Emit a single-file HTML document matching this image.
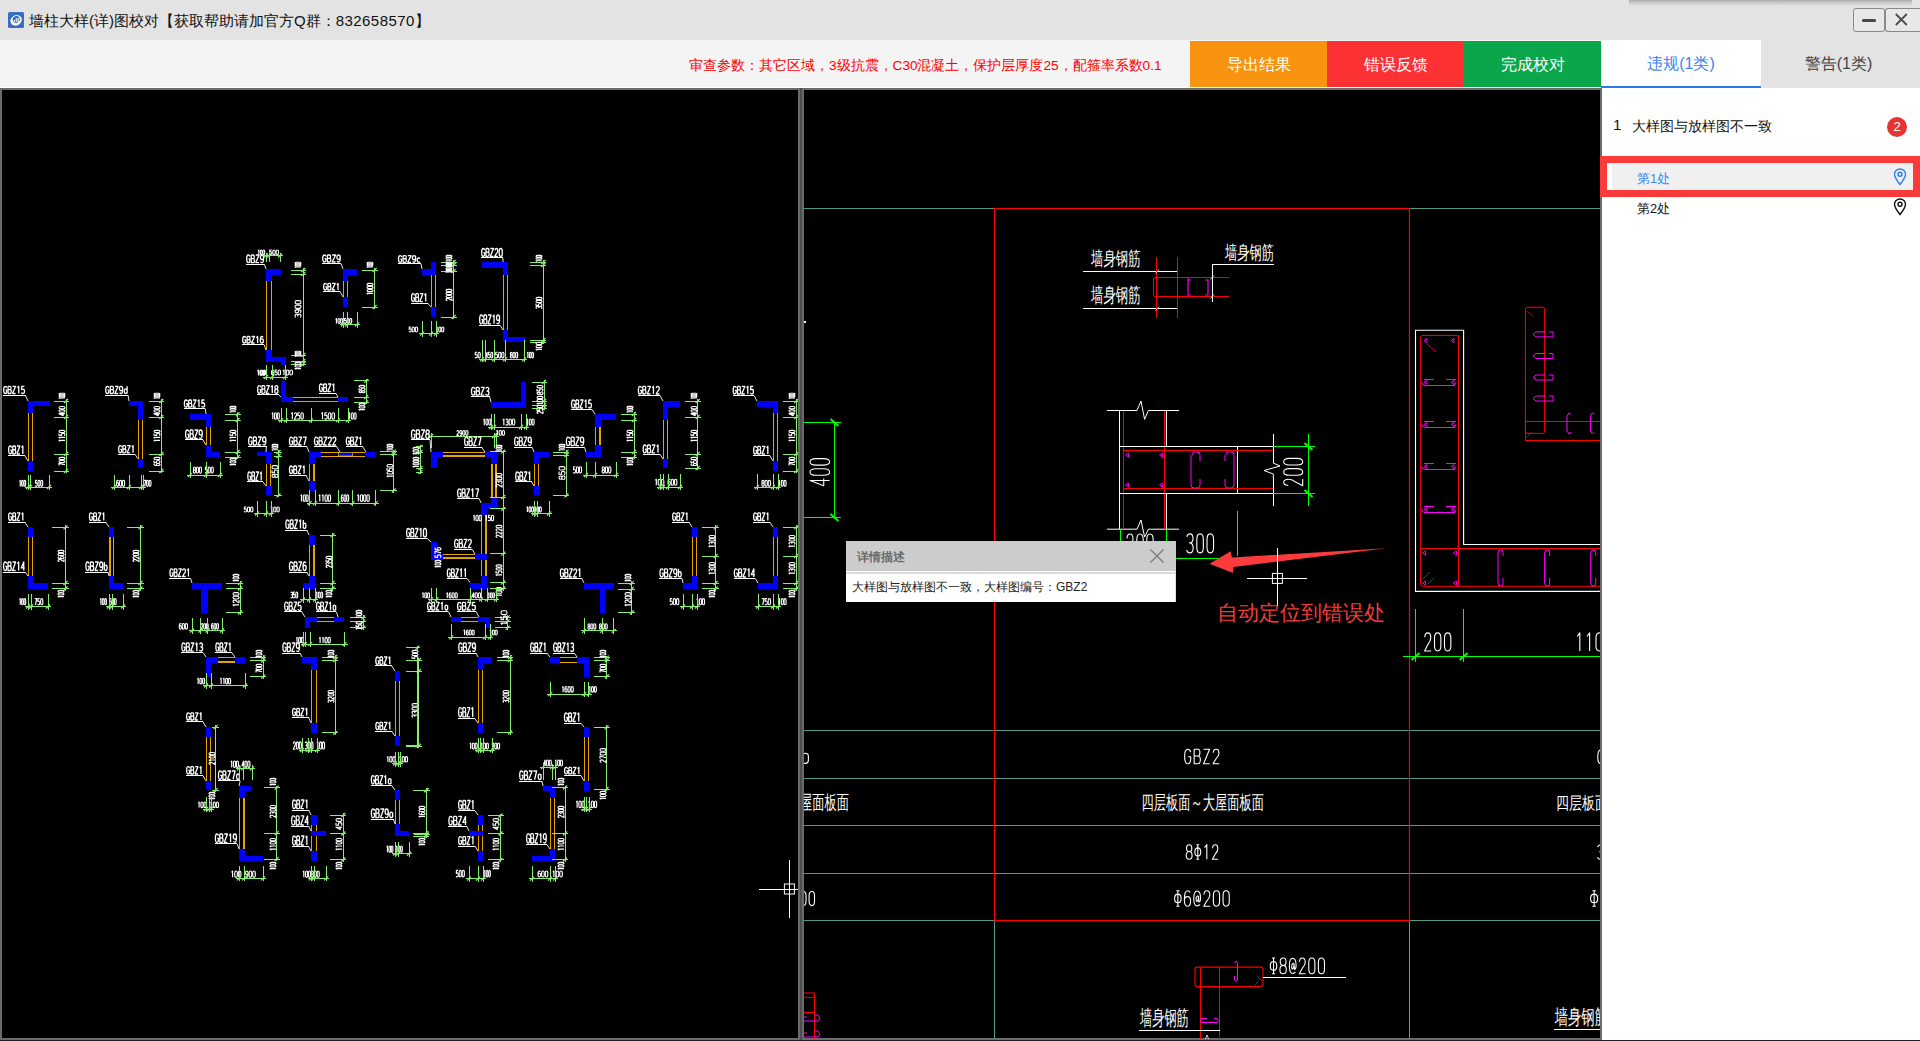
<!DOCTYPE html>
<html><head><meta charset="utf-8">
<style>
*{margin:0;padding:0;box-sizing:border-box}
html,body{width:1920px;height:1041px;overflow:hidden;background:#f4f4f4;font-family:"Liberation Sans",sans-serif}
.abs{position:absolute}
#title{left:0;top:0;width:1920px;height:40px;background:#e3e3e3}
#icon{left:8px;top:12px;width:16px;height:16px;background:#3f6fc0;border-radius:2px}
#icon:before{content:"";position:absolute;left:2px;top:2.5px;width:12px;height:11px;border-radius:50%;background:#fff;transform:rotate(-15deg)}
#icon:after{content:"";position:absolute;left:5px;top:5px;width:6px;height:6px;border-radius:50%;background:#3f6fc0}
#ttext{left:29px;top:11px;font-size:15px;line-height:20px;color:#111;white-space:nowrap}
#shadow{left:1629px;top:0;width:283px;height:6px;background:linear-gradient(#adadad,#c4c4c4 35%,#e3e3e3);filter:blur(0.6px)}
.wbtn{top:8px;height:24px;border:1px solid #8a8a8a;border-radius:3px;background:#e8e8e8}
#bmin{left:1853px;width:32px}
#bmin:after{content:"";position:absolute;left:8px;top:10px;width:14px;height:2.5px;background:#4a4a4a;border-radius:1.2px}
#bclose{left:1885px;width:35px;border-right:none;border-radius:3px 0 0 3px}
#toolbar{left:0;top:40px;width:1920px;height:48px;background:#f4f4f4}
#param{left:689px;top:57px;font-size:13.6px;line-height:18px;color:#f00;white-space:nowrap}
.btn{top:41px;height:46px;color:#fff;font-size:16px;line-height:48px;text-align:center}
#b1{left:1190px;width:137px;background:#f7930f}
#b2{left:1327px;width:137px;background:#fc3133}
#b3{left:1464px;width:137px;background:#0aa64a}
#tab1{left:1601px;top:40px;width:160px;height:48px;background:#fff;color:#3b86ee;font-size:16px;line-height:48px;text-align:center}
#tab1:after{content:"";position:absolute;left:0;top:46px;width:160px;height:2px;background:#2b7ce8}
#tab2{left:1761px;top:40px;width:159px;height:48px;background:#e3e3e3;color:#444;font-size:16px;line-height:48px;text-align:center;text-indent:-4px}
#sep{left:0;top:87px;width:1601px;height:1px;background:#fff}
#lp{left:0;top:88px;width:800px;height:952px;background:#000;border:2px solid #6b6b6b}
#mid{left:800px;top:88px;width:2px;height:952px;background:#4e4e4e}
#rp{left:802px;top:88px;width:800px;height:952px;background:#000;border:2px solid #6b6b6b}
#side{left:1602px;top:88px;width:318px;height:952px;background:#fff}
#taskbar{left:0;top:1040px;width:1920px;height:1px;background:#13202b}
#cad{left:0;top:0;width:1920px;height:1041px}
#popup{left:846px;top:541px;width:330px;height:61px;background:#fff;border-right:1px solid #ddd}
#phead{left:0;top:0;width:330px;height:30px;background:#cccccc}
#phead span{position:absolute;left:11px;top:8px;font-size:12px;line-height:16px;color:#6a6a6a;font-weight:bold}
#pline{left:0;top:31px;width:330px;height:2px;background:#dcdcdc}
#pbody{left:6px;top:38px;font-size:12px;line-height:17px;color:#222;white-space:nowrap}
#arrowtxt{left:1217px;top:599px;font-size:20.7px;line-height:28px;color:#f23c3c;white-space:nowrap}
#redbox{left:1600px;top:156px;width:320px;height:41px;border:7px solid #fc3a3a;border-right-width:7px}
#row1{left:1612px;top:163px;width:301px;height:27px;background:#f0f0f0}
.item{font-size:13.4px;line-height:18px;white-space:nowrap}
#badge{left:1887px;top:117px;width:20px;height:20px;border-radius:50%;background:#e53434;color:#fff;font-size:13px;line-height:20px;text-align:center}
</style></head><body>
<div id="title" class="abs"></div>
<svg class="abs" style="left:8px;top:12px" width="16" height="16"><rect x="0" y="0" width="16" height="16" rx="1.5" fill="#3a6cc0"/><ellipse cx="7.9" cy="8.3" rx="5.9" ry="5" transform="rotate(-30 8 8)" fill="#fff"/><ellipse cx="8.5" cy="7.6" rx="3.6" ry="3.4" transform="rotate(-30 8 8)" fill="#3a6cc0"/><rect x="5.8" y="8" width="1.1" height="1.8" fill="#fff"/><rect x="7.7" y="6.2" width="1.1" height="3.6" fill="#fff"/><rect x="9.6" y="5.8" width="1.1" height="4" fill="#fff"/></svg>
<div id="ttext" class="abs">墙柱大样(详)图校对【获取帮助请加官方Q群：<span style="letter-spacing:0.45px">832658570</span>】</div>
<div id="shadow" class="abs"></div>
<div id="bmin" class="abs wbtn"></div>
<div id="bclose" class="abs wbtn"><svg width="35" height="24" style="position:absolute;left:0;top:-1px"><path d="M9.8 6 L20.8 17 M20.8 6 L9.8 17" stroke="#4a4a4a" stroke-width="1.8"/></svg></div>
<div id="toolbar" class="abs"></div>
<div id="param" class="abs">审查参数：其它区域，3级抗震，C30混凝土，保护层厚度25，配箍率系数0.1</div>
<div id="b1" class="abs btn">导出结果</div>
<div id="b2" class="abs btn">错误反馈</div>
<div id="b3" class="abs btn">完成校对</div>
<div id="tab1" class="abs">违规(1类)</div>
<div id="tab2" class="abs">警告(1类)</div>
<div id="sep" class="abs"></div>
<div id="lp" class="abs"></div>
<div id="mid" class="abs"></div>
<div id="rp" class="abs"></div>
<div id="side" class="abs"></div>
<div id="taskbar" class="abs"></div>
<svg id="cad" class="abs" width="1920" height="1041" viewBox="0 0 1920 1041" text-rendering="geometricPrecision">
<defs><clipPath id="clipL"><rect x="2" y="90" width="796" height="949"/></clipPath><clipPath id="clipR"><rect x="804" y="90" width="796" height="949"/></clipPath></defs>
<g clip-path="url(#clipL)">
<rect x="266" y="269" width="15" height="6" fill="#0000ff" shape-rendering="crispEdges"/>
<rect x="266" y="269" width="6" height="12" fill="#0000ff" shape-rendering="crispEdges"/>
<line x1="266.5" y1="281" x2="266.5" y2="350" stroke="#e8a200" stroke-width="1.1" shape-rendering="crispEdges"/>
<line x1="271.5" y1="281" x2="271.5" y2="350" stroke="#e8a200" stroke-width="1.1" shape-rendering="crispEdges"/>
<rect x="266" y="350" width="6" height="11.5" fill="#0000ff" shape-rendering="crispEdges"/>
<rect x="266" y="356.5" width="20" height="5" fill="#0000ff" shape-rendering="crispEdges"/>
<rect x="281" y="356.5" width="5" height="8.5" fill="#0000ff" shape-rendering="crispEdges"/>
<line x1="303.3" y1="268" x2="303.3" y2="366" stroke="#86f06e" stroke-width="1" shape-rendering="crispEdges"/>
<line x1="291" y1="270" x2="306.3" y2="270" stroke="#86f06e" stroke-width="1" shape-rendering="crispEdges"/>
<line x1="301.3" y1="272" x2="305.3" y2="268" stroke="#86f06e" stroke-width="1.2"/>
<line x1="291" y1="274" x2="306.3" y2="274" stroke="#86f06e" stroke-width="1" shape-rendering="crispEdges"/>
<line x1="301.3" y1="276" x2="305.3" y2="272" stroke="#86f06e" stroke-width="1.2"/>
<line x1="291" y1="355" x2="306.3" y2="355" stroke="#86f06e" stroke-width="1" shape-rendering="crispEdges"/>
<line x1="301.3" y1="357" x2="305.3" y2="353" stroke="#86f06e" stroke-width="1.2"/>
<line x1="291" y1="361" x2="306.3" y2="361" stroke="#86f06e" stroke-width="1" shape-rendering="crispEdges"/>
<line x1="301.3" y1="363" x2="305.3" y2="359" stroke="#86f06e" stroke-width="1.2"/>
<line x1="291" y1="364" x2="306.3" y2="364" stroke="#86f06e" stroke-width="1" shape-rendering="crispEdges"/>
<line x1="301.3" y1="366" x2="305.3" y2="362" stroke="#86f06e" stroke-width="1.2"/>
<g fill="none" stroke="#ffffff" stroke-width="1.3" stroke-linejoin="round"><path transform="translate(246.3,255) scale(4.026,7.600)" d="M0.9 0.2 Q0.8 0 0.5 0 Q0.1 0 0.1 0.5 Q0.1 1 0.5 1 Q0.9 1 0.9 0.62 L0.9 0.52 L0.55 0.52" vector-effect="non-scaling-stroke"/><path transform="translate(250.8,255) scale(4.026,7.600)" d="M0.1 0 L0.1 1 L0.6 1 Q0.92 1 0.92 0.73 Q0.92 0.47 0.6 0.47 L0.1 0.47 M0.6 0.47 Q0.86 0.47 0.86 0.23 Q0.86 0 0.6 0 L0.1 0" vector-effect="non-scaling-stroke"/><path transform="translate(255.4,255) scale(4.026,7.600)" d="M0.1 0 L0.9 0 L0.1 1 L0.9 1" vector-effect="non-scaling-stroke"/><path transform="translate(260,255) scale(4.026,7.600)" d="M0.9 0.35 Q0.9 0.62 0.5 0.62 Q0.1 0.62 0.1 0.31 Q0.1 0 0.5 0 Q0.9 0 0.9 0.4 Q0.9 1 0.5 1 Q0.25 1 0.15 0.88" vector-effect="non-scaling-stroke"/></g>
<line x1="246" y1="264.1" x2="264.3" y2="264.1" stroke="#ffffff" stroke-width="1" shape-rendering="crispEdges"/>
<line x1="264.3" y1="264.1" x2="266" y2="269" stroke="#ffffff" stroke-width="0.9"/>
<g fill="none" stroke="#ffffff" stroke-width="1.3" stroke-linejoin="round"><path transform="translate(242.3,336.5) scale(3.872,6.500)" d="M0.9 0.2 Q0.8 0 0.5 0 Q0.1 0 0.1 0.5 Q0.1 1 0.5 1 Q0.9 1 0.9 0.62 L0.9 0.52 L0.55 0.52" vector-effect="non-scaling-stroke"/><path transform="translate(246.7,336.5) scale(3.872,6.500)" d="M0.1 0 L0.1 1 L0.6 1 Q0.92 1 0.92 0.73 Q0.92 0.47 0.6 0.47 L0.1 0.47 M0.6 0.47 Q0.86 0.47 0.86 0.23 Q0.86 0 0.6 0 L0.1 0" vector-effect="non-scaling-stroke"/><path transform="translate(251.1,336.5) scale(3.872,6.500)" d="M0.1 0 L0.9 0 L0.1 1 L0.9 1" vector-effect="non-scaling-stroke"/><path transform="translate(255.5,336.5) scale(3.872,6.500)" d="M0.22 0.2 L0.55 0 L0.55 1" vector-effect="non-scaling-stroke"/><path transform="translate(259.9,336.5) scale(3.872,6.500)" d="M0.85 0.12 Q0.7 0 0.5 0 Q0.1 0 0.1 0.6 Q0.1 1 0.5 1 Q0.9 1 0.9 0.68 Q0.9 0.38 0.5 0.38 Q0.1 0.38 0.1 0.65" vector-effect="non-scaling-stroke"/></g>
<line x1="242" y1="344.5" x2="264" y2="344.5" stroke="#ffffff" stroke-width="1" shape-rendering="crispEdges"/>
<line x1="264" y1="344.5" x2="266" y2="350" stroke="#ffffff" stroke-width="0.9"/>
<g fill="none" stroke="#ffffff" stroke-width="1.15" stroke-linejoin="round"><path transform="translate(257.6,250) scale(2.250,4.500)" d="M0.22 0.2 L0.55 0 L0.55 1" vector-effect="non-scaling-stroke"/><path transform="translate(260.1,250) scale(2.250,4.500)" d="M0.5 0 Q0.1 0 0.1 0.3 L0.1 0.7 Q0.1 1 0.5 1 Q0.9 1 0.9 0.7 L0.9 0.3 Q0.9 0 0.5 0 Z" vector-effect="non-scaling-stroke"/><path transform="translate(262.6,250) scale(2.250,4.500)" d="M0.5 0 Q0.1 0 0.1 0.3 L0.1 0.7 Q0.1 1 0.5 1 Q0.9 1 0.9 0.7 L0.9 0.3 Q0.9 0 0.5 0 Z" vector-effect="non-scaling-stroke"/></g>
<g fill="none" stroke="#ffffff" stroke-width="1.15" stroke-linejoin="round"><path transform="translate(269.2,250) scale(3.000,4.500)" d="M0.85 0 L0.2 0 L0.15 0.45 Q0.3 0.38 0.5 0.38 Q0.9 0.38 0.9 0.7 Q0.9 1 0.5 1 Q0.2 1 0.1 0.85" vector-effect="non-scaling-stroke"/><path transform="translate(272.5,250) scale(3.000,4.500)" d="M0.5 0 Q0.1 0 0.1 0.3 L0.1 0.7 Q0.1 1 0.5 1 Q0.9 1 0.9 0.7 L0.9 0.3 Q0.9 0 0.5 0 Z" vector-effect="non-scaling-stroke"/><path transform="translate(275.8,250) scale(3.000,4.500)" d="M0.5 0 Q0.1 0 0.1 0.3 L0.1 0.7 Q0.1 1 0.5 1 Q0.9 1 0.9 0.7 L0.9 0.3 Q0.9 0 0.5 0 Z" vector-effect="non-scaling-stroke"/></g>
<line x1="263" y1="255.5" x2="283" y2="255.5" stroke="#86f06e" stroke-width="1" shape-rendering="crispEdges"/>
<line x1="266" y1="262" x2="266" y2="252.5" stroke="#86f06e" stroke-width="1" shape-rendering="crispEdges"/>
<line x1="264" y1="257.5" x2="268" y2="253.5" stroke="#86f06e" stroke-width="1.2"/>
<line x1="269" y1="262" x2="269" y2="252.5" stroke="#86f06e" stroke-width="1" shape-rendering="crispEdges"/>
<line x1="267" y1="257.5" x2="271" y2="253.5" stroke="#86f06e" stroke-width="1.2"/>
<line x1="280" y1="262" x2="280" y2="252.5" stroke="#86f06e" stroke-width="1" shape-rendering="crispEdges"/>
<line x1="278" y1="257.5" x2="282" y2="253.5" stroke="#86f06e" stroke-width="1.2"/>
<g fill="none" stroke="#ffffff" stroke-width="1.15" stroke-linejoin="round" transform="translate(295,268) rotate(-90)"><path transform="translate(0.1,0) scale(1.800,6.000)" d="M0.22 0.2 L0.55 0 L0.55 1" vector-effect="non-scaling-stroke"/><path transform="translate(2.1,0) scale(1.800,6.000)" d="M0.5 0 Q0.1 0 0.1 0.3 L0.1 0.7 Q0.1 1 0.5 1 Q0.9 1 0.9 0.7 L0.9 0.3 Q0.9 0 0.5 0 Z" vector-effect="non-scaling-stroke"/><path transform="translate(4.1,0) scale(1.800,6.000)" d="M0.5 0 Q0.1 0 0.1 0.3 L0.1 0.7 Q0.1 1 0.5 1 Q0.9 1 0.9 0.7 L0.9 0.3 Q0.9 0 0.5 0 Z" vector-effect="non-scaling-stroke"/></g>
<g fill="none" stroke="#ffffff" stroke-width="1.15" stroke-linejoin="round" transform="translate(295,318) rotate(-90)"><path transform="translate(0.2,0) scale(4.050,6.000)" d="M0.12 0.15 Q0.25 0 0.5 0 Q0.88 0 0.88 0.25 Q0.88 0.47 0.45 0.47 Q0.9 0.47 0.9 0.74 Q0.9 1 0.5 1 Q0.2 1 0.1 0.85" vector-effect="non-scaling-stroke"/><path transform="translate(4.7,0) scale(4.050,6.000)" d="M0.9 0.35 Q0.9 0.62 0.5 0.62 Q0.1 0.62 0.1 0.31 Q0.1 0 0.5 0 Q0.9 0 0.9 0.4 Q0.9 1 0.5 1 Q0.25 1 0.15 0.88" vector-effect="non-scaling-stroke"/><path transform="translate(9.2,0) scale(4.050,6.000)" d="M0.5 0 Q0.1 0 0.1 0.3 L0.1 0.7 Q0.1 1 0.5 1 Q0.9 1 0.9 0.7 L0.9 0.3 Q0.9 0 0.5 0 Z" vector-effect="non-scaling-stroke"/><path transform="translate(13.7,0) scale(4.050,6.000)" d="M0.5 0 Q0.1 0 0.1 0.3 L0.1 0.7 Q0.1 1 0.5 1 Q0.9 1 0.9 0.7 L0.9 0.3 Q0.9 0 0.5 0 Z" vector-effect="non-scaling-stroke"/></g>
<g fill="none" stroke="#ffffff" stroke-width="1.15" stroke-linejoin="round" transform="translate(295,357) rotate(-90)"><path transform="translate(0.1,0) scale(1.800,6.000)" d="M0.22 0.2 L0.55 0 L0.55 1" vector-effect="non-scaling-stroke"/><path transform="translate(2.1,0) scale(1.800,6.000)" d="M0.5 0 Q0.1 0 0.1 0.3 L0.1 0.7 Q0.1 1 0.5 1 Q0.9 1 0.9 0.7 L0.9 0.3 Q0.9 0 0.5 0 Z" vector-effect="non-scaling-stroke"/><path transform="translate(4.1,0) scale(1.800,6.000)" d="M0.5 0 Q0.1 0 0.1 0.3 L0.1 0.7 Q0.1 1 0.5 1 Q0.9 1 0.9 0.7 L0.9 0.3 Q0.9 0 0.5 0 Z" vector-effect="non-scaling-stroke"/></g>
<g fill="none" stroke="#ffffff" stroke-width="1.15" stroke-linejoin="round" transform="translate(295,370) rotate(-90)"><path transform="translate(0.1,0) scale(2.400,6.000)" d="M0.22 0.2 L0.55 0 L0.55 1" vector-effect="non-scaling-stroke"/><path transform="translate(2.8,0) scale(2.400,6.000)" d="M0.5 0 Q0.1 0 0.1 0.3 L0.1 0.7 Q0.1 1 0.5 1 Q0.9 1 0.9 0.7 L0.9 0.3 Q0.9 0 0.5 0 Z" vector-effect="non-scaling-stroke"/><path transform="translate(5.5,0) scale(2.400,6.000)" d="M0.5 0 Q0.1 0 0.1 0.3 L0.1 0.7 Q0.1 1 0.5 1 Q0.9 1 0.9 0.7 L0.9 0.3 Q0.9 0 0.5 0 Z" vector-effect="non-scaling-stroke"/></g>
<g fill="none" stroke="#ffffff" stroke-width="1.15" stroke-linejoin="round"><path transform="translate(257.1,370) scale(2.700,5.000)" d="M0.22 0.2 L0.55 0 L0.55 1" vector-effect="non-scaling-stroke"/><path transform="translate(260.1,370) scale(2.700,5.000)" d="M0.5 0 Q0.1 0 0.1 0.3 L0.1 0.7 Q0.1 1 0.5 1 Q0.9 1 0.9 0.7 L0.9 0.3 Q0.9 0 0.5 0 Z" vector-effect="non-scaling-stroke"/><path transform="translate(263.1,370) scale(2.700,5.000)" d="M0.5 0 Q0.1 0 0.1 0.3 L0.1 0.7 Q0.1 1 0.5 1 Q0.9 1 0.9 0.7 L0.9 0.3 Q0.9 0 0.5 0 Z" vector-effect="non-scaling-stroke"/></g>
<g fill="none" stroke="#ffffff" stroke-width="1.15" stroke-linejoin="round"><path transform="translate(271.2,370) scale(3.000,5.000)" d="M0.85 0.12 Q0.7 0 0.5 0 Q0.1 0 0.1 0.6 Q0.1 1 0.5 1 Q0.9 1 0.9 0.68 Q0.9 0.38 0.5 0.38 Q0.1 0.38 0.1 0.65" vector-effect="non-scaling-stroke"/><path transform="translate(274.5,370) scale(3.000,5.000)" d="M0.85 0 L0.2 0 L0.15 0.45 Q0.3 0.38 0.5 0.38 Q0.9 0.38 0.9 0.7 Q0.9 1 0.5 1 Q0.2 1 0.1 0.85" vector-effect="non-scaling-stroke"/><path transform="translate(277.8,370) scale(3.000,5.000)" d="M0.5 0 Q0.1 0 0.1 0.3 L0.1 0.7 Q0.1 1 0.5 1 Q0.9 1 0.9 0.7 L0.9 0.3 Q0.9 0 0.5 0 Z" vector-effect="non-scaling-stroke"/></g>
<g fill="none" stroke="#ffffff" stroke-width="1.15" stroke-linejoin="round"><path transform="translate(282.2,370) scale(3.300,5.000)" d="M0.22 0.2 L0.55 0 L0.55 1" vector-effect="non-scaling-stroke"/><path transform="translate(285.9,370) scale(3.300,5.000)" d="M0.5 0 Q0.1 0 0.1 0.3 L0.1 0.7 Q0.1 1 0.5 1 Q0.9 1 0.9 0.7 L0.9 0.3 Q0.9 0 0.5 0 Z" vector-effect="non-scaling-stroke"/><path transform="translate(289.5,370) scale(3.300,5.000)" d="M0.5 0 Q0.1 0 0.1 0.3 L0.1 0.7 Q0.1 1 0.5 1 Q0.9 1 0.9 0.7 L0.9 0.3 Q0.9 0 0.5 0 Z" vector-effect="non-scaling-stroke"/></g>
<line x1="263" y1="377" x2="288" y2="377" stroke="#86f06e" stroke-width="1" shape-rendering="crispEdges"/>
<line x1="266" y1="365" x2="266" y2="380" stroke="#86f06e" stroke-width="1" shape-rendering="crispEdges"/>
<line x1="264" y1="379" x2="268" y2="375" stroke="#86f06e" stroke-width="1.2"/>
<line x1="272" y1="365" x2="272" y2="380" stroke="#86f06e" stroke-width="1" shape-rendering="crispEdges"/>
<line x1="270" y1="379" x2="274" y2="375" stroke="#86f06e" stroke-width="1.2"/>
<line x1="285" y1="365" x2="285" y2="380" stroke="#86f06e" stroke-width="1" shape-rendering="crispEdges"/>
<line x1="283" y1="379" x2="287" y2="375" stroke="#86f06e" stroke-width="1.2"/>
<rect x="343" y="269" width="14" height="6" fill="#0000ff" shape-rendering="crispEdges"/>
<rect x="343" y="269" width="5" height="12" fill="#0000ff" shape-rendering="crispEdges"/>
<line x1="343.5" y1="281" x2="343.5" y2="297" stroke="#e8a200" stroke-width="1.1" shape-rendering="crispEdges"/>
<line x1="347.5" y1="281" x2="347.5" y2="297" stroke="#e8a200" stroke-width="1.1" shape-rendering="crispEdges"/>
<rect x="343" y="297" width="5" height="10" fill="#0000ff" shape-rendering="crispEdges"/>
<line x1="374.6" y1="268" x2="374.6" y2="309" stroke="#86f06e" stroke-width="1" shape-rendering="crispEdges"/>
<line x1="362" y1="270" x2="377.6" y2="270" stroke="#86f06e" stroke-width="1" shape-rendering="crispEdges"/>
<line x1="372.6" y1="272" x2="376.6" y2="268" stroke="#86f06e" stroke-width="1.2"/>
<line x1="362" y1="307" x2="377.6" y2="307" stroke="#86f06e" stroke-width="1" shape-rendering="crispEdges"/>
<line x1="372.6" y1="309" x2="376.6" y2="305" stroke="#86f06e" stroke-width="1.2"/>
<g fill="none" stroke="#ffffff" stroke-width="1.3" stroke-linejoin="round"><path transform="translate(322.3,255) scale(4.180,7.000)" d="M0.9 0.2 Q0.8 0 0.5 0 Q0.1 0 0.1 0.5 Q0.1 1 0.5 1 Q0.9 1 0.9 0.62 L0.9 0.52 L0.55 0.52" vector-effect="non-scaling-stroke"/><path transform="translate(327,255) scale(4.180,7.000)" d="M0.1 0 L0.1 1 L0.6 1 Q0.92 1 0.92 0.73 Q0.92 0.47 0.6 0.47 L0.1 0.47 M0.6 0.47 Q0.86 0.47 0.86 0.23 Q0.86 0 0.6 0 L0.1 0" vector-effect="non-scaling-stroke"/><path transform="translate(331.8,255) scale(4.180,7.000)" d="M0.1 0 L0.9 0 L0.1 1 L0.9 1" vector-effect="non-scaling-stroke"/><path transform="translate(336.5,255) scale(4.180,7.000)" d="M0.9 0.35 Q0.9 0.62 0.5 0.62 Q0.1 0.62 0.1 0.31 Q0.1 0 0.5 0 Q0.9 0 0.9 0.4 Q0.9 1 0.5 1 Q0.25 1 0.15 0.88" vector-effect="non-scaling-stroke"/></g>
<line x1="322" y1="263.5" x2="341" y2="263.5" stroke="#ffffff" stroke-width="1" shape-rendering="crispEdges"/>
<line x1="341" y1="263.5" x2="343" y2="269" stroke="#ffffff" stroke-width="0.9"/>
<g fill="none" stroke="#ffffff" stroke-width="1.3" stroke-linejoin="round"><path transform="translate(323.3,283.4) scale(3.740,6.600)" d="M0.9 0.2 Q0.8 0 0.5 0 Q0.1 0 0.1 0.5 Q0.1 1 0.5 1 Q0.9 1 0.9 0.62 L0.9 0.52 L0.55 0.52" vector-effect="non-scaling-stroke"/><path transform="translate(327.5,283.4) scale(3.740,6.600)" d="M0.1 0 L0.1 1 L0.6 1 Q0.92 1 0.92 0.73 Q0.92 0.47 0.6 0.47 L0.1 0.47 M0.6 0.47 Q0.86 0.47 0.86 0.23 Q0.86 0 0.6 0 L0.1 0" vector-effect="non-scaling-stroke"/><path transform="translate(331.8,283.4) scale(3.740,6.600)" d="M0.1 0 L0.9 0 L0.1 1 L0.9 1" vector-effect="non-scaling-stroke"/><path transform="translate(336,283.4) scale(3.740,6.600)" d="M0.22 0.2 L0.55 0 L0.55 1" vector-effect="non-scaling-stroke"/></g>
<line x1="323" y1="291.5" x2="340" y2="291.5" stroke="#ffffff" stroke-width="1" shape-rendering="crispEdges"/>
<line x1="340" y1="291.5" x2="343" y2="297" stroke="#ffffff" stroke-width="0.9"/>
<g fill="none" stroke="#ffffff" stroke-width="1.15" stroke-linejoin="round" transform="translate(367,268) rotate(-90)"><path transform="translate(0.1,0) scale(1.800,6.000)" d="M0.22 0.2 L0.55 0 L0.55 1" vector-effect="non-scaling-stroke"/><path transform="translate(2.1,0) scale(1.800,6.000)" d="M0.5 0 Q0.1 0 0.1 0.3 L0.1 0.7 Q0.1 1 0.5 1 Q0.9 1 0.9 0.7 L0.9 0.3 Q0.9 0 0.5 0 Z" vector-effect="non-scaling-stroke"/><path transform="translate(4.1,0) scale(1.800,6.000)" d="M0.5 0 Q0.1 0 0.1 0.3 L0.1 0.7 Q0.1 1 0.5 1 Q0.9 1 0.9 0.7 L0.9 0.3 Q0.9 0 0.5 0 Z" vector-effect="non-scaling-stroke"/></g>
<g fill="none" stroke="#ffffff" stroke-width="1.15" stroke-linejoin="round" transform="translate(367,295) rotate(-90)"><path transform="translate(0.2,0) scale(2.700,6.000)" d="M0.22 0.2 L0.55 0 L0.55 1" vector-effect="non-scaling-stroke"/><path transform="translate(3.1,0) scale(2.700,6.000)" d="M0.5 0 Q0.1 0 0.1 0.3 L0.1 0.7 Q0.1 1 0.5 1 Q0.9 1 0.9 0.7 L0.9 0.3 Q0.9 0 0.5 0 Z" vector-effect="non-scaling-stroke"/><path transform="translate(6.2,0) scale(2.700,6.000)" d="M0.5 0 Q0.1 0 0.1 0.3 L0.1 0.7 Q0.1 1 0.5 1 Q0.9 1 0.9 0.7 L0.9 0.3 Q0.9 0 0.5 0 Z" vector-effect="non-scaling-stroke"/><path transform="translate(9.2,0) scale(2.700,6.000)" d="M0.5 0 Q0.1 0 0.1 0.3 L0.1 0.7 Q0.1 1 0.5 1 Q0.9 1 0.9 0.7 L0.9 0.3 Q0.9 0 0.5 0 Z" vector-effect="non-scaling-stroke"/></g>
<g fill="none" stroke="#ffffff" stroke-width="1.15" stroke-linejoin="round"><path transform="translate(335.1,318.5) scale(2.400,5.000)" d="M0.22 0.2 L0.55 0 L0.55 1" vector-effect="non-scaling-stroke"/><path transform="translate(337.8,318.5) scale(2.400,5.000)" d="M0.5 0 Q0.1 0 0.1 0.3 L0.1 0.7 Q0.1 1 0.5 1 Q0.9 1 0.9 0.7 L0.9 0.3 Q0.9 0 0.5 0 Z" vector-effect="non-scaling-stroke"/><path transform="translate(340.5,318.5) scale(2.400,5.000)" d="M0.5 0 Q0.1 0 0.1 0.3 L0.1 0.7 Q0.1 1 0.5 1 Q0.9 1 0.9 0.7 L0.9 0.3 Q0.9 0 0.5 0 Z" vector-effect="non-scaling-stroke"/></g>
<g fill="none" stroke="#ffffff" stroke-width="1.15" stroke-linejoin="round"><path transform="translate(344.1,318.5) scale(2.400,5.000)" d="M0.85 0 L0.2 0 L0.15 0.45 Q0.3 0.38 0.5 0.38 Q0.9 0.38 0.9 0.7 Q0.9 1 0.5 1 Q0.2 1 0.1 0.85" vector-effect="non-scaling-stroke"/><path transform="translate(346.8,318.5) scale(2.400,5.000)" d="M0.5 0 Q0.1 0 0.1 0.3 L0.1 0.7 Q0.1 1 0.5 1 Q0.9 1 0.9 0.7 L0.9 0.3 Q0.9 0 0.5 0 Z" vector-effect="non-scaling-stroke"/><path transform="translate(349.5,318.5) scale(2.400,5.000)" d="M0.5 0 Q0.1 0 0.1 0.3 L0.1 0.7 Q0.1 1 0.5 1 Q0.9 1 0.9 0.7 L0.9 0.3 Q0.9 0 0.5 0 Z" vector-effect="non-scaling-stroke"/></g>
<line x1="340" y1="324.5" x2="360" y2="324.5" stroke="#86f06e" stroke-width="1" shape-rendering="crispEdges"/>
<line x1="343" y1="312" x2="343" y2="327.5" stroke="#86f06e" stroke-width="1" shape-rendering="crispEdges"/>
<line x1="341" y1="326.5" x2="345" y2="322.5" stroke="#86f06e" stroke-width="1.2"/>
<line x1="347" y1="312" x2="347" y2="327.5" stroke="#86f06e" stroke-width="1" shape-rendering="crispEdges"/>
<line x1="345" y1="326.5" x2="349" y2="322.5" stroke="#86f06e" stroke-width="1.2"/>
<line x1="357" y1="312" x2="357" y2="327.5" stroke="#86f06e" stroke-width="1" shape-rendering="crispEdges"/>
<line x1="355" y1="326.5" x2="359" y2="322.5" stroke="#86f06e" stroke-width="1.2"/>
<rect x="431" y="262" width="5" height="13" fill="#0000ff" shape-rendering="crispEdges"/>
<rect x="422" y="269" width="14" height="6" fill="#0000ff" shape-rendering="crispEdges"/>
<line x1="431.5" y1="275" x2="431.5" y2="307" stroke="#e8a200" stroke-width="1.1" shape-rendering="crispEdges"/>
<line x1="435.5" y1="275" x2="435.5" y2="307" stroke="#e8a200" stroke-width="1.1" shape-rendering="crispEdges"/>
<rect x="431" y="307" width="5" height="10" fill="#0000ff" shape-rendering="crispEdges"/>
<line x1="453.7" y1="260" x2="453.7" y2="319" stroke="#86f06e" stroke-width="1" shape-rendering="crispEdges"/>
<line x1="441" y1="262" x2="456.7" y2="262" stroke="#86f06e" stroke-width="1" shape-rendering="crispEdges"/>
<line x1="451.7" y1="264" x2="455.7" y2="260" stroke="#86f06e" stroke-width="1.2"/>
<line x1="441" y1="265" x2="456.7" y2="265" stroke="#86f06e" stroke-width="1" shape-rendering="crispEdges"/>
<line x1="451.7" y1="267" x2="455.7" y2="263" stroke="#86f06e" stroke-width="1.2"/>
<line x1="441" y1="271" x2="456.7" y2="271" stroke="#86f06e" stroke-width="1" shape-rendering="crispEdges"/>
<line x1="451.7" y1="273" x2="455.7" y2="269" stroke="#86f06e" stroke-width="1.2"/>
<line x1="441" y1="317" x2="456.7" y2="317" stroke="#86f06e" stroke-width="1" shape-rendering="crispEdges"/>
<line x1="451.7" y1="319" x2="455.7" y2="315" stroke="#86f06e" stroke-width="1.2"/>
<g fill="none" stroke="#ffffff" stroke-width="1.3" stroke-linejoin="round"><path transform="translate(398.1,255.6) scale(4.083,6.700)" d="M0.9 0.2 Q0.8 0 0.5 0 Q0.1 0 0.1 0.5 Q0.1 1 0.5 1 Q0.9 1 0.9 0.62 L0.9 0.52 L0.55 0.52" vector-effect="non-scaling-stroke"/><path transform="translate(402.7,255.6) scale(4.083,6.700)" d="M0.1 0 L0.1 1 L0.6 1 Q0.92 1 0.92 0.73 Q0.92 0.47 0.6 0.47 L0.1 0.47 M0.6 0.47 Q0.86 0.47 0.86 0.23 Q0.86 0 0.6 0 L0.1 0" vector-effect="non-scaling-stroke"/><path transform="translate(407.4,255.6) scale(4.083,6.700)" d="M0.1 0 L0.9 0 L0.1 1 L0.9 1" vector-effect="non-scaling-stroke"/><path transform="translate(412,255.6) scale(4.083,6.700)" d="M0.9 0.35 Q0.9 0.62 0.5 0.62 Q0.1 0.62 0.1 0.31 Q0.1 0 0.5 0 Q0.9 0 0.9 0.4 Q0.9 1 0.5 1 Q0.25 1 0.15 0.88" vector-effect="non-scaling-stroke"/><path transform="translate(416.6,255.6) scale(4.083,6.700)" d="M0.85 0.45 Q0.7 0.36 0.5 0.36 Q0.15 0.36 0.15 0.68 Q0.15 1 0.5 1 Q0.7 1 0.85 0.9" vector-effect="non-scaling-stroke"/></g>
<line x1="397.8" y1="263.8" x2="421" y2="263.8" stroke="#ffffff" stroke-width="1" shape-rendering="crispEdges"/>
<line x1="421" y1="263.8" x2="422" y2="269" stroke="#ffffff" stroke-width="0.9"/>
<g fill="none" stroke="#ffffff" stroke-width="1.3" stroke-linejoin="round"><path transform="translate(411.2,293.7) scale(3.652,7.900)" d="M0.9 0.2 Q0.8 0 0.5 0 Q0.1 0 0.1 0.5 Q0.1 1 0.5 1 Q0.9 1 0.9 0.62 L0.9 0.52 L0.55 0.52" vector-effect="non-scaling-stroke"/><path transform="translate(415.4,293.7) scale(3.652,7.900)" d="M0.1 0 L0.1 1 L0.6 1 Q0.92 1 0.92 0.73 Q0.92 0.47 0.6 0.47 L0.1 0.47 M0.6 0.47 Q0.86 0.47 0.86 0.23 Q0.86 0 0.6 0 L0.1 0" vector-effect="non-scaling-stroke"/><path transform="translate(419.5,293.7) scale(3.652,7.900)" d="M0.1 0 L0.9 0 L0.1 1 L0.9 1" vector-effect="non-scaling-stroke"/><path transform="translate(423.7,293.7) scale(3.652,7.900)" d="M0.22 0.2 L0.55 0 L0.55 1" vector-effect="non-scaling-stroke"/></g>
<line x1="411" y1="303.1" x2="427.6" y2="303.1" stroke="#ffffff" stroke-width="1" shape-rendering="crispEdges"/>
<line x1="427.6" y1="303.1" x2="431" y2="307" stroke="#ffffff" stroke-width="0.9"/>
<g fill="none" stroke="#ffffff" stroke-width="1.15" stroke-linejoin="round" transform="translate(446,262) rotate(-90)"><path transform="translate(0.1,0) scale(2.100,6.000)" d="M0.22 0.2 L0.55 0 L0.55 1" vector-effect="non-scaling-stroke"/><path transform="translate(2.5,0) scale(2.100,6.000)" d="M0.5 0 Q0.1 0 0.1 0.3 L0.1 0.7 Q0.1 1 0.5 1 Q0.9 1 0.9 0.7 L0.9 0.3 Q0.9 0 0.5 0 Z" vector-effect="non-scaling-stroke"/><path transform="translate(4.8,0) scale(2.100,6.000)" d="M0.5 0 Q0.1 0 0.1 0.3 L0.1 0.7 Q0.1 1 0.5 1 Q0.9 1 0.9 0.7 L0.9 0.3 Q0.9 0 0.5 0 Z" vector-effect="non-scaling-stroke"/></g>
<g fill="none" stroke="#ffffff" stroke-width="1.15" stroke-linejoin="round" transform="translate(446,273) rotate(-90)"><path transform="translate(0.1,0) scale(1.650,6.000)" d="M0.22 0.2 L0.55 0 L0.55 1" vector-effect="non-scaling-stroke"/><path transform="translate(1.9,0) scale(1.650,6.000)" d="M0.5 0 Q0.1 0 0.1 0.3 L0.1 0.7 Q0.1 1 0.5 1 Q0.9 1 0.9 0.7 L0.9 0.3 Q0.9 0 0.5 0 Z" vector-effect="non-scaling-stroke"/><path transform="translate(3.8,0) scale(1.650,6.000)" d="M0.5 0 Q0.1 0 0.1 0.3 L0.1 0.7 Q0.1 1 0.5 1 Q0.9 1 0.9 0.7 L0.9 0.3 Q0.9 0 0.5 0 Z" vector-effect="non-scaling-stroke"/><path transform="translate(5.6,0) scale(1.650,6.000)" d="M0.22 0.2 L0.55 0 L0.55 1" vector-effect="non-scaling-stroke"/><path transform="translate(7.4,0) scale(1.650,6.000)" d="M0.5 0 Q0.1 0 0.1 0.3 L0.1 0.7 Q0.1 1 0.5 1 Q0.9 1 0.9 0.7 L0.9 0.3 Q0.9 0 0.5 0 Z" vector-effect="non-scaling-stroke"/><path transform="translate(9.3,0) scale(1.650,6.000)" d="M0.5 0 Q0.1 0 0.1 0.3 L0.1 0.7 Q0.1 1 0.5 1 Q0.9 1 0.9 0.7 L0.9 0.3 Q0.9 0 0.5 0 Z" vector-effect="non-scaling-stroke"/></g>
<g fill="none" stroke="#ffffff" stroke-width="1.15" stroke-linejoin="round" transform="translate(446,301) rotate(-90)"><path transform="translate(0.2,0) scale(2.700,6.000)" d="M0.12 0.24 Q0.15 0 0.5 0 Q0.88 0 0.88 0.27 Q0.88 0.45 0.5 0.65 L0.1 1 L0.92 1" vector-effect="non-scaling-stroke"/><path transform="translate(3.1,0) scale(2.700,6.000)" d="M0.5 0 Q0.1 0 0.1 0.3 L0.1 0.7 Q0.1 1 0.5 1 Q0.9 1 0.9 0.7 L0.9 0.3 Q0.9 0 0.5 0 Z" vector-effect="non-scaling-stroke"/><path transform="translate(6.2,0) scale(2.700,6.000)" d="M0.5 0 Q0.1 0 0.1 0.3 L0.1 0.7 Q0.1 1 0.5 1 Q0.9 1 0.9 0.7 L0.9 0.3 Q0.9 0 0.5 0 Z" vector-effect="non-scaling-stroke"/><path transform="translate(9.2,0) scale(2.700,6.000)" d="M0.5 0 Q0.1 0 0.1 0.3 L0.1 0.7 Q0.1 1 0.5 1 Q0.9 1 0.9 0.7 L0.9 0.3 Q0.9 0 0.5 0 Z" vector-effect="non-scaling-stroke"/></g>
<g fill="none" stroke="#ffffff" stroke-width="1.15" stroke-linejoin="round"><path transform="translate(408.7,327) scale(2.850,5.000)" d="M0.85 0 L0.2 0 L0.15 0.45 Q0.3 0.38 0.5 0.38 Q0.9 0.38 0.9 0.7 Q0.9 1 0.5 1 Q0.2 1 0.1 0.85" vector-effect="non-scaling-stroke"/><path transform="translate(411.8,327) scale(2.850,5.000)" d="M0.5 0 Q0.1 0 0.1 0.3 L0.1 0.7 Q0.1 1 0.5 1 Q0.9 1 0.9 0.7 L0.9 0.3 Q0.9 0 0.5 0 Z" vector-effect="non-scaling-stroke"/><path transform="translate(415,327) scale(2.850,5.000)" d="M0.5 0 Q0.1 0 0.1 0.3 L0.1 0.7 Q0.1 1 0.5 1 Q0.9 1 0.9 0.7 L0.9 0.3 Q0.9 0 0.5 0 Z" vector-effect="non-scaling-stroke"/></g>
<g fill="none" stroke="#ffffff" stroke-width="1.15" stroke-linejoin="round"><path transform="translate(435.6,327) scale(2.610,5.000)" d="M0.22 0.2 L0.55 0 L0.55 1" vector-effect="non-scaling-stroke"/><path transform="translate(438.5,327) scale(2.610,5.000)" d="M0.5 0 Q0.1 0 0.1 0.3 L0.1 0.7 Q0.1 1 0.5 1 Q0.9 1 0.9 0.7 L0.9 0.3 Q0.9 0 0.5 0 Z" vector-effect="non-scaling-stroke"/><path transform="translate(441.4,327) scale(2.610,5.000)" d="M0.5 0 Q0.1 0 0.1 0.3 L0.1 0.7 Q0.1 1 0.5 1 Q0.9 1 0.9 0.7 L0.9 0.3 Q0.9 0 0.5 0 Z" vector-effect="non-scaling-stroke"/></g>
<line x1="419" y1="333.6" x2="439" y2="333.6" stroke="#86f06e" stroke-width="1" shape-rendering="crispEdges"/>
<line x1="422" y1="321" x2="422" y2="336.6" stroke="#86f06e" stroke-width="1" shape-rendering="crispEdges"/>
<line x1="420" y1="335.6" x2="424" y2="331.6" stroke="#86f06e" stroke-width="1.2"/>
<line x1="431" y1="321" x2="431" y2="336.6" stroke="#86f06e" stroke-width="1" shape-rendering="crispEdges"/>
<line x1="429" y1="335.6" x2="433" y2="331.6" stroke="#86f06e" stroke-width="1.2"/>
<line x1="436" y1="321" x2="436" y2="336.6" stroke="#86f06e" stroke-width="1" shape-rendering="crispEdges"/>
<line x1="434" y1="335.6" x2="438" y2="331.6" stroke="#86f06e" stroke-width="1.2"/>
<rect x="482" y="262" width="26" height="6" fill="#0000ff" shape-rendering="crispEdges"/>
<rect x="503" y="262" width="5" height="13" fill="#0000ff" shape-rendering="crispEdges"/>
<line x1="503.3" y1="275" x2="503.3" y2="330" stroke="#e8a200" stroke-width="1.1" shape-rendering="crispEdges"/>
<line x1="507.6" y1="275" x2="507.6" y2="330" stroke="#e8a200" stroke-width="1.1" shape-rendering="crispEdges"/>
<rect x="503" y="330" width="5" height="12" fill="#0000ff" shape-rendering="crispEdges"/>
<rect x="503" y="337.3" width="22.8" height="4.7" fill="#0000ff" shape-rendering="crispEdges"/>
<line x1="543.3" y1="260" x2="543.3" y2="344" stroke="#86f06e" stroke-width="1" shape-rendering="crispEdges"/>
<line x1="530" y1="262" x2="546.3" y2="262" stroke="#86f06e" stroke-width="1" shape-rendering="crispEdges"/>
<line x1="541.3" y1="264" x2="545.3" y2="260" stroke="#86f06e" stroke-width="1.2"/>
<line x1="530" y1="265" x2="546.3" y2="265" stroke="#86f06e" stroke-width="1" shape-rendering="crispEdges"/>
<line x1="541.3" y1="267" x2="545.3" y2="263" stroke="#86f06e" stroke-width="1.2"/>
<line x1="530" y1="340" x2="546.3" y2="340" stroke="#86f06e" stroke-width="1" shape-rendering="crispEdges"/>
<line x1="541.3" y1="342" x2="545.3" y2="338" stroke="#86f06e" stroke-width="1.2"/>
<line x1="530" y1="342" x2="546.3" y2="342" stroke="#86f06e" stroke-width="1" shape-rendering="crispEdges"/>
<line x1="541.3" y1="344" x2="545.3" y2="340" stroke="#86f06e" stroke-width="1.2"/>
<g fill="none" stroke="#ffffff" stroke-width="1.3" stroke-linejoin="round"><path transform="translate(481.3,248.5) scale(3.854,7.900)" d="M0.9 0.2 Q0.8 0 0.5 0 Q0.1 0 0.1 0.5 Q0.1 1 0.5 1 Q0.9 1 0.9 0.62 L0.9 0.52 L0.55 0.52" vector-effect="non-scaling-stroke"/><path transform="translate(485.6,248.5) scale(3.854,7.900)" d="M0.1 0 L0.1 1 L0.6 1 Q0.92 1 0.92 0.73 Q0.92 0.47 0.6 0.47 L0.1 0.47 M0.6 0.47 Q0.86 0.47 0.86 0.23 Q0.86 0 0.6 0 L0.1 0" vector-effect="non-scaling-stroke"/><path transform="translate(490,248.5) scale(3.854,7.900)" d="M0.1 0 L0.9 0 L0.1 1 L0.9 1" vector-effect="non-scaling-stroke"/><path transform="translate(494.4,248.5) scale(3.854,7.900)" d="M0.12 0.24 Q0.15 0 0.5 0 Q0.88 0 0.88 0.27 Q0.88 0.45 0.5 0.65 L0.1 1 L0.92 1" vector-effect="non-scaling-stroke"/><path transform="translate(498.8,248.5) scale(3.854,7.900)" d="M0.5 0 Q0.1 0 0.1 0.3 L0.1 0.7 Q0.1 1 0.5 1 Q0.9 1 0.9 0.7 L0.9 0.3 Q0.9 0 0.5 0 Z" vector-effect="non-scaling-stroke"/></g>
<line x1="481" y1="257.9" x2="502.9" y2="257.9" stroke="#ffffff" stroke-width="1" shape-rendering="crispEdges"/>
<line x1="502.9" y1="257.9" x2="503" y2="262" stroke="#ffffff" stroke-width="0.9"/>
<g fill="none" stroke="#ffffff" stroke-width="1.3" stroke-linejoin="round"><path transform="translate(479.3,315) scale(3.731,8.800)" d="M0.9 0.2 Q0.8 0 0.5 0 Q0.1 0 0.1 0.5 Q0.1 1 0.5 1 Q0.9 1 0.9 0.62 L0.9 0.52 L0.55 0.52" vector-effect="non-scaling-stroke"/><path transform="translate(483.5,315) scale(3.731,8.800)" d="M0.1 0 L0.1 1 L0.6 1 Q0.92 1 0.92 0.73 Q0.92 0.47 0.6 0.47 L0.1 0.47 M0.6 0.47 Q0.86 0.47 0.86 0.23 Q0.86 0 0.6 0 L0.1 0" vector-effect="non-scaling-stroke"/><path transform="translate(487.7,315) scale(3.731,8.800)" d="M0.1 0 L0.9 0 L0.1 1 L0.9 1" vector-effect="non-scaling-stroke"/><path transform="translate(492,315) scale(3.731,8.800)" d="M0.22 0.2 L0.55 0 L0.55 1" vector-effect="non-scaling-stroke"/><path transform="translate(496.2,315) scale(3.731,8.800)" d="M0.9 0.35 Q0.9 0.62 0.5 0.62 Q0.1 0.62 0.1 0.31 Q0.1 0 0.5 0 Q0.9 0 0.9 0.4 Q0.9 1 0.5 1 Q0.25 1 0.15 0.88" vector-effect="non-scaling-stroke"/></g>
<line x1="479" y1="325.3" x2="500.2" y2="325.3" stroke="#ffffff" stroke-width="1" shape-rendering="crispEdges"/>
<line x1="500.2" y1="325.3" x2="503" y2="330" stroke="#ffffff" stroke-width="0.9"/>
<g fill="none" stroke="#ffffff" stroke-width="1.15" stroke-linejoin="round" transform="translate(536,262) rotate(-90)"><path transform="translate(0.1,0) scale(2.100,6.000)" d="M0.22 0.2 L0.55 0 L0.55 1" vector-effect="non-scaling-stroke"/><path transform="translate(2.5,0) scale(2.100,6.000)" d="M0.5 0 Q0.1 0 0.1 0.3 L0.1 0.7 Q0.1 1 0.5 1 Q0.9 1 0.9 0.7 L0.9 0.3 Q0.9 0 0.5 0 Z" vector-effect="non-scaling-stroke"/><path transform="translate(4.8,0) scale(2.100,6.000)" d="M0.5 0 Q0.1 0 0.1 0.3 L0.1 0.7 Q0.1 1 0.5 1 Q0.9 1 0.9 0.7 L0.9 0.3 Q0.9 0 0.5 0 Z" vector-effect="non-scaling-stroke"/></g>
<g fill="none" stroke="#ffffff" stroke-width="1.15" stroke-linejoin="round" transform="translate(536,309) rotate(-90)"><path transform="translate(0.2,0) scale(2.700,6.000)" d="M0.12 0.15 Q0.25 0 0.5 0 Q0.88 0 0.88 0.25 Q0.88 0.47 0.45 0.47 Q0.9 0.47 0.9 0.74 Q0.9 1 0.5 1 Q0.2 1 0.1 0.85" vector-effect="non-scaling-stroke"/><path transform="translate(3.1,0) scale(2.700,6.000)" d="M0.85 0 L0.2 0 L0.15 0.45 Q0.3 0.38 0.5 0.38 Q0.9 0.38 0.9 0.7 Q0.9 1 0.5 1 Q0.2 1 0.1 0.85" vector-effect="non-scaling-stroke"/><path transform="translate(6.2,0) scale(2.700,6.000)" d="M0.5 0 Q0.1 0 0.1 0.3 L0.1 0.7 Q0.1 1 0.5 1 Q0.9 1 0.9 0.7 L0.9 0.3 Q0.9 0 0.5 0 Z" vector-effect="non-scaling-stroke"/><path transform="translate(9.2,0) scale(2.700,6.000)" d="M0.5 0 Q0.1 0 0.1 0.3 L0.1 0.7 Q0.1 1 0.5 1 Q0.9 1 0.9 0.7 L0.9 0.3 Q0.9 0 0.5 0 Z" vector-effect="non-scaling-stroke"/></g>
<g fill="none" stroke="#ffffff" stroke-width="1.15" stroke-linejoin="round" transform="translate(536,351) rotate(-90)"><path transform="translate(0.2,0) scale(2.700,6.000)" d="M0.22 0.2 L0.55 0 L0.55 1" vector-effect="non-scaling-stroke"/><path transform="translate(3.1,0) scale(2.700,6.000)" d="M0.5 0 Q0.1 0 0.1 0.3 L0.1 0.7 Q0.1 1 0.5 1 Q0.9 1 0.9 0.7 L0.9 0.3 Q0.9 0 0.5 0 Z" vector-effect="non-scaling-stroke"/><path transform="translate(6.2,0) scale(2.700,6.000)" d="M0.5 0 Q0.1 0 0.1 0.3 L0.1 0.7 Q0.1 1 0.5 1 Q0.9 1 0.9 0.7 L0.9 0.3 Q0.9 0 0.5 0 Z" vector-effect="non-scaling-stroke"/></g>
<g fill="none" stroke="#ffffff" stroke-width="1.15" stroke-linejoin="round"><path transform="translate(474.8,352.3) scale(2.700,5.700)" d="M0.85 0 L0.2 0 L0.15 0.45 Q0.3 0.38 0.5 0.38 Q0.9 0.38 0.9 0.7 Q0.9 1 0.5 1 Q0.2 1 0.1 0.85" vector-effect="non-scaling-stroke"/><path transform="translate(477.8,352.3) scale(2.700,5.700)" d="M0.5 0 Q0.1 0 0.1 0.3 L0.1 0.7 Q0.1 1 0.5 1 Q0.9 1 0.9 0.7 L0.9 0.3 Q0.9 0 0.5 0 Z" vector-effect="non-scaling-stroke"/></g>
<g fill="none" stroke="#ffffff" stroke-width="1.15" stroke-linejoin="round"><path transform="translate(485.5,352.3) scale(2.280,5.700)" d="M0.7 1 L0.7 0 L0.06 0.7 L0.95 0.7" vector-effect="non-scaling-stroke"/><path transform="translate(488.1,352.3) scale(2.280,5.700)" d="M0.85 0 L0.2 0 L0.15 0.45 Q0.3 0.38 0.5 0.38 Q0.9 0.38 0.9 0.7 Q0.9 1 0.5 1 Q0.2 1 0.1 0.85" vector-effect="non-scaling-stroke"/><path transform="translate(490.6,352.3) scale(2.280,5.700)" d="M0.5 0 Q0.1 0 0.1 0.3 L0.1 0.7 Q0.1 1 0.5 1 Q0.9 1 0.9 0.7 L0.9 0.3 Q0.9 0 0.5 0 Z" vector-effect="non-scaling-stroke"/></g>
<g fill="none" stroke="#ffffff" stroke-width="1.15" stroke-linejoin="round"><path transform="translate(495.2,352.3) scale(2.820,5.700)" d="M0.85 0 L0.2 0 L0.15 0.45 Q0.3 0.38 0.5 0.38 Q0.9 0.38 0.9 0.7 Q0.9 1 0.5 1 Q0.2 1 0.1 0.85" vector-effect="non-scaling-stroke"/><path transform="translate(498.3,352.3) scale(2.820,5.700)" d="M0.5 0 Q0.1 0 0.1 0.3 L0.1 0.7 Q0.1 1 0.5 1 Q0.9 1 0.9 0.7 L0.9 0.3 Q0.9 0 0.5 0 Z" vector-effect="non-scaling-stroke"/><path transform="translate(501.4,352.3) scale(2.820,5.700)" d="M0.5 0 Q0.1 0 0.1 0.3 L0.1 0.7 Q0.1 1 0.5 1 Q0.9 1 0.9 0.7 L0.9 0.3 Q0.9 0 0.5 0 Z" vector-effect="non-scaling-stroke"/></g>
<g fill="none" stroke="#ffffff" stroke-width="1.15" stroke-linejoin="round"><path transform="translate(510.1,352.3) scale(2.400,5.700)" d="M0.5 0.47 Q0.12 0.47 0.12 0.24 Q0.12 0 0.5 0 Q0.88 0 0.88 0.24 Q0.88 0.47 0.5 0.47 Q0.08 0.47 0.08 0.74 Q0.08 1 0.5 1 Q0.92 1 0.92 0.74 Q0.92 0.47 0.5 0.47" vector-effect="non-scaling-stroke"/><path transform="translate(512.8,352.3) scale(2.400,5.700)" d="M0.5 0 Q0.1 0 0.1 0.3 L0.1 0.7 Q0.1 1 0.5 1 Q0.9 1 0.9 0.7 L0.9 0.3 Q0.9 0 0.5 0 Z" vector-effect="non-scaling-stroke"/><path transform="translate(515.5,352.3) scale(2.400,5.700)" d="M0.5 0 Q0.1 0 0.1 0.3 L0.1 0.7 Q0.1 1 0.5 1 Q0.9 1 0.9 0.7 L0.9 0.3 Q0.9 0 0.5 0 Z" vector-effect="non-scaling-stroke"/></g>
<g fill="none" stroke="#ffffff" stroke-width="1.15" stroke-linejoin="round"><path transform="translate(526.7,352.3) scale(2.160,5.700)" d="M0.22 0.2 L0.55 0 L0.55 1" vector-effect="non-scaling-stroke"/><path transform="translate(529.1,352.3) scale(2.160,5.700)" d="M0.5 0 Q0.1 0 0.1 0.3 L0.1 0.7 Q0.1 1 0.5 1 Q0.9 1 0.9 0.7 L0.9 0.3 Q0.9 0 0.5 0 Z" vector-effect="non-scaling-stroke"/><path transform="translate(531.5,352.3) scale(2.160,5.700)" d="M0.5 0 Q0.1 0 0.1 0.3 L0.1 0.7 Q0.1 1 0.5 1 Q0.9 1 0.9 0.7 L0.9 0.3 Q0.9 0 0.5 0 Z" vector-effect="non-scaling-stroke"/></g>
<line x1="479" y1="359.4" x2="527" y2="359.4" stroke="#86f06e" stroke-width="1" shape-rendering="crispEdges"/>
<line x1="482" y1="340" x2="482" y2="362.4" stroke="#86f06e" stroke-width="1" shape-rendering="crispEdges"/>
<line x1="480" y1="361.4" x2="484" y2="357.4" stroke="#86f06e" stroke-width="1.2"/>
<line x1="485" y1="340" x2="485" y2="362.4" stroke="#86f06e" stroke-width="1" shape-rendering="crispEdges"/>
<line x1="483" y1="361.4" x2="487" y2="357.4" stroke="#86f06e" stroke-width="1.2"/>
<line x1="494" y1="340" x2="494" y2="362.4" stroke="#86f06e" stroke-width="1" shape-rendering="crispEdges"/>
<line x1="492" y1="361.4" x2="496" y2="357.4" stroke="#86f06e" stroke-width="1.2"/>
<line x1="505" y1="340" x2="505" y2="362.4" stroke="#86f06e" stroke-width="1" shape-rendering="crispEdges"/>
<line x1="503" y1="361.4" x2="507" y2="357.4" stroke="#86f06e" stroke-width="1.2"/>
<line x1="524" y1="340" x2="524" y2="362.4" stroke="#86f06e" stroke-width="1" shape-rendering="crispEdges"/>
<line x1="522" y1="361.4" x2="526" y2="357.4" stroke="#86f06e" stroke-width="1.2"/>
<rect x="28" y="401" width="21" height="5" fill="#0000ff" shape-rendering="crispEdges"/>
<rect x="28" y="401" width="5" height="11.7" fill="#0000ff" shape-rendering="crispEdges"/>
<line x1="28.8" y1="412.7" x2="28.8" y2="461.2" stroke="#e8a200" stroke-width="1.1" shape-rendering="crispEdges"/>
<line x1="32.2" y1="412.7" x2="32.2" y2="461.2" stroke="#e8a200" stroke-width="1.1" shape-rendering="crispEdges"/>
<rect x="28" y="461.2" width="5" height="9.6" fill="#0000ff" shape-rendering="crispEdges"/>
<line x1="66" y1="399" x2="66" y2="473" stroke="#86f06e" stroke-width="1" shape-rendering="crispEdges"/>
<line x1="54" y1="401" x2="69" y2="401" stroke="#86f06e" stroke-width="1" shape-rendering="crispEdges"/>
<line x1="64" y1="403" x2="68" y2="399" stroke="#86f06e" stroke-width="1.2"/>
<line x1="54" y1="417" x2="69" y2="417" stroke="#86f06e" stroke-width="1" shape-rendering="crispEdges"/>
<line x1="64" y1="419" x2="68" y2="415" stroke="#86f06e" stroke-width="1.2"/>
<line x1="54" y1="454" x2="69" y2="454" stroke="#86f06e" stroke-width="1" shape-rendering="crispEdges"/>
<line x1="64" y1="456" x2="68" y2="452" stroke="#86f06e" stroke-width="1.2"/>
<line x1="54" y1="471" x2="69" y2="471" stroke="#86f06e" stroke-width="1" shape-rendering="crispEdges"/>
<line x1="64" y1="473" x2="68" y2="469" stroke="#86f06e" stroke-width="1.2"/>
<g fill="none" stroke="#ffffff" stroke-width="1.3" stroke-linejoin="round"><path transform="translate(3.3,386.3) scale(3.907,7.200)" d="M0.9 0.2 Q0.8 0 0.5 0 Q0.1 0 0.1 0.5 Q0.1 1 0.5 1 Q0.9 1 0.9 0.62 L0.9 0.52 L0.55 0.52" vector-effect="non-scaling-stroke"/><path transform="translate(7.7,386.3) scale(3.907,7.200)" d="M0.1 0 L0.1 1 L0.6 1 Q0.92 1 0.92 0.73 Q0.92 0.47 0.6 0.47 L0.1 0.47 M0.6 0.47 Q0.86 0.47 0.86 0.23 Q0.86 0 0.6 0 L0.1 0" vector-effect="non-scaling-stroke"/><path transform="translate(12.1,386.3) scale(3.907,7.200)" d="M0.1 0 L0.9 0 L0.1 1 L0.9 1" vector-effect="non-scaling-stroke"/><path transform="translate(16.6,386.3) scale(3.907,7.200)" d="M0.22 0.2 L0.55 0 L0.55 1" vector-effect="non-scaling-stroke"/><path transform="translate(21,386.3) scale(3.907,7.200)" d="M0.85 0 L0.2 0 L0.15 0.45 Q0.3 0.38 0.5 0.38 Q0.9 0.38 0.9 0.7 Q0.9 1 0.5 1 Q0.2 1 0.1 0.85" vector-effect="non-scaling-stroke"/></g>
<line x1="3" y1="395" x2="25.2" y2="395" stroke="#ffffff" stroke-width="1" shape-rendering="crispEdges"/>
<line x1="25.2" y1="395" x2="28" y2="401" stroke="#ffffff" stroke-width="0.9"/>
<g fill="none" stroke="#ffffff" stroke-width="1.3" stroke-linejoin="round"><path transform="translate(8.3,446) scale(3.674,8.000)" d="M0.9 0.2 Q0.8 0 0.5 0 Q0.1 0 0.1 0.5 Q0.1 1 0.5 1 Q0.9 1 0.9 0.62 L0.9 0.52 L0.55 0.52" vector-effect="non-scaling-stroke"/><path transform="translate(12.4,446) scale(3.674,8.000)" d="M0.1 0 L0.1 1 L0.6 1 Q0.92 1 0.92 0.73 Q0.92 0.47 0.6 0.47 L0.1 0.47 M0.6 0.47 Q0.86 0.47 0.86 0.23 Q0.86 0 0.6 0 L0.1 0" vector-effect="non-scaling-stroke"/><path transform="translate(16.6,446) scale(3.674,8.000)" d="M0.1 0 L0.9 0 L0.1 1 L0.9 1" vector-effect="non-scaling-stroke"/><path transform="translate(20.8,446) scale(3.674,8.000)" d="M0.22 0.2 L0.55 0 L0.55 1" vector-effect="non-scaling-stroke"/></g>
<line x1="8" y1="455.5" x2="24.7" y2="455.5" stroke="#ffffff" stroke-width="1" shape-rendering="crispEdges"/>
<line x1="24.7" y1="455.5" x2="28" y2="461" stroke="#ffffff" stroke-width="0.9"/>
<g fill="none" stroke="#ffffff" stroke-width="1.15" stroke-linejoin="round" transform="translate(59,399) rotate(-90)"><path transform="translate(0.1,0) scale(1.800,6.000)" d="M0.22 0.2 L0.55 0 L0.55 1" vector-effect="non-scaling-stroke"/><path transform="translate(2.1,0) scale(1.800,6.000)" d="M0.5 0 Q0.1 0 0.1 0.3 L0.1 0.7 Q0.1 1 0.5 1 Q0.9 1 0.9 0.7 L0.9 0.3 Q0.9 0 0.5 0 Z" vector-effect="non-scaling-stroke"/><path transform="translate(4.1,0) scale(1.800,6.000)" d="M0.5 0 Q0.1 0 0.1 0.3 L0.1 0.7 Q0.1 1 0.5 1 Q0.9 1 0.9 0.7 L0.9 0.3 Q0.9 0 0.5 0 Z" vector-effect="non-scaling-stroke"/></g>
<g fill="none" stroke="#ffffff" stroke-width="1.15" stroke-linejoin="round" transform="translate(59,416) rotate(-90)"><path transform="translate(0.2,0) scale(3.000,6.000)" d="M0.7 1 L0.7 0 L0.06 0.7 L0.95 0.7" vector-effect="non-scaling-stroke"/><path transform="translate(3.5,0) scale(3.000,6.000)" d="M0.5 0 Q0.1 0 0.1 0.3 L0.1 0.7 Q0.1 1 0.5 1 Q0.9 1 0.9 0.7 L0.9 0.3 Q0.9 0 0.5 0 Z" vector-effect="non-scaling-stroke"/><path transform="translate(6.8,0) scale(3.000,6.000)" d="M0.5 0 Q0.1 0 0.1 0.3 L0.1 0.7 Q0.1 1 0.5 1 Q0.9 1 0.9 0.7 L0.9 0.3 Q0.9 0 0.5 0 Z" vector-effect="non-scaling-stroke"/></g>
<g fill="none" stroke="#ffffff" stroke-width="1.15" stroke-linejoin="round" transform="translate(59,442) rotate(-90)"><path transform="translate(0.2,0) scale(2.700,6.000)" d="M0.22 0.2 L0.55 0 L0.55 1" vector-effect="non-scaling-stroke"/><path transform="translate(3.1,0) scale(2.700,6.000)" d="M0.22 0.2 L0.55 0 L0.55 1" vector-effect="non-scaling-stroke"/><path transform="translate(6.2,0) scale(2.700,6.000)" d="M0.85 0 L0.2 0 L0.15 0.45 Q0.3 0.38 0.5 0.38 Q0.9 0.38 0.9 0.7 Q0.9 1 0.5 1 Q0.2 1 0.1 0.85" vector-effect="non-scaling-stroke"/><path transform="translate(9.2,0) scale(2.700,6.000)" d="M0.5 0 Q0.1 0 0.1 0.3 L0.1 0.7 Q0.1 1 0.5 1 Q0.9 1 0.9 0.7 L0.9 0.3 Q0.9 0 0.5 0 Z" vector-effect="non-scaling-stroke"/></g>
<g fill="none" stroke="#ffffff" stroke-width="1.15" stroke-linejoin="round" transform="translate(59,466) rotate(-90)"><path transform="translate(0.2,0) scale(2.700,6.000)" d="M0.1 0 L0.9 0 L0.4 1" vector-effect="non-scaling-stroke"/><path transform="translate(3.1,0) scale(2.700,6.000)" d="M0.5 0 Q0.1 0 0.1 0.3 L0.1 0.7 Q0.1 1 0.5 1 Q0.9 1 0.9 0.7 L0.9 0.3 Q0.9 0 0.5 0 Z" vector-effect="non-scaling-stroke"/><path transform="translate(6.2,0) scale(2.700,6.000)" d="M0.5 0 Q0.1 0 0.1 0.3 L0.1 0.7 Q0.1 1 0.5 1 Q0.9 1 0.9 0.7 L0.9 0.3 Q0.9 0 0.5 0 Z" vector-effect="non-scaling-stroke"/></g>
<g fill="none" stroke="#ffffff" stroke-width="1.15" stroke-linejoin="round"><path transform="translate(19.1,480.4) scale(2.100,6.000)" d="M0.22 0.2 L0.55 0 L0.55 1" vector-effect="non-scaling-stroke"/><path transform="translate(21.4,480.4) scale(2.100,6.000)" d="M0.5 0 Q0.1 0 0.1 0.3 L0.1 0.7 Q0.1 1 0.5 1 Q0.9 1 0.9 0.7 L0.9 0.3 Q0.9 0 0.5 0 Z" vector-effect="non-scaling-stroke"/><path transform="translate(23.8,480.4) scale(2.100,6.000)" d="M0.5 0 Q0.1 0 0.1 0.3 L0.1 0.7 Q0.1 1 0.5 1 Q0.9 1 0.9 0.7 L0.9 0.3 Q0.9 0 0.5 0 Z" vector-effect="non-scaling-stroke"/></g>
<g fill="none" stroke="#ffffff" stroke-width="1.15" stroke-linejoin="round"><path transform="translate(35.1,480.4) scale(2.400,6.000)" d="M0.85 0 L0.2 0 L0.15 0.45 Q0.3 0.38 0.5 0.38 Q0.9 0.38 0.9 0.7 Q0.9 1 0.5 1 Q0.2 1 0.1 0.85" vector-effect="non-scaling-stroke"/><path transform="translate(37.8,480.4) scale(2.400,6.000)" d="M0.5 0 Q0.1 0 0.1 0.3 L0.1 0.7 Q0.1 1 0.5 1 Q0.9 1 0.9 0.7 L0.9 0.3 Q0.9 0 0.5 0 Z" vector-effect="non-scaling-stroke"/><path transform="translate(40.5,480.4) scale(2.400,6.000)" d="M0.5 0 Q0.1 0 0.1 0.3 L0.1 0.7 Q0.1 1 0.5 1 Q0.9 1 0.9 0.7 L0.9 0.3 Q0.9 0 0.5 0 Z" vector-effect="non-scaling-stroke"/></g>
<line x1="25" y1="487" x2="52" y2="487" stroke="#86f06e" stroke-width="1" shape-rendering="crispEdges"/>
<line x1="28" y1="475" x2="28" y2="490" stroke="#86f06e" stroke-width="1" shape-rendering="crispEdges"/>
<line x1="26" y1="489" x2="30" y2="485" stroke="#86f06e" stroke-width="1.2"/>
<line x1="30" y1="475" x2="30" y2="490" stroke="#86f06e" stroke-width="1" shape-rendering="crispEdges"/>
<line x1="28" y1="489" x2="32" y2="485" stroke="#86f06e" stroke-width="1.2"/>
<line x1="49" y1="475" x2="49" y2="490" stroke="#86f06e" stroke-width="1" shape-rendering="crispEdges"/>
<line x1="47" y1="489" x2="51" y2="485" stroke="#86f06e" stroke-width="1.2"/>
<rect x="129" y="401" width="14.3" height="5" fill="#0000ff" shape-rendering="crispEdges"/>
<rect x="138" y="401" width="5.3" height="19" fill="#0000ff" shape-rendering="crispEdges"/>
<line x1="138.8" y1="420" x2="138.8" y2="458.8" stroke="#e8a200" stroke-width="1.1" shape-rendering="crispEdges"/>
<line x1="142.4" y1="420" x2="142.4" y2="458.8" stroke="#e8a200" stroke-width="1.1" shape-rendering="crispEdges"/>
<rect x="138" y="458.8" width="5.3" height="9.6" fill="#0000ff" shape-rendering="crispEdges"/>
<line x1="161.3" y1="399" x2="161.3" y2="473" stroke="#86f06e" stroke-width="1" shape-rendering="crispEdges"/>
<line x1="149" y1="401" x2="164.3" y2="401" stroke="#86f06e" stroke-width="1" shape-rendering="crispEdges"/>
<line x1="159.3" y1="403" x2="163.3" y2="399" stroke="#86f06e" stroke-width="1.2"/>
<line x1="149" y1="417" x2="164.3" y2="417" stroke="#86f06e" stroke-width="1" shape-rendering="crispEdges"/>
<line x1="159.3" y1="419" x2="163.3" y2="415" stroke="#86f06e" stroke-width="1.2"/>
<line x1="149" y1="454" x2="164.3" y2="454" stroke="#86f06e" stroke-width="1" shape-rendering="crispEdges"/>
<line x1="159.3" y1="456" x2="163.3" y2="452" stroke="#86f06e" stroke-width="1.2"/>
<line x1="149" y1="471" x2="164.3" y2="471" stroke="#86f06e" stroke-width="1" shape-rendering="crispEdges"/>
<line x1="159.3" y1="473" x2="163.3" y2="469" stroke="#86f06e" stroke-width="1.2"/>
<g fill="none" stroke="#ffffff" stroke-width="1.3" stroke-linejoin="round"><path transform="translate(105.3,386.3) scale(4.048,7.200)" d="M0.9 0.2 Q0.8 0 0.5 0 Q0.1 0 0.1 0.5 Q0.1 1 0.5 1 Q0.9 1 0.9 0.62 L0.9 0.52 L0.55 0.52" vector-effect="non-scaling-stroke"/><path transform="translate(109.9,386.3) scale(4.048,7.200)" d="M0.1 0 L0.1 1 L0.6 1 Q0.92 1 0.92 0.73 Q0.92 0.47 0.6 0.47 L0.1 0.47 M0.6 0.47 Q0.86 0.47 0.86 0.23 Q0.86 0 0.6 0 L0.1 0" vector-effect="non-scaling-stroke"/><path transform="translate(114.5,386.3) scale(4.048,7.200)" d="M0.1 0 L0.9 0 L0.1 1 L0.9 1" vector-effect="non-scaling-stroke"/><path transform="translate(119.1,386.3) scale(4.048,7.200)" d="M0.9 0.35 Q0.9 0.62 0.5 0.62 Q0.1 0.62 0.1 0.31 Q0.1 0 0.5 0 Q0.9 0 0.9 0.4 Q0.9 1 0.5 1 Q0.25 1 0.15 0.88" vector-effect="non-scaling-stroke"/><path transform="translate(123.7,386.3) scale(4.048,7.200)" d="M0.85 0 L0.85 1 M0.85 0.55 Q0.7 0.36 0.5 0.36 Q0.15 0.36 0.15 0.68 Q0.15 1 0.5 1 Q0.7 1 0.85 0.85" vector-effect="non-scaling-stroke"/></g>
<line x1="105" y1="395" x2="128" y2="395" stroke="#ffffff" stroke-width="1" shape-rendering="crispEdges"/>
<line x1="128" y1="395" x2="129" y2="401" stroke="#ffffff" stroke-width="0.9"/>
<g fill="none" stroke="#ffffff" stroke-width="1.3" stroke-linejoin="round"><path transform="translate(118.3,445.6) scale(3.740,7.200)" d="M0.9 0.2 Q0.8 0 0.5 0 Q0.1 0 0.1 0.5 Q0.1 1 0.5 1 Q0.9 1 0.9 0.62 L0.9 0.52 L0.55 0.52" vector-effect="non-scaling-stroke"/><path transform="translate(122.5,445.6) scale(3.740,7.200)" d="M0.1 0 L0.1 1 L0.6 1 Q0.92 1 0.92 0.73 Q0.92 0.47 0.6 0.47 L0.1 0.47 M0.6 0.47 Q0.86 0.47 0.86 0.23 Q0.86 0 0.6 0 L0.1 0" vector-effect="non-scaling-stroke"/><path transform="translate(126.8,445.6) scale(3.740,7.200)" d="M0.1 0 L0.9 0 L0.1 1 L0.9 1" vector-effect="non-scaling-stroke"/><path transform="translate(131,445.6) scale(3.740,7.200)" d="M0.22 0.2 L0.55 0 L0.55 1" vector-effect="non-scaling-stroke"/></g>
<line x1="118" y1="454.3" x2="135" y2="454.3" stroke="#ffffff" stroke-width="1" shape-rendering="crispEdges"/>
<line x1="135" y1="454.3" x2="138" y2="458.8" stroke="#ffffff" stroke-width="0.9"/>
<g fill="none" stroke="#ffffff" stroke-width="1.15" stroke-linejoin="round" transform="translate(154,399) rotate(-90)"><path transform="translate(0.1,0) scale(1.800,6.000)" d="M0.22 0.2 L0.55 0 L0.55 1" vector-effect="non-scaling-stroke"/><path transform="translate(2.1,0) scale(1.800,6.000)" d="M0.5 0 Q0.1 0 0.1 0.3 L0.1 0.7 Q0.1 1 0.5 1 Q0.9 1 0.9 0.7 L0.9 0.3 Q0.9 0 0.5 0 Z" vector-effect="non-scaling-stroke"/><path transform="translate(4.1,0) scale(1.800,6.000)" d="M0.5 0 Q0.1 0 0.1 0.3 L0.1 0.7 Q0.1 1 0.5 1 Q0.9 1 0.9 0.7 L0.9 0.3 Q0.9 0 0.5 0 Z" vector-effect="non-scaling-stroke"/></g>
<g fill="none" stroke="#ffffff" stroke-width="1.15" stroke-linejoin="round" transform="translate(154,416) rotate(-90)"><path transform="translate(0.2,0) scale(3.000,6.000)" d="M0.7 1 L0.7 0 L0.06 0.7 L0.95 0.7" vector-effect="non-scaling-stroke"/><path transform="translate(3.5,0) scale(3.000,6.000)" d="M0.5 0 Q0.1 0 0.1 0.3 L0.1 0.7 Q0.1 1 0.5 1 Q0.9 1 0.9 0.7 L0.9 0.3 Q0.9 0 0.5 0 Z" vector-effect="non-scaling-stroke"/><path transform="translate(6.8,0) scale(3.000,6.000)" d="M0.5 0 Q0.1 0 0.1 0.3 L0.1 0.7 Q0.1 1 0.5 1 Q0.9 1 0.9 0.7 L0.9 0.3 Q0.9 0 0.5 0 Z" vector-effect="non-scaling-stroke"/></g>
<g fill="none" stroke="#ffffff" stroke-width="1.15" stroke-linejoin="round" transform="translate(154,442) rotate(-90)"><path transform="translate(0.2,0) scale(2.700,6.000)" d="M0.22 0.2 L0.55 0 L0.55 1" vector-effect="non-scaling-stroke"/><path transform="translate(3.1,0) scale(2.700,6.000)" d="M0.22 0.2 L0.55 0 L0.55 1" vector-effect="non-scaling-stroke"/><path transform="translate(6.2,0) scale(2.700,6.000)" d="M0.85 0 L0.2 0 L0.15 0.45 Q0.3 0.38 0.5 0.38 Q0.9 0.38 0.9 0.7 Q0.9 1 0.5 1 Q0.2 1 0.1 0.85" vector-effect="non-scaling-stroke"/><path transform="translate(9.2,0) scale(2.700,6.000)" d="M0.5 0 Q0.1 0 0.1 0.3 L0.1 0.7 Q0.1 1 0.5 1 Q0.9 1 0.9 0.7 L0.9 0.3 Q0.9 0 0.5 0 Z" vector-effect="non-scaling-stroke"/></g>
<g fill="none" stroke="#ffffff" stroke-width="1.15" stroke-linejoin="round" transform="translate(154,466) rotate(-90)"><path transform="translate(0.2,0) scale(2.700,6.000)" d="M0.85 0.12 Q0.7 0 0.5 0 Q0.1 0 0.1 0.6 Q0.1 1 0.5 1 Q0.9 1 0.9 0.68 Q0.9 0.38 0.5 0.38 Q0.1 0.38 0.1 0.65" vector-effect="non-scaling-stroke"/><path transform="translate(3.1,0) scale(2.700,6.000)" d="M0.85 0 L0.2 0 L0.15 0.45 Q0.3 0.38 0.5 0.38 Q0.9 0.38 0.9 0.7 Q0.9 1 0.5 1 Q0.2 1 0.1 0.85" vector-effect="non-scaling-stroke"/><path transform="translate(6.2,0) scale(2.700,6.000)" d="M0.5 0 Q0.1 0 0.1 0.3 L0.1 0.7 Q0.1 1 0.5 1 Q0.9 1 0.9 0.7 L0.9 0.3 Q0.9 0 0.5 0 Z" vector-effect="non-scaling-stroke"/></g>
<g fill="none" stroke="#ffffff" stroke-width="1.15" stroke-linejoin="round"><path transform="translate(116.2,480.4) scale(2.700,6.000)" d="M0.85 0.12 Q0.7 0 0.5 0 Q0.1 0 0.1 0.6 Q0.1 1 0.5 1 Q0.9 1 0.9 0.68 Q0.9 0.38 0.5 0.38 Q0.1 0.38 0.1 0.65" vector-effect="non-scaling-stroke"/><path transform="translate(119.2,480.4) scale(2.700,6.000)" d="M0.5 0 Q0.1 0 0.1 0.3 L0.1 0.7 Q0.1 1 0.5 1 Q0.9 1 0.9 0.7 L0.9 0.3 Q0.9 0 0.5 0 Z" vector-effect="non-scaling-stroke"/><path transform="translate(122.2,480.4) scale(2.700,6.000)" d="M0.5 0 Q0.1 0 0.1 0.3 L0.1 0.7 Q0.1 1 0.5 1 Q0.9 1 0.9 0.7 L0.9 0.3 Q0.9 0 0.5 0 Z" vector-effect="non-scaling-stroke"/></g>
<g fill="none" stroke="#ffffff" stroke-width="1.15" stroke-linejoin="round"><path transform="translate(143.7,480.4) scale(2.310,6.000)" d="M0.1 0 L0.9 0 L0.4 1" vector-effect="non-scaling-stroke"/><path transform="translate(146.3,480.4) scale(2.310,6.000)" d="M0.5 0 Q0.1 0 0.1 0.3 L0.1 0.7 Q0.1 1 0.5 1 Q0.9 1 0.9 0.7 L0.9 0.3 Q0.9 0 0.5 0 Z" vector-effect="non-scaling-stroke"/><path transform="translate(148.9,480.4) scale(2.310,6.000)" d="M0.5 0 Q0.1 0 0.1 0.3 L0.1 0.7 Q0.1 1 0.5 1 Q0.9 1 0.9 0.7 L0.9 0.3 Q0.9 0 0.5 0 Z" vector-effect="non-scaling-stroke"/></g>
<line x1="111" y1="487" x2="146" y2="487" stroke="#86f06e" stroke-width="1" shape-rendering="crispEdges"/>
<line x1="114" y1="475" x2="114" y2="490" stroke="#86f06e" stroke-width="1" shape-rendering="crispEdges"/>
<line x1="112" y1="489" x2="116" y2="485" stroke="#86f06e" stroke-width="1.2"/>
<line x1="129" y1="475" x2="129" y2="490" stroke="#86f06e" stroke-width="1" shape-rendering="crispEdges"/>
<line x1="127" y1="489" x2="131" y2="485" stroke="#86f06e" stroke-width="1.2"/>
<line x1="141" y1="475" x2="141" y2="490" stroke="#86f06e" stroke-width="1" shape-rendering="crispEdges"/>
<line x1="139" y1="489" x2="143" y2="485" stroke="#86f06e" stroke-width="1.2"/>
<line x1="143" y1="475" x2="143" y2="490" stroke="#86f06e" stroke-width="1" shape-rendering="crispEdges"/>
<line x1="141" y1="489" x2="145" y2="485" stroke="#86f06e" stroke-width="1.2"/>
<rect x="189.7" y="414.4" width="21.6" height="5.6" fill="#0000ff" shape-rendering="crispEdges"/>
<rect x="206" y="414.4" width="5.3" height="12.7" fill="#0000ff" shape-rendering="crispEdges"/>
<line x1="206.7" y1="427.1" x2="206.7" y2="444.9" stroke="#e8a200" stroke-width="1.1" shape-rendering="crispEdges"/>
<line x1="210.3" y1="427.1" x2="210.3" y2="444.9" stroke="#e8a200" stroke-width="1.1" shape-rendering="crispEdges"/>
<rect x="206" y="444.9" width="5.3" height="12" fill="#0000ff" shape-rendering="crispEdges"/>
<rect x="206" y="452" width="13.7" height="4.9" fill="#0000ff" shape-rendering="crispEdges"/>
<line x1="237.7" y1="412.4" x2="237.7" y2="459" stroke="#86f06e" stroke-width="1" shape-rendering="crispEdges"/>
<line x1="225" y1="414.4" x2="240.7" y2="414.4" stroke="#86f06e" stroke-width="1" shape-rendering="crispEdges"/>
<line x1="235.7" y1="416.4" x2="239.7" y2="412.4" stroke="#86f06e" stroke-width="1.2"/>
<line x1="225" y1="420" x2="240.7" y2="420" stroke="#86f06e" stroke-width="1" shape-rendering="crispEdges"/>
<line x1="235.7" y1="422" x2="239.7" y2="418" stroke="#86f06e" stroke-width="1.2"/>
<line x1="225" y1="452" x2="240.7" y2="452" stroke="#86f06e" stroke-width="1" shape-rendering="crispEdges"/>
<line x1="235.7" y1="454" x2="239.7" y2="450" stroke="#86f06e" stroke-width="1.2"/>
<line x1="225" y1="457" x2="240.7" y2="457" stroke="#86f06e" stroke-width="1" shape-rendering="crispEdges"/>
<line x1="235.7" y1="459" x2="239.7" y2="455" stroke="#86f06e" stroke-width="1.2"/>
<g fill="none" stroke="#ffffff" stroke-width="1.3" stroke-linejoin="round"><path transform="translate(184,400) scale(3.802,7.200)" d="M0.9 0.2 Q0.8 0 0.5 0 Q0.1 0 0.1 0.5 Q0.1 1 0.5 1 Q0.9 1 0.9 0.62 L0.9 0.52 L0.55 0.52" vector-effect="non-scaling-stroke"/><path transform="translate(188.3,400) scale(3.802,7.200)" d="M0.1 0 L0.1 1 L0.6 1 Q0.92 1 0.92 0.73 Q0.92 0.47 0.6 0.47 L0.1 0.47 M0.6 0.47 Q0.86 0.47 0.86 0.23 Q0.86 0 0.6 0 L0.1 0" vector-effect="non-scaling-stroke"/><path transform="translate(192.6,400) scale(3.802,7.200)" d="M0.1 0 L0.9 0 L0.1 1 L0.9 1" vector-effect="non-scaling-stroke"/><path transform="translate(196.9,400) scale(3.802,7.200)" d="M0.22 0.2 L0.55 0 L0.55 1" vector-effect="non-scaling-stroke"/><path transform="translate(201.2,400) scale(3.802,7.200)" d="M0.85 0 L0.2 0 L0.15 0.45 Q0.3 0.38 0.5 0.38 Q0.9 0.38 0.9 0.7 Q0.9 1 0.5 1 Q0.2 1 0.1 0.85" vector-effect="non-scaling-stroke"/></g>
<line x1="183.7" y1="408.7" x2="205.3" y2="408.7" stroke="#ffffff" stroke-width="1" shape-rendering="crispEdges"/>
<line x1="205.3" y1="408.7" x2="206" y2="414" stroke="#ffffff" stroke-width="0.9"/>
<g fill="none" stroke="#ffffff" stroke-width="1.3" stroke-linejoin="round"><path transform="translate(185.2,430) scale(3.960,8.400)" d="M0.9 0.2 Q0.8 0 0.5 0 Q0.1 0 0.1 0.5 Q0.1 1 0.5 1 Q0.9 1 0.9 0.62 L0.9 0.52 L0.55 0.52" vector-effect="non-scaling-stroke"/><path transform="translate(189.7,430) scale(3.960,8.400)" d="M0.1 0 L0.1 1 L0.6 1 Q0.92 1 0.92 0.73 Q0.92 0.47 0.6 0.47 L0.1 0.47 M0.6 0.47 Q0.86 0.47 0.86 0.23 Q0.86 0 0.6 0 L0.1 0" vector-effect="non-scaling-stroke"/><path transform="translate(194.2,430) scale(3.960,8.400)" d="M0.1 0 L0.9 0 L0.1 1 L0.9 1" vector-effect="non-scaling-stroke"/><path transform="translate(198.7,430) scale(3.960,8.400)" d="M0.9 0.35 Q0.9 0.62 0.5 0.62 Q0.1 0.62 0.1 0.31 Q0.1 0 0.5 0 Q0.9 0 0.9 0.4 Q0.9 1 0.5 1 Q0.25 1 0.15 0.88" vector-effect="non-scaling-stroke"/></g>
<line x1="184.9" y1="439.9" x2="202.9" y2="439.9" stroke="#ffffff" stroke-width="1" shape-rendering="crispEdges"/>
<line x1="202.9" y1="439.9" x2="206" y2="445" stroke="#ffffff" stroke-width="0.9"/>
<g fill="none" stroke="#ffffff" stroke-width="1.15" stroke-linejoin="round" transform="translate(230,413) rotate(-90)"><path transform="translate(0.1,0) scale(2.100,6.000)" d="M0.22 0.2 L0.55 0 L0.55 1" vector-effect="non-scaling-stroke"/><path transform="translate(2.5,0) scale(2.100,6.000)" d="M0.5 0 Q0.1 0 0.1 0.3 L0.1 0.7 Q0.1 1 0.5 1 Q0.9 1 0.9 0.7 L0.9 0.3 Q0.9 0 0.5 0 Z" vector-effect="non-scaling-stroke"/><path transform="translate(4.8,0) scale(2.100,6.000)" d="M0.5 0 Q0.1 0 0.1 0.3 L0.1 0.7 Q0.1 1 0.5 1 Q0.9 1 0.9 0.7 L0.9 0.3 Q0.9 0 0.5 0 Z" vector-effect="non-scaling-stroke"/></g>
<g fill="none" stroke="#ffffff" stroke-width="1.15" stroke-linejoin="round" transform="translate(230,442) rotate(-90)"><path transform="translate(0.2,0) scale(2.700,6.000)" d="M0.22 0.2 L0.55 0 L0.55 1" vector-effect="non-scaling-stroke"/><path transform="translate(3.1,0) scale(2.700,6.000)" d="M0.22 0.2 L0.55 0 L0.55 1" vector-effect="non-scaling-stroke"/><path transform="translate(6.2,0) scale(2.700,6.000)" d="M0.85 0 L0.2 0 L0.15 0.45 Q0.3 0.38 0.5 0.38 Q0.9 0.38 0.9 0.7 Q0.9 1 0.5 1 Q0.2 1 0.1 0.85" vector-effect="non-scaling-stroke"/><path transform="translate(9.2,0) scale(2.700,6.000)" d="M0.5 0 Q0.1 0 0.1 0.3 L0.1 0.7 Q0.1 1 0.5 1 Q0.9 1 0.9 0.7 L0.9 0.3 Q0.9 0 0.5 0 Z" vector-effect="non-scaling-stroke"/></g>
<g fill="none" stroke="#ffffff" stroke-width="1.15" stroke-linejoin="round" transform="translate(230,466) rotate(-90)"><path transform="translate(0.1,0) scale(2.400,6.000)" d="M0.22 0.2 L0.55 0 L0.55 1" vector-effect="non-scaling-stroke"/><path transform="translate(2.8,0) scale(2.400,6.000)" d="M0.5 0 Q0.1 0 0.1 0.3 L0.1 0.7 Q0.1 1 0.5 1 Q0.9 1 0.9 0.7 L0.9 0.3 Q0.9 0 0.5 0 Z" vector-effect="non-scaling-stroke"/><path transform="translate(5.5,0) scale(2.400,6.000)" d="M0.5 0 Q0.1 0 0.1 0.3 L0.1 0.7 Q0.1 1 0.5 1 Q0.9 1 0.9 0.7 L0.9 0.3 Q0.9 0 0.5 0 Z" vector-effect="non-scaling-stroke"/></g>
<g fill="none" stroke="#ffffff" stroke-width="1.15" stroke-linejoin="round"><path transform="translate(193.1,467) scale(2.661,6.200)" d="M0.5 0.47 Q0.12 0.47 0.12 0.24 Q0.12 0 0.5 0 Q0.88 0 0.88 0.24 Q0.88 0.47 0.5 0.47 Q0.08 0.47 0.08 0.74 Q0.08 1 0.5 1 Q0.92 1 0.92 0.74 Q0.92 0.47 0.5 0.47" vector-effect="non-scaling-stroke"/><path transform="translate(196.1,467) scale(2.661,6.200)" d="M0.5 0 Q0.1 0 0.1 0.3 L0.1 0.7 Q0.1 1 0.5 1 Q0.9 1 0.9 0.7 L0.9 0.3 Q0.9 0 0.5 0 Z" vector-effect="non-scaling-stroke"/><path transform="translate(199.1,467) scale(2.661,6.200)" d="M0.5 0 Q0.1 0 0.1 0.3 L0.1 0.7 Q0.1 1 0.5 1 Q0.9 1 0.9 0.7 L0.9 0.3 Q0.9 0 0.5 0 Z" vector-effect="non-scaling-stroke"/><path transform="translate(205,467) scale(2.661,6.200)" d="M0.85 0 L0.2 0 L0.15 0.45 Q0.3 0.38 0.5 0.38 Q0.9 0.38 0.9 0.7 Q0.9 1 0.5 1 Q0.2 1 0.1 0.85" vector-effect="non-scaling-stroke"/><path transform="translate(207.9,467) scale(2.661,6.200)" d="M0.5 0 Q0.1 0 0.1 0.3 L0.1 0.7 Q0.1 1 0.5 1 Q0.9 1 0.9 0.7 L0.9 0.3 Q0.9 0 0.5 0 Z" vector-effect="non-scaling-stroke"/><path transform="translate(210.9,467) scale(2.661,6.200)" d="M0.5 0 Q0.1 0 0.1 0.3 L0.1 0.7 Q0.1 1 0.5 1 Q0.9 1 0.9 0.7 L0.9 0.3 Q0.9 0 0.5 0 Z" vector-effect="non-scaling-stroke"/></g>
<line x1="187" y1="475" x2="223" y2="475" stroke="#86f06e" stroke-width="1" shape-rendering="crispEdges"/>
<line x1="190" y1="462" x2="190" y2="478" stroke="#86f06e" stroke-width="1" shape-rendering="crispEdges"/>
<line x1="188" y1="477" x2="192" y2="473" stroke="#86f06e" stroke-width="1.2"/>
<line x1="206" y1="462" x2="206" y2="478" stroke="#86f06e" stroke-width="1" shape-rendering="crispEdges"/>
<line x1="204" y1="477" x2="208" y2="473" stroke="#86f06e" stroke-width="1.2"/>
<line x1="220" y1="462" x2="220" y2="478" stroke="#86f06e" stroke-width="1" shape-rendering="crispEdges"/>
<line x1="218" y1="477" x2="222" y2="473" stroke="#86f06e" stroke-width="1.2"/>
<rect x="281" y="380.8" width="5.2" height="21.6" fill="#0000ff" shape-rendering="crispEdges"/>
<rect x="281" y="397" width="12" height="5.4" fill="#0000ff" shape-rendering="crispEdges"/>
<line x1="293" y1="397.6" x2="338" y2="397.6" stroke="#e8a200" stroke-width="1.1" shape-rendering="crispEdges"/>
<line x1="293" y1="401.7" x2="338" y2="401.7" stroke="#e8a200" stroke-width="1.1" shape-rendering="crispEdges"/>
<rect x="338" y="397" width="10.1" height="5.4" fill="#0000ff" shape-rendering="crispEdges"/>
<line x1="366.1" y1="378.8" x2="366.1" y2="404.4" stroke="#86f06e" stroke-width="1" shape-rendering="crispEdges"/>
<line x1="354" y1="380.8" x2="369.1" y2="380.8" stroke="#86f06e" stroke-width="1" shape-rendering="crispEdges"/>
<line x1="364.1" y1="382.8" x2="368.1" y2="378.8" stroke="#86f06e" stroke-width="1.2"/>
<line x1="354" y1="397" x2="369.1" y2="397" stroke="#86f06e" stroke-width="1" shape-rendering="crispEdges"/>
<line x1="364.1" y1="399" x2="368.1" y2="395" stroke="#86f06e" stroke-width="1.2"/>
<line x1="354" y1="402.4" x2="369.1" y2="402.4" stroke="#86f06e" stroke-width="1" shape-rendering="crispEdges"/>
<line x1="364.1" y1="404.4" x2="368.1" y2="400.4" stroke="#86f06e" stroke-width="1.2"/>
<g fill="none" stroke="#ffffff" stroke-width="1.3" stroke-linejoin="round"><path transform="translate(257.3,385.6) scale(3.784,7.700)" d="M0.9 0.2 Q0.8 0 0.5 0 Q0.1 0 0.1 0.5 Q0.1 1 0.5 1 Q0.9 1 0.9 0.62 L0.9 0.52 L0.55 0.52" vector-effect="non-scaling-stroke"/><path transform="translate(261.6,385.6) scale(3.784,7.700)" d="M0.1 0 L0.1 1 L0.6 1 Q0.92 1 0.92 0.73 Q0.92 0.47 0.6 0.47 L0.1 0.47 M0.6 0.47 Q0.86 0.47 0.86 0.23 Q0.86 0 0.6 0 L0.1 0" vector-effect="non-scaling-stroke"/><path transform="translate(265.9,385.6) scale(3.784,7.700)" d="M0.1 0 L0.9 0 L0.1 1 L0.9 1" vector-effect="non-scaling-stroke"/><path transform="translate(270.2,385.6) scale(3.784,7.700)" d="M0.22 0.2 L0.55 0 L0.55 1" vector-effect="non-scaling-stroke"/><path transform="translate(274.5,385.6) scale(3.784,7.700)" d="M0.5 0.47 Q0.12 0.47 0.12 0.24 Q0.12 0 0.5 0 Q0.88 0 0.88 0.24 Q0.88 0.47 0.5 0.47 Q0.08 0.47 0.08 0.74 Q0.08 1 0.5 1 Q0.92 1 0.92 0.74 Q0.92 0.47 0.5 0.47" vector-effect="non-scaling-stroke"/></g>
<line x1="257" y1="394.8" x2="278.5" y2="394.8" stroke="#ffffff" stroke-width="1" shape-rendering="crispEdges"/>
<line x1="278.5" y1="394.8" x2="281" y2="397" stroke="#ffffff" stroke-width="0.9"/>
<g fill="none" stroke="#ffffff" stroke-width="1.3" stroke-linejoin="round"><path transform="translate(319.1,384) scale(3.718,7.600)" d="M0.9 0.2 Q0.8 0 0.5 0 Q0.1 0 0.1 0.5 Q0.1 1 0.5 1 Q0.9 1 0.9 0.62 L0.9 0.52 L0.55 0.52" vector-effect="non-scaling-stroke"/><path transform="translate(323.3,384) scale(3.718,7.600)" d="M0.1 0 L0.1 1 L0.6 1 Q0.92 1 0.92 0.73 Q0.92 0.47 0.6 0.47 L0.1 0.47 M0.6 0.47 Q0.86 0.47 0.86 0.23 Q0.86 0 0.6 0 L0.1 0" vector-effect="non-scaling-stroke"/><path transform="translate(327.5,384) scale(3.718,7.600)" d="M0.1 0 L0.9 0 L0.1 1 L0.9 1" vector-effect="non-scaling-stroke"/><path transform="translate(331.7,384) scale(3.718,7.600)" d="M0.22 0.2 L0.55 0 L0.55 1" vector-effect="non-scaling-stroke"/></g>
<line x1="318.8" y1="393.1" x2="335.7" y2="393.1" stroke="#ffffff" stroke-width="1" shape-rendering="crispEdges"/>
<line x1="335.7" y1="393.1" x2="338" y2="397" stroke="#ffffff" stroke-width="0.9"/>
<g fill="none" stroke="#ffffff" stroke-width="1.15" stroke-linejoin="round" transform="translate(359,393) rotate(-90)"><path transform="translate(0.1,0) scale(2.400,6.000)" d="M0.5 0.47 Q0.12 0.47 0.12 0.24 Q0.12 0 0.5 0 Q0.88 0 0.88 0.24 Q0.88 0.47 0.5 0.47 Q0.08 0.47 0.08 0.74 Q0.08 1 0.5 1 Q0.92 1 0.92 0.74 Q0.92 0.47 0.5 0.47" vector-effect="non-scaling-stroke"/><path transform="translate(2.8,0) scale(2.400,6.000)" d="M0.85 0 L0.2 0 L0.15 0.45 Q0.3 0.38 0.5 0.38 Q0.9 0.38 0.9 0.7 Q0.9 1 0.5 1 Q0.2 1 0.1 0.85" vector-effect="non-scaling-stroke"/><path transform="translate(5.5,0) scale(2.400,6.000)" d="M0.5 0 Q0.1 0 0.1 0.3 L0.1 0.7 Q0.1 1 0.5 1 Q0.9 1 0.9 0.7 L0.9 0.3 Q0.9 0 0.5 0 Z" vector-effect="non-scaling-stroke"/></g>
<g fill="none" stroke="#ffffff" stroke-width="1.15" stroke-linejoin="round" transform="translate(359,411) rotate(-90)"><path transform="translate(0.1,0) scale(2.400,6.000)" d="M0.22 0.2 L0.55 0 L0.55 1" vector-effect="non-scaling-stroke"/><path transform="translate(2.8,0) scale(2.400,6.000)" d="M0.5 0 Q0.1 0 0.1 0.3 L0.1 0.7 Q0.1 1 0.5 1 Q0.9 1 0.9 0.7 L0.9 0.3 Q0.9 0 0.5 0 Z" vector-effect="non-scaling-stroke"/><path transform="translate(5.5,0) scale(2.400,6.000)" d="M0.5 0 Q0.1 0 0.1 0.3 L0.1 0.7 Q0.1 1 0.5 1 Q0.9 1 0.9 0.7 L0.9 0.3 Q0.9 0 0.5 0 Z" vector-effect="non-scaling-stroke"/></g>
<g fill="none" stroke="#ffffff" stroke-width="1.15" stroke-linejoin="round"><path transform="translate(271.4,412.7) scale(2.520,6.500)" d="M0.22 0.2 L0.55 0 L0.55 1" vector-effect="non-scaling-stroke"/><path transform="translate(274.2,412.7) scale(2.520,6.500)" d="M0.5 0 Q0.1 0 0.1 0.3 L0.1 0.7 Q0.1 1 0.5 1 Q0.9 1 0.9 0.7 L0.9 0.3 Q0.9 0 0.5 0 Z" vector-effect="non-scaling-stroke"/><path transform="translate(277,412.7) scale(2.520,6.500)" d="M0.5 0 Q0.1 0 0.1 0.3 L0.1 0.7 Q0.1 1 0.5 1 Q0.9 1 0.9 0.7 L0.9 0.3 Q0.9 0 0.5 0 Z" vector-effect="non-scaling-stroke"/></g>
<g fill="none" stroke="#ffffff" stroke-width="1.15" stroke-linejoin="round"><path transform="translate(290.7,412.7) scale(2.970,6.500)" d="M0.22 0.2 L0.55 0 L0.55 1" vector-effect="non-scaling-stroke"/><path transform="translate(294,412.7) scale(2.970,6.500)" d="M0.12 0.24 Q0.15 0 0.5 0 Q0.88 0 0.88 0.27 Q0.88 0.45 0.5 0.65 L0.1 1 L0.92 1" vector-effect="non-scaling-stroke"/><path transform="translate(297.3,412.7) scale(2.970,6.500)" d="M0.85 0 L0.2 0 L0.15 0.45 Q0.3 0.38 0.5 0.38 Q0.9 0.38 0.9 0.7 Q0.9 1 0.5 1 Q0.2 1 0.1 0.85" vector-effect="non-scaling-stroke"/><path transform="translate(300.6,412.7) scale(2.970,6.500)" d="M0.5 0 Q0.1 0 0.1 0.3 L0.1 0.7 Q0.1 1 0.5 1 Q0.9 1 0.9 0.7 L0.9 0.3 Q0.9 0 0.5 0 Z" vector-effect="non-scaling-stroke"/></g>
<g fill="none" stroke="#ffffff" stroke-width="1.15" stroke-linejoin="round"><path transform="translate(320.7,412.7) scale(3.263,6.500)" d="M0.22 0.2 L0.55 0 L0.55 1" vector-effect="non-scaling-stroke"/><path transform="translate(324.3,412.7) scale(3.263,6.500)" d="M0.85 0 L0.2 0 L0.15 0.45 Q0.3 0.38 0.5 0.38 Q0.9 0.38 0.9 0.7 Q0.9 1 0.5 1 Q0.2 1 0.1 0.85" vector-effect="non-scaling-stroke"/><path transform="translate(327.9,412.7) scale(3.263,6.500)" d="M0.5 0 Q0.1 0 0.1 0.3 L0.1 0.7 Q0.1 1 0.5 1 Q0.9 1 0.9 0.7 L0.9 0.3 Q0.9 0 0.5 0 Z" vector-effect="non-scaling-stroke"/><path transform="translate(331.6,412.7) scale(3.263,6.500)" d="M0.5 0 Q0.1 0 0.1 0.3 L0.1 0.7 Q0.1 1 0.5 1 Q0.9 1 0.9 0.7 L0.9 0.3 Q0.9 0 0.5 0 Z" vector-effect="non-scaling-stroke"/></g>
<g fill="none" stroke="#ffffff" stroke-width="1.15" stroke-linejoin="round"><path transform="translate(348.1,412.7) scale(2.550,6.500)" d="M0.22 0.2 L0.55 0 L0.55 1" vector-effect="non-scaling-stroke"/><path transform="translate(351,412.7) scale(2.550,6.500)" d="M0.5 0 Q0.1 0 0.1 0.3 L0.1 0.7 Q0.1 1 0.5 1 Q0.9 1 0.9 0.7 L0.9 0.3 Q0.9 0 0.5 0 Z" vector-effect="non-scaling-stroke"/><path transform="translate(353.8,412.7) scale(2.550,6.500)" d="M0.5 0 Q0.1 0 0.1 0.3 L0.1 0.7 Q0.1 1 0.5 1 Q0.9 1 0.9 0.7 L0.9 0.3 Q0.9 0 0.5 0 Z" vector-effect="non-scaling-stroke"/></g>
<line x1="278" y1="420.4" x2="351" y2="420.4" stroke="#86f06e" stroke-width="1" shape-rendering="crispEdges"/>
<line x1="281" y1="408" x2="281" y2="423.4" stroke="#86f06e" stroke-width="1" shape-rendering="crispEdges"/>
<line x1="279" y1="422.4" x2="283" y2="418.4" stroke="#86f06e" stroke-width="1.2"/>
<line x1="286" y1="408" x2="286" y2="423.4" stroke="#86f06e" stroke-width="1" shape-rendering="crispEdges"/>
<line x1="284" y1="422.4" x2="288" y2="418.4" stroke="#86f06e" stroke-width="1.2"/>
<line x1="311" y1="408" x2="311" y2="423.4" stroke="#86f06e" stroke-width="1" shape-rendering="crispEdges"/>
<line x1="309" y1="422.4" x2="313" y2="418.4" stroke="#86f06e" stroke-width="1.2"/>
<line x1="338" y1="408" x2="338" y2="423.4" stroke="#86f06e" stroke-width="1" shape-rendering="crispEdges"/>
<line x1="336" y1="422.4" x2="340" y2="418.4" stroke="#86f06e" stroke-width="1.2"/>
<line x1="348" y1="408" x2="348" y2="423.4" stroke="#86f06e" stroke-width="1" shape-rendering="crispEdges"/>
<line x1="346" y1="422.4" x2="350" y2="418.4" stroke="#86f06e" stroke-width="1.2"/>
<g fill="none" stroke="#ffffff" stroke-width="1.15" stroke-linejoin="round"><path transform="translate(257.1,370.5) scale(2.400,5.000)" d="M0.22 0.2 L0.55 0 L0.55 1" vector-effect="non-scaling-stroke"/><path transform="translate(259.8,370.5) scale(2.400,5.000)" d="M0.5 0 Q0.1 0 0.1 0.3 L0.1 0.7 Q0.1 1 0.5 1 Q0.9 1 0.9 0.7 L0.9 0.3 Q0.9 0 0.5 0 Z" vector-effect="non-scaling-stroke"/><path transform="translate(262.5,370.5) scale(2.400,5.000)" d="M0.5 0 Q0.1 0 0.1 0.3 L0.1 0.7 Q0.1 1 0.5 1 Q0.9 1 0.9 0.7 L0.9 0.3 Q0.9 0 0.5 0 Z" vector-effect="non-scaling-stroke"/></g>
<rect x="521.2" y="382" width="4.8" height="25.2" fill="#0000ff" shape-rendering="crispEdges"/>
<rect x="491.2" y="402.4" width="34.8" height="6" fill="#0000ff" shape-rendering="crispEdges"/>
<line x1="544" y1="380" x2="544" y2="410.4" stroke="#86f06e" stroke-width="1" shape-rendering="crispEdges"/>
<line x1="532" y1="382" x2="547" y2="382" stroke="#86f06e" stroke-width="1" shape-rendering="crispEdges"/>
<line x1="542" y1="384" x2="546" y2="380" stroke="#86f06e" stroke-width="1.2"/>
<line x1="532" y1="401" x2="547" y2="401" stroke="#86f06e" stroke-width="1" shape-rendering="crispEdges"/>
<line x1="542" y1="403" x2="546" y2="399" stroke="#86f06e" stroke-width="1.2"/>
<line x1="532" y1="405" x2="547" y2="405" stroke="#86f06e" stroke-width="1" shape-rendering="crispEdges"/>
<line x1="542" y1="407" x2="546" y2="403" stroke="#86f06e" stroke-width="1.2"/>
<line x1="532" y1="408.4" x2="547" y2="408.4" stroke="#86f06e" stroke-width="1" shape-rendering="crispEdges"/>
<line x1="542" y1="410.4" x2="546" y2="406.4" stroke="#86f06e" stroke-width="1.2"/>
<g fill="none" stroke="#ffffff" stroke-width="1.3" stroke-linejoin="round"><path transform="translate(471.1,387.3) scale(4.136,7.900)" d="M0.9 0.2 Q0.8 0 0.5 0 Q0.1 0 0.1 0.5 Q0.1 1 0.5 1 Q0.9 1 0.9 0.62 L0.9 0.52 L0.55 0.52" vector-effect="non-scaling-stroke"/><path transform="translate(475.8,387.3) scale(4.136,7.900)" d="M0.1 0 L0.1 1 L0.6 1 Q0.92 1 0.92 0.73 Q0.92 0.47 0.6 0.47 L0.1 0.47 M0.6 0.47 Q0.86 0.47 0.86 0.23 Q0.86 0 0.6 0 L0.1 0" vector-effect="non-scaling-stroke"/><path transform="translate(480.5,387.3) scale(4.136,7.900)" d="M0.1 0 L0.9 0 L0.1 1 L0.9 1" vector-effect="non-scaling-stroke"/><path transform="translate(485.2,387.3) scale(4.136,7.900)" d="M0.12 0.15 Q0.25 0 0.5 0 Q0.88 0 0.88 0.25 Q0.88 0.47 0.45 0.47 Q0.9 0.47 0.9 0.74 Q0.9 1 0.5 1 Q0.2 1 0.1 0.85" vector-effect="non-scaling-stroke"/></g>
<line x1="470.8" y1="396.7" x2="489.6" y2="396.7" stroke="#ffffff" stroke-width="1" shape-rendering="crispEdges"/>
<line x1="489.6" y1="396.7" x2="491" y2="402" stroke="#ffffff" stroke-width="0.9"/>
<g fill="none" stroke="#ffffff" stroke-width="1.15" stroke-linejoin="round" transform="translate(537,395) rotate(-90)"><path transform="translate(0.2,0) scale(3.000,6.000)" d="M0.5 0.47 Q0.12 0.47 0.12 0.24 Q0.12 0 0.5 0 Q0.88 0 0.88 0.24 Q0.88 0.47 0.5 0.47 Q0.08 0.47 0.08 0.74 Q0.08 1 0.5 1 Q0.92 1 0.92 0.74 Q0.92 0.47 0.5 0.47" vector-effect="non-scaling-stroke"/><path transform="translate(3.5,0) scale(3.000,6.000)" d="M0.85 0 L0.2 0 L0.15 0.45 Q0.3 0.38 0.5 0.38 Q0.9 0.38 0.9 0.7 Q0.9 1 0.5 1 Q0.2 1 0.1 0.85" vector-effect="non-scaling-stroke"/><path transform="translate(6.8,0) scale(3.000,6.000)" d="M0.5 0 Q0.1 0 0.1 0.3 L0.1 0.7 Q0.1 1 0.5 1 Q0.9 1 0.9 0.7 L0.9 0.3 Q0.9 0 0.5 0 Z" vector-effect="non-scaling-stroke"/></g>
<g fill="none" stroke="#ffffff" stroke-width="1.15" stroke-linejoin="round" transform="translate(537,414) rotate(-90)"><path transform="translate(0.2,0) scale(2.700,6.000)" d="M0.12 0.24 Q0.15 0 0.5 0 Q0.88 0 0.88 0.27 Q0.88 0.45 0.5 0.65 L0.1 1 L0.92 1" vector-effect="non-scaling-stroke"/><path transform="translate(3.1,0) scale(2.700,6.000)" d="M0.85 0 L0.2 0 L0.15 0.45 Q0.3 0.38 0.5 0.38 Q0.9 0.38 0.9 0.7 Q0.9 1 0.5 1 Q0.2 1 0.1 0.85" vector-effect="non-scaling-stroke"/><path transform="translate(6.2,0) scale(2.700,6.000)" d="M0.5 0 Q0.1 0 0.1 0.3 L0.1 0.7 Q0.1 1 0.5 1 Q0.9 1 0.9 0.7 L0.9 0.3 Q0.9 0 0.5 0 Z" vector-effect="non-scaling-stroke"/><path transform="translate(9.2,0) scale(2.700,6.000)" d="M0.22 0.2 L0.55 0 L0.55 1" vector-effect="non-scaling-stroke"/><path transform="translate(12.2,0) scale(2.700,6.000)" d="M0.5 0 Q0.1 0 0.1 0.3 L0.1 0.7 Q0.1 1 0.5 1 Q0.9 1 0.9 0.7 L0.9 0.3 Q0.9 0 0.5 0 Z" vector-effect="non-scaling-stroke"/><path transform="translate(15.2,0) scale(2.700,6.000)" d="M0.5 0 Q0.1 0 0.1 0.3 L0.1 0.7 Q0.1 1 0.5 1 Q0.9 1 0.9 0.7 L0.9 0.3 Q0.9 0 0.5 0 Z" vector-effect="non-scaling-stroke"/></g>
<g fill="none" stroke="#ffffff" stroke-width="1.15" stroke-linejoin="round"><path transform="translate(482.9,419) scale(2.520,6.200)" d="M0.22 0.2 L0.55 0 L0.55 1" vector-effect="non-scaling-stroke"/><path transform="translate(485.7,419) scale(2.520,6.200)" d="M0.5 0 Q0.1 0 0.1 0.3 L0.1 0.7 Q0.1 1 0.5 1 Q0.9 1 0.9 0.7 L0.9 0.3 Q0.9 0 0.5 0 Z" vector-effect="non-scaling-stroke"/><path transform="translate(488.5,419) scale(2.520,6.200)" d="M0.5 0 Q0.1 0 0.1 0.3 L0.1 0.7 Q0.1 1 0.5 1 Q0.9 1 0.9 0.7 L0.9 0.3 Q0.9 0 0.5 0 Z" vector-effect="non-scaling-stroke"/></g>
<g fill="none" stroke="#ffffff" stroke-width="1.15" stroke-linejoin="round"><path transform="translate(502.2,419) scale(2.970,6.200)" d="M0.22 0.2 L0.55 0 L0.55 1" vector-effect="non-scaling-stroke"/><path transform="translate(505.5,419) scale(2.970,6.200)" d="M0.12 0.15 Q0.25 0 0.5 0 Q0.88 0 0.88 0.25 Q0.88 0.47 0.45 0.47 Q0.9 0.47 0.9 0.74 Q0.9 1 0.5 1 Q0.2 1 0.1 0.85" vector-effect="non-scaling-stroke"/><path transform="translate(508.8,419) scale(2.970,6.200)" d="M0.5 0 Q0.1 0 0.1 0.3 L0.1 0.7 Q0.1 1 0.5 1 Q0.9 1 0.9 0.7 L0.9 0.3 Q0.9 0 0.5 0 Z" vector-effect="non-scaling-stroke"/><path transform="translate(512.1,419) scale(2.970,6.200)" d="M0.5 0 Q0.1 0 0.1 0.3 L0.1 0.7 Q0.1 1 0.5 1 Q0.9 1 0.9 0.7 L0.9 0.3 Q0.9 0 0.5 0 Z" vector-effect="non-scaling-stroke"/></g>
<g fill="none" stroke="#ffffff" stroke-width="1.15" stroke-linejoin="round"><path transform="translate(526.1,419) scale(2.550,6.200)" d="M0.22 0.2 L0.55 0 L0.55 1" vector-effect="non-scaling-stroke"/><path transform="translate(529,419) scale(2.550,6.200)" d="M0.5 0 Q0.1 0 0.1 0.3 L0.1 0.7 Q0.1 1 0.5 1 Q0.9 1 0.9 0.7 L0.9 0.3 Q0.9 0 0.5 0 Z" vector-effect="non-scaling-stroke"/><path transform="translate(531.8,419) scale(2.550,6.200)" d="M0.5 0 Q0.1 0 0.1 0.3 L0.1 0.7 Q0.1 1 0.5 1 Q0.9 1 0.9 0.7 L0.9 0.3 Q0.9 0 0.5 0 Z" vector-effect="non-scaling-stroke"/></g>
<line x1="488" y1="427" x2="529" y2="427" stroke="#86f06e" stroke-width="1" shape-rendering="crispEdges"/>
<line x1="491" y1="414" x2="491" y2="430" stroke="#86f06e" stroke-width="1" shape-rendering="crispEdges"/>
<line x1="489" y1="429" x2="493" y2="425" stroke="#86f06e" stroke-width="1.2"/>
<line x1="494" y1="414" x2="494" y2="430" stroke="#86f06e" stroke-width="1" shape-rendering="crispEdges"/>
<line x1="492" y1="429" x2="496" y2="425" stroke="#86f06e" stroke-width="1.2"/>
<line x1="521" y1="414" x2="521" y2="430" stroke="#86f06e" stroke-width="1" shape-rendering="crispEdges"/>
<line x1="519" y1="429" x2="523" y2="425" stroke="#86f06e" stroke-width="1.2"/>
<line x1="526" y1="414" x2="526" y2="430" stroke="#86f06e" stroke-width="1" shape-rendering="crispEdges"/>
<line x1="524" y1="429" x2="528" y2="425" stroke="#86f06e" stroke-width="1.2"/>
<rect x="595" y="414" width="21" height="6" fill="#0000ff" shape-rendering="crispEdges"/>
<rect x="595" y="414" width="6.2" height="13" fill="#0000ff" shape-rendering="crispEdges"/>
<line x1="595.7" y1="427" x2="595.7" y2="445" stroke="#e8a200" stroke-width="1.1" shape-rendering="crispEdges"/>
<line x1="600" y1="427" x2="600" y2="445" stroke="#e8a200" stroke-width="1.1" shape-rendering="crispEdges"/>
<rect x="595" y="445" width="6.2" height="12" fill="#0000ff" shape-rendering="crispEdges"/>
<rect x="586" y="451.6" width="15.2" height="5.4" fill="#0000ff" shape-rendering="crispEdges"/>
<line x1="634" y1="412" x2="634" y2="459" stroke="#86f06e" stroke-width="1" shape-rendering="crispEdges"/>
<line x1="621" y1="414" x2="637" y2="414" stroke="#86f06e" stroke-width="1" shape-rendering="crispEdges"/>
<line x1="632" y1="416" x2="636" y2="412" stroke="#86f06e" stroke-width="1.2"/>
<line x1="621" y1="420" x2="637" y2="420" stroke="#86f06e" stroke-width="1" shape-rendering="crispEdges"/>
<line x1="632" y1="422" x2="636" y2="418" stroke="#86f06e" stroke-width="1.2"/>
<line x1="621" y1="452" x2="637" y2="452" stroke="#86f06e" stroke-width="1" shape-rendering="crispEdges"/>
<line x1="632" y1="454" x2="636" y2="450" stroke="#86f06e" stroke-width="1.2"/>
<line x1="621" y1="457" x2="637" y2="457" stroke="#86f06e" stroke-width="1" shape-rendering="crispEdges"/>
<line x1="632" y1="459" x2="636" y2="455" stroke="#86f06e" stroke-width="1.2"/>
<g fill="none" stroke="#ffffff" stroke-width="1.3" stroke-linejoin="round"><path transform="translate(571.3,400) scale(3.696,8.000)" d="M0.9 0.2 Q0.8 0 0.5 0 Q0.1 0 0.1 0.5 Q0.1 1 0.5 1 Q0.9 1 0.9 0.62 L0.9 0.52 L0.55 0.52" vector-effect="non-scaling-stroke"/><path transform="translate(575.5,400) scale(3.696,8.000)" d="M0.1 0 L0.1 1 L0.6 1 Q0.92 1 0.92 0.73 Q0.92 0.47 0.6 0.47 L0.1 0.47 M0.6 0.47 Q0.86 0.47 0.86 0.23 Q0.86 0 0.6 0 L0.1 0" vector-effect="non-scaling-stroke"/><path transform="translate(579.7,400) scale(3.696,8.000)" d="M0.1 0 L0.9 0 L0.1 1 L0.9 1" vector-effect="non-scaling-stroke"/><path transform="translate(583.9,400) scale(3.696,8.000)" d="M0.22 0.2 L0.55 0 L0.55 1" vector-effect="non-scaling-stroke"/><path transform="translate(588.1,400) scale(3.696,8.000)" d="M0.85 0 L0.2 0 L0.15 0.45 Q0.3 0.38 0.5 0.38 Q0.9 0.38 0.9 0.7 Q0.9 1 0.5 1 Q0.2 1 0.1 0.85" vector-effect="non-scaling-stroke"/></g>
<line x1="571" y1="409.5" x2="592" y2="409.5" stroke="#ffffff" stroke-width="1" shape-rendering="crispEdges"/>
<line x1="592" y1="409.5" x2="595" y2="414" stroke="#ffffff" stroke-width="0.9"/>
<g fill="none" stroke="#ffffff" stroke-width="1.3" stroke-linejoin="round"><path transform="translate(566,437.2) scale(4.114,8.400)" d="M0.9 0.2 Q0.8 0 0.5 0 Q0.1 0 0.1 0.5 Q0.1 1 0.5 1 Q0.9 1 0.9 0.62 L0.9 0.52 L0.55 0.52" vector-effect="non-scaling-stroke"/><path transform="translate(570.7,437.2) scale(4.114,8.400)" d="M0.1 0 L0.1 1 L0.6 1 Q0.92 1 0.92 0.73 Q0.92 0.47 0.6 0.47 L0.1 0.47 M0.6 0.47 Q0.86 0.47 0.86 0.23 Q0.86 0 0.6 0 L0.1 0" vector-effect="non-scaling-stroke"/><path transform="translate(575.3,437.2) scale(4.114,8.400)" d="M0.1 0 L0.9 0 L0.1 1 L0.9 1" vector-effect="non-scaling-stroke"/><path transform="translate(580,437.2) scale(4.114,8.400)" d="M0.9 0.35 Q0.9 0.62 0.5 0.62 Q0.1 0.62 0.1 0.31 Q0.1 0 0.5 0 Q0.9 0 0.9 0.4 Q0.9 1 0.5 1 Q0.25 1 0.15 0.88" vector-effect="non-scaling-stroke"/></g>
<line x1="565.7" y1="447.1" x2="584.4" y2="447.1" stroke="#ffffff" stroke-width="1" shape-rendering="crispEdges"/>
<line x1="584.4" y1="447.1" x2="586" y2="452" stroke="#ffffff" stroke-width="0.9"/>
<g fill="none" stroke="#ffffff" stroke-width="1.15" stroke-linejoin="round" transform="translate(627,413) rotate(-90)"><path transform="translate(0.1,0) scale(2.100,6.000)" d="M0.22 0.2 L0.55 0 L0.55 1" vector-effect="non-scaling-stroke"/><path transform="translate(2.5,0) scale(2.100,6.000)" d="M0.5 0 Q0.1 0 0.1 0.3 L0.1 0.7 Q0.1 1 0.5 1 Q0.9 1 0.9 0.7 L0.9 0.3 Q0.9 0 0.5 0 Z" vector-effect="non-scaling-stroke"/><path transform="translate(4.8,0) scale(2.100,6.000)" d="M0.5 0 Q0.1 0 0.1 0.3 L0.1 0.7 Q0.1 1 0.5 1 Q0.9 1 0.9 0.7 L0.9 0.3 Q0.9 0 0.5 0 Z" vector-effect="non-scaling-stroke"/></g>
<g fill="none" stroke="#ffffff" stroke-width="1.15" stroke-linejoin="round" transform="translate(627,442) rotate(-90)"><path transform="translate(0.2,0) scale(2.700,6.000)" d="M0.22 0.2 L0.55 0 L0.55 1" vector-effect="non-scaling-stroke"/><path transform="translate(3.1,0) scale(2.700,6.000)" d="M0.22 0.2 L0.55 0 L0.55 1" vector-effect="non-scaling-stroke"/><path transform="translate(6.2,0) scale(2.700,6.000)" d="M0.85 0 L0.2 0 L0.15 0.45 Q0.3 0.38 0.5 0.38 Q0.9 0.38 0.9 0.7 Q0.9 1 0.5 1 Q0.2 1 0.1 0.85" vector-effect="non-scaling-stroke"/><path transform="translate(9.2,0) scale(2.700,6.000)" d="M0.5 0 Q0.1 0 0.1 0.3 L0.1 0.7 Q0.1 1 0.5 1 Q0.9 1 0.9 0.7 L0.9 0.3 Q0.9 0 0.5 0 Z" vector-effect="non-scaling-stroke"/></g>
<g fill="none" stroke="#ffffff" stroke-width="1.15" stroke-linejoin="round" transform="translate(627,466) rotate(-90)"><path transform="translate(0.1,0) scale(2.400,6.000)" d="M0.22 0.2 L0.55 0 L0.55 1" vector-effect="non-scaling-stroke"/><path transform="translate(2.8,0) scale(2.400,6.000)" d="M0.5 0 Q0.1 0 0.1 0.3 L0.1 0.7 Q0.1 1 0.5 1 Q0.9 1 0.9 0.7 L0.9 0.3 Q0.9 0 0.5 0 Z" vector-effect="non-scaling-stroke"/><path transform="translate(5.5,0) scale(2.400,6.000)" d="M0.5 0 Q0.1 0 0.1 0.3 L0.1 0.7 Q0.1 1 0.5 1 Q0.9 1 0.9 0.7 L0.9 0.3 Q0.9 0 0.5 0 Z" vector-effect="non-scaling-stroke"/></g>
<g fill="none" stroke="#ffffff" stroke-width="1.15" stroke-linejoin="round"><path transform="translate(573.1,466.8) scale(2.730,6.400)" d="M0.85 0 L0.2 0 L0.15 0.45 Q0.3 0.38 0.5 0.38 Q0.9 0.38 0.9 0.7 Q0.9 1 0.5 1 Q0.2 1 0.1 0.85" vector-effect="non-scaling-stroke"/><path transform="translate(576.1,466.8) scale(2.730,6.400)" d="M0.5 0 Q0.1 0 0.1 0.3 L0.1 0.7 Q0.1 1 0.5 1 Q0.9 1 0.9 0.7 L0.9 0.3 Q0.9 0 0.5 0 Z" vector-effect="non-scaling-stroke"/><path transform="translate(579.1,466.8) scale(2.730,6.400)" d="M0.5 0 Q0.1 0 0.1 0.3 L0.1 0.7 Q0.1 1 0.5 1 Q0.9 1 0.9 0.7 L0.9 0.3 Q0.9 0 0.5 0 Z" vector-effect="non-scaling-stroke"/></g>
<g fill="none" stroke="#ffffff" stroke-width="1.15" stroke-linejoin="round"><path transform="translate(601.9,466.8) scale(2.880,6.400)" d="M0.5 0.47 Q0.12 0.47 0.12 0.24 Q0.12 0 0.5 0 Q0.88 0 0.88 0.24 Q0.88 0.47 0.5 0.47 Q0.08 0.47 0.08 0.74 Q0.08 1 0.5 1 Q0.92 1 0.92 0.74 Q0.92 0.47 0.5 0.47" vector-effect="non-scaling-stroke"/><path transform="translate(605.1,466.8) scale(2.880,6.400)" d="M0.5 0 Q0.1 0 0.1 0.3 L0.1 0.7 Q0.1 1 0.5 1 Q0.9 1 0.9 0.7 L0.9 0.3 Q0.9 0 0.5 0 Z" vector-effect="non-scaling-stroke"/><path transform="translate(608.3,466.8) scale(2.880,6.400)" d="M0.5 0 Q0.1 0 0.1 0.3 L0.1 0.7 Q0.1 1 0.5 1 Q0.9 1 0.9 0.7 L0.9 0.3 Q0.9 0 0.5 0 Z" vector-effect="non-scaling-stroke"/></g>
<line x1="583" y1="475" x2="619" y2="475" stroke="#86f06e" stroke-width="1" shape-rendering="crispEdges"/>
<line x1="586" y1="462" x2="586" y2="478" stroke="#86f06e" stroke-width="1" shape-rendering="crispEdges"/>
<line x1="584" y1="477" x2="588" y2="473" stroke="#86f06e" stroke-width="1.2"/>
<line x1="595" y1="462" x2="595" y2="478" stroke="#86f06e" stroke-width="1" shape-rendering="crispEdges"/>
<line x1="593" y1="477" x2="597" y2="473" stroke="#86f06e" stroke-width="1.2"/>
<line x1="616" y1="462" x2="616" y2="478" stroke="#86f06e" stroke-width="1" shape-rendering="crispEdges"/>
<line x1="614" y1="477" x2="618" y2="473" stroke="#86f06e" stroke-width="1.2"/>
<rect x="662.9" y="401.2" width="16.8" height="5.3" fill="#0000ff" shape-rendering="crispEdges"/>
<rect x="662.9" y="401.2" width="5.3" height="18.8" fill="#0000ff" shape-rendering="crispEdges"/>
<line x1="663.6" y1="420" x2="663.6" y2="458.8" stroke="#e8a200" stroke-width="1.1" shape-rendering="crispEdges"/>
<line x1="667.2" y1="420" x2="667.2" y2="458.8" stroke="#e8a200" stroke-width="1.1" shape-rendering="crispEdges"/>
<rect x="662.9" y="458.8" width="5.3" height="9.6" fill="#0000ff" shape-rendering="crispEdges"/>
<line x1="697.7" y1="399" x2="697.7" y2="470" stroke="#86f06e" stroke-width="1" shape-rendering="crispEdges"/>
<line x1="685" y1="401" x2="700.7" y2="401" stroke="#86f06e" stroke-width="1" shape-rendering="crispEdges"/>
<line x1="695.7" y1="403" x2="699.7" y2="399" stroke="#86f06e" stroke-width="1.2"/>
<line x1="685" y1="417" x2="700.7" y2="417" stroke="#86f06e" stroke-width="1" shape-rendering="crispEdges"/>
<line x1="695.7" y1="419" x2="699.7" y2="415" stroke="#86f06e" stroke-width="1.2"/>
<line x1="685" y1="454" x2="700.7" y2="454" stroke="#86f06e" stroke-width="1" shape-rendering="crispEdges"/>
<line x1="695.7" y1="456" x2="699.7" y2="452" stroke="#86f06e" stroke-width="1.2"/>
<line x1="685" y1="468" x2="700.7" y2="468" stroke="#86f06e" stroke-width="1" shape-rendering="crispEdges"/>
<line x1="695.7" y1="470" x2="699.7" y2="466" stroke="#86f06e" stroke-width="1.2"/>
<g fill="none" stroke="#ffffff" stroke-width="1.3" stroke-linejoin="round"><path transform="translate(638,386.3) scale(3.925,7.700)" d="M0.9 0.2 Q0.8 0 0.5 0 Q0.1 0 0.1 0.5 Q0.1 1 0.5 1 Q0.9 1 0.9 0.62 L0.9 0.52 L0.55 0.52" vector-effect="non-scaling-stroke"/><path transform="translate(642.4,386.3) scale(3.925,7.700)" d="M0.1 0 L0.1 1 L0.6 1 Q0.92 1 0.92 0.73 Q0.92 0.47 0.6 0.47 L0.1 0.47 M0.6 0.47 Q0.86 0.47 0.86 0.23 Q0.86 0 0.6 0 L0.1 0" vector-effect="non-scaling-stroke"/><path transform="translate(646.9,386.3) scale(3.925,7.700)" d="M0.1 0 L0.9 0 L0.1 1 L0.9 1" vector-effect="non-scaling-stroke"/><path transform="translate(651.3,386.3) scale(3.925,7.700)" d="M0.22 0.2 L0.55 0 L0.55 1" vector-effect="non-scaling-stroke"/><path transform="translate(655.8,386.3) scale(3.925,7.700)" d="M0.12 0.24 Q0.15 0 0.5 0 Q0.88 0 0.88 0.27 Q0.88 0.45 0.5 0.65 L0.1 1 L0.92 1" vector-effect="non-scaling-stroke"/></g>
<line x1="637.7" y1="395.5" x2="660" y2="395.5" stroke="#ffffff" stroke-width="1" shape-rendering="crispEdges"/>
<line x1="660" y1="395.5" x2="663" y2="401" stroke="#ffffff" stroke-width="0.9"/>
<g fill="none" stroke="#ffffff" stroke-width="1.3" stroke-linejoin="round"><path transform="translate(642.8,445) scale(3.850,7.800)" d="M0.9 0.2 Q0.8 0 0.5 0 Q0.1 0 0.1 0.5 Q0.1 1 0.5 1 Q0.9 1 0.9 0.62 L0.9 0.52 L0.55 0.52" vector-effect="non-scaling-stroke"/><path transform="translate(647.1,445) scale(3.850,7.800)" d="M0.1 0 L0.1 1 L0.6 1 Q0.92 1 0.92 0.73 Q0.92 0.47 0.6 0.47 L0.1 0.47 M0.6 0.47 Q0.86 0.47 0.86 0.23 Q0.86 0 0.6 0 L0.1 0" vector-effect="non-scaling-stroke"/><path transform="translate(651.5,445) scale(3.850,7.800)" d="M0.1 0 L0.9 0 L0.1 1 L0.9 1" vector-effect="non-scaling-stroke"/><path transform="translate(655.9,445) scale(3.850,7.800)" d="M0.22 0.2 L0.55 0 L0.55 1" vector-effect="non-scaling-stroke"/></g>
<line x1="642.5" y1="454.3" x2="660" y2="454.3" stroke="#ffffff" stroke-width="1" shape-rendering="crispEdges"/>
<line x1="660" y1="454.3" x2="663" y2="459" stroke="#ffffff" stroke-width="0.9"/>
<g fill="none" stroke="#ffffff" stroke-width="1.15" stroke-linejoin="round" transform="translate(691,399) rotate(-90)"><path transform="translate(0.1,0) scale(1.800,6.000)" d="M0.22 0.2 L0.55 0 L0.55 1" vector-effect="non-scaling-stroke"/><path transform="translate(2.1,0) scale(1.800,6.000)" d="M0.5 0 Q0.1 0 0.1 0.3 L0.1 0.7 Q0.1 1 0.5 1 Q0.9 1 0.9 0.7 L0.9 0.3 Q0.9 0 0.5 0 Z" vector-effect="non-scaling-stroke"/><path transform="translate(4.1,0) scale(1.800,6.000)" d="M0.5 0 Q0.1 0 0.1 0.3 L0.1 0.7 Q0.1 1 0.5 1 Q0.9 1 0.9 0.7 L0.9 0.3 Q0.9 0 0.5 0 Z" vector-effect="non-scaling-stroke"/></g>
<g fill="none" stroke="#ffffff" stroke-width="1.15" stroke-linejoin="round" transform="translate(691,416) rotate(-90)"><path transform="translate(0.2,0) scale(3.000,6.000)" d="M0.7 1 L0.7 0 L0.06 0.7 L0.95 0.7" vector-effect="non-scaling-stroke"/><path transform="translate(3.5,0) scale(3.000,6.000)" d="M0.5 0 Q0.1 0 0.1 0.3 L0.1 0.7 Q0.1 1 0.5 1 Q0.9 1 0.9 0.7 L0.9 0.3 Q0.9 0 0.5 0 Z" vector-effect="non-scaling-stroke"/><path transform="translate(6.8,0) scale(3.000,6.000)" d="M0.5 0 Q0.1 0 0.1 0.3 L0.1 0.7 Q0.1 1 0.5 1 Q0.9 1 0.9 0.7 L0.9 0.3 Q0.9 0 0.5 0 Z" vector-effect="non-scaling-stroke"/></g>
<g fill="none" stroke="#ffffff" stroke-width="1.15" stroke-linejoin="round" transform="translate(691,442) rotate(-90)"><path transform="translate(0.2,0) scale(2.700,6.000)" d="M0.22 0.2 L0.55 0 L0.55 1" vector-effect="non-scaling-stroke"/><path transform="translate(3.1,0) scale(2.700,6.000)" d="M0.22 0.2 L0.55 0 L0.55 1" vector-effect="non-scaling-stroke"/><path transform="translate(6.2,0) scale(2.700,6.000)" d="M0.85 0 L0.2 0 L0.15 0.45 Q0.3 0.38 0.5 0.38 Q0.9 0.38 0.9 0.7 Q0.9 1 0.5 1 Q0.2 1 0.1 0.85" vector-effect="non-scaling-stroke"/><path transform="translate(9.2,0) scale(2.700,6.000)" d="M0.5 0 Q0.1 0 0.1 0.3 L0.1 0.7 Q0.1 1 0.5 1 Q0.9 1 0.9 0.7 L0.9 0.3 Q0.9 0 0.5 0 Z" vector-effect="non-scaling-stroke"/></g>
<g fill="none" stroke="#ffffff" stroke-width="1.15" stroke-linejoin="round" transform="translate(691,466) rotate(-90)"><path transform="translate(0.2,0) scale(2.700,6.000)" d="M0.85 0.12 Q0.7 0 0.5 0 Q0.1 0 0.1 0.6 Q0.1 1 0.5 1 Q0.9 1 0.9 0.68 Q0.9 0.38 0.5 0.38 Q0.1 0.38 0.1 0.65" vector-effect="non-scaling-stroke"/><path transform="translate(3.1,0) scale(2.700,6.000)" d="M0.85 0 L0.2 0 L0.15 0.45 Q0.3 0.38 0.5 0.38 Q0.9 0.38 0.9 0.7 Q0.9 1 0.5 1 Q0.2 1 0.1 0.85" vector-effect="non-scaling-stroke"/><path transform="translate(6.2,0) scale(2.700,6.000)" d="M0.5 0 Q0.1 0 0.1 0.3 L0.1 0.7 Q0.1 1 0.5 1 Q0.9 1 0.9 0.7 L0.9 0.3 Q0.9 0 0.5 0 Z" vector-effect="non-scaling-stroke"/></g>
<g fill="none" stroke="#ffffff" stroke-width="1.15" stroke-linejoin="round"><path transform="translate(654.7,479.2) scale(2.931,6.000)" d="M0.22 0.2 L0.55 0 L0.55 1" vector-effect="non-scaling-stroke"/><path transform="translate(657.9,479.2) scale(2.931,6.000)" d="M0.5 0 Q0.1 0 0.1 0.3 L0.1 0.7 Q0.1 1 0.5 1 Q0.9 1 0.9 0.7 L0.9 0.3 Q0.9 0 0.5 0 Z" vector-effect="non-scaling-stroke"/><path transform="translate(661.2,479.2) scale(2.931,6.000)" d="M0.5 0 Q0.1 0 0.1 0.3 L0.1 0.7 Q0.1 1 0.5 1 Q0.9 1 0.9 0.7 L0.9 0.3 Q0.9 0 0.5 0 Z" vector-effect="non-scaling-stroke"/><path transform="translate(667.7,479.2) scale(2.931,6.000)" d="M0.85 0.12 Q0.7 0 0.5 0 Q0.1 0 0.1 0.6 Q0.1 1 0.5 1 Q0.9 1 0.9 0.68 Q0.9 0.38 0.5 0.38 Q0.1 0.38 0.1 0.65" vector-effect="non-scaling-stroke"/><path transform="translate(670.9,479.2) scale(2.931,6.000)" d="M0.5 0 Q0.1 0 0.1 0.3 L0.1 0.7 Q0.1 1 0.5 1 Q0.9 1 0.9 0.7 L0.9 0.3 Q0.9 0 0.5 0 Z" vector-effect="non-scaling-stroke"/><path transform="translate(674.2,479.2) scale(2.931,6.000)" d="M0.5 0 Q0.1 0 0.1 0.3 L0.1 0.7 Q0.1 1 0.5 1 Q0.9 1 0.9 0.7 L0.9 0.3 Q0.9 0 0.5 0 Z" vector-effect="non-scaling-stroke"/></g>
<line x1="657" y1="487" x2="683" y2="487" stroke="#86f06e" stroke-width="1" shape-rendering="crispEdges"/>
<line x1="660" y1="474" x2="660" y2="490" stroke="#86f06e" stroke-width="1" shape-rendering="crispEdges"/>
<line x1="658" y1="489" x2="662" y2="485" stroke="#86f06e" stroke-width="1.2"/>
<line x1="663" y1="474" x2="663" y2="490" stroke="#86f06e" stroke-width="1" shape-rendering="crispEdges"/>
<line x1="661" y1="489" x2="665" y2="485" stroke="#86f06e" stroke-width="1.2"/>
<line x1="668" y1="474" x2="668" y2="490" stroke="#86f06e" stroke-width="1" shape-rendering="crispEdges"/>
<line x1="666" y1="489" x2="670" y2="485" stroke="#86f06e" stroke-width="1.2"/>
<line x1="680" y1="474" x2="680" y2="490" stroke="#86f06e" stroke-width="1" shape-rendering="crispEdges"/>
<line x1="678" y1="489" x2="682" y2="485" stroke="#86f06e" stroke-width="1.2"/>
<rect x="757.3" y="401" width="20.9" height="5.5" fill="#0000ff" shape-rendering="crispEdges"/>
<rect x="772.9" y="401" width="5.3" height="11.7" fill="#0000ff" shape-rendering="crispEdges"/>
<line x1="773.6" y1="412.7" x2="773.6" y2="461.2" stroke="#e8a200" stroke-width="1.1" shape-rendering="crispEdges"/>
<line x1="777.4" y1="412.7" x2="777.4" y2="461.2" stroke="#e8a200" stroke-width="1.1" shape-rendering="crispEdges"/>
<rect x="772.9" y="461.2" width="5.3" height="9.6" fill="#0000ff" shape-rendering="crispEdges"/>
<line x1="796.2" y1="399" x2="796.2" y2="473" stroke="#86f06e" stroke-width="1" shape-rendering="crispEdges"/>
<line x1="783" y1="401" x2="799.2" y2="401" stroke="#86f06e" stroke-width="1" shape-rendering="crispEdges"/>
<line x1="794.2" y1="403" x2="798.2" y2="399" stroke="#86f06e" stroke-width="1.2"/>
<line x1="783" y1="417" x2="799.2" y2="417" stroke="#86f06e" stroke-width="1" shape-rendering="crispEdges"/>
<line x1="794.2" y1="419" x2="798.2" y2="415" stroke="#86f06e" stroke-width="1.2"/>
<line x1="783" y1="454" x2="799.2" y2="454" stroke="#86f06e" stroke-width="1" shape-rendering="crispEdges"/>
<line x1="794.2" y1="456" x2="798.2" y2="452" stroke="#86f06e" stroke-width="1.2"/>
<line x1="783" y1="471" x2="799.2" y2="471" stroke="#86f06e" stroke-width="1" shape-rendering="crispEdges"/>
<line x1="794.2" y1="473" x2="798.2" y2="469" stroke="#86f06e" stroke-width="1.2"/>
<g fill="none" stroke="#ffffff" stroke-width="1.3" stroke-linejoin="round"><path transform="translate(732.8,386.3) scale(3.802,7.700)" d="M0.9 0.2 Q0.8 0 0.5 0 Q0.1 0 0.1 0.5 Q0.1 1 0.5 1 Q0.9 1 0.9 0.62 L0.9 0.52 L0.55 0.52" vector-effect="non-scaling-stroke"/><path transform="translate(737.1,386.3) scale(3.802,7.700)" d="M0.1 0 L0.1 1 L0.6 1 Q0.92 1 0.92 0.73 Q0.92 0.47 0.6 0.47 L0.1 0.47 M0.6 0.47 Q0.86 0.47 0.86 0.23 Q0.86 0 0.6 0 L0.1 0" vector-effect="non-scaling-stroke"/><path transform="translate(741.4,386.3) scale(3.802,7.700)" d="M0.1 0 L0.9 0 L0.1 1 L0.9 1" vector-effect="non-scaling-stroke"/><path transform="translate(745.7,386.3) scale(3.802,7.700)" d="M0.22 0.2 L0.55 0 L0.55 1" vector-effect="non-scaling-stroke"/><path transform="translate(750,386.3) scale(3.802,7.700)" d="M0.85 0 L0.2 0 L0.15 0.45 Q0.3 0.38 0.5 0.38 Q0.9 0.38 0.9 0.7 Q0.9 1 0.5 1 Q0.2 1 0.1 0.85" vector-effect="non-scaling-stroke"/></g>
<line x1="732.5" y1="395.5" x2="754.1" y2="395.5" stroke="#ffffff" stroke-width="1" shape-rendering="crispEdges"/>
<line x1="754.1" y1="395.5" x2="757" y2="401" stroke="#ffffff" stroke-width="0.9"/>
<g fill="none" stroke="#ffffff" stroke-width="1.3" stroke-linejoin="round"><path transform="translate(753.3,446.3) scale(3.674,7.700)" d="M0.9 0.2 Q0.8 0 0.5 0 Q0.1 0 0.1 0.5 Q0.1 1 0.5 1 Q0.9 1 0.9 0.62 L0.9 0.52 L0.55 0.52" vector-effect="non-scaling-stroke"/><path transform="translate(757.4,446.3) scale(3.674,7.700)" d="M0.1 0 L0.1 1 L0.6 1 Q0.92 1 0.92 0.73 Q0.92 0.47 0.6 0.47 L0.1 0.47 M0.6 0.47 Q0.86 0.47 0.86 0.23 Q0.86 0 0.6 0 L0.1 0" vector-effect="non-scaling-stroke"/><path transform="translate(761.6,446.3) scale(3.674,7.700)" d="M0.1 0 L0.9 0 L0.1 1 L0.9 1" vector-effect="non-scaling-stroke"/><path transform="translate(765.8,446.3) scale(3.674,7.700)" d="M0.22 0.2 L0.55 0 L0.55 1" vector-effect="non-scaling-stroke"/></g>
<line x1="753" y1="455.5" x2="769.7" y2="455.5" stroke="#ffffff" stroke-width="1" shape-rendering="crispEdges"/>
<line x1="769.7" y1="455.5" x2="773" y2="461" stroke="#ffffff" stroke-width="0.9"/>
<g fill="none" stroke="#ffffff" stroke-width="1.15" stroke-linejoin="round" transform="translate(789,399) rotate(-90)"><path transform="translate(0.1,0) scale(1.800,6.000)" d="M0.22 0.2 L0.55 0 L0.55 1" vector-effect="non-scaling-stroke"/><path transform="translate(2.1,0) scale(1.800,6.000)" d="M0.5 0 Q0.1 0 0.1 0.3 L0.1 0.7 Q0.1 1 0.5 1 Q0.9 1 0.9 0.7 L0.9 0.3 Q0.9 0 0.5 0 Z" vector-effect="non-scaling-stroke"/><path transform="translate(4.1,0) scale(1.800,6.000)" d="M0.5 0 Q0.1 0 0.1 0.3 L0.1 0.7 Q0.1 1 0.5 1 Q0.9 1 0.9 0.7 L0.9 0.3 Q0.9 0 0.5 0 Z" vector-effect="non-scaling-stroke"/></g>
<g fill="none" stroke="#ffffff" stroke-width="1.15" stroke-linejoin="round" transform="translate(789,416) rotate(-90)"><path transform="translate(0.2,0) scale(3.000,6.000)" d="M0.7 1 L0.7 0 L0.06 0.7 L0.95 0.7" vector-effect="non-scaling-stroke"/><path transform="translate(3.5,0) scale(3.000,6.000)" d="M0.5 0 Q0.1 0 0.1 0.3 L0.1 0.7 Q0.1 1 0.5 1 Q0.9 1 0.9 0.7 L0.9 0.3 Q0.9 0 0.5 0 Z" vector-effect="non-scaling-stroke"/><path transform="translate(6.8,0) scale(3.000,6.000)" d="M0.5 0 Q0.1 0 0.1 0.3 L0.1 0.7 Q0.1 1 0.5 1 Q0.9 1 0.9 0.7 L0.9 0.3 Q0.9 0 0.5 0 Z" vector-effect="non-scaling-stroke"/></g>
<g fill="none" stroke="#ffffff" stroke-width="1.15" stroke-linejoin="round" transform="translate(789,442) rotate(-90)"><path transform="translate(0.2,0) scale(2.700,6.000)" d="M0.22 0.2 L0.55 0 L0.55 1" vector-effect="non-scaling-stroke"/><path transform="translate(3.1,0) scale(2.700,6.000)" d="M0.22 0.2 L0.55 0 L0.55 1" vector-effect="non-scaling-stroke"/><path transform="translate(6.2,0) scale(2.700,6.000)" d="M0.85 0 L0.2 0 L0.15 0.45 Q0.3 0.38 0.5 0.38 Q0.9 0.38 0.9 0.7 Q0.9 1 0.5 1 Q0.2 1 0.1 0.85" vector-effect="non-scaling-stroke"/><path transform="translate(9.2,0) scale(2.700,6.000)" d="M0.5 0 Q0.1 0 0.1 0.3 L0.1 0.7 Q0.1 1 0.5 1 Q0.9 1 0.9 0.7 L0.9 0.3 Q0.9 0 0.5 0 Z" vector-effect="non-scaling-stroke"/></g>
<g fill="none" stroke="#ffffff" stroke-width="1.15" stroke-linejoin="round" transform="translate(789,466) rotate(-90)"><path transform="translate(0.2,0) scale(2.700,6.000)" d="M0.1 0 L0.9 0 L0.4 1" vector-effect="non-scaling-stroke"/><path transform="translate(3.1,0) scale(2.700,6.000)" d="M0.5 0 Q0.1 0 0.1 0.3 L0.1 0.7 Q0.1 1 0.5 1 Q0.9 1 0.9 0.7 L0.9 0.3 Q0.9 0 0.5 0 Z" vector-effect="non-scaling-stroke"/><path transform="translate(6.2,0) scale(2.700,6.000)" d="M0.5 0 Q0.1 0 0.1 0.3 L0.1 0.7 Q0.1 1 0.5 1 Q0.9 1 0.9 0.7 L0.9 0.3 Q0.9 0 0.5 0 Z" vector-effect="non-scaling-stroke"/></g>
<g fill="none" stroke="#ffffff" stroke-width="1.15" stroke-linejoin="round"><path transform="translate(761.5,480.4) scale(2.910,6.000)" d="M0.5 0.47 Q0.12 0.47 0.12 0.24 Q0.12 0 0.5 0 Q0.88 0 0.88 0.24 Q0.88 0.47 0.5 0.47 Q0.08 0.47 0.08 0.74 Q0.08 1 0.5 1 Q0.92 1 0.92 0.74 Q0.92 0.47 0.5 0.47" vector-effect="non-scaling-stroke"/><path transform="translate(764.7,480.4) scale(2.910,6.000)" d="M0.5 0 Q0.1 0 0.1 0.3 L0.1 0.7 Q0.1 1 0.5 1 Q0.9 1 0.9 0.7 L0.9 0.3 Q0.9 0 0.5 0 Z" vector-effect="non-scaling-stroke"/><path transform="translate(767.9,480.4) scale(2.910,6.000)" d="M0.5 0 Q0.1 0 0.1 0.3 L0.1 0.7 Q0.1 1 0.5 1 Q0.9 1 0.9 0.7 L0.9 0.3 Q0.9 0 0.5 0 Z" vector-effect="non-scaling-stroke"/></g>
<g fill="none" stroke="#ffffff" stroke-width="1.15" stroke-linejoin="round"><path transform="translate(778.1,480.4) scale(2.550,6.000)" d="M0.22 0.2 L0.55 0 L0.55 1" vector-effect="non-scaling-stroke"/><path transform="translate(781,480.4) scale(2.550,6.000)" d="M0.5 0 Q0.1 0 0.1 0.3 L0.1 0.7 Q0.1 1 0.5 1 Q0.9 1 0.9 0.7 L0.9 0.3 Q0.9 0 0.5 0 Z" vector-effect="non-scaling-stroke"/><path transform="translate(783.8,480.4) scale(2.550,6.000)" d="M0.5 0 Q0.1 0 0.1 0.3 L0.1 0.7 Q0.1 1 0.5 1 Q0.9 1 0.9 0.7 L0.9 0.3 Q0.9 0 0.5 0 Z" vector-effect="non-scaling-stroke"/></g>
<line x1="754" y1="487" x2="781" y2="487" stroke="#86f06e" stroke-width="1" shape-rendering="crispEdges"/>
<line x1="757" y1="474" x2="757" y2="490" stroke="#86f06e" stroke-width="1" shape-rendering="crispEdges"/>
<line x1="755" y1="489" x2="759" y2="485" stroke="#86f06e" stroke-width="1.2"/>
<line x1="773" y1="474" x2="773" y2="490" stroke="#86f06e" stroke-width="1" shape-rendering="crispEdges"/>
<line x1="771" y1="489" x2="775" y2="485" stroke="#86f06e" stroke-width="1.2"/>
<line x1="778" y1="474" x2="778" y2="490" stroke="#86f06e" stroke-width="1" shape-rendering="crispEdges"/>
<line x1="776" y1="489" x2="780" y2="485" stroke="#86f06e" stroke-width="1.2"/>
<rect x="257" y="452" width="14.3" height="4.4" fill="#0000ff" shape-rendering="crispEdges"/>
<rect x="265.8" y="452" width="6" height="11.6" fill="#0000ff" shape-rendering="crispEdges"/>
<line x1="266.5" y1="463.6" x2="266.5" y2="486.4" stroke="#e8a200" stroke-width="1.1" shape-rendering="crispEdges"/>
<line x1="270.8" y1="463.6" x2="270.8" y2="486.4" stroke="#e8a200" stroke-width="1.1" shape-rendering="crispEdges"/>
<rect x="265.8" y="486.4" width="6" height="8.9" fill="#0000ff" shape-rendering="crispEdges"/>
<line x1="278.5" y1="450" x2="278.5" y2="497.3" stroke="#86f06e" stroke-width="1" shape-rendering="crispEdges"/>
<line x1="274" y1="452" x2="281.5" y2="452" stroke="#86f06e" stroke-width="1" shape-rendering="crispEdges"/>
<line x1="276.5" y1="454" x2="280.5" y2="450" stroke="#86f06e" stroke-width="1.2"/>
<line x1="274" y1="456" x2="281.5" y2="456" stroke="#86f06e" stroke-width="1" shape-rendering="crispEdges"/>
<line x1="276.5" y1="458" x2="280.5" y2="454" stroke="#86f06e" stroke-width="1.2"/>
<line x1="274" y1="495.3" x2="281.5" y2="495.3" stroke="#86f06e" stroke-width="1" shape-rendering="crispEdges"/>
<line x1="276.5" y1="497.3" x2="280.5" y2="493.3" stroke="#86f06e" stroke-width="1.2"/>
<g fill="none" stroke="#ffffff" stroke-width="1.3" stroke-linejoin="round"><path transform="translate(248.3,437) scale(4.070,8.000)" d="M0.9 0.2 Q0.8 0 0.5 0 Q0.1 0 0.1 0.5 Q0.1 1 0.5 1 Q0.9 1 0.9 0.62 L0.9 0.52 L0.55 0.52" vector-effect="non-scaling-stroke"/><path transform="translate(252.9,437) scale(4.070,8.000)" d="M0.1 0 L0.1 1 L0.6 1 Q0.92 1 0.92 0.73 Q0.92 0.47 0.6 0.47 L0.1 0.47 M0.6 0.47 Q0.86 0.47 0.86 0.23 Q0.86 0 0.6 0 L0.1 0" vector-effect="non-scaling-stroke"/><path transform="translate(257.5,437) scale(4.070,8.000)" d="M0.1 0 L0.9 0 L0.1 1 L0.9 1" vector-effect="non-scaling-stroke"/><path transform="translate(262.2,437) scale(4.070,8.000)" d="M0.9 0.35 Q0.9 0.62 0.5 0.62 Q0.1 0.62 0.1 0.31 Q0.1 0 0.5 0 Q0.9 0 0.9 0.4 Q0.9 1 0.5 1 Q0.25 1 0.15 0.88" vector-effect="non-scaling-stroke"/></g>
<line x1="248" y1="446.5" x2="266.5" y2="446.5" stroke="#ffffff" stroke-width="1" shape-rendering="crispEdges"/>
<line x1="266.5" y1="446.5" x2="266" y2="452" stroke="#ffffff" stroke-width="0.9"/>
<g fill="none" stroke="#ffffff" stroke-width="1.3" stroke-linejoin="round"><path transform="translate(247.5,472) scale(3.454,8.400)" d="M0.9 0.2 Q0.8 0 0.5 0 Q0.1 0 0.1 0.5 Q0.1 1 0.5 1 Q0.9 1 0.9 0.62 L0.9 0.52 L0.55 0.52" vector-effect="non-scaling-stroke"/><path transform="translate(251.5,472) scale(3.454,8.400)" d="M0.1 0 L0.1 1 L0.6 1 Q0.92 1 0.92 0.73 Q0.92 0.47 0.6 0.47 L0.1 0.47 M0.6 0.47 Q0.86 0.47 0.86 0.23 Q0.86 0 0.6 0 L0.1 0" vector-effect="non-scaling-stroke"/><path transform="translate(255.4,472) scale(3.454,8.400)" d="M0.1 0 L0.9 0 L0.1 1 L0.9 1" vector-effect="non-scaling-stroke"/><path transform="translate(259.3,472) scale(3.454,8.400)" d="M0.22 0.2 L0.55 0 L0.55 1" vector-effect="non-scaling-stroke"/></g>
<line x1="247.3" y1="481.9" x2="263" y2="481.9" stroke="#ffffff" stroke-width="1" shape-rendering="crispEdges"/>
<line x1="263" y1="481.9" x2="266" y2="486" stroke="#ffffff" stroke-width="0.9"/>
<g fill="none" stroke="#ffffff" stroke-width="1.15" stroke-linejoin="round" transform="translate(272,451) rotate(-90)"><path transform="translate(0.1,0) scale(2.100,6.000)" d="M0.22 0.2 L0.55 0 L0.55 1" vector-effect="non-scaling-stroke"/><path transform="translate(2.5,0) scale(2.100,6.000)" d="M0.5 0 Q0.1 0 0.1 0.3 L0.1 0.7 Q0.1 1 0.5 1 Q0.9 1 0.9 0.7 L0.9 0.3 Q0.9 0 0.5 0 Z" vector-effect="non-scaling-stroke"/><path transform="translate(4.8,0) scale(2.100,6.000)" d="M0.5 0 Q0.1 0 0.1 0.3 L0.1 0.7 Q0.1 1 0.5 1 Q0.9 1 0.9 0.7 L0.9 0.3 Q0.9 0 0.5 0 Z" vector-effect="non-scaling-stroke"/></g>
<g fill="none" stroke="#ffffff" stroke-width="1.15" stroke-linejoin="round" transform="translate(272,478) rotate(-90)"><path transform="translate(0.2,0) scale(3.900,6.000)" d="M0.5 0.47 Q0.12 0.47 0.12 0.24 Q0.12 0 0.5 0 Q0.88 0 0.88 0.24 Q0.88 0.47 0.5 0.47 Q0.08 0.47 0.08 0.74 Q0.08 1 0.5 1 Q0.92 1 0.92 0.74 Q0.92 0.47 0.5 0.47" vector-effect="non-scaling-stroke"/><path transform="translate(4.5,0) scale(3.900,6.000)" d="M0.85 0 L0.2 0 L0.15 0.45 Q0.3 0.38 0.5 0.38 Q0.9 0.38 0.9 0.7 Q0.9 1 0.5 1 Q0.2 1 0.1 0.85" vector-effect="non-scaling-stroke"/><path transform="translate(8.9,0) scale(3.900,6.000)" d="M0.5 0 Q0.1 0 0.1 0.3 L0.1 0.7 Q0.1 1 0.5 1 Q0.9 1 0.9 0.7 L0.9 0.3 Q0.9 0 0.5 0 Z" vector-effect="non-scaling-stroke"/></g>
<g fill="none" stroke="#ffffff" stroke-width="1.15" stroke-linejoin="round"><path transform="translate(243.9,507) scale(2.880,5.000)" d="M0.85 0 L0.2 0 L0.15 0.45 Q0.3 0.38 0.5 0.38 Q0.9 0.38 0.9 0.7 Q0.9 1 0.5 1 Q0.2 1 0.1 0.85" vector-effect="non-scaling-stroke"/><path transform="translate(247.1,507) scale(2.880,5.000)" d="M0.5 0 Q0.1 0 0.1 0.3 L0.1 0.7 Q0.1 1 0.5 1 Q0.9 1 0.9 0.7 L0.9 0.3 Q0.9 0 0.5 0 Z" vector-effect="non-scaling-stroke"/><path transform="translate(250.3,507) scale(2.880,5.000)" d="M0.5 0 Q0.1 0 0.1 0.3 L0.1 0.7 Q0.1 1 0.5 1 Q0.9 1 0.9 0.7 L0.9 0.3 Q0.9 0 0.5 0 Z" vector-effect="non-scaling-stroke"/></g>
<g fill="none" stroke="#ffffff" stroke-width="1.15" stroke-linejoin="round"><path transform="translate(270.2,507) scale(2.910,5.000)" d="M0.22 0.2 L0.55 0 L0.55 1" vector-effect="non-scaling-stroke"/><path transform="translate(273.4,507) scale(2.910,5.000)" d="M0.5 0 Q0.1 0 0.1 0.3 L0.1 0.7 Q0.1 1 0.5 1 Q0.9 1 0.9 0.7 L0.9 0.3 Q0.9 0 0.5 0 Z" vector-effect="non-scaling-stroke"/><path transform="translate(276.6,507) scale(2.910,5.000)" d="M0.5 0 Q0.1 0 0.1 0.3 L0.1 0.7 Q0.1 1 0.5 1 Q0.9 1 0.9 0.7 L0.9 0.3 Q0.9 0 0.5 0 Z" vector-effect="non-scaling-stroke"/></g>
<line x1="254" y1="513.5" x2="274" y2="513.5" stroke="#86f06e" stroke-width="1" shape-rendering="crispEdges"/>
<line x1="257" y1="501" x2="257" y2="516.5" stroke="#86f06e" stroke-width="1" shape-rendering="crispEdges"/>
<line x1="255" y1="515.5" x2="259" y2="511.5" stroke="#86f06e" stroke-width="1.2"/>
<line x1="266" y1="501" x2="266" y2="516.5" stroke="#86f06e" stroke-width="1" shape-rendering="crispEdges"/>
<line x1="264" y1="515.5" x2="268" y2="511.5" stroke="#86f06e" stroke-width="1.2"/>
<line x1="271" y1="501" x2="271" y2="516.5" stroke="#86f06e" stroke-width="1" shape-rendering="crispEdges"/>
<line x1="269" y1="515.5" x2="273" y2="511.5" stroke="#86f06e" stroke-width="1.2"/>
<rect x="309" y="451.6" width="12" height="5.3" fill="#0000ff" shape-rendering="crispEdges"/>
<rect x="309" y="451.6" width="6" height="12" fill="#0000ff" shape-rendering="crispEdges"/>
<line x1="321" y1="452.3" x2="365" y2="452.3" stroke="#e8a200" stroke-width="1.1" shape-rendering="crispEdges"/>
<line x1="321" y1="456.2" x2="365" y2="456.2" stroke="#e8a200" stroke-width="1.1" shape-rendering="crispEdges"/>
<rect x="338.5" y="452.4" width="14" height="3.6" fill="#0000ff" shape-rendering="crispEdges"/>
<rect x="338.5" y="452.4" width="14" height="3.6" fill="none" stroke="#ffe000" stroke-width="0.6" rx="0"/>
<rect x="365" y="451.6" width="10" height="5.3" fill="#0000ff" shape-rendering="crispEdges"/>
<line x1="309.7" y1="463.6" x2="309.7" y2="481" stroke="#e8a200" stroke-width="1.1" shape-rendering="crispEdges"/>
<line x1="314" y1="463.6" x2="314" y2="481" stroke="#e8a200" stroke-width="1.1" shape-rendering="crispEdges"/>
<rect x="309" y="481" width="6" height="9.5" fill="#0000ff" shape-rendering="crispEdges"/>
<line x1="393.8" y1="449.6" x2="393.8" y2="492.5" stroke="#86f06e" stroke-width="1" shape-rendering="crispEdges"/>
<line x1="380" y1="451.6" x2="396.8" y2="451.6" stroke="#86f06e" stroke-width="1" shape-rendering="crispEdges"/>
<line x1="391.8" y1="453.6" x2="395.8" y2="449.6" stroke="#86f06e" stroke-width="1.2"/>
<line x1="380" y1="454" x2="396.8" y2="454" stroke="#86f06e" stroke-width="1" shape-rendering="crispEdges"/>
<line x1="391.8" y1="456" x2="395.8" y2="452" stroke="#86f06e" stroke-width="1.2"/>
<line x1="380" y1="490.5" x2="396.8" y2="490.5" stroke="#86f06e" stroke-width="1" shape-rendering="crispEdges"/>
<line x1="391.8" y1="492.5" x2="395.8" y2="488.5" stroke="#86f06e" stroke-width="1.2"/>
<g fill="none" stroke="#ffffff" stroke-width="1.3" stroke-linejoin="round"><path transform="translate(289.1,437.2) scale(3.960,7.800)" d="M0.9 0.2 Q0.8 0 0.5 0 Q0.1 0 0.1 0.5 Q0.1 1 0.5 1 Q0.9 1 0.9 0.62 L0.9 0.52 L0.55 0.52" vector-effect="non-scaling-stroke"/><path transform="translate(293.6,437.2) scale(3.960,7.800)" d="M0.1 0 L0.1 1 L0.6 1 Q0.92 1 0.92 0.73 Q0.92 0.47 0.6 0.47 L0.1 0.47 M0.6 0.47 Q0.86 0.47 0.86 0.23 Q0.86 0 0.6 0 L0.1 0" vector-effect="non-scaling-stroke"/><path transform="translate(298.1,437.2) scale(3.960,7.800)" d="M0.1 0 L0.9 0 L0.1 1 L0.9 1" vector-effect="non-scaling-stroke"/><path transform="translate(302.6,437.2) scale(3.960,7.800)" d="M0.1 0 L0.9 0 L0.4 1" vector-effect="non-scaling-stroke"/></g>
<line x1="288.8" y1="446.5" x2="306.8" y2="446.5" stroke="#ffffff" stroke-width="1" shape-rendering="crispEdges"/>
<line x1="306.8" y1="446.5" x2="309" y2="452" stroke="#ffffff" stroke-width="0.9"/>
<g fill="none" stroke="#ffffff" stroke-width="1.3" stroke-linejoin="round"><path transform="translate(314.1,437.2) scale(4.013,7.800)" d="M0.9 0.2 Q0.8 0 0.5 0 Q0.1 0 0.1 0.5 Q0.1 1 0.5 1 Q0.9 1 0.9 0.62 L0.9 0.52 L0.55 0.52" vector-effect="non-scaling-stroke"/><path transform="translate(318.6,437.2) scale(4.013,7.800)" d="M0.1 0 L0.1 1 L0.6 1 Q0.92 1 0.92 0.73 Q0.92 0.47 0.6 0.47 L0.1 0.47 M0.6 0.47 Q0.86 0.47 0.86 0.23 Q0.86 0 0.6 0 L0.1 0" vector-effect="non-scaling-stroke"/><path transform="translate(323.2,437.2) scale(4.013,7.800)" d="M0.1 0 L0.9 0 L0.1 1 L0.9 1" vector-effect="non-scaling-stroke"/><path transform="translate(327.8,437.2) scale(4.013,7.800)" d="M0.12 0.24 Q0.15 0 0.5 0 Q0.88 0 0.88 0.27 Q0.88 0.45 0.5 0.65 L0.1 1 L0.92 1" vector-effect="non-scaling-stroke"/><path transform="translate(332.3,437.2) scale(4.013,7.800)" d="M0.12 0.24 Q0.15 0 0.5 0 Q0.88 0 0.88 0.27 Q0.88 0.45 0.5 0.65 L0.1 1 L0.92 1" vector-effect="non-scaling-stroke"/></g>
<line x1="313.8" y1="446.5" x2="336.6" y2="446.5" stroke="#ffffff" stroke-width="1" shape-rendering="crispEdges"/>
<line x1="336.6" y1="446.5" x2="340" y2="452" stroke="#ffffff" stroke-width="0.9"/>
<g fill="none" stroke="#ffffff" stroke-width="1.3" stroke-linejoin="round"><path transform="translate(346,437.2) scale(3.718,7.800)" d="M0.9 0.2 Q0.8 0 0.5 0 Q0.1 0 0.1 0.5 Q0.1 1 0.5 1 Q0.9 1 0.9 0.62 L0.9 0.52 L0.55 0.52" vector-effect="non-scaling-stroke"/><path transform="translate(350.2,437.2) scale(3.718,7.800)" d="M0.1 0 L0.1 1 L0.6 1 Q0.92 1 0.92 0.73 Q0.92 0.47 0.6 0.47 L0.1 0.47 M0.6 0.47 Q0.86 0.47 0.86 0.23 Q0.86 0 0.6 0 L0.1 0" vector-effect="non-scaling-stroke"/><path transform="translate(354.4,437.2) scale(3.718,7.800)" d="M0.1 0 L0.9 0 L0.1 1 L0.9 1" vector-effect="non-scaling-stroke"/><path transform="translate(358.6,437.2) scale(3.718,7.800)" d="M0.22 0.2 L0.55 0 L0.55 1" vector-effect="non-scaling-stroke"/></g>
<line x1="345.7" y1="446.5" x2="362.6" y2="446.5" stroke="#ffffff" stroke-width="1" shape-rendering="crispEdges"/>
<line x1="362.6" y1="446.5" x2="366" y2="452" stroke="#ffffff" stroke-width="0.9"/>
<g fill="none" stroke="#ffffff" stroke-width="1.3" stroke-linejoin="round"><path transform="translate(289.1,466) scale(3.784,7.700)" d="M0.9 0.2 Q0.8 0 0.5 0 Q0.1 0 0.1 0.5 Q0.1 1 0.5 1 Q0.9 1 0.9 0.62 L0.9 0.52 L0.55 0.52" vector-effect="non-scaling-stroke"/><path transform="translate(293.4,466) scale(3.784,7.700)" d="M0.1 0 L0.1 1 L0.6 1 Q0.92 1 0.92 0.73 Q0.92 0.47 0.6 0.47 L0.1 0.47 M0.6 0.47 Q0.86 0.47 0.86 0.23 Q0.86 0 0.6 0 L0.1 0" vector-effect="non-scaling-stroke"/><path transform="translate(297.7,466) scale(3.784,7.700)" d="M0.1 0 L0.9 0 L0.1 1 L0.9 1" vector-effect="non-scaling-stroke"/><path transform="translate(302,466) scale(3.784,7.700)" d="M0.22 0.2 L0.55 0 L0.55 1" vector-effect="non-scaling-stroke"/></g>
<line x1="288.8" y1="475.2" x2="306" y2="475.2" stroke="#ffffff" stroke-width="1" shape-rendering="crispEdges"/>
<line x1="306" y1="475.2" x2="309" y2="481" stroke="#ffffff" stroke-width="0.9"/>
<g fill="none" stroke="#ffffff" stroke-width="1.15" stroke-linejoin="round" transform="translate(387,451) rotate(-90)"><path transform="translate(0.1,0) scale(2.100,6.000)" d="M0.22 0.2 L0.55 0 L0.55 1" vector-effect="non-scaling-stroke"/><path transform="translate(2.5,0) scale(2.100,6.000)" d="M0.5 0 Q0.1 0 0.1 0.3 L0.1 0.7 Q0.1 1 0.5 1 Q0.9 1 0.9 0.7 L0.9 0.3 Q0.9 0 0.5 0 Z" vector-effect="non-scaling-stroke"/><path transform="translate(4.8,0) scale(2.100,6.000)" d="M0.5 0 Q0.1 0 0.1 0.3 L0.1 0.7 Q0.1 1 0.5 1 Q0.9 1 0.9 0.7 L0.9 0.3 Q0.9 0 0.5 0 Z" vector-effect="non-scaling-stroke"/></g>
<g fill="none" stroke="#ffffff" stroke-width="1.15" stroke-linejoin="round" transform="translate(387,478) rotate(-90)"><path transform="translate(0.2,0) scale(3.150,6.000)" d="M0.22 0.2 L0.55 0 L0.55 1" vector-effect="non-scaling-stroke"/><path transform="translate(3.7,0) scale(3.150,6.000)" d="M0.5 0 Q0.1 0 0.1 0.3 L0.1 0.7 Q0.1 1 0.5 1 Q0.9 1 0.9 0.7 L0.9 0.3 Q0.9 0 0.5 0 Z" vector-effect="non-scaling-stroke"/><path transform="translate(7.2,0) scale(3.150,6.000)" d="M0.85 0 L0.2 0 L0.15 0.45 Q0.3 0.38 0.5 0.38 Q0.9 0.38 0.9 0.7 Q0.9 1 0.5 1 Q0.2 1 0.1 0.85" vector-effect="non-scaling-stroke"/><path transform="translate(10.7,0) scale(3.150,6.000)" d="M0.5 0 Q0.1 0 0.1 0.3 L0.1 0.7 Q0.1 1 0.5 1 Q0.9 1 0.9 0.7 L0.9 0.3 Q0.9 0 0.5 0 Z" vector-effect="non-scaling-stroke"/></g>
<g fill="none" stroke="#ffffff" stroke-width="1.15" stroke-linejoin="round"><path transform="translate(300.1,494.8) scale(2.550,6.700)" d="M0.22 0.2 L0.55 0 L0.55 1" vector-effect="non-scaling-stroke"/><path transform="translate(303,494.8) scale(2.550,6.700)" d="M0.5 0 Q0.1 0 0.1 0.3 L0.1 0.7 Q0.1 1 0.5 1 Q0.9 1 0.9 0.7 L0.9 0.3 Q0.9 0 0.5 0 Z" vector-effect="non-scaling-stroke"/><path transform="translate(305.8,494.8) scale(2.550,6.700)" d="M0.5 0 Q0.1 0 0.1 0.3 L0.1 0.7 Q0.1 1 0.5 1 Q0.9 1 0.9 0.7 L0.9 0.3 Q0.9 0 0.5 0 Z" vector-effect="non-scaling-stroke"/></g>
<g fill="none" stroke="#ffffff" stroke-width="1.15" stroke-linejoin="round"><path transform="translate(318.2,494.8) scale(2.925,6.700)" d="M0.22 0.2 L0.55 0 L0.55 1" vector-effect="non-scaling-stroke"/><path transform="translate(321.4,494.8) scale(2.925,6.700)" d="M0.22 0.2 L0.55 0 L0.55 1" vector-effect="non-scaling-stroke"/><path transform="translate(324.7,494.8) scale(2.925,6.700)" d="M0.5 0 Q0.1 0 0.1 0.3 L0.1 0.7 Q0.1 1 0.5 1 Q0.9 1 0.9 0.7 L0.9 0.3 Q0.9 0 0.5 0 Z" vector-effect="non-scaling-stroke"/><path transform="translate(327.9,494.8) scale(2.925,6.700)" d="M0.5 0 Q0.1 0 0.1 0.3 L0.1 0.7 Q0.1 1 0.5 1 Q0.9 1 0.9 0.7 L0.9 0.3 Q0.9 0 0.5 0 Z" vector-effect="non-scaling-stroke"/></g>
<g fill="none" stroke="#ffffff" stroke-width="1.15" stroke-linejoin="round"><path transform="translate(341.1,494.8) scale(2.400,6.700)" d="M0.85 0.12 Q0.7 0 0.5 0 Q0.1 0 0.1 0.6 Q0.1 1 0.5 1 Q0.9 1 0.9 0.68 Q0.9 0.38 0.5 0.38 Q0.1 0.38 0.1 0.65" vector-effect="non-scaling-stroke"/><path transform="translate(343.8,494.8) scale(2.400,6.700)" d="M0.5 0 Q0.1 0 0.1 0.3 L0.1 0.7 Q0.1 1 0.5 1 Q0.9 1 0.9 0.7 L0.9 0.3 Q0.9 0 0.5 0 Z" vector-effect="non-scaling-stroke"/><path transform="translate(346.5,494.8) scale(2.400,6.700)" d="M0.5 0 Q0.1 0 0.1 0.3 L0.1 0.7 Q0.1 1 0.5 1 Q0.9 1 0.9 0.7 L0.9 0.3 Q0.9 0 0.5 0 Z" vector-effect="non-scaling-stroke"/></g>
<g fill="none" stroke="#ffffff" stroke-width="1.15" stroke-linejoin="round"><path transform="translate(356.7,494.8) scale(2.970,6.700)" d="M0.22 0.2 L0.55 0 L0.55 1" vector-effect="non-scaling-stroke"/><path transform="translate(360,494.8) scale(2.970,6.700)" d="M0.5 0 Q0.1 0 0.1 0.3 L0.1 0.7 Q0.1 1 0.5 1 Q0.9 1 0.9 0.7 L0.9 0.3 Q0.9 0 0.5 0 Z" vector-effect="non-scaling-stroke"/><path transform="translate(363.3,494.8) scale(2.970,6.700)" d="M0.5 0 Q0.1 0 0.1 0.3 L0.1 0.7 Q0.1 1 0.5 1 Q0.9 1 0.9 0.7 L0.9 0.3 Q0.9 0 0.5 0 Z" vector-effect="non-scaling-stroke"/><path transform="translate(366.6,494.8) scale(2.970,6.700)" d="M0.5 0 Q0.1 0 0.1 0.3 L0.1 0.7 Q0.1 1 0.5 1 Q0.9 1 0.9 0.7 L0.9 0.3 Q0.9 0 0.5 0 Z" vector-effect="non-scaling-stroke"/></g>
<line x1="306.7" y1="503.2" x2="378.7" y2="503.2" stroke="#86f06e" stroke-width="1" shape-rendering="crispEdges"/>
<line x1="309.7" y1="490" x2="309.7" y2="506.2" stroke="#86f06e" stroke-width="1" shape-rendering="crispEdges"/>
<line x1="307.7" y1="505.2" x2="311.7" y2="501.2" stroke="#86f06e" stroke-width="1.2"/>
<line x1="315" y1="490" x2="315" y2="506.2" stroke="#86f06e" stroke-width="1" shape-rendering="crispEdges"/>
<line x1="313" y1="505.2" x2="317" y2="501.2" stroke="#86f06e" stroke-width="1.2"/>
<line x1="338.5" y1="490" x2="338.5" y2="506.2" stroke="#86f06e" stroke-width="1" shape-rendering="crispEdges"/>
<line x1="336.5" y1="505.2" x2="340.5" y2="501.2" stroke="#86f06e" stroke-width="1.2"/>
<line x1="352.5" y1="490" x2="352.5" y2="506.2" stroke="#86f06e" stroke-width="1" shape-rendering="crispEdges"/>
<line x1="350.5" y1="505.2" x2="354.5" y2="501.2" stroke="#86f06e" stroke-width="1.2"/>
<line x1="375.7" y1="490" x2="375.7" y2="506.2" stroke="#86f06e" stroke-width="1" shape-rendering="crispEdges"/>
<line x1="373.7" y1="505.2" x2="377.7" y2="501.2" stroke="#86f06e" stroke-width="1.2"/>
<rect x="431.2" y="451.6" width="12" height="5.4" fill="#0000ff" shape-rendering="crispEdges"/>
<rect x="431.2" y="451.6" width="5.3" height="16.4" fill="#0000ff" shape-rendering="crispEdges"/>
<line x1="443.2" y1="452.8" x2="485.2" y2="452.8" stroke="#e8a200" stroke-width="1.1" shape-rendering="crispEdges"/>
<line x1="443.2" y1="456" x2="485.2" y2="456" stroke="#e8a200" stroke-width="1.1" shape-rendering="crispEdges"/>
<rect x="485.2" y="451.6" width="12" height="5.4" fill="#0000ff" shape-rendering="crispEdges"/>
<rect x="491.2" y="451.6" width="6" height="12" fill="#0000ff" shape-rendering="crispEdges"/>
<line x1="492" y1="463.6" x2="492" y2="497.2" stroke="#e8a200" stroke-width="1.1" shape-rendering="crispEdges"/>
<line x1="496" y1="463.6" x2="496" y2="497.2" stroke="#e8a200" stroke-width="1.1" shape-rendering="crispEdges"/>
<rect x="491.2" y="497.2" width="6" height="11.6" fill="#0000ff" shape-rendering="crispEdges"/>
<rect x="481.2" y="503.3" width="16" height="5.5" fill="#0000ff" shape-rendering="crispEdges"/>
<rect x="481.2" y="503.3" width="5.8" height="12" fill="#0000ff" shape-rendering="crispEdges"/>
<line x1="481.9" y1="515.3" x2="481.9" y2="553.7" stroke="#e8a200" stroke-width="1.1" shape-rendering="crispEdges"/>
<line x1="486" y1="515.3" x2="486" y2="553.7" stroke="#e8a200" stroke-width="1.1" shape-rendering="crispEdges"/>
<rect x="475.1" y="553.7" width="11.9" height="6" fill="#0000ff" shape-rendering="crispEdges"/>
<line x1="436.5" y1="554.4" x2="475.1" y2="554.4" stroke="#e8a200" stroke-width="1.1" shape-rendering="crispEdges"/>
<line x1="436.5" y1="558" x2="475.1" y2="558" stroke="#e8a200" stroke-width="1.1" shape-rendering="crispEdges"/>
<rect x="431.2" y="542.4" width="5.3" height="17.3" fill="#0000ff" shape-rendering="crispEdges"/>
<rect x="431.2" y="553.7" width="11.8" height="6" fill="#0000ff" shape-rendering="crispEdges"/>
<line x1="481.9" y1="559.7" x2="481.9" y2="576" stroke="#e8a200" stroke-width="1.1" shape-rendering="crispEdges"/>
<line x1="486" y1="559.7" x2="486" y2="576" stroke="#e8a200" stroke-width="1.1" shape-rendering="crispEdges"/>
<rect x="481" y="576" width="6" height="12.5" fill="#0000ff" shape-rendering="crispEdges"/>
<rect x="470" y="582.5" width="17" height="6" fill="#0000ff" shape-rendering="crispEdges"/>
<line x1="503.2" y1="449.6" x2="503.2" y2="590.5" stroke="#86f06e" stroke-width="1" shape-rendering="crispEdges"/>
<line x1="490" y1="451.6" x2="506.2" y2="451.6" stroke="#86f06e" stroke-width="1" shape-rendering="crispEdges"/>
<line x1="501.2" y1="453.6" x2="505.2" y2="449.6" stroke="#86f06e" stroke-width="1.2"/>
<line x1="490" y1="497" x2="506.2" y2="497" stroke="#86f06e" stroke-width="1" shape-rendering="crispEdges"/>
<line x1="501.2" y1="499" x2="505.2" y2="495" stroke="#86f06e" stroke-width="1.2"/>
<line x1="490" y1="508.8" x2="506.2" y2="508.8" stroke="#86f06e" stroke-width="1" shape-rendering="crispEdges"/>
<line x1="501.2" y1="510.8" x2="505.2" y2="506.8" stroke="#86f06e" stroke-width="1.2"/>
<line x1="490" y1="553.7" x2="506.2" y2="553.7" stroke="#86f06e" stroke-width="1" shape-rendering="crispEdges"/>
<line x1="501.2" y1="555.7" x2="505.2" y2="551.7" stroke="#86f06e" stroke-width="1.2"/>
<line x1="490" y1="582.5" x2="506.2" y2="582.5" stroke="#86f06e" stroke-width="1" shape-rendering="crispEdges"/>
<line x1="501.2" y1="584.5" x2="505.2" y2="580.5" stroke="#86f06e" stroke-width="1.2"/>
<line x1="490" y1="588.5" x2="506.2" y2="588.5" stroke="#86f06e" stroke-width="1" shape-rendering="crispEdges"/>
<line x1="501.2" y1="590.5" x2="505.2" y2="586.5" stroke="#86f06e" stroke-width="1.2"/>
<line x1="428.2" y1="436" x2="499" y2="436" stroke="#86f06e" stroke-width="1" shape-rendering="crispEdges"/>
<line x1="431.2" y1="448" x2="431.2" y2="433" stroke="#86f06e" stroke-width="1" shape-rendering="crispEdges"/>
<line x1="429.2" y1="438" x2="433.2" y2="434" stroke="#86f06e" stroke-width="1.2"/>
<line x1="494" y1="448" x2="494" y2="433" stroke="#86f06e" stroke-width="1" shape-rendering="crispEdges"/>
<line x1="492" y1="438" x2="496" y2="434" stroke="#86f06e" stroke-width="1.2"/>
<line x1="496" y1="448" x2="496" y2="433" stroke="#86f06e" stroke-width="1" shape-rendering="crispEdges"/>
<line x1="494" y1="438" x2="498" y2="434" stroke="#86f06e" stroke-width="1.2"/>
<line x1="420.4" y1="444.8" x2="420.4" y2="474" stroke="#86f06e" stroke-width="1" shape-rendering="crispEdges"/>
<line x1="416" y1="446.8" x2="423.4" y2="446.8" stroke="#86f06e" stroke-width="1" shape-rendering="crispEdges"/>
<line x1="418.4" y1="448.8" x2="422.4" y2="444.8" stroke="#86f06e" stroke-width="1.2"/>
<line x1="416" y1="452" x2="423.4" y2="452" stroke="#86f06e" stroke-width="1" shape-rendering="crispEdges"/>
<line x1="418.4" y1="454" x2="422.4" y2="450" stroke="#86f06e" stroke-width="1.2"/>
<line x1="416" y1="468" x2="423.4" y2="468" stroke="#86f06e" stroke-width="1" shape-rendering="crispEdges"/>
<line x1="418.4" y1="470" x2="422.4" y2="466" stroke="#86f06e" stroke-width="1.2"/>
<line x1="416" y1="472" x2="423.4" y2="472" stroke="#86f06e" stroke-width="1" shape-rendering="crispEdges"/>
<line x1="418.4" y1="474" x2="422.4" y2="470" stroke="#86f06e" stroke-width="1.2"/>
<g fill="none" stroke="#ffffff" stroke-width="1.3" stroke-linejoin="round"><path transform="translate(411.1,430) scale(4.224,8.400)" d="M0.9 0.2 Q0.8 0 0.5 0 Q0.1 0 0.1 0.5 Q0.1 1 0.5 1 Q0.9 1 0.9 0.62 L0.9 0.52 L0.55 0.52" vector-effect="non-scaling-stroke"/><path transform="translate(415.9,430) scale(4.224,8.400)" d="M0.1 0 L0.1 1 L0.6 1 Q0.92 1 0.92 0.73 Q0.92 0.47 0.6 0.47 L0.1 0.47 M0.6 0.47 Q0.86 0.47 0.86 0.23 Q0.86 0 0.6 0 L0.1 0" vector-effect="non-scaling-stroke"/><path transform="translate(420.7,430) scale(4.224,8.400)" d="M0.1 0 L0.9 0 L0.1 1 L0.9 1" vector-effect="non-scaling-stroke"/><path transform="translate(425.5,430) scale(4.224,8.400)" d="M0.5 0.47 Q0.12 0.47 0.12 0.24 Q0.12 0 0.5 0 Q0.88 0 0.88 0.24 Q0.88 0.47 0.5 0.47 Q0.08 0.47 0.08 0.74 Q0.08 1 0.5 1 Q0.92 1 0.92 0.74 Q0.92 0.47 0.5 0.47" vector-effect="non-scaling-stroke"/></g>
<line x1="410.8" y1="439.9" x2="430" y2="439.9" stroke="#ffffff" stroke-width="1" shape-rendering="crispEdges"/>
<line x1="430" y1="439.9" x2="431" y2="452" stroke="#ffffff" stroke-width="0.9"/>
<g fill="none" stroke="#ffffff" stroke-width="1.3" stroke-linejoin="round"><path transform="translate(464.3,437.2) scale(3.872,8.400)" d="M0.9 0.2 Q0.8 0 0.5 0 Q0.1 0 0.1 0.5 Q0.1 1 0.5 1 Q0.9 1 0.9 0.62 L0.9 0.52 L0.55 0.52" vector-effect="non-scaling-stroke"/><path transform="translate(468.7,437.2) scale(3.872,8.400)" d="M0.1 0 L0.1 1 L0.6 1 Q0.92 1 0.92 0.73 Q0.92 0.47 0.6 0.47 L0.1 0.47 M0.6 0.47 Q0.86 0.47 0.86 0.23 Q0.86 0 0.6 0 L0.1 0" vector-effect="non-scaling-stroke"/><path transform="translate(473.1,437.2) scale(3.872,8.400)" d="M0.1 0 L0.9 0 L0.1 1 L0.9 1" vector-effect="non-scaling-stroke"/><path transform="translate(477.5,437.2) scale(3.872,8.400)" d="M0.1 0 L0.9 0 L0.4 1" vector-effect="non-scaling-stroke"/></g>
<line x1="464" y1="447.1" x2="481.6" y2="447.1" stroke="#ffffff" stroke-width="1" shape-rendering="crispEdges"/>
<line x1="481.6" y1="447.1" x2="485" y2="452" stroke="#ffffff" stroke-width="0.9"/>
<g fill="none" stroke="#ffffff" stroke-width="1.3" stroke-linejoin="round"><path transform="translate(457.3,488.8) scale(3.907,8.400)" d="M0.9 0.2 Q0.8 0 0.5 0 Q0.1 0 0.1 0.5 Q0.1 1 0.5 1 Q0.9 1 0.9 0.62 L0.9 0.52 L0.55 0.52" vector-effect="non-scaling-stroke"/><path transform="translate(461.7,488.8) scale(3.907,8.400)" d="M0.1 0 L0.1 1 L0.6 1 Q0.92 1 0.92 0.73 Q0.92 0.47 0.6 0.47 L0.1 0.47 M0.6 0.47 Q0.86 0.47 0.86 0.23 Q0.86 0 0.6 0 L0.1 0" vector-effect="non-scaling-stroke"/><path transform="translate(466.1,488.8) scale(3.907,8.400)" d="M0.1 0 L0.9 0 L0.1 1 L0.9 1" vector-effect="non-scaling-stroke"/><path transform="translate(470.6,488.8) scale(3.907,8.400)" d="M0.22 0.2 L0.55 0 L0.55 1" vector-effect="non-scaling-stroke"/><path transform="translate(475,488.8) scale(3.907,8.400)" d="M0.1 0 L0.9 0 L0.4 1" vector-effect="non-scaling-stroke"/></g>
<line x1="457" y1="498.7" x2="479.2" y2="498.7" stroke="#ffffff" stroke-width="1" shape-rendering="crispEdges"/>
<line x1="479.2" y1="498.7" x2="481" y2="503" stroke="#ffffff" stroke-width="0.9"/>
<g fill="none" stroke="#ffffff" stroke-width="1.3" stroke-linejoin="round"><path transform="translate(406.3,528.5) scale(3.714,8.400)" d="M0.9 0.2 Q0.8 0 0.5 0 Q0.1 0 0.1 0.5 Q0.1 1 0.5 1 Q0.9 1 0.9 0.62 L0.9 0.52 L0.55 0.52" vector-effect="non-scaling-stroke"/><path transform="translate(410.5,528.5) scale(3.714,8.400)" d="M0.1 0 L0.1 1 L0.6 1 Q0.92 1 0.92 0.73 Q0.92 0.47 0.6 0.47 L0.1 0.47 M0.6 0.47 Q0.86 0.47 0.86 0.23 Q0.86 0 0.6 0 L0.1 0" vector-effect="non-scaling-stroke"/><path transform="translate(414.7,528.5) scale(3.714,8.400)" d="M0.1 0 L0.9 0 L0.1 1 L0.9 1" vector-effect="non-scaling-stroke"/><path transform="translate(418.9,528.5) scale(3.714,8.400)" d="M0.22 0.2 L0.55 0 L0.55 1" vector-effect="non-scaling-stroke"/><path transform="translate(423.1,528.5) scale(3.714,8.400)" d="M0.5 0 Q0.1 0 0.1 0.3 L0.1 0.7 Q0.1 1 0.5 1 Q0.9 1 0.9 0.7 L0.9 0.3 Q0.9 0 0.5 0 Z" vector-effect="non-scaling-stroke"/></g>
<line x1="406" y1="538.4" x2="427.1" y2="538.4" stroke="#ffffff" stroke-width="1" shape-rendering="crispEdges"/>
<line x1="427.1" y1="538.4" x2="431" y2="542" stroke="#ffffff" stroke-width="0.9"/>
<g fill="none" stroke="#ffffff" stroke-width="1.3" stroke-linejoin="round"><path transform="translate(454.3,539.3) scale(3.960,8.400)" d="M0.9 0.2 Q0.8 0 0.5 0 Q0.1 0 0.1 0.5 Q0.1 1 0.5 1 Q0.9 1 0.9 0.62 L0.9 0.52 L0.55 0.52" vector-effect="non-scaling-stroke"/><path transform="translate(458.8,539.3) scale(3.960,8.400)" d="M0.1 0 L0.1 1 L0.6 1 Q0.92 1 0.92 0.73 Q0.92 0.47 0.6 0.47 L0.1 0.47 M0.6 0.47 Q0.86 0.47 0.86 0.23 Q0.86 0 0.6 0 L0.1 0" vector-effect="non-scaling-stroke"/><path transform="translate(463.3,539.3) scale(3.960,8.400)" d="M0.1 0 L0.9 0 L0.1 1 L0.9 1" vector-effect="non-scaling-stroke"/><path transform="translate(467.8,539.3) scale(3.960,8.400)" d="M0.12 0.24 Q0.15 0 0.5 0 Q0.88 0 0.88 0.27 Q0.88 0.45 0.5 0.65 L0.1 1 L0.92 1" vector-effect="non-scaling-stroke"/></g>
<line x1="454" y1="549.2" x2="472" y2="549.2" stroke="#ffffff" stroke-width="1" shape-rendering="crispEdges"/>
<line x1="472" y1="549.2" x2="475" y2="554" stroke="#ffffff" stroke-width="0.9"/>
<g fill="none" stroke="#ffffff" stroke-width="1.3" stroke-linejoin="round"><path transform="translate(447,568.8) scale(3.590,8.200)" d="M0.9 0.2 Q0.8 0 0.5 0 Q0.1 0 0.1 0.5 Q0.1 1 0.5 1 Q0.9 1 0.9 0.62 L0.9 0.52 L0.55 0.52" vector-effect="non-scaling-stroke"/><path transform="translate(451.1,568.8) scale(3.590,8.200)" d="M0.1 0 L0.1 1 L0.6 1 Q0.92 1 0.92 0.73 Q0.92 0.47 0.6 0.47 L0.1 0.47 M0.6 0.47 Q0.86 0.47 0.86 0.23 Q0.86 0 0.6 0 L0.1 0" vector-effect="non-scaling-stroke"/><path transform="translate(455.2,568.8) scale(3.590,8.200)" d="M0.1 0 L0.9 0 L0.1 1 L0.9 1" vector-effect="non-scaling-stroke"/><path transform="translate(459.3,568.8) scale(3.590,8.200)" d="M0.22 0.2 L0.55 0 L0.55 1" vector-effect="non-scaling-stroke"/><path transform="translate(463.4,568.8) scale(3.590,8.200)" d="M0.22 0.2 L0.55 0 L0.55 1" vector-effect="non-scaling-stroke"/></g>
<line x1="446.8" y1="578.5" x2="467.2" y2="578.5" stroke="#ffffff" stroke-width="1" shape-rendering="crispEdges"/>
<line x1="467.2" y1="578.5" x2="470" y2="582.5" stroke="#ffffff" stroke-width="0.9"/>
<g fill="none" stroke="#ffffff" stroke-width="1.15" stroke-linejoin="round"><path transform="translate(456.5,430.5) scale(2.700,4.800)" d="M0.12 0.24 Q0.15 0 0.5 0 Q0.88 0 0.88 0.27 Q0.88 0.45 0.5 0.65 L0.1 1 L0.92 1" vector-effect="non-scaling-stroke"/><path transform="translate(459.5,430.5) scale(2.700,4.800)" d="M0.9 0.35 Q0.9 0.62 0.5 0.62 Q0.1 0.62 0.1 0.31 Q0.1 0 0.5 0 Q0.9 0 0.9 0.4 Q0.9 1 0.5 1 Q0.25 1 0.15 0.88" vector-effect="non-scaling-stroke"/><path transform="translate(462.5,430.5) scale(2.700,4.800)" d="M0.5 0 Q0.1 0 0.1 0.3 L0.1 0.7 Q0.1 1 0.5 1 Q0.9 1 0.9 0.7 L0.9 0.3 Q0.9 0 0.5 0 Z" vector-effect="non-scaling-stroke"/><path transform="translate(465.5,430.5) scale(2.700,4.800)" d="M0.5 0 Q0.1 0 0.1 0.3 L0.1 0.7 Q0.1 1 0.5 1 Q0.9 1 0.9 0.7 L0.9 0.3 Q0.9 0 0.5 0 Z" vector-effect="non-scaling-stroke"/></g>
<g fill="none" stroke="#ffffff" stroke-width="1.15" stroke-linejoin="round"><path transform="translate(495.8,430.5) scale(2.820,4.800)" d="M0.22 0.2 L0.55 0 L0.55 1" vector-effect="non-scaling-stroke"/><path transform="translate(498.9,430.5) scale(2.820,4.800)" d="M0.5 0 Q0.1 0 0.1 0.3 L0.1 0.7 Q0.1 1 0.5 1 Q0.9 1 0.9 0.7 L0.9 0.3 Q0.9 0 0.5 0 Z" vector-effect="non-scaling-stroke"/><path transform="translate(502,430.5) scale(2.820,4.800)" d="M0.5 0 Q0.1 0 0.1 0.3 L0.1 0.7 Q0.1 1 0.5 1 Q0.9 1 0.9 0.7 L0.9 0.3 Q0.9 0 0.5 0 Z" vector-effect="non-scaling-stroke"/></g>
<g fill="none" stroke="#ffffff" stroke-width="1.15" stroke-linejoin="round"><path transform="translate(472.7,515.3) scale(2.764,5.500)" d="M0.22 0.2 L0.55 0 L0.55 1" vector-effect="non-scaling-stroke"/><path transform="translate(475.7,515.3) scale(2.764,5.500)" d="M0.5 0 Q0.1 0 0.1 0.3 L0.1 0.7 Q0.1 1 0.5 1 Q0.9 1 0.9 0.7 L0.9 0.3 Q0.9 0 0.5 0 Z" vector-effect="non-scaling-stroke"/><path transform="translate(478.8,515.3) scale(2.764,5.500)" d="M0.5 0 Q0.1 0 0.1 0.3 L0.1 0.7 Q0.1 1 0.5 1 Q0.9 1 0.9 0.7 L0.9 0.3 Q0.9 0 0.5 0 Z" vector-effect="non-scaling-stroke"/><path transform="translate(484.9,515.3) scale(2.764,5.500)" d="M0.22 0.2 L0.55 0 L0.55 1" vector-effect="non-scaling-stroke"/><path transform="translate(488,515.3) scale(2.764,5.500)" d="M0.85 0 L0.2 0 L0.15 0.45 Q0.3 0.38 0.5 0.38 Q0.9 0.38 0.9 0.7 Q0.9 1 0.5 1 Q0.2 1 0.1 0.85" vector-effect="non-scaling-stroke"/><path transform="translate(491.1,515.3) scale(2.764,5.500)" d="M0.5 0 Q0.1 0 0.1 0.3 L0.1 0.7 Q0.1 1 0.5 1 Q0.9 1 0.9 0.7 L0.9 0.3 Q0.9 0 0.5 0 Z" vector-effect="non-scaling-stroke"/></g>
<g fill="none" stroke="#ffffff" stroke-width="1.15" stroke-linejoin="round" transform="translate(413,455) rotate(-90)"><path transform="translate(0.1,0) scale(2.400,6.000)" d="M0.22 0.2 L0.55 0 L0.55 1" vector-effect="non-scaling-stroke"/><path transform="translate(2.8,0) scale(2.400,6.000)" d="M0.5 0 Q0.1 0 0.1 0.3 L0.1 0.7 Q0.1 1 0.5 1 Q0.9 1 0.9 0.7 L0.9 0.3 Q0.9 0 0.5 0 Z" vector-effect="non-scaling-stroke"/><path transform="translate(5.5,0) scale(2.400,6.000)" d="M0.5 0 Q0.1 0 0.1 0.3 L0.1 0.7 Q0.1 1 0.5 1 Q0.9 1 0.9 0.7 L0.9 0.3 Q0.9 0 0.5 0 Z" vector-effect="non-scaling-stroke"/></g>
<g fill="none" stroke="#ffffff" stroke-width="1.15" stroke-linejoin="round" transform="translate(413,468) rotate(-90)"><path transform="translate(0.1,0) scale(2.475,6.000)" d="M0.22 0.2 L0.55 0 L0.55 1" vector-effect="non-scaling-stroke"/><path transform="translate(2.9,0) scale(2.475,6.000)" d="M0.5 0 Q0.1 0 0.1 0.3 L0.1 0.7 Q0.1 1 0.5 1 Q0.9 1 0.9 0.7 L0.9 0.3 Q0.9 0 0.5 0 Z" vector-effect="non-scaling-stroke"/><path transform="translate(5.6,0) scale(2.475,6.000)" d="M0.5 0 Q0.1 0 0.1 0.3 L0.1 0.7 Q0.1 1 0.5 1 Q0.9 1 0.9 0.7 L0.9 0.3 Q0.9 0 0.5 0 Z" vector-effect="non-scaling-stroke"/><path transform="translate(8.4,0) scale(2.475,6.000)" d="M0.5 0 Q0.1 0 0.1 0.3 L0.1 0.7 Q0.1 1 0.5 1 Q0.9 1 0.9 0.7 L0.9 0.3 Q0.9 0 0.5 0 Z" vector-effect="non-scaling-stroke"/></g>
<g fill="none" stroke="#ffffff" stroke-width="1.15" stroke-linejoin="round" transform="translate(496,452) rotate(-90)"><path transform="translate(0.1,0) scale(2.100,6.000)" d="M0.22 0.2 L0.55 0 L0.55 1" vector-effect="non-scaling-stroke"/><path transform="translate(2.5,0) scale(2.100,6.000)" d="M0.5 0 Q0.1 0 0.1 0.3 L0.1 0.7 Q0.1 1 0.5 1 Q0.9 1 0.9 0.7 L0.9 0.3 Q0.9 0 0.5 0 Z" vector-effect="non-scaling-stroke"/><path transform="translate(4.8,0) scale(2.100,6.000)" d="M0.5 0 Q0.1 0 0.1 0.3 L0.1 0.7 Q0.1 1 0.5 1 Q0.9 1 0.9 0.7 L0.9 0.3 Q0.9 0 0.5 0 Z" vector-effect="non-scaling-stroke"/></g>
<g fill="none" stroke="#ffffff" stroke-width="1.15" stroke-linejoin="round" transform="translate(496,487.6) rotate(-90)"><path transform="translate(0.2,0) scale(3.285,6.000)" d="M0.12 0.24 Q0.15 0 0.5 0 Q0.88 0 0.88 0.27 Q0.88 0.45 0.5 0.65 L0.1 1 L0.92 1" vector-effect="non-scaling-stroke"/><path transform="translate(3.8,0) scale(3.285,6.000)" d="M0.12 0.15 Q0.25 0 0.5 0 Q0.88 0 0.88 0.25 Q0.88 0.47 0.45 0.47 Q0.9 0.47 0.9 0.74 Q0.9 1 0.5 1 Q0.2 1 0.1 0.85" vector-effect="non-scaling-stroke"/><path transform="translate(7.5,0) scale(3.285,6.000)" d="M0.5 0 Q0.1 0 0.1 0.3 L0.1 0.7 Q0.1 1 0.5 1 Q0.9 1 0.9 0.7 L0.9 0.3 Q0.9 0 0.5 0 Z" vector-effect="non-scaling-stroke"/><path transform="translate(11.1,0) scale(3.285,6.000)" d="M0.5 0 Q0.1 0 0.1 0.3 L0.1 0.7 Q0.1 1 0.5 1 Q0.9 1 0.9 0.7 L0.9 0.3 Q0.9 0 0.5 0 Z" vector-effect="non-scaling-stroke"/></g>
<g fill="none" stroke="#ffffff" stroke-width="1.15" stroke-linejoin="round" transform="translate(496,538) rotate(-90)"><path transform="translate(0.2,0) scale(2.948,6.000)" d="M0.12 0.24 Q0.15 0 0.5 0 Q0.88 0 0.88 0.27 Q0.88 0.45 0.5 0.65 L0.1 1 L0.92 1" vector-effect="non-scaling-stroke"/><path transform="translate(3.4,0) scale(2.948,6.000)" d="M0.12 0.24 Q0.15 0 0.5 0 Q0.88 0 0.88 0.27 Q0.88 0.45 0.5 0.65 L0.1 1 L0.92 1" vector-effect="non-scaling-stroke"/><path transform="translate(6.7,0) scale(2.948,6.000)" d="M0.12 0.24 Q0.15 0 0.5 0 Q0.88 0 0.88 0.27 Q0.88 0.45 0.5 0.65 L0.1 1 L0.92 1" vector-effect="non-scaling-stroke"/><path transform="translate(10,0) scale(2.948,6.000)" d="M0.5 0 Q0.1 0 0.1 0.3 L0.1 0.7 Q0.1 1 0.5 1 Q0.9 1 0.9 0.7 L0.9 0.3 Q0.9 0 0.5 0 Z" vector-effect="non-scaling-stroke"/></g>
<g fill="none" stroke="#ffffff" stroke-width="1.15" stroke-linejoin="round" transform="translate(496,576.5) rotate(-90)"><path transform="translate(0.2,0) scale(2.700,6.000)" d="M0.22 0.2 L0.55 0 L0.55 1" vector-effect="non-scaling-stroke"/><path transform="translate(3.1,0) scale(2.700,6.000)" d="M0.85 0 L0.2 0 L0.15 0.45 Q0.3 0.38 0.5 0.38 Q0.9 0.38 0.9 0.7 Q0.9 1 0.5 1 Q0.2 1 0.1 0.85" vector-effect="non-scaling-stroke"/><path transform="translate(6.2,0) scale(2.700,6.000)" d="M0.5 0 Q0.1 0 0.1 0.3 L0.1 0.7 Q0.1 1 0.5 1 Q0.9 1 0.9 0.7 L0.9 0.3 Q0.9 0 0.5 0 Z" vector-effect="non-scaling-stroke"/><path transform="translate(9.2,0) scale(2.700,6.000)" d="M0.5 0 Q0.1 0 0.1 0.3 L0.1 0.7 Q0.1 1 0.5 1 Q0.9 1 0.9 0.7 L0.9 0.3 Q0.9 0 0.5 0 Z" vector-effect="non-scaling-stroke"/></g>
<g fill="none" stroke="#ffffff" stroke-width="1.15" stroke-linejoin="round" transform="translate(496,597) rotate(-90)"><path transform="translate(0.2,0) scale(3.000,6.000)" d="M0.22 0.2 L0.55 0 L0.55 1" vector-effect="non-scaling-stroke"/><path transform="translate(3.5,0) scale(3.000,6.000)" d="M0.5 0 Q0.1 0 0.1 0.3 L0.1 0.7 Q0.1 1 0.5 1 Q0.9 1 0.9 0.7 L0.9 0.3 Q0.9 0 0.5 0 Z" vector-effect="non-scaling-stroke"/><path transform="translate(6.8,0) scale(3.000,6.000)" d="M0.5 0 Q0.1 0 0.1 0.3 L0.1 0.7 Q0.1 1 0.5 1 Q0.9 1 0.9 0.7 L0.9 0.3 Q0.9 0 0.5 0 Z" vector-effect="non-scaling-stroke"/></g>
<g fill="none" stroke="#ffffff" stroke-width="1.15" stroke-linejoin="round" transform="translate(435,558) rotate(-90)"><path transform="translate(0.2,0) scale(3.300,6.000)" d="M0.85 0 L0.2 0 L0.15 0.45 Q0.3 0.38 0.5 0.38 Q0.9 0.38 0.9 0.7 Q0.9 1 0.5 1 Q0.2 1 0.1 0.85" vector-effect="non-scaling-stroke"/><path transform="translate(3.8,0) scale(3.300,6.000)" d="M0.1 0 L0.9 0 L0.4 1" vector-effect="non-scaling-stroke"/><path transform="translate(7.5,0) scale(3.300,6.000)" d="M0.85 0.12 Q0.7 0 0.5 0 Q0.1 0 0.1 0.6 Q0.1 1 0.5 1 Q0.9 1 0.9 0.68 Q0.9 0.38 0.5 0.38 Q0.1 0.38 0.1 0.65" vector-effect="non-scaling-stroke"/></g>
<g fill="none" stroke="#ffffff" stroke-width="1.15" stroke-linejoin="round" transform="translate(435,568) rotate(-90)"><path transform="translate(0.1,0) scale(2.400,6.000)" d="M0.22 0.2 L0.55 0 L0.55 1" vector-effect="non-scaling-stroke"/><path transform="translate(2.8,0) scale(2.400,6.000)" d="M0.5 0 Q0.1 0 0.1 0.3 L0.1 0.7 Q0.1 1 0.5 1 Q0.9 1 0.9 0.7 L0.9 0.3 Q0.9 0 0.5 0 Z" vector-effect="non-scaling-stroke"/><path transform="translate(5.5,0) scale(2.400,6.000)" d="M0.5 0 Q0.1 0 0.1 0.3 L0.1 0.7 Q0.1 1 0.5 1 Q0.9 1 0.9 0.7 L0.9 0.3 Q0.9 0 0.5 0 Z" vector-effect="non-scaling-stroke"/></g>
<g fill="none" stroke="#ffffff" stroke-width="1.15" stroke-linejoin="round"><path transform="translate(421.7,592.8) scale(2.520,5.200)" d="M0.22 0.2 L0.55 0 L0.55 1" vector-effect="non-scaling-stroke"/><path transform="translate(424.5,592.8) scale(2.520,5.200)" d="M0.5 0 Q0.1 0 0.1 0.3 L0.1 0.7 Q0.1 1 0.5 1 Q0.9 1 0.9 0.7 L0.9 0.3 Q0.9 0 0.5 0 Z" vector-effect="non-scaling-stroke"/><path transform="translate(427.3,592.8) scale(2.520,5.200)" d="M0.5 0 Q0.1 0 0.1 0.3 L0.1 0.7 Q0.1 1 0.5 1 Q0.9 1 0.9 0.7 L0.9 0.3 Q0.9 0 0.5 0 Z" vector-effect="non-scaling-stroke"/></g>
<g fill="none" stroke="#ffffff" stroke-width="1.15" stroke-linejoin="round"><path transform="translate(445.8,592.8) scale(2.700,5.200)" d="M0.22 0.2 L0.55 0 L0.55 1" vector-effect="non-scaling-stroke"/><path transform="translate(448.8,592.8) scale(2.700,5.200)" d="M0.85 0.12 Q0.7 0 0.5 0 Q0.1 0 0.1 0.6 Q0.1 1 0.5 1 Q0.9 1 0.9 0.68 Q0.9 0.38 0.5 0.38 Q0.1 0.38 0.1 0.65" vector-effect="non-scaling-stroke"/><path transform="translate(451.8,592.8) scale(2.700,5.200)" d="M0.5 0 Q0.1 0 0.1 0.3 L0.1 0.7 Q0.1 1 0.5 1 Q0.9 1 0.9 0.7 L0.9 0.3 Q0.9 0 0.5 0 Z" vector-effect="non-scaling-stroke"/><path transform="translate(454.8,592.8) scale(2.700,5.200)" d="M0.5 0 Q0.1 0 0.1 0.3 L0.1 0.7 Q0.1 1 0.5 1 Q0.9 1 0.9 0.7 L0.9 0.3 Q0.9 0 0.5 0 Z" vector-effect="non-scaling-stroke"/></g>
<g fill="none" stroke="#ffffff" stroke-width="1.15" stroke-linejoin="round"><path transform="translate(471.7,592.8) scale(2.850,5.200)" d="M0.7 1 L0.7 0 L0.06 0.7 L0.95 0.7" vector-effect="non-scaling-stroke"/><path transform="translate(474.8,592.8) scale(2.850,5.200)" d="M0.5 0 Q0.1 0 0.1 0.3 L0.1 0.7 Q0.1 1 0.5 1 Q0.9 1 0.9 0.7 L0.9 0.3 Q0.9 0 0.5 0 Z" vector-effect="non-scaling-stroke"/><path transform="translate(478,592.8) scale(2.850,5.200)" d="M0.5 0 Q0.1 0 0.1 0.3 L0.1 0.7 Q0.1 1 0.5 1 Q0.9 1 0.9 0.7 L0.9 0.3 Q0.9 0 0.5 0 Z" vector-effect="non-scaling-stroke"/></g>
<g fill="none" stroke="#ffffff" stroke-width="1.15" stroke-linejoin="round"><path transform="translate(487.7,592.8) scale(2.160,5.200)" d="M0.22 0.2 L0.55 0 L0.55 1" vector-effect="non-scaling-stroke"/><path transform="translate(490.1,592.8) scale(2.160,5.200)" d="M0.5 0 Q0.1 0 0.1 0.3 L0.1 0.7 Q0.1 1 0.5 1 Q0.9 1 0.9 0.7 L0.9 0.3 Q0.9 0 0.5 0 Z" vector-effect="non-scaling-stroke"/><path transform="translate(492.5,592.8) scale(2.160,5.200)" d="M0.5 0 Q0.1 0 0.1 0.3 L0.1 0.7 Q0.1 1 0.5 1 Q0.9 1 0.9 0.7 L0.9 0.3 Q0.9 0 0.5 0 Z" vector-effect="non-scaling-stroke"/></g>
<line x1="428" y1="599.3" x2="499" y2="599.3" stroke="#86f06e" stroke-width="1" shape-rendering="crispEdges"/>
<line x1="431" y1="588" x2="431" y2="602.3" stroke="#86f06e" stroke-width="1" shape-rendering="crispEdges"/>
<line x1="429" y1="601.3" x2="433" y2="597.3" stroke="#86f06e" stroke-width="1.2"/>
<line x1="436.5" y1="588" x2="436.5" y2="602.3" stroke="#86f06e" stroke-width="1" shape-rendering="crispEdges"/>
<line x1="434.5" y1="601.3" x2="438.5" y2="597.3" stroke="#86f06e" stroke-width="1.2"/>
<line x1="470" y1="588" x2="470" y2="602.3" stroke="#86f06e" stroke-width="1" shape-rendering="crispEdges"/>
<line x1="468" y1="601.3" x2="472" y2="597.3" stroke="#86f06e" stroke-width="1.2"/>
<line x1="481" y1="588" x2="481" y2="602.3" stroke="#86f06e" stroke-width="1" shape-rendering="crispEdges"/>
<line x1="479" y1="601.3" x2="483" y2="597.3" stroke="#86f06e" stroke-width="1.2"/>
<line x1="487" y1="588" x2="487" y2="602.3" stroke="#86f06e" stroke-width="1" shape-rendering="crispEdges"/>
<line x1="485" y1="601.3" x2="489" y2="597.3" stroke="#86f06e" stroke-width="1.2"/>
<line x1="496" y1="588" x2="496" y2="602.3" stroke="#86f06e" stroke-width="1" shape-rendering="crispEdges"/>
<line x1="494" y1="601.3" x2="498" y2="597.3" stroke="#86f06e" stroke-width="1.2"/>
<rect x="534" y="452" width="14.9" height="5" fill="#0000ff" shape-rendering="crispEdges"/>
<rect x="534" y="452" width="5.7" height="11.6" fill="#0000ff" shape-rendering="crispEdges"/>
<line x1="534.7" y1="463.6" x2="534.7" y2="485.7" stroke="#e8a200" stroke-width="1.1" shape-rendering="crispEdges"/>
<line x1="538.8" y1="463.6" x2="538.8" y2="485.7" stroke="#e8a200" stroke-width="1.1" shape-rendering="crispEdges"/>
<rect x="534" y="485.7" width="5.7" height="9.6" fill="#0000ff" shape-rendering="crispEdges"/>
<line x1="566.4" y1="450" x2="566.4" y2="497.3" stroke="#86f06e" stroke-width="1" shape-rendering="crispEdges"/>
<line x1="553" y1="452" x2="569.4" y2="452" stroke="#86f06e" stroke-width="1" shape-rendering="crispEdges"/>
<line x1="564.4" y1="454" x2="568.4" y2="450" stroke="#86f06e" stroke-width="1.2"/>
<line x1="553" y1="455" x2="569.4" y2="455" stroke="#86f06e" stroke-width="1" shape-rendering="crispEdges"/>
<line x1="564.4" y1="457" x2="568.4" y2="453" stroke="#86f06e" stroke-width="1.2"/>
<line x1="553" y1="495.3" x2="569.4" y2="495.3" stroke="#86f06e" stroke-width="1" shape-rendering="crispEdges"/>
<line x1="564.4" y1="497.3" x2="568.4" y2="493.3" stroke="#86f06e" stroke-width="1.2"/>
<g fill="none" stroke="#ffffff" stroke-width="1.3" stroke-linejoin="round"><path transform="translate(514.3,437.2) scale(3.960,8.400)" d="M0.9 0.2 Q0.8 0 0.5 0 Q0.1 0 0.1 0.5 Q0.1 1 0.5 1 Q0.9 1 0.9 0.62 L0.9 0.52 L0.55 0.52" vector-effect="non-scaling-stroke"/><path transform="translate(518.8,437.2) scale(3.960,8.400)" d="M0.1 0 L0.1 1 L0.6 1 Q0.92 1 0.92 0.73 Q0.92 0.47 0.6 0.47 L0.1 0.47 M0.6 0.47 Q0.86 0.47 0.86 0.23 Q0.86 0 0.6 0 L0.1 0" vector-effect="non-scaling-stroke"/><path transform="translate(523.3,437.2) scale(3.960,8.400)" d="M0.1 0 L0.9 0 L0.1 1 L0.9 1" vector-effect="non-scaling-stroke"/><path transform="translate(527.8,437.2) scale(3.960,8.400)" d="M0.9 0.35 Q0.9 0.62 0.5 0.62 Q0.1 0.62 0.1 0.31 Q0.1 0 0.5 0 Q0.9 0 0.9 0.4 Q0.9 1 0.5 1 Q0.25 1 0.15 0.88" vector-effect="non-scaling-stroke"/></g>
<line x1="514" y1="447.1" x2="532" y2="447.1" stroke="#ffffff" stroke-width="1" shape-rendering="crispEdges"/>
<line x1="532" y1="447.1" x2="534" y2="452" stroke="#ffffff" stroke-width="0.9"/>
<g fill="none" stroke="#ffffff" stroke-width="1.3" stroke-linejoin="round"><path transform="translate(515.4,472) scale(3.608,8.400)" d="M0.9 0.2 Q0.8 0 0.5 0 Q0.1 0 0.1 0.5 Q0.1 1 0.5 1 Q0.9 1 0.9 0.62 L0.9 0.52 L0.55 0.52" vector-effect="non-scaling-stroke"/><path transform="translate(519.5,472) scale(3.608,8.400)" d="M0.1 0 L0.1 1 L0.6 1 Q0.92 1 0.92 0.73 Q0.92 0.47 0.6 0.47 L0.1 0.47 M0.6 0.47 Q0.86 0.47 0.86 0.23 Q0.86 0 0.6 0 L0.1 0" vector-effect="non-scaling-stroke"/><path transform="translate(523.6,472) scale(3.608,8.400)" d="M0.1 0 L0.9 0 L0.1 1 L0.9 1" vector-effect="non-scaling-stroke"/><path transform="translate(527.7,472) scale(3.608,8.400)" d="M0.22 0.2 L0.55 0 L0.55 1" vector-effect="non-scaling-stroke"/></g>
<line x1="515.2" y1="481.9" x2="531.6" y2="481.9" stroke="#ffffff" stroke-width="1" shape-rendering="crispEdges"/>
<line x1="531.6" y1="481.9" x2="534" y2="486" stroke="#ffffff" stroke-width="0.9"/>
<g fill="none" stroke="#ffffff" stroke-width="1.15" stroke-linejoin="round" transform="translate(559,451) rotate(-90)"><path transform="translate(0.1,0) scale(2.100,6.000)" d="M0.22 0.2 L0.55 0 L0.55 1" vector-effect="non-scaling-stroke"/><path transform="translate(2.5,0) scale(2.100,6.000)" d="M0.5 0 Q0.1 0 0.1 0.3 L0.1 0.7 Q0.1 1 0.5 1 Q0.9 1 0.9 0.7 L0.9 0.3 Q0.9 0 0.5 0 Z" vector-effect="non-scaling-stroke"/><path transform="translate(4.8,0) scale(2.100,6.000)" d="M0.5 0 Q0.1 0 0.1 0.3 L0.1 0.7 Q0.1 1 0.5 1 Q0.9 1 0.9 0.7 L0.9 0.3 Q0.9 0 0.5 0 Z" vector-effect="non-scaling-stroke"/></g>
<g fill="none" stroke="#ffffff" stroke-width="1.15" stroke-linejoin="round" transform="translate(559,480) rotate(-90)"><path transform="translate(0.2,0) scale(4.200,6.000)" d="M0.5 0.47 Q0.12 0.47 0.12 0.24 Q0.12 0 0.5 0 Q0.88 0 0.88 0.24 Q0.88 0.47 0.5 0.47 Q0.08 0.47 0.08 0.74 Q0.08 1 0.5 1 Q0.92 1 0.92 0.74 Q0.92 0.47 0.5 0.47" vector-effect="non-scaling-stroke"/><path transform="translate(4.9,0) scale(4.200,6.000)" d="M0.85 0 L0.2 0 L0.15 0.45 Q0.3 0.38 0.5 0.38 Q0.9 0.38 0.9 0.7 Q0.9 1 0.5 1 Q0.2 1 0.1 0.85" vector-effect="non-scaling-stroke"/><path transform="translate(9.6,0) scale(4.200,6.000)" d="M0.5 0 Q0.1 0 0.1 0.3 L0.1 0.7 Q0.1 1 0.5 1 Q0.9 1 0.9 0.7 L0.9 0.3 Q0.9 0 0.5 0 Z" vector-effect="non-scaling-stroke"/></g>
<g fill="none" stroke="#ffffff" stroke-width="1.15" stroke-linejoin="round"><path transform="translate(526.1,506.9) scale(2.355,5.200)" d="M0.22 0.2 L0.55 0 L0.55 1" vector-effect="non-scaling-stroke"/><path transform="translate(528.7,506.9) scale(2.355,5.200)" d="M0.5 0 Q0.1 0 0.1 0.3 L0.1 0.7 Q0.1 1 0.5 1 Q0.9 1 0.9 0.7 L0.9 0.3 Q0.9 0 0.5 0 Z" vector-effect="non-scaling-stroke"/><path transform="translate(531.4,506.9) scale(2.355,5.200)" d="M0.5 0 Q0.1 0 0.1 0.3 L0.1 0.7 Q0.1 1 0.5 1 Q0.9 1 0.9 0.7 L0.9 0.3 Q0.9 0 0.5 0 Z" vector-effect="non-scaling-stroke"/><path transform="translate(534,506.9) scale(2.355,5.200)" d="M0.22 0.2 L0.55 0 L0.55 1" vector-effect="non-scaling-stroke"/><path transform="translate(536.6,506.9) scale(2.355,5.200)" d="M0.5 0 Q0.1 0 0.1 0.3 L0.1 0.7 Q0.1 1 0.5 1 Q0.9 1 0.9 0.7 L0.9 0.3 Q0.9 0 0.5 0 Z" vector-effect="non-scaling-stroke"/><path transform="translate(539.2,506.9) scale(2.355,5.200)" d="M0.5 0 Q0.1 0 0.1 0.3 L0.1 0.7 Q0.1 1 0.5 1 Q0.9 1 0.9 0.7 L0.9 0.3 Q0.9 0 0.5 0 Z" vector-effect="non-scaling-stroke"/></g>
<line x1="531" y1="513.5" x2="552" y2="513.5" stroke="#86f06e" stroke-width="1" shape-rendering="crispEdges"/>
<line x1="534" y1="501" x2="534" y2="516.5" stroke="#86f06e" stroke-width="1" shape-rendering="crispEdges"/>
<line x1="532" y1="515.5" x2="536" y2="511.5" stroke="#86f06e" stroke-width="1.2"/>
<line x1="537" y1="501" x2="537" y2="516.5" stroke="#86f06e" stroke-width="1" shape-rendering="crispEdges"/>
<line x1="535" y1="515.5" x2="539" y2="511.5" stroke="#86f06e" stroke-width="1.2"/>
<line x1="549" y1="501" x2="549" y2="516.5" stroke="#86f06e" stroke-width="1" shape-rendering="crispEdges"/>
<line x1="547" y1="515.5" x2="551" y2="511.5" stroke="#86f06e" stroke-width="1.2"/>
<rect x="28" y="527.3" width="5" height="9.6" fill="#0000ff" shape-rendering="crispEdges"/>
<line x1="28.8" y1="536.9" x2="28.8" y2="576" stroke="#e8a200" stroke-width="1.1" shape-rendering="crispEdges"/>
<line x1="32.2" y1="536.9" x2="32.2" y2="576" stroke="#e8a200" stroke-width="1.1" shape-rendering="crispEdges"/>
<rect x="28" y="576" width="5" height="12.5" fill="#0000ff" shape-rendering="crispEdges"/>
<rect x="28" y="583.2" width="20" height="5.3" fill="#0000ff" shape-rendering="crispEdges"/>
<line x1="65.5" y1="525.3" x2="65.5" y2="590.5" stroke="#86f06e" stroke-width="1" shape-rendering="crispEdges"/>
<line x1="52" y1="527.3" x2="68.5" y2="527.3" stroke="#86f06e" stroke-width="1" shape-rendering="crispEdges"/>
<line x1="63.5" y1="529.3" x2="67.5" y2="525.3" stroke="#86f06e" stroke-width="1.2"/>
<line x1="52" y1="583" x2="68.5" y2="583" stroke="#86f06e" stroke-width="1" shape-rendering="crispEdges"/>
<line x1="63.5" y1="585" x2="67.5" y2="581" stroke="#86f06e" stroke-width="1.2"/>
<line x1="52" y1="588.5" x2="68.5" y2="588.5" stroke="#86f06e" stroke-width="1" shape-rendering="crispEdges"/>
<line x1="63.5" y1="590.5" x2="67.5" y2="586.5" stroke="#86f06e" stroke-width="1.2"/>
<g fill="none" stroke="#ffffff" stroke-width="1.3" stroke-linejoin="round"><path transform="translate(8.3,512.9) scale(3.674,7.600)" d="M0.9 0.2 Q0.8 0 0.5 0 Q0.1 0 0.1 0.5 Q0.1 1 0.5 1 Q0.9 1 0.9 0.62 L0.9 0.52 L0.55 0.52" vector-effect="non-scaling-stroke"/><path transform="translate(12.4,512.9) scale(3.674,7.600)" d="M0.1 0 L0.1 1 L0.6 1 Q0.92 1 0.92 0.73 Q0.92 0.47 0.6 0.47 L0.1 0.47 M0.6 0.47 Q0.86 0.47 0.86 0.23 Q0.86 0 0.6 0 L0.1 0" vector-effect="non-scaling-stroke"/><path transform="translate(16.6,512.9) scale(3.674,7.600)" d="M0.1 0 L0.9 0 L0.1 1 L0.9 1" vector-effect="non-scaling-stroke"/><path transform="translate(20.8,512.9) scale(3.674,7.600)" d="M0.22 0.2 L0.55 0 L0.55 1" vector-effect="non-scaling-stroke"/></g>
<line x1="8" y1="522" x2="24.7" y2="522" stroke="#ffffff" stroke-width="1" shape-rendering="crispEdges"/>
<line x1="24.7" y1="522" x2="28" y2="527" stroke="#ffffff" stroke-width="0.9"/>
<g fill="none" stroke="#ffffff" stroke-width="1.3" stroke-linejoin="round"><path transform="translate(3.2,562) scale(3.925,8.500)" d="M0.9 0.2 Q0.8 0 0.5 0 Q0.1 0 0.1 0.5 Q0.1 1 0.5 1 Q0.9 1 0.9 0.62 L0.9 0.52 L0.55 0.52" vector-effect="non-scaling-stroke"/><path transform="translate(7.6,562) scale(3.925,8.500)" d="M0.1 0 L0.1 1 L0.6 1 Q0.92 1 0.92 0.73 Q0.92 0.47 0.6 0.47 L0.1 0.47 M0.6 0.47 Q0.86 0.47 0.86 0.23 Q0.86 0 0.6 0 L0.1 0" vector-effect="non-scaling-stroke"/><path transform="translate(12.1,562) scale(3.925,8.500)" d="M0.1 0 L0.9 0 L0.1 1 L0.9 1" vector-effect="non-scaling-stroke"/><path transform="translate(16.5,562) scale(3.925,8.500)" d="M0.22 0.2 L0.55 0 L0.55 1" vector-effect="non-scaling-stroke"/><path transform="translate(21,562) scale(3.925,8.500)" d="M0.7 1 L0.7 0 L0.06 0.7 L0.95 0.7" vector-effect="non-scaling-stroke"/></g>
<line x1="2.9" y1="572" x2="25.2" y2="572" stroke="#ffffff" stroke-width="1" shape-rendering="crispEdges"/>
<line x1="25.2" y1="572" x2="28" y2="576" stroke="#ffffff" stroke-width="0.9"/>
<g fill="none" stroke="#ffffff" stroke-width="1.15" stroke-linejoin="round" transform="translate(58,562) rotate(-90)"><path transform="translate(0.2,0) scale(2.700,6.000)" d="M0.12 0.24 Q0.15 0 0.5 0 Q0.88 0 0.88 0.27 Q0.88 0.45 0.5 0.65 L0.1 1 L0.92 1" vector-effect="non-scaling-stroke"/><path transform="translate(3.1,0) scale(2.700,6.000)" d="M0.85 0.12 Q0.7 0 0.5 0 Q0.1 0 0.1 0.6 Q0.1 1 0.5 1 Q0.9 1 0.9 0.68 Q0.9 0.38 0.5 0.38 Q0.1 0.38 0.1 0.65" vector-effect="non-scaling-stroke"/><path transform="translate(6.2,0) scale(2.700,6.000)" d="M0.5 0 Q0.1 0 0.1 0.3 L0.1 0.7 Q0.1 1 0.5 1 Q0.9 1 0.9 0.7 L0.9 0.3 Q0.9 0 0.5 0 Z" vector-effect="non-scaling-stroke"/><path transform="translate(9.2,0) scale(2.700,6.000)" d="M0.5 0 Q0.1 0 0.1 0.3 L0.1 0.7 Q0.1 1 0.5 1 Q0.9 1 0.9 0.7 L0.9 0.3 Q0.9 0 0.5 0 Z" vector-effect="non-scaling-stroke"/></g>
<g fill="none" stroke="#ffffff" stroke-width="1.15" stroke-linejoin="round" transform="translate(58,598) rotate(-90)"><path transform="translate(0.1,0) scale(2.400,6.000)" d="M0.22 0.2 L0.55 0 L0.55 1" vector-effect="non-scaling-stroke"/><path transform="translate(2.8,0) scale(2.400,6.000)" d="M0.5 0 Q0.1 0 0.1 0.3 L0.1 0.7 Q0.1 1 0.5 1 Q0.9 1 0.9 0.7 L0.9 0.3 Q0.9 0 0.5 0 Z" vector-effect="non-scaling-stroke"/><path transform="translate(5.5,0) scale(2.400,6.000)" d="M0.5 0 Q0.1 0 0.1 0.3 L0.1 0.7 Q0.1 1 0.5 1 Q0.9 1 0.9 0.7 L0.9 0.3 Q0.9 0 0.5 0 Z" vector-effect="non-scaling-stroke"/></g>
<g fill="none" stroke="#ffffff" stroke-width="1.15" stroke-linejoin="round"><path transform="translate(19.1,598.6) scale(2.100,6.200)" d="M0.22 0.2 L0.55 0 L0.55 1" vector-effect="non-scaling-stroke"/><path transform="translate(21.4,598.6) scale(2.100,6.200)" d="M0.5 0 Q0.1 0 0.1 0.3 L0.1 0.7 Q0.1 1 0.5 1 Q0.9 1 0.9 0.7 L0.9 0.3 Q0.9 0 0.5 0 Z" vector-effect="non-scaling-stroke"/><path transform="translate(23.8,598.6) scale(2.100,6.200)" d="M0.5 0 Q0.1 0 0.1 0.3 L0.1 0.7 Q0.1 1 0.5 1 Q0.9 1 0.9 0.7 L0.9 0.3 Q0.9 0 0.5 0 Z" vector-effect="non-scaling-stroke"/></g>
<g fill="none" stroke="#ffffff" stroke-width="1.15" stroke-linejoin="round"><path transform="translate(34.4,598.6) scale(2.670,6.200)" d="M0.1 0 L0.9 0 L0.4 1" vector-effect="non-scaling-stroke"/><path transform="translate(37.4,598.6) scale(2.670,6.200)" d="M0.85 0 L0.2 0 L0.15 0.45 Q0.3 0.38 0.5 0.38 Q0.9 0.38 0.9 0.7 Q0.9 1 0.5 1 Q0.2 1 0.1 0.85" vector-effect="non-scaling-stroke"/><path transform="translate(40.4,598.6) scale(2.670,6.200)" d="M0.5 0 Q0.1 0 0.1 0.3 L0.1 0.7 Q0.1 1 0.5 1 Q0.9 1 0.9 0.7 L0.9 0.3 Q0.9 0 0.5 0 Z" vector-effect="non-scaling-stroke"/></g>
<line x1="25" y1="606.5" x2="51" y2="606.5" stroke="#86f06e" stroke-width="1" shape-rendering="crispEdges"/>
<line x1="28" y1="594" x2="28" y2="609.5" stroke="#86f06e" stroke-width="1" shape-rendering="crispEdges"/>
<line x1="26" y1="608.5" x2="30" y2="604.5" stroke="#86f06e" stroke-width="1.2"/>
<line x1="31" y1="594" x2="31" y2="609.5" stroke="#86f06e" stroke-width="1" shape-rendering="crispEdges"/>
<line x1="29" y1="608.5" x2="33" y2="604.5" stroke="#86f06e" stroke-width="1.2"/>
<line x1="48" y1="594" x2="48" y2="609.5" stroke="#86f06e" stroke-width="1" shape-rendering="crispEdges"/>
<line x1="46" y1="608.5" x2="50" y2="604.5" stroke="#86f06e" stroke-width="1.2"/>
<rect x="109.2" y="527.3" width="4.8" height="9.6" fill="#0000ff" shape-rendering="crispEdges"/>
<line x1="110" y1="536.9" x2="110" y2="576" stroke="#e8a200" stroke-width="1.1" shape-rendering="crispEdges"/>
<line x1="113.3" y1="536.9" x2="113.3" y2="576" stroke="#e8a200" stroke-width="1.1" shape-rendering="crispEdges"/>
<rect x="109.2" y="576" width="4.8" height="12.5" fill="#0000ff" shape-rendering="crispEdges"/>
<rect x="109.2" y="583.2" width="13.8" height="5.3" fill="#0000ff" shape-rendering="crispEdges"/>
<line x1="140.5" y1="525.3" x2="140.5" y2="590.5" stroke="#86f06e" stroke-width="1" shape-rendering="crispEdges"/>
<line x1="127" y1="527.3" x2="143.5" y2="527.3" stroke="#86f06e" stroke-width="1" shape-rendering="crispEdges"/>
<line x1="138.5" y1="529.3" x2="142.5" y2="525.3" stroke="#86f06e" stroke-width="1.2"/>
<line x1="127" y1="583" x2="143.5" y2="583" stroke="#86f06e" stroke-width="1" shape-rendering="crispEdges"/>
<line x1="138.5" y1="585" x2="142.5" y2="581" stroke="#86f06e" stroke-width="1.2"/>
<line x1="127" y1="588.5" x2="143.5" y2="588.5" stroke="#86f06e" stroke-width="1" shape-rendering="crispEdges"/>
<line x1="138.5" y1="590.5" x2="142.5" y2="586.5" stroke="#86f06e" stroke-width="1.2"/>
<g fill="none" stroke="#ffffff" stroke-width="1.3" stroke-linejoin="round"><path transform="translate(89.1,512.9) scale(3.696,7.600)" d="M0.9 0.2 Q0.8 0 0.5 0 Q0.1 0 0.1 0.5 Q0.1 1 0.5 1 Q0.9 1 0.9 0.62 L0.9 0.52 L0.55 0.52" vector-effect="non-scaling-stroke"/><path transform="translate(93.3,512.9) scale(3.696,7.600)" d="M0.1 0 L0.1 1 L0.6 1 Q0.92 1 0.92 0.73 Q0.92 0.47 0.6 0.47 L0.1 0.47 M0.6 0.47 Q0.86 0.47 0.86 0.23 Q0.86 0 0.6 0 L0.1 0" vector-effect="non-scaling-stroke"/><path transform="translate(97.5,512.9) scale(3.696,7.600)" d="M0.1 0 L0.9 0 L0.1 1 L0.9 1" vector-effect="non-scaling-stroke"/><path transform="translate(101.7,512.9) scale(3.696,7.600)" d="M0.22 0.2 L0.55 0 L0.55 1" vector-effect="non-scaling-stroke"/></g>
<line x1="88.8" y1="522" x2="105.6" y2="522" stroke="#ffffff" stroke-width="1" shape-rendering="crispEdges"/>
<line x1="105.6" y1="522" x2="109" y2="527" stroke="#ffffff" stroke-width="0.9"/>
<g fill="none" stroke="#ffffff" stroke-width="1.3" stroke-linejoin="round"><path transform="translate(85.5,562) scale(4.013,8.500)" d="M0.9 0.2 Q0.8 0 0.5 0 Q0.1 0 0.1 0.5 Q0.1 1 0.5 1 Q0.9 1 0.9 0.62 L0.9 0.52 L0.55 0.52" vector-effect="non-scaling-stroke"/><path transform="translate(90,562) scale(4.013,8.500)" d="M0.1 0 L0.1 1 L0.6 1 Q0.92 1 0.92 0.73 Q0.92 0.47 0.6 0.47 L0.1 0.47 M0.6 0.47 Q0.86 0.47 0.86 0.23 Q0.86 0 0.6 0 L0.1 0" vector-effect="non-scaling-stroke"/><path transform="translate(94.6,562) scale(4.013,8.500)" d="M0.1 0 L0.9 0 L0.1 1 L0.9 1" vector-effect="non-scaling-stroke"/><path transform="translate(99.2,562) scale(4.013,8.500)" d="M0.9 0.35 Q0.9 0.62 0.5 0.62 Q0.1 0.62 0.1 0.31 Q0.1 0 0.5 0 Q0.9 0 0.9 0.4 Q0.9 1 0.5 1 Q0.25 1 0.15 0.88" vector-effect="non-scaling-stroke"/><path transform="translate(103.7,562) scale(4.013,8.500)" d="M0.15 0 L0.15 1 M0.15 0.55 Q0.3 0.36 0.5 0.36 Q0.85 0.36 0.85 0.68 Q0.85 1 0.5 1 Q0.3 1 0.15 0.85" vector-effect="non-scaling-stroke"/></g>
<line x1="85.2" y1="572" x2="108" y2="572" stroke="#ffffff" stroke-width="1" shape-rendering="crispEdges"/>
<line x1="108" y1="572" x2="109" y2="576" stroke="#ffffff" stroke-width="0.9"/>
<g fill="none" stroke="#ffffff" stroke-width="1.15" stroke-linejoin="round" transform="translate(133,562) rotate(-90)"><path transform="translate(0.2,0) scale(2.700,6.000)" d="M0.12 0.24 Q0.15 0 0.5 0 Q0.88 0 0.88 0.27 Q0.88 0.45 0.5 0.65 L0.1 1 L0.92 1" vector-effect="non-scaling-stroke"/><path transform="translate(3.1,0) scale(2.700,6.000)" d="M0.12 0.24 Q0.15 0 0.5 0 Q0.88 0 0.88 0.27 Q0.88 0.45 0.5 0.65 L0.1 1 L0.92 1" vector-effect="non-scaling-stroke"/><path transform="translate(6.2,0) scale(2.700,6.000)" d="M0.5 0 Q0.1 0 0.1 0.3 L0.1 0.7 Q0.1 1 0.5 1 Q0.9 1 0.9 0.7 L0.9 0.3 Q0.9 0 0.5 0 Z" vector-effect="non-scaling-stroke"/><path transform="translate(9.2,0) scale(2.700,6.000)" d="M0.5 0 Q0.1 0 0.1 0.3 L0.1 0.7 Q0.1 1 0.5 1 Q0.9 1 0.9 0.7 L0.9 0.3 Q0.9 0 0.5 0 Z" vector-effect="non-scaling-stroke"/></g>
<g fill="none" stroke="#ffffff" stroke-width="1.15" stroke-linejoin="round" transform="translate(133,598) rotate(-90)"><path transform="translate(0.1,0) scale(2.400,6.000)" d="M0.22 0.2 L0.55 0 L0.55 1" vector-effect="non-scaling-stroke"/><path transform="translate(2.8,0) scale(2.400,6.000)" d="M0.5 0 Q0.1 0 0.1 0.3 L0.1 0.7 Q0.1 1 0.5 1 Q0.9 1 0.9 0.7 L0.9 0.3 Q0.9 0 0.5 0 Z" vector-effect="non-scaling-stroke"/><path transform="translate(5.5,0) scale(2.400,6.000)" d="M0.5 0 Q0.1 0 0.1 0.3 L0.1 0.7 Q0.1 1 0.5 1 Q0.9 1 0.9 0.7 L0.9 0.3 Q0.9 0 0.5 0 Z" vector-effect="non-scaling-stroke"/></g>
<g fill="none" stroke="#ffffff" stroke-width="1.15" stroke-linejoin="round"><path transform="translate(99.7,598.6) scale(2.173,6.200)" d="M0.22 0.2 L0.55 0 L0.55 1" vector-effect="non-scaling-stroke"/><path transform="translate(102.1,598.6) scale(2.173,6.200)" d="M0.5 0 Q0.1 0 0.1 0.3 L0.1 0.7 Q0.1 1 0.5 1 Q0.9 1 0.9 0.7 L0.9 0.3 Q0.9 0 0.5 0 Z" vector-effect="non-scaling-stroke"/><path transform="translate(104.5,598.6) scale(2.173,6.200)" d="M0.5 0 Q0.1 0 0.1 0.3 L0.1 0.7 Q0.1 1 0.5 1 Q0.9 1 0.9 0.7 L0.9 0.3 Q0.9 0 0.5 0 Z" vector-effect="non-scaling-stroke"/><path transform="translate(109.4,598.6) scale(2.173,6.200)" d="M0.85 0 L0.2 0 L0.15 0.45 Q0.3 0.38 0.5 0.38 Q0.9 0.38 0.9 0.7 Q0.9 1 0.5 1 Q0.2 1 0.1 0.85" vector-effect="non-scaling-stroke"/><path transform="translate(111.8,598.6) scale(2.173,6.200)" d="M0.5 0 Q0.1 0 0.1 0.3 L0.1 0.7 Q0.1 1 0.5 1 Q0.9 1 0.9 0.7 L0.9 0.3 Q0.9 0 0.5 0 Z" vector-effect="non-scaling-stroke"/><path transform="translate(114.2,598.6) scale(2.173,6.200)" d="M0.5 0 Q0.1 0 0.1 0.3 L0.1 0.7 Q0.1 1 0.5 1 Q0.9 1 0.9 0.7 L0.9 0.3 Q0.9 0 0.5 0 Z" vector-effect="non-scaling-stroke"/></g>
<line x1="106" y1="606.5" x2="126" y2="606.5" stroke="#86f06e" stroke-width="1" shape-rendering="crispEdges"/>
<line x1="109" y1="594" x2="109" y2="609.5" stroke="#86f06e" stroke-width="1" shape-rendering="crispEdges"/>
<line x1="107" y1="608.5" x2="111" y2="604.5" stroke="#86f06e" stroke-width="1.2"/>
<line x1="112" y1="594" x2="112" y2="609.5" stroke="#86f06e" stroke-width="1" shape-rendering="crispEdges"/>
<line x1="110" y1="608.5" x2="114" y2="604.5" stroke="#86f06e" stroke-width="1.2"/>
<line x1="123" y1="594" x2="123" y2="609.5" stroke="#86f06e" stroke-width="1" shape-rendering="crispEdges"/>
<line x1="121" y1="608.5" x2="125" y2="604.5" stroke="#86f06e" stroke-width="1.2"/>
<rect x="192" y="583.2" width="30" height="5.3" fill="#0000ff" shape-rendering="crispEdges"/>
<rect x="200.5" y="583.2" width="7.2" height="29.3" fill="#0000ff" shape-rendering="crispEdges"/>
<line x1="240" y1="581.2" x2="240" y2="614.5" stroke="#86f06e" stroke-width="1" shape-rendering="crispEdges"/>
<line x1="226" y1="583.2" x2="243" y2="583.2" stroke="#86f06e" stroke-width="1" shape-rendering="crispEdges"/>
<line x1="238" y1="585.2" x2="242" y2="581.2" stroke="#86f06e" stroke-width="1.2"/>
<line x1="226" y1="588.5" x2="243" y2="588.5" stroke="#86f06e" stroke-width="1" shape-rendering="crispEdges"/>
<line x1="238" y1="590.5" x2="242" y2="586.5" stroke="#86f06e" stroke-width="1.2"/>
<line x1="226" y1="612.5" x2="243" y2="612.5" stroke="#86f06e" stroke-width="1" shape-rendering="crispEdges"/>
<line x1="238" y1="614.5" x2="242" y2="610.5" stroke="#86f06e" stroke-width="1.2"/>
<g fill="none" stroke="#ffffff" stroke-width="1.3" stroke-linejoin="round"><path transform="translate(169.6,568.8) scale(3.714,7.700)" d="M0.9 0.2 Q0.8 0 0.5 0 Q0.1 0 0.1 0.5 Q0.1 1 0.5 1 Q0.9 1 0.9 0.62 L0.9 0.52 L0.55 0.52" vector-effect="non-scaling-stroke"/><path transform="translate(173.8,568.8) scale(3.714,7.700)" d="M0.1 0 L0.1 1 L0.6 1 Q0.92 1 0.92 0.73 Q0.92 0.47 0.6 0.47 L0.1 0.47 M0.6 0.47 Q0.86 0.47 0.86 0.23 Q0.86 0 0.6 0 L0.1 0" vector-effect="non-scaling-stroke"/><path transform="translate(178,568.8) scale(3.714,7.700)" d="M0.1 0 L0.9 0 L0.1 1 L0.9 1" vector-effect="non-scaling-stroke"/><path transform="translate(182.2,568.8) scale(3.714,7.700)" d="M0.12 0.24 Q0.15 0 0.5 0 Q0.88 0 0.88 0.27 Q0.88 0.45 0.5 0.65 L0.1 1 L0.92 1" vector-effect="non-scaling-stroke"/><path transform="translate(186.4,568.8) scale(3.714,7.700)" d="M0.22 0.2 L0.55 0 L0.55 1" vector-effect="non-scaling-stroke"/></g>
<line x1="169.3" y1="578" x2="190.4" y2="578" stroke="#ffffff" stroke-width="1" shape-rendering="crispEdges"/>
<line x1="190.4" y1="578" x2="192" y2="583" stroke="#ffffff" stroke-width="0.9"/>
<g fill="none" stroke="#ffffff" stroke-width="1.15" stroke-linejoin="round" transform="translate(233,582) rotate(-90)"><path transform="translate(0.1,0) scale(2.400,6.000)" d="M0.22 0.2 L0.55 0 L0.55 1" vector-effect="non-scaling-stroke"/><path transform="translate(2.8,0) scale(2.400,6.000)" d="M0.5 0 Q0.1 0 0.1 0.3 L0.1 0.7 Q0.1 1 0.5 1 Q0.9 1 0.9 0.7 L0.9 0.3 Q0.9 0 0.5 0 Z" vector-effect="non-scaling-stroke"/><path transform="translate(5.5,0) scale(2.400,6.000)" d="M0.5 0 Q0.1 0 0.1 0.3 L0.1 0.7 Q0.1 1 0.5 1 Q0.9 1 0.9 0.7 L0.9 0.3 Q0.9 0 0.5 0 Z" vector-effect="non-scaling-stroke"/></g>
<g fill="none" stroke="#ffffff" stroke-width="1.15" stroke-linejoin="round" transform="translate(233,607) rotate(-90)"><path transform="translate(0.2,0) scale(3.375,6.000)" d="M0.22 0.2 L0.55 0 L0.55 1" vector-effect="non-scaling-stroke"/><path transform="translate(3.9,0) scale(3.375,6.000)" d="M0.12 0.24 Q0.15 0 0.5 0 Q0.88 0 0.88 0.27 Q0.88 0.45 0.5 0.65 L0.1 1 L0.92 1" vector-effect="non-scaling-stroke"/><path transform="translate(7.7,0) scale(3.375,6.000)" d="M0.5 0 Q0.1 0 0.1 0.3 L0.1 0.7 Q0.1 1 0.5 1 Q0.9 1 0.9 0.7 L0.9 0.3 Q0.9 0 0.5 0 Z" vector-effect="non-scaling-stroke"/><path transform="translate(11.4,0) scale(3.375,6.000)" d="M0.5 0 Q0.1 0 0.1 0.3 L0.1 0.7 Q0.1 1 0.5 1 Q0.9 1 0.9 0.7 L0.9 0.3 Q0.9 0 0.5 0 Z" vector-effect="non-scaling-stroke"/></g>
<g fill="none" stroke="#ffffff" stroke-width="1.15" stroke-linejoin="round"><path transform="translate(179,623.5) scale(2.700,5.700)" d="M0.85 0.12 Q0.7 0 0.5 0 Q0.1 0 0.1 0.6 Q0.1 1 0.5 1 Q0.9 1 0.9 0.68 Q0.9 0.38 0.5 0.38 Q0.1 0.38 0.1 0.65" vector-effect="non-scaling-stroke"/><path transform="translate(182,623.5) scale(2.700,5.700)" d="M0.5 0 Q0.1 0 0.1 0.3 L0.1 0.7 Q0.1 1 0.5 1 Q0.9 1 0.9 0.7 L0.9 0.3 Q0.9 0 0.5 0 Z" vector-effect="non-scaling-stroke"/><path transform="translate(185,623.5) scale(2.700,5.700)" d="M0.5 0 Q0.1 0 0.1 0.3 L0.1 0.7 Q0.1 1 0.5 1 Q0.9 1 0.9 0.7 L0.9 0.3 Q0.9 0 0.5 0 Z" vector-effect="non-scaling-stroke"/></g>
<g fill="none" stroke="#ffffff" stroke-width="1.15" stroke-linejoin="round"><path transform="translate(200.9,623.5) scale(2.314,5.700)" d="M0.12 0.24 Q0.15 0 0.5 0 Q0.88 0 0.88 0.27 Q0.88 0.45 0.5 0.65 L0.1 1 L0.92 1" vector-effect="non-scaling-stroke"/><path transform="translate(203.5,623.5) scale(2.314,5.700)" d="M0.5 0 Q0.1 0 0.1 0.3 L0.1 0.7 Q0.1 1 0.5 1 Q0.9 1 0.9 0.7 L0.9 0.3 Q0.9 0 0.5 0 Z" vector-effect="non-scaling-stroke"/><path transform="translate(206.1,623.5) scale(2.314,5.700)" d="M0.5 0 Q0.1 0 0.1 0.3 L0.1 0.7 Q0.1 1 0.5 1 Q0.9 1 0.9 0.7 L0.9 0.3 Q0.9 0 0.5 0 Z" vector-effect="non-scaling-stroke"/><path transform="translate(211.2,623.5) scale(2.314,5.700)" d="M0.85 0.12 Q0.7 0 0.5 0 Q0.1 0 0.1 0.6 Q0.1 1 0.5 1 Q0.9 1 0.9 0.68 Q0.9 0.38 0.5 0.38 Q0.1 0.38 0.1 0.65" vector-effect="non-scaling-stroke"/><path transform="translate(213.8,623.5) scale(2.314,5.700)" d="M0.5 0 Q0.1 0 0.1 0.3 L0.1 0.7 Q0.1 1 0.5 1 Q0.9 1 0.9 0.7 L0.9 0.3 Q0.9 0 0.5 0 Z" vector-effect="non-scaling-stroke"/><path transform="translate(216.4,623.5) scale(2.314,5.700)" d="M0.5 0 Q0.1 0 0.1 0.3 L0.1 0.7 Q0.1 1 0.5 1 Q0.9 1 0.9 0.7 L0.9 0.3 Q0.9 0 0.5 0 Z" vector-effect="non-scaling-stroke"/></g>
<line x1="189" y1="630.5" x2="225" y2="630.5" stroke="#86f06e" stroke-width="1" shape-rendering="crispEdges"/>
<line x1="192" y1="618" x2="192" y2="633.5" stroke="#86f06e" stroke-width="1" shape-rendering="crispEdges"/>
<line x1="190" y1="632.5" x2="194" y2="628.5" stroke="#86f06e" stroke-width="1.2"/>
<line x1="200.5" y1="618" x2="200.5" y2="633.5" stroke="#86f06e" stroke-width="1" shape-rendering="crispEdges"/>
<line x1="198.5" y1="632.5" x2="202.5" y2="628.5" stroke="#86f06e" stroke-width="1.2"/>
<line x1="207.7" y1="618" x2="207.7" y2="633.5" stroke="#86f06e" stroke-width="1" shape-rendering="crispEdges"/>
<line x1="205.7" y1="632.5" x2="209.7" y2="628.5" stroke="#86f06e" stroke-width="1.2"/>
<line x1="222" y1="618" x2="222" y2="633.5" stroke="#86f06e" stroke-width="1" shape-rendering="crispEdges"/>
<line x1="220" y1="632.5" x2="224" y2="628.5" stroke="#86f06e" stroke-width="1.2"/>
<rect x="309" y="535.2" width="6" height="9.6" fill="#0000ff" shape-rendering="crispEdges"/>
<line x1="309.7" y1="544.8" x2="309.7" y2="576" stroke="#e8a200" stroke-width="1.1" shape-rendering="crispEdges"/>
<line x1="314" y1="544.8" x2="314" y2="576" stroke="#e8a200" stroke-width="1.1" shape-rendering="crispEdges"/>
<rect x="309" y="576" width="6" height="12.5" fill="#0000ff" shape-rendering="crispEdges"/>
<rect x="303" y="583" width="12" height="5.5" fill="#0000ff" shape-rendering="crispEdges"/>
<line x1="332.5" y1="533.2" x2="332.5" y2="590.5" stroke="#86f06e" stroke-width="1" shape-rendering="crispEdges"/>
<line x1="320" y1="535.2" x2="335.5" y2="535.2" stroke="#86f06e" stroke-width="1" shape-rendering="crispEdges"/>
<line x1="330.5" y1="537.2" x2="334.5" y2="533.2" stroke="#86f06e" stroke-width="1.2"/>
<line x1="320" y1="583" x2="335.5" y2="583" stroke="#86f06e" stroke-width="1" shape-rendering="crispEdges"/>
<line x1="330.5" y1="585" x2="334.5" y2="581" stroke="#86f06e" stroke-width="1.2"/>
<line x1="320" y1="588.5" x2="335.5" y2="588.5" stroke="#86f06e" stroke-width="1" shape-rendering="crispEdges"/>
<line x1="330.5" y1="590.5" x2="334.5" y2="586.5" stroke="#86f06e" stroke-width="1.2"/>
<g fill="none" stroke="#ffffff" stroke-width="1.3" stroke-linejoin="round"><path transform="translate(285.5,520) scale(3.802,8.500)" d="M0.9 0.2 Q0.8 0 0.5 0 Q0.1 0 0.1 0.5 Q0.1 1 0.5 1 Q0.9 1 0.9 0.62 L0.9 0.52 L0.55 0.52" vector-effect="non-scaling-stroke"/><path transform="translate(289.8,520) scale(3.802,8.500)" d="M0.1 0 L0.1 1 L0.6 1 Q0.92 1 0.92 0.73 Q0.92 0.47 0.6 0.47 L0.1 0.47 M0.6 0.47 Q0.86 0.47 0.86 0.23 Q0.86 0 0.6 0 L0.1 0" vector-effect="non-scaling-stroke"/><path transform="translate(294.1,520) scale(3.802,8.500)" d="M0.1 0 L0.9 0 L0.1 1 L0.9 1" vector-effect="non-scaling-stroke"/><path transform="translate(298.4,520) scale(3.802,8.500)" d="M0.22 0.2 L0.55 0 L0.55 1" vector-effect="non-scaling-stroke"/><path transform="translate(302.7,520) scale(3.802,8.500)" d="M0.15 0 L0.15 1 M0.15 0.55 Q0.3 0.36 0.5 0.36 Q0.85 0.36 0.85 0.68 Q0.85 1 0.5 1 Q0.3 1 0.15 0.85" vector-effect="non-scaling-stroke"/></g>
<line x1="285.2" y1="530" x2="306.8" y2="530" stroke="#ffffff" stroke-width="1" shape-rendering="crispEdges"/>
<line x1="306.8" y1="530" x2="309" y2="535" stroke="#ffffff" stroke-width="0.9"/>
<g fill="none" stroke="#ffffff" stroke-width="1.3" stroke-linejoin="round"><path transform="translate(289.1,562) scale(3.960,8.500)" d="M0.9 0.2 Q0.8 0 0.5 0 Q0.1 0 0.1 0.5 Q0.1 1 0.5 1 Q0.9 1 0.9 0.62 L0.9 0.52 L0.55 0.52" vector-effect="non-scaling-stroke"/><path transform="translate(293.6,562) scale(3.960,8.500)" d="M0.1 0 L0.1 1 L0.6 1 Q0.92 1 0.92 0.73 Q0.92 0.47 0.6 0.47 L0.1 0.47 M0.6 0.47 Q0.86 0.47 0.86 0.23 Q0.86 0 0.6 0 L0.1 0" vector-effect="non-scaling-stroke"/><path transform="translate(298.1,562) scale(3.960,8.500)" d="M0.1 0 L0.9 0 L0.1 1 L0.9 1" vector-effect="non-scaling-stroke"/><path transform="translate(302.6,562) scale(3.960,8.500)" d="M0.85 0.12 Q0.7 0 0.5 0 Q0.1 0 0.1 0.6 Q0.1 1 0.5 1 Q0.9 1 0.9 0.68 Q0.9 0.38 0.5 0.38 Q0.1 0.38 0.1 0.65" vector-effect="non-scaling-stroke"/></g>
<line x1="288.8" y1="572" x2="306.8" y2="572" stroke="#ffffff" stroke-width="1" shape-rendering="crispEdges"/>
<line x1="306.8" y1="572" x2="309" y2="576" stroke="#ffffff" stroke-width="0.9"/>
<g fill="none" stroke="#ffffff" stroke-width="1.15" stroke-linejoin="round" transform="translate(326,568) rotate(-90)"><path transform="translate(0.2,0) scale(2.700,6.000)" d="M0.12 0.24 Q0.15 0 0.5 0 Q0.88 0 0.88 0.27 Q0.88 0.45 0.5 0.65 L0.1 1 L0.92 1" vector-effect="non-scaling-stroke"/><path transform="translate(3.1,0) scale(2.700,6.000)" d="M0.12 0.15 Q0.25 0 0.5 0 Q0.88 0 0.88 0.25 Q0.88 0.47 0.45 0.47 Q0.9 0.47 0.9 0.74 Q0.9 1 0.5 1 Q0.2 1 0.1 0.85" vector-effect="non-scaling-stroke"/><path transform="translate(6.2,0) scale(2.700,6.000)" d="M0.85 0 L0.2 0 L0.15 0.45 Q0.3 0.38 0.5 0.38 Q0.9 0.38 0.9 0.7 Q0.9 1 0.5 1 Q0.2 1 0.1 0.85" vector-effect="non-scaling-stroke"/><path transform="translate(9.2,0) scale(2.700,6.000)" d="M0.5 0 Q0.1 0 0.1 0.3 L0.1 0.7 Q0.1 1 0.5 1 Q0.9 1 0.9 0.7 L0.9 0.3 Q0.9 0 0.5 0 Z" vector-effect="non-scaling-stroke"/></g>
<g fill="none" stroke="#ffffff" stroke-width="1.15" stroke-linejoin="round" transform="translate(326,598) rotate(-90)"><path transform="translate(0.1,0) scale(2.400,6.000)" d="M0.22 0.2 L0.55 0 L0.55 1" vector-effect="non-scaling-stroke"/><path transform="translate(2.8,0) scale(2.400,6.000)" d="M0.5 0 Q0.1 0 0.1 0.3 L0.1 0.7 Q0.1 1 0.5 1 Q0.9 1 0.9 0.7 L0.9 0.3 Q0.9 0 0.5 0 Z" vector-effect="non-scaling-stroke"/><path transform="translate(5.5,0) scale(2.400,6.000)" d="M0.5 0 Q0.1 0 0.1 0.3 L0.1 0.7 Q0.1 1 0.5 1 Q0.9 1 0.9 0.7 L0.9 0.3 Q0.9 0 0.5 0 Z" vector-effect="non-scaling-stroke"/></g>
<g fill="none" stroke="#ffffff" stroke-width="1.15" stroke-linejoin="round"><path transform="translate(290.6,592) scale(2.250,6.000)" d="M0.12 0.15 Q0.25 0 0.5 0 Q0.88 0 0.88 0.25 Q0.88 0.47 0.45 0.47 Q0.9 0.47 0.9 0.74 Q0.9 1 0.5 1 Q0.2 1 0.1 0.85" vector-effect="non-scaling-stroke"/><path transform="translate(293.1,592) scale(2.250,6.000)" d="M0.85 0 L0.2 0 L0.15 0.45 Q0.3 0.38 0.5 0.38 Q0.9 0.38 0.9 0.7 Q0.9 1 0.5 1 Q0.2 1 0.1 0.85" vector-effect="non-scaling-stroke"/><path transform="translate(295.6,592) scale(2.250,6.000)" d="M0.5 0 Q0.1 0 0.1 0.3 L0.1 0.7 Q0.1 1 0.5 1 Q0.9 1 0.9 0.7 L0.9 0.3 Q0.9 0 0.5 0 Z" vector-effect="non-scaling-stroke"/></g>
<g fill="none" stroke="#ffffff" stroke-width="1.15" stroke-linejoin="round"><path transform="translate(315.6,592) scale(2.250,6.000)" d="M0.22 0.2 L0.55 0 L0.55 1" vector-effect="non-scaling-stroke"/><path transform="translate(318.1,592) scale(2.250,6.000)" d="M0.5 0 Q0.1 0 0.1 0.3 L0.1 0.7 Q0.1 1 0.5 1 Q0.9 1 0.9 0.7 L0.9 0.3 Q0.9 0 0.5 0 Z" vector-effect="non-scaling-stroke"/><path transform="translate(320.6,592) scale(2.250,6.000)" d="M0.5 0 Q0.1 0 0.1 0.3 L0.1 0.7 Q0.1 1 0.5 1 Q0.9 1 0.9 0.7 L0.9 0.3 Q0.9 0 0.5 0 Z" vector-effect="non-scaling-stroke"/></g>
<line x1="300" y1="599.5" x2="318" y2="599.5" stroke="#86f06e" stroke-width="1" shape-rendering="crispEdges"/>
<line x1="303" y1="588" x2="303" y2="602.5" stroke="#86f06e" stroke-width="1" shape-rendering="crispEdges"/>
<line x1="301" y1="601.5" x2="305" y2="597.5" stroke="#86f06e" stroke-width="1.2"/>
<line x1="309" y1="588" x2="309" y2="602.5" stroke="#86f06e" stroke-width="1" shape-rendering="crispEdges"/>
<line x1="307" y1="601.5" x2="311" y2="597.5" stroke="#86f06e" stroke-width="1.2"/>
<line x1="315" y1="588" x2="315" y2="602.5" stroke="#86f06e" stroke-width="1" shape-rendering="crispEdges"/>
<line x1="313" y1="601.5" x2="317" y2="597.5" stroke="#86f06e" stroke-width="1.2"/>
<rect x="691.7" y="527.3" width="5.3" height="9.6" fill="#0000ff" shape-rendering="crispEdges"/>
<line x1="692.4" y1="536.9" x2="692.4" y2="576" stroke="#e8a200" stroke-width="1.1" shape-rendering="crispEdges"/>
<line x1="696.3" y1="536.9" x2="696.3" y2="576" stroke="#e8a200" stroke-width="1.1" shape-rendering="crispEdges"/>
<rect x="691.7" y="576" width="5.3" height="12.5" fill="#0000ff" shape-rendering="crispEdges"/>
<rect x="682.8" y="583.2" width="14.2" height="5.3" fill="#0000ff" shape-rendering="crispEdges"/>
<line x1="715.7" y1="525.3" x2="715.7" y2="590.5" stroke="#86f06e" stroke-width="1" shape-rendering="crispEdges"/>
<line x1="702" y1="527.3" x2="718.7" y2="527.3" stroke="#86f06e" stroke-width="1" shape-rendering="crispEdges"/>
<line x1="713.7" y1="529.3" x2="717.7" y2="525.3" stroke="#86f06e" stroke-width="1.2"/>
<line x1="702" y1="556" x2="718.7" y2="556" stroke="#86f06e" stroke-width="1" shape-rendering="crispEdges"/>
<line x1="713.7" y1="558" x2="717.7" y2="554" stroke="#86f06e" stroke-width="1.2"/>
<line x1="702" y1="583" x2="718.7" y2="583" stroke="#86f06e" stroke-width="1" shape-rendering="crispEdges"/>
<line x1="713.7" y1="585" x2="717.7" y2="581" stroke="#86f06e" stroke-width="1.2"/>
<line x1="702" y1="588.5" x2="718.7" y2="588.5" stroke="#86f06e" stroke-width="1" shape-rendering="crispEdges"/>
<line x1="713.7" y1="590.5" x2="717.7" y2="586.5" stroke="#86f06e" stroke-width="1.2"/>
<g fill="none" stroke="#ffffff" stroke-width="1.3" stroke-linejoin="round"><path transform="translate(672.3,512.9) scale(3.696,7.600)" d="M0.9 0.2 Q0.8 0 0.5 0 Q0.1 0 0.1 0.5 Q0.1 1 0.5 1 Q0.9 1 0.9 0.62 L0.9 0.52 L0.55 0.52" vector-effect="non-scaling-stroke"/><path transform="translate(676.5,512.9) scale(3.696,7.600)" d="M0.1 0 L0.1 1 L0.6 1 Q0.92 1 0.92 0.73 Q0.92 0.47 0.6 0.47 L0.1 0.47 M0.6 0.47 Q0.86 0.47 0.86 0.23 Q0.86 0 0.6 0 L0.1 0" vector-effect="non-scaling-stroke"/><path transform="translate(680.7,512.9) scale(3.696,7.600)" d="M0.1 0 L0.9 0 L0.1 1 L0.9 1" vector-effect="non-scaling-stroke"/><path transform="translate(684.9,512.9) scale(3.696,7.600)" d="M0.22 0.2 L0.55 0 L0.55 1" vector-effect="non-scaling-stroke"/></g>
<line x1="672" y1="522" x2="688.8" y2="522" stroke="#ffffff" stroke-width="1" shape-rendering="crispEdges"/>
<line x1="688.8" y1="522" x2="692" y2="527" stroke="#ffffff" stroke-width="0.9"/>
<g fill="none" stroke="#ffffff" stroke-width="1.3" stroke-linejoin="round"><path transform="translate(659.6,568.8) scale(4.013,8.200)" d="M0.9 0.2 Q0.8 0 0.5 0 Q0.1 0 0.1 0.5 Q0.1 1 0.5 1 Q0.9 1 0.9 0.62 L0.9 0.52 L0.55 0.52" vector-effect="non-scaling-stroke"/><path transform="translate(664.1,568.8) scale(4.013,8.200)" d="M0.1 0 L0.1 1 L0.6 1 Q0.92 1 0.92 0.73 Q0.92 0.47 0.6 0.47 L0.1 0.47 M0.6 0.47 Q0.86 0.47 0.86 0.23 Q0.86 0 0.6 0 L0.1 0" vector-effect="non-scaling-stroke"/><path transform="translate(668.7,568.8) scale(4.013,8.200)" d="M0.1 0 L0.9 0 L0.1 1 L0.9 1" vector-effect="non-scaling-stroke"/><path transform="translate(673.3,568.8) scale(4.013,8.200)" d="M0.9 0.35 Q0.9 0.62 0.5 0.62 Q0.1 0.62 0.1 0.31 Q0.1 0 0.5 0 Q0.9 0 0.9 0.4 Q0.9 1 0.5 1 Q0.25 1 0.15 0.88" vector-effect="non-scaling-stroke"/><path transform="translate(677.8,568.8) scale(4.013,8.200)" d="M0.15 0 L0.15 1 M0.15 0.55 Q0.3 0.36 0.5 0.36 Q0.85 0.36 0.85 0.68 Q0.85 1 0.5 1 Q0.3 1 0.15 0.85" vector-effect="non-scaling-stroke"/></g>
<line x1="659.3" y1="578.5" x2="682.1" y2="578.5" stroke="#ffffff" stroke-width="1" shape-rendering="crispEdges"/>
<line x1="682.1" y1="578.5" x2="683" y2="583" stroke="#ffffff" stroke-width="0.9"/>
<g fill="none" stroke="#ffffff" stroke-width="1.15" stroke-linejoin="round" transform="translate(709,548) rotate(-90)"><path transform="translate(0.2,0) scale(2.925,6.000)" d="M0.22 0.2 L0.55 0 L0.55 1" vector-effect="non-scaling-stroke"/><path transform="translate(3.4,0) scale(2.925,6.000)" d="M0.12 0.15 Q0.25 0 0.5 0 Q0.88 0 0.88 0.25 Q0.88 0.47 0.45 0.47 Q0.9 0.47 0.9 0.74 Q0.9 1 0.5 1 Q0.2 1 0.1 0.85" vector-effect="non-scaling-stroke"/><path transform="translate(6.7,0) scale(2.925,6.000)" d="M0.5 0 Q0.1 0 0.1 0.3 L0.1 0.7 Q0.1 1 0.5 1 Q0.9 1 0.9 0.7 L0.9 0.3 Q0.9 0 0.5 0 Z" vector-effect="non-scaling-stroke"/><path transform="translate(9.9,0) scale(2.925,6.000)" d="M0.5 0 Q0.1 0 0.1 0.3 L0.1 0.7 Q0.1 1 0.5 1 Q0.9 1 0.9 0.7 L0.9 0.3 Q0.9 0 0.5 0 Z" vector-effect="non-scaling-stroke"/></g>
<g fill="none" stroke="#ffffff" stroke-width="1.15" stroke-linejoin="round" transform="translate(709,575) rotate(-90)"><path transform="translate(0.2,0) scale(2.925,6.000)" d="M0.22 0.2 L0.55 0 L0.55 1" vector-effect="non-scaling-stroke"/><path transform="translate(3.4,0) scale(2.925,6.000)" d="M0.12 0.15 Q0.25 0 0.5 0 Q0.88 0 0.88 0.25 Q0.88 0.47 0.45 0.47 Q0.9 0.47 0.9 0.74 Q0.9 1 0.5 1 Q0.2 1 0.1 0.85" vector-effect="non-scaling-stroke"/><path transform="translate(6.7,0) scale(2.925,6.000)" d="M0.5 0 Q0.1 0 0.1 0.3 L0.1 0.7 Q0.1 1 0.5 1 Q0.9 1 0.9 0.7 L0.9 0.3 Q0.9 0 0.5 0 Z" vector-effect="non-scaling-stroke"/><path transform="translate(9.9,0) scale(2.925,6.000)" d="M0.5 0 Q0.1 0 0.1 0.3 L0.1 0.7 Q0.1 1 0.5 1 Q0.9 1 0.9 0.7 L0.9 0.3 Q0.9 0 0.5 0 Z" vector-effect="non-scaling-stroke"/></g>
<g fill="none" stroke="#ffffff" stroke-width="1.15" stroke-linejoin="round" transform="translate(709,598) rotate(-90)"><path transform="translate(0.1,0) scale(2.400,6.000)" d="M0.22 0.2 L0.55 0 L0.55 1" vector-effect="non-scaling-stroke"/><path transform="translate(2.8,0) scale(2.400,6.000)" d="M0.5 0 Q0.1 0 0.1 0.3 L0.1 0.7 Q0.1 1 0.5 1 Q0.9 1 0.9 0.7 L0.9 0.3 Q0.9 0 0.5 0 Z" vector-effect="non-scaling-stroke"/><path transform="translate(5.5,0) scale(2.400,6.000)" d="M0.5 0 Q0.1 0 0.1 0.3 L0.1 0.7 Q0.1 1 0.5 1 Q0.9 1 0.9 0.7 L0.9 0.3 Q0.9 0 0.5 0 Z" vector-effect="non-scaling-stroke"/></g>
<g fill="none" stroke="#ffffff" stroke-width="1.15" stroke-linejoin="round"><path transform="translate(669.8,598.6) scale(2.880,6.200)" d="M0.85 0 L0.2 0 L0.15 0.45 Q0.3 0.38 0.5 0.38 Q0.9 0.38 0.9 0.7 Q0.9 1 0.5 1 Q0.2 1 0.1 0.85" vector-effect="non-scaling-stroke"/><path transform="translate(673,598.6) scale(2.880,6.200)" d="M0.5 0 Q0.1 0 0.1 0.3 L0.1 0.7 Q0.1 1 0.5 1 Q0.9 1 0.9 0.7 L0.9 0.3 Q0.9 0 0.5 0 Z" vector-effect="non-scaling-stroke"/><path transform="translate(676.2,598.6) scale(2.880,6.200)" d="M0.5 0 Q0.1 0 0.1 0.3 L0.1 0.7 Q0.1 1 0.5 1 Q0.9 1 0.9 0.7 L0.9 0.3 Q0.9 0 0.5 0 Z" vector-effect="non-scaling-stroke"/></g>
<g fill="none" stroke="#ffffff" stroke-width="1.15" stroke-linejoin="round"><path transform="translate(696.1,598.6) scale(2.700,6.200)" d="M0.22 0.2 L0.55 0 L0.55 1" vector-effect="non-scaling-stroke"/><path transform="translate(699.1,598.6) scale(2.700,6.200)" d="M0.5 0 Q0.1 0 0.1 0.3 L0.1 0.7 Q0.1 1 0.5 1 Q0.9 1 0.9 0.7 L0.9 0.3 Q0.9 0 0.5 0 Z" vector-effect="non-scaling-stroke"/><path transform="translate(702.1,598.6) scale(2.700,6.200)" d="M0.5 0 Q0.1 0 0.1 0.3 L0.1 0.7 Q0.1 1 0.5 1 Q0.9 1 0.9 0.7 L0.9 0.3 Q0.9 0 0.5 0 Z" vector-effect="non-scaling-stroke"/></g>
<line x1="680" y1="606.5" x2="700" y2="606.5" stroke="#86f06e" stroke-width="1" shape-rendering="crispEdges"/>
<line x1="683" y1="594" x2="683" y2="609.5" stroke="#86f06e" stroke-width="1" shape-rendering="crispEdges"/>
<line x1="681" y1="608.5" x2="685" y2="604.5" stroke="#86f06e" stroke-width="1.2"/>
<line x1="692" y1="594" x2="692" y2="609.5" stroke="#86f06e" stroke-width="1" shape-rendering="crispEdges"/>
<line x1="690" y1="608.5" x2="694" y2="604.5" stroke="#86f06e" stroke-width="1.2"/>
<line x1="697" y1="594" x2="697" y2="609.5" stroke="#86f06e" stroke-width="1" shape-rendering="crispEdges"/>
<line x1="695" y1="608.5" x2="699" y2="604.5" stroke="#86f06e" stroke-width="1.2"/>
<rect x="772.9" y="527.3" width="5.3" height="9.6" fill="#0000ff" shape-rendering="crispEdges"/>
<line x1="773.6" y1="536.9" x2="773.6" y2="576" stroke="#e8a200" stroke-width="1.1" shape-rendering="crispEdges"/>
<line x1="777.4" y1="536.9" x2="777.4" y2="576" stroke="#e8a200" stroke-width="1.1" shape-rendering="crispEdges"/>
<rect x="772.9" y="576" width="5.3" height="12.5" fill="#0000ff" shape-rendering="crispEdges"/>
<rect x="757.7" y="583.2" width="20.5" height="5.3" fill="#0000ff" shape-rendering="crispEdges"/>
<line x1="796.2" y1="525.3" x2="796.2" y2="590.5" stroke="#86f06e" stroke-width="1" shape-rendering="crispEdges"/>
<line x1="783" y1="527.3" x2="799.2" y2="527.3" stroke="#86f06e" stroke-width="1" shape-rendering="crispEdges"/>
<line x1="794.2" y1="529.3" x2="798.2" y2="525.3" stroke="#86f06e" stroke-width="1.2"/>
<line x1="783" y1="556" x2="799.2" y2="556" stroke="#86f06e" stroke-width="1" shape-rendering="crispEdges"/>
<line x1="794.2" y1="558" x2="798.2" y2="554" stroke="#86f06e" stroke-width="1.2"/>
<line x1="783" y1="583" x2="799.2" y2="583" stroke="#86f06e" stroke-width="1" shape-rendering="crispEdges"/>
<line x1="794.2" y1="585" x2="798.2" y2="581" stroke="#86f06e" stroke-width="1.2"/>
<line x1="783" y1="588.5" x2="799.2" y2="588.5" stroke="#86f06e" stroke-width="1" shape-rendering="crispEdges"/>
<line x1="794.2" y1="590.5" x2="798.2" y2="586.5" stroke="#86f06e" stroke-width="1.2"/>
<g fill="none" stroke="#ffffff" stroke-width="1.3" stroke-linejoin="round"><path transform="translate(753.3,512.9) scale(3.674,7.600)" d="M0.9 0.2 Q0.8 0 0.5 0 Q0.1 0 0.1 0.5 Q0.1 1 0.5 1 Q0.9 1 0.9 0.62 L0.9 0.52 L0.55 0.52" vector-effect="non-scaling-stroke"/><path transform="translate(757.4,512.9) scale(3.674,7.600)" d="M0.1 0 L0.1 1 L0.6 1 Q0.92 1 0.92 0.73 Q0.92 0.47 0.6 0.47 L0.1 0.47 M0.6 0.47 Q0.86 0.47 0.86 0.23 Q0.86 0 0.6 0 L0.1 0" vector-effect="non-scaling-stroke"/><path transform="translate(761.6,512.9) scale(3.674,7.600)" d="M0.1 0 L0.9 0 L0.1 1 L0.9 1" vector-effect="non-scaling-stroke"/><path transform="translate(765.8,512.9) scale(3.674,7.600)" d="M0.22 0.2 L0.55 0 L0.55 1" vector-effect="non-scaling-stroke"/></g>
<line x1="753" y1="522" x2="769.7" y2="522" stroke="#ffffff" stroke-width="1" shape-rendering="crispEdges"/>
<line x1="769.7" y1="522" x2="773" y2="527" stroke="#ffffff" stroke-width="0.9"/>
<g fill="none" stroke="#ffffff" stroke-width="1.3" stroke-linejoin="round"><path transform="translate(734,568.8) scale(3.802,8.200)" d="M0.9 0.2 Q0.8 0 0.5 0 Q0.1 0 0.1 0.5 Q0.1 1 0.5 1 Q0.9 1 0.9 0.62 L0.9 0.52 L0.55 0.52" vector-effect="non-scaling-stroke"/><path transform="translate(738.3,568.8) scale(3.802,8.200)" d="M0.1 0 L0.1 1 L0.6 1 Q0.92 1 0.92 0.73 Q0.92 0.47 0.6 0.47 L0.1 0.47 M0.6 0.47 Q0.86 0.47 0.86 0.23 Q0.86 0 0.6 0 L0.1 0" vector-effect="non-scaling-stroke"/><path transform="translate(742.6,568.8) scale(3.802,8.200)" d="M0.1 0 L0.9 0 L0.1 1 L0.9 1" vector-effect="non-scaling-stroke"/><path transform="translate(746.9,568.8) scale(3.802,8.200)" d="M0.22 0.2 L0.55 0 L0.55 1" vector-effect="non-scaling-stroke"/><path transform="translate(751.2,568.8) scale(3.802,8.200)" d="M0.7 1 L0.7 0 L0.06 0.7 L0.95 0.7" vector-effect="non-scaling-stroke"/></g>
<line x1="733.7" y1="578.5" x2="755.3" y2="578.5" stroke="#ffffff" stroke-width="1" shape-rendering="crispEdges"/>
<line x1="755.3" y1="578.5" x2="758" y2="583" stroke="#ffffff" stroke-width="0.9"/>
<g fill="none" stroke="#ffffff" stroke-width="1.15" stroke-linejoin="round" transform="translate(789,548) rotate(-90)"><path transform="translate(0.2,0) scale(2.925,6.000)" d="M0.22 0.2 L0.55 0 L0.55 1" vector-effect="non-scaling-stroke"/><path transform="translate(3.4,0) scale(2.925,6.000)" d="M0.12 0.15 Q0.25 0 0.5 0 Q0.88 0 0.88 0.25 Q0.88 0.47 0.45 0.47 Q0.9 0.47 0.9 0.74 Q0.9 1 0.5 1 Q0.2 1 0.1 0.85" vector-effect="non-scaling-stroke"/><path transform="translate(6.7,0) scale(2.925,6.000)" d="M0.5 0 Q0.1 0 0.1 0.3 L0.1 0.7 Q0.1 1 0.5 1 Q0.9 1 0.9 0.7 L0.9 0.3 Q0.9 0 0.5 0 Z" vector-effect="non-scaling-stroke"/><path transform="translate(9.9,0) scale(2.925,6.000)" d="M0.5 0 Q0.1 0 0.1 0.3 L0.1 0.7 Q0.1 1 0.5 1 Q0.9 1 0.9 0.7 L0.9 0.3 Q0.9 0 0.5 0 Z" vector-effect="non-scaling-stroke"/></g>
<g fill="none" stroke="#ffffff" stroke-width="1.15" stroke-linejoin="round" transform="translate(789,575) rotate(-90)"><path transform="translate(0.2,0) scale(2.925,6.000)" d="M0.22 0.2 L0.55 0 L0.55 1" vector-effect="non-scaling-stroke"/><path transform="translate(3.4,0) scale(2.925,6.000)" d="M0.12 0.15 Q0.25 0 0.5 0 Q0.88 0 0.88 0.25 Q0.88 0.47 0.45 0.47 Q0.9 0.47 0.9 0.74 Q0.9 1 0.5 1 Q0.2 1 0.1 0.85" vector-effect="non-scaling-stroke"/><path transform="translate(6.7,0) scale(2.925,6.000)" d="M0.5 0 Q0.1 0 0.1 0.3 L0.1 0.7 Q0.1 1 0.5 1 Q0.9 1 0.9 0.7 L0.9 0.3 Q0.9 0 0.5 0 Z" vector-effect="non-scaling-stroke"/><path transform="translate(9.9,0) scale(2.925,6.000)" d="M0.5 0 Q0.1 0 0.1 0.3 L0.1 0.7 Q0.1 1 0.5 1 Q0.9 1 0.9 0.7 L0.9 0.3 Q0.9 0 0.5 0 Z" vector-effect="non-scaling-stroke"/></g>
<g fill="none" stroke="#ffffff" stroke-width="1.15" stroke-linejoin="round" transform="translate(789,598) rotate(-90)"><path transform="translate(0.1,0) scale(2.400,6.000)" d="M0.22 0.2 L0.55 0 L0.55 1" vector-effect="non-scaling-stroke"/><path transform="translate(2.8,0) scale(2.400,6.000)" d="M0.5 0 Q0.1 0 0.1 0.3 L0.1 0.7 Q0.1 1 0.5 1 Q0.9 1 0.9 0.7 L0.9 0.3 Q0.9 0 0.5 0 Z" vector-effect="non-scaling-stroke"/><path transform="translate(5.5,0) scale(2.400,6.000)" d="M0.5 0 Q0.1 0 0.1 0.3 L0.1 0.7 Q0.1 1 0.5 1 Q0.9 1 0.9 0.7 L0.9 0.3 Q0.9 0 0.5 0 Z" vector-effect="non-scaling-stroke"/></g>
<g fill="none" stroke="#ffffff" stroke-width="1.15" stroke-linejoin="round"><path transform="translate(761.5,598.6) scale(2.910,6.200)" d="M0.1 0 L0.9 0 L0.4 1" vector-effect="non-scaling-stroke"/><path transform="translate(764.7,598.6) scale(2.910,6.200)" d="M0.85 0 L0.2 0 L0.15 0.45 Q0.3 0.38 0.5 0.38 Q0.9 0.38 0.9 0.7 Q0.9 1 0.5 1 Q0.2 1 0.1 0.85" vector-effect="non-scaling-stroke"/><path transform="translate(767.9,598.6) scale(2.910,6.200)" d="M0.5 0 Q0.1 0 0.1 0.3 L0.1 0.7 Q0.1 1 0.5 1 Q0.9 1 0.9 0.7 L0.9 0.3 Q0.9 0 0.5 0 Z" vector-effect="non-scaling-stroke"/></g>
<g fill="none" stroke="#ffffff" stroke-width="1.15" stroke-linejoin="round"><path transform="translate(778.1,598.6) scale(2.550,6.200)" d="M0.22 0.2 L0.55 0 L0.55 1" vector-effect="non-scaling-stroke"/><path transform="translate(781,598.6) scale(2.550,6.200)" d="M0.5 0 Q0.1 0 0.1 0.3 L0.1 0.7 Q0.1 1 0.5 1 Q0.9 1 0.9 0.7 L0.9 0.3 Q0.9 0 0.5 0 Z" vector-effect="non-scaling-stroke"/><path transform="translate(783.8,598.6) scale(2.550,6.200)" d="M0.5 0 Q0.1 0 0.1 0.3 L0.1 0.7 Q0.1 1 0.5 1 Q0.9 1 0.9 0.7 L0.9 0.3 Q0.9 0 0.5 0 Z" vector-effect="non-scaling-stroke"/></g>
<line x1="755" y1="606.5" x2="781" y2="606.5" stroke="#86f06e" stroke-width="1" shape-rendering="crispEdges"/>
<line x1="758" y1="594" x2="758" y2="609.5" stroke="#86f06e" stroke-width="1" shape-rendering="crispEdges"/>
<line x1="756" y1="608.5" x2="760" y2="604.5" stroke="#86f06e" stroke-width="1.2"/>
<line x1="773" y1="594" x2="773" y2="609.5" stroke="#86f06e" stroke-width="1" shape-rendering="crispEdges"/>
<line x1="771" y1="608.5" x2="775" y2="604.5" stroke="#86f06e" stroke-width="1.2"/>
<line x1="778" y1="594" x2="778" y2="609.5" stroke="#86f06e" stroke-width="1" shape-rendering="crispEdges"/>
<line x1="776" y1="608.5" x2="780" y2="604.5" stroke="#86f06e" stroke-width="1.2"/>
<rect x="584.4" y="583.2" width="29.3" height="5.8" fill="#0000ff" shape-rendering="crispEdges"/>
<rect x="600" y="583" width="4.8" height="29.5" fill="#0000ff" shape-rendering="crispEdges"/>
<line x1="631.7" y1="581.2" x2="631.7" y2="614.5" stroke="#86f06e" stroke-width="1" shape-rendering="crispEdges"/>
<line x1="618" y1="583.2" x2="634.7" y2="583.2" stroke="#86f06e" stroke-width="1" shape-rendering="crispEdges"/>
<line x1="629.7" y1="585.2" x2="633.7" y2="581.2" stroke="#86f06e" stroke-width="1.2"/>
<line x1="618" y1="589" x2="634.7" y2="589" stroke="#86f06e" stroke-width="1" shape-rendering="crispEdges"/>
<line x1="629.7" y1="591" x2="633.7" y2="587" stroke="#86f06e" stroke-width="1.2"/>
<line x1="618" y1="612.5" x2="634.7" y2="612.5" stroke="#86f06e" stroke-width="1" shape-rendering="crispEdges"/>
<line x1="629.7" y1="614.5" x2="633.7" y2="610.5" stroke="#86f06e" stroke-width="1.2"/>
<g fill="none" stroke="#ffffff" stroke-width="1.3" stroke-linejoin="round"><path transform="translate(560,568.8) scale(3.890,8.200)" d="M0.9 0.2 Q0.8 0 0.5 0 Q0.1 0 0.1 0.5 Q0.1 1 0.5 1 Q0.9 1 0.9 0.62 L0.9 0.52 L0.55 0.52" vector-effect="non-scaling-stroke"/><path transform="translate(564.4,568.8) scale(3.890,8.200)" d="M0.1 0 L0.1 1 L0.6 1 Q0.92 1 0.92 0.73 Q0.92 0.47 0.6 0.47 L0.1 0.47 M0.6 0.47 Q0.86 0.47 0.86 0.23 Q0.86 0 0.6 0 L0.1 0" vector-effect="non-scaling-stroke"/><path transform="translate(568.8,568.8) scale(3.890,8.200)" d="M0.1 0 L0.9 0 L0.1 1 L0.9 1" vector-effect="non-scaling-stroke"/><path transform="translate(573.2,568.8) scale(3.890,8.200)" d="M0.12 0.24 Q0.15 0 0.5 0 Q0.88 0 0.88 0.27 Q0.88 0.45 0.5 0.65 L0.1 1 L0.92 1" vector-effect="non-scaling-stroke"/><path transform="translate(577.6,568.8) scale(3.890,8.200)" d="M0.22 0.2 L0.55 0 L0.55 1" vector-effect="non-scaling-stroke"/></g>
<line x1="559.7" y1="578.5" x2="581.8" y2="578.5" stroke="#ffffff" stroke-width="1" shape-rendering="crispEdges"/>
<line x1="581.8" y1="578.5" x2="584" y2="583" stroke="#ffffff" stroke-width="0.9"/>
<g fill="none" stroke="#ffffff" stroke-width="1.15" stroke-linejoin="round" transform="translate(625,582) rotate(-90)"><path transform="translate(0.1,0) scale(2.400,6.000)" d="M0.22 0.2 L0.55 0 L0.55 1" vector-effect="non-scaling-stroke"/><path transform="translate(2.8,0) scale(2.400,6.000)" d="M0.5 0 Q0.1 0 0.1 0.3 L0.1 0.7 Q0.1 1 0.5 1 Q0.9 1 0.9 0.7 L0.9 0.3 Q0.9 0 0.5 0 Z" vector-effect="non-scaling-stroke"/><path transform="translate(5.5,0) scale(2.400,6.000)" d="M0.5 0 Q0.1 0 0.1 0.3 L0.1 0.7 Q0.1 1 0.5 1 Q0.9 1 0.9 0.7 L0.9 0.3 Q0.9 0 0.5 0 Z" vector-effect="non-scaling-stroke"/></g>
<g fill="none" stroke="#ffffff" stroke-width="1.15" stroke-linejoin="round" transform="translate(625,607) rotate(-90)"><path transform="translate(0.2,0) scale(3.375,6.000)" d="M0.22 0.2 L0.55 0 L0.55 1" vector-effect="non-scaling-stroke"/><path transform="translate(3.9,0) scale(3.375,6.000)" d="M0.12 0.24 Q0.15 0 0.5 0 Q0.88 0 0.88 0.27 Q0.88 0.45 0.5 0.65 L0.1 1 L0.92 1" vector-effect="non-scaling-stroke"/><path transform="translate(7.7,0) scale(3.375,6.000)" d="M0.5 0 Q0.1 0 0.1 0.3 L0.1 0.7 Q0.1 1 0.5 1 Q0.9 1 0.9 0.7 L0.9 0.3 Q0.9 0 0.5 0 Z" vector-effect="non-scaling-stroke"/><path transform="translate(11.4,0) scale(3.375,6.000)" d="M0.5 0 Q0.1 0 0.1 0.3 L0.1 0.7 Q0.1 1 0.5 1 Q0.9 1 0.9 0.7 L0.9 0.3 Q0.9 0 0.5 0 Z" vector-effect="non-scaling-stroke"/></g>
<g fill="none" stroke="#ffffff" stroke-width="1.15" stroke-linejoin="round"><path transform="translate(587.7,623.8) scale(2.571,5.400)" d="M0.5 0.47 Q0.12 0.47 0.12 0.24 Q0.12 0 0.5 0 Q0.88 0 0.88 0.24 Q0.88 0.47 0.5 0.47 Q0.08 0.47 0.08 0.74 Q0.08 1 0.5 1 Q0.92 1 0.92 0.74 Q0.92 0.47 0.5 0.47" vector-effect="non-scaling-stroke"/><path transform="translate(590.6,623.8) scale(2.571,5.400)" d="M0.5 0 Q0.1 0 0.1 0.3 L0.1 0.7 Q0.1 1 0.5 1 Q0.9 1 0.9 0.7 L0.9 0.3 Q0.9 0 0.5 0 Z" vector-effect="non-scaling-stroke"/><path transform="translate(593.5,623.8) scale(2.571,5.400)" d="M0.5 0 Q0.1 0 0.1 0.3 L0.1 0.7 Q0.1 1 0.5 1 Q0.9 1 0.9 0.7 L0.9 0.3 Q0.9 0 0.5 0 Z" vector-effect="non-scaling-stroke"/><path transform="translate(599.2,623.8) scale(2.571,5.400)" d="M0.5 0.47 Q0.12 0.47 0.12 0.24 Q0.12 0 0.5 0 Q0.88 0 0.88 0.24 Q0.88 0.47 0.5 0.47 Q0.08 0.47 0.08 0.74 Q0.08 1 0.5 1 Q0.92 1 0.92 0.74 Q0.92 0.47 0.5 0.47" vector-effect="non-scaling-stroke"/><path transform="translate(602,623.8) scale(2.571,5.400)" d="M0.5 0 Q0.1 0 0.1 0.3 L0.1 0.7 Q0.1 1 0.5 1 Q0.9 1 0.9 0.7 L0.9 0.3 Q0.9 0 0.5 0 Z" vector-effect="non-scaling-stroke"/><path transform="translate(604.9,623.8) scale(2.571,5.400)" d="M0.5 0 Q0.1 0 0.1 0.3 L0.1 0.7 Q0.1 1 0.5 1 Q0.9 1 0.9 0.7 L0.9 0.3 Q0.9 0 0.5 0 Z" vector-effect="non-scaling-stroke"/></g>
<line x1="581.2" y1="630.8" x2="616.7" y2="630.8" stroke="#86f06e" stroke-width="1" shape-rendering="crispEdges"/>
<line x1="584.2" y1="618" x2="584.2" y2="633.8" stroke="#86f06e" stroke-width="1" shape-rendering="crispEdges"/>
<line x1="582.2" y1="632.8" x2="586.2" y2="628.8" stroke="#86f06e" stroke-width="1.2"/>
<line x1="602" y1="618" x2="602" y2="633.8" stroke="#86f06e" stroke-width="1" shape-rendering="crispEdges"/>
<line x1="600" y1="632.8" x2="604" y2="628.8" stroke="#86f06e" stroke-width="1.2"/>
<line x1="613.7" y1="618" x2="613.7" y2="633.8" stroke="#86f06e" stroke-width="1" shape-rendering="crispEdges"/>
<line x1="611.7" y1="632.8" x2="615.7" y2="628.8" stroke="#86f06e" stroke-width="1.2"/>
<rect x="305" y="617" width="11.8" height="4.8" fill="#0000ff" shape-rendering="crispEdges"/>
<rect x="305" y="617" width="5" height="10.9" fill="#0000ff" shape-rendering="crispEdges"/>
<line x1="316.8" y1="617.6" x2="334.4" y2="617.6" stroke="#e8a200" stroke-width="1.1" shape-rendering="crispEdges"/>
<line x1="316.8" y1="621.2" x2="334.4" y2="621.2" stroke="#e8a200" stroke-width="1.1" shape-rendering="crispEdges"/>
<rect x="334.4" y="617" width="9.8" height="4.8" fill="#0000ff" shape-rendering="crispEdges"/>
<line x1="363.3" y1="615.4" x2="363.3" y2="629.6" stroke="#86f06e" stroke-width="1" shape-rendering="crispEdges"/>
<line x1="350" y1="617.4" x2="366.3" y2="617.4" stroke="#86f06e" stroke-width="1" shape-rendering="crispEdges"/>
<line x1="361.3" y1="619.4" x2="365.3" y2="615.4" stroke="#86f06e" stroke-width="1.2"/>
<line x1="350" y1="621.4" x2="366.3" y2="621.4" stroke="#86f06e" stroke-width="1" shape-rendering="crispEdges"/>
<line x1="361.3" y1="623.4" x2="365.3" y2="619.4" stroke="#86f06e" stroke-width="1.2"/>
<line x1="350" y1="627.6" x2="366.3" y2="627.6" stroke="#86f06e" stroke-width="1" shape-rendering="crispEdges"/>
<line x1="361.3" y1="629.6" x2="365.3" y2="625.6" stroke="#86f06e" stroke-width="1.2"/>
<g fill="none" stroke="#ffffff" stroke-width="1.3" stroke-linejoin="round"><path transform="translate(284.3,602.2) scale(3.916,8.200)" d="M0.9 0.2 Q0.8 0 0.5 0 Q0.1 0 0.1 0.5 Q0.1 1 0.5 1 Q0.9 1 0.9 0.62 L0.9 0.52 L0.55 0.52" vector-effect="non-scaling-stroke"/><path transform="translate(288.7,602.2) scale(3.916,8.200)" d="M0.1 0 L0.1 1 L0.6 1 Q0.92 1 0.92 0.73 Q0.92 0.47 0.6 0.47 L0.1 0.47 M0.6 0.47 Q0.86 0.47 0.86 0.23 Q0.86 0 0.6 0 L0.1 0" vector-effect="non-scaling-stroke"/><path transform="translate(293.2,602.2) scale(3.916,8.200)" d="M0.1 0 L0.9 0 L0.1 1 L0.9 1" vector-effect="non-scaling-stroke"/><path transform="translate(297.6,602.2) scale(3.916,8.200)" d="M0.85 0 L0.2 0 L0.15 0.45 Q0.3 0.38 0.5 0.38 Q0.9 0.38 0.9 0.7 Q0.9 1 0.5 1 Q0.2 1 0.1 0.85" vector-effect="non-scaling-stroke"/></g>
<line x1="284" y1="611.9" x2="301.8" y2="611.9" stroke="#ffffff" stroke-width="1" shape-rendering="crispEdges"/>
<line x1="301.8" y1="611.9" x2="305" y2="617" stroke="#ffffff" stroke-width="0.9"/>
<g fill="none" stroke="#ffffff" stroke-width="1.3" stroke-linejoin="round"><path transform="translate(316.2,602.2) scale(3.590,8.200)" d="M0.9 0.2 Q0.8 0 0.5 0 Q0.1 0 0.1 0.5 Q0.1 1 0.5 1 Q0.9 1 0.9 0.62 L0.9 0.52 L0.55 0.52" vector-effect="non-scaling-stroke"/><path transform="translate(320.3,602.2) scale(3.590,8.200)" d="M0.1 0 L0.1 1 L0.6 1 Q0.92 1 0.92 0.73 Q0.92 0.47 0.6 0.47 L0.1 0.47 M0.6 0.47 Q0.86 0.47 0.86 0.23 Q0.86 0 0.6 0 L0.1 0" vector-effect="non-scaling-stroke"/><path transform="translate(324.4,602.2) scale(3.590,8.200)" d="M0.1 0 L0.9 0 L0.1 1 L0.9 1" vector-effect="non-scaling-stroke"/><path transform="translate(328.5,602.2) scale(3.590,8.200)" d="M0.22 0.2 L0.55 0 L0.55 1" vector-effect="non-scaling-stroke"/><path transform="translate(332.6,602.2) scale(3.590,8.200)" d="M0.85 0.38 L0.85 1 M0.85 0.55 Q0.7 0.36 0.5 0.36 Q0.15 0.36 0.15 0.68 Q0.15 1 0.5 1 Q0.7 1 0.85 0.85" vector-effect="non-scaling-stroke"/></g>
<line x1="316" y1="611.9" x2="336.4" y2="611.9" stroke="#ffffff" stroke-width="1" shape-rendering="crispEdges"/>
<line x1="336.4" y1="611.9" x2="338" y2="617" stroke="#ffffff" stroke-width="0.9"/>
<g fill="none" stroke="#ffffff" stroke-width="1.15" stroke-linejoin="round" transform="translate(356,630) rotate(-90)"><path transform="translate(0.1,0) scale(2.571,6.000)" d="M0.22 0.2 L0.55 0 L0.55 1" vector-effect="non-scaling-stroke"/><path transform="translate(3,0) scale(2.571,6.000)" d="M0.85 0 L0.2 0 L0.15 0.45 Q0.3 0.38 0.5 0.38 Q0.9 0.38 0.9 0.7 Q0.9 1 0.5 1 Q0.2 1 0.1 0.85" vector-effect="non-scaling-stroke"/><path transform="translate(5.9,0) scale(2.571,6.000)" d="M0.5 0 Q0.1 0 0.1 0.3 L0.1 0.7 Q0.1 1 0.5 1 Q0.9 1 0.9 0.7 L0.9 0.3 Q0.9 0 0.5 0 Z" vector-effect="non-scaling-stroke"/><path transform="translate(11.6,0) scale(2.571,6.000)" d="M0.22 0.2 L0.55 0 L0.55 1" vector-effect="non-scaling-stroke"/><path transform="translate(14.4,0) scale(2.571,6.000)" d="M0.5 0 Q0.1 0 0.1 0.3 L0.1 0.7 Q0.1 1 0.5 1 Q0.9 1 0.9 0.7 L0.9 0.3 Q0.9 0 0.5 0 Z" vector-effect="non-scaling-stroke"/><path transform="translate(17.3,0) scale(2.571,6.000)" d="M0.5 0 Q0.1 0 0.1 0.3 L0.1 0.7 Q0.1 1 0.5 1 Q0.9 1 0.9 0.7 L0.9 0.3 Q0.9 0 0.5 0 Z" vector-effect="non-scaling-stroke"/></g>
<g fill="none" stroke="#ffffff" stroke-width="1.15" stroke-linejoin="round"><path transform="translate(295.7,637.4) scale(2.430,5.600)" d="M0.22 0.2 L0.55 0 L0.55 1" vector-effect="non-scaling-stroke"/><path transform="translate(298.4,637.4) scale(2.430,5.600)" d="M0.5 0 Q0.1 0 0.1 0.3 L0.1 0.7 Q0.1 1 0.5 1 Q0.9 1 0.9 0.7 L0.9 0.3 Q0.9 0 0.5 0 Z" vector-effect="non-scaling-stroke"/><path transform="translate(301.1,637.4) scale(2.430,5.600)" d="M0.5 0 Q0.1 0 0.1 0.3 L0.1 0.7 Q0.1 1 0.5 1 Q0.9 1 0.9 0.7 L0.9 0.3 Q0.9 0 0.5 0 Z" vector-effect="non-scaling-stroke"/></g>
<g fill="none" stroke="#ffffff" stroke-width="1.15" stroke-linejoin="round"><path transform="translate(318.6,637.4) scale(2.768,5.600)" d="M0.22 0.2 L0.55 0 L0.55 1" vector-effect="non-scaling-stroke"/><path transform="translate(321.6,637.4) scale(2.768,5.600)" d="M0.22 0.2 L0.55 0 L0.55 1" vector-effect="non-scaling-stroke"/><path transform="translate(324.7,637.4) scale(2.768,5.600)" d="M0.5 0 Q0.1 0 0.1 0.3 L0.1 0.7 Q0.1 1 0.5 1 Q0.9 1 0.9 0.7 L0.9 0.3 Q0.9 0 0.5 0 Z" vector-effect="non-scaling-stroke"/><path transform="translate(327.8,637.4) scale(2.768,5.600)" d="M0.5 0 Q0.1 0 0.1 0.3 L0.1 0.7 Q0.1 1 0.5 1 Q0.9 1 0.9 0.7 L0.9 0.3 Q0.9 0 0.5 0 Z" vector-effect="non-scaling-stroke"/></g>
<line x1="300.7" y1="644.2" x2="347.5" y2="644.2" stroke="#86f06e" stroke-width="1" shape-rendering="crispEdges"/>
<line x1="303.7" y1="632" x2="303.7" y2="647.2" stroke="#86f06e" stroke-width="1" shape-rendering="crispEdges"/>
<line x1="301.7" y1="646.2" x2="305.7" y2="642.2" stroke="#86f06e" stroke-width="1.2"/>
<line x1="305" y1="632" x2="305" y2="647.2" stroke="#86f06e" stroke-width="1" shape-rendering="crispEdges"/>
<line x1="303" y1="646.2" x2="307" y2="642.2" stroke="#86f06e" stroke-width="1.2"/>
<line x1="310" y1="632" x2="310" y2="647.2" stroke="#86f06e" stroke-width="1" shape-rendering="crispEdges"/>
<line x1="308" y1="646.2" x2="312" y2="642.2" stroke="#86f06e" stroke-width="1.2"/>
<line x1="344.5" y1="632" x2="344.5" y2="647.2" stroke="#86f06e" stroke-width="1" shape-rendering="crispEdges"/>
<line x1="342.5" y1="646.2" x2="346.5" y2="642.2" stroke="#86f06e" stroke-width="1.2"/>
<rect x="451.2" y="616.9" width="9.8" height="4.9" fill="#0000ff" shape-rendering="crispEdges"/>
<line x1="461" y1="617.6" x2="478" y2="617.6" stroke="#e8a200" stroke-width="1.1" shape-rendering="crispEdges"/>
<line x1="461" y1="621.2" x2="478" y2="621.2" stroke="#e8a200" stroke-width="1.1" shape-rendering="crispEdges"/>
<rect x="478" y="616.9" width="12" height="4.9" fill="#0000ff" shape-rendering="crispEdges"/>
<rect x="485.3" y="616.9" width="4.7" height="10.8" fill="#0000ff" shape-rendering="crispEdges"/>
<line x1="507.6" y1="615.4" x2="507.6" y2="629.7" stroke="#86f06e" stroke-width="1" shape-rendering="crispEdges"/>
<line x1="495" y1="617.4" x2="510.6" y2="617.4" stroke="#86f06e" stroke-width="1" shape-rendering="crispEdges"/>
<line x1="505.6" y1="619.4" x2="509.6" y2="615.4" stroke="#86f06e" stroke-width="1.2"/>
<line x1="495" y1="621.4" x2="510.6" y2="621.4" stroke="#86f06e" stroke-width="1" shape-rendering="crispEdges"/>
<line x1="505.6" y1="623.4" x2="509.6" y2="619.4" stroke="#86f06e" stroke-width="1.2"/>
<line x1="495" y1="627.7" x2="510.6" y2="627.7" stroke="#86f06e" stroke-width="1" shape-rendering="crispEdges"/>
<line x1="505.6" y1="629.7" x2="509.6" y2="625.7" stroke="#86f06e" stroke-width="1.2"/>
<g fill="none" stroke="#ffffff" stroke-width="1.3" stroke-linejoin="round"><path transform="translate(427.3,602.3) scale(3.766,7.700)" d="M0.9 0.2 Q0.8 0 0.5 0 Q0.1 0 0.1 0.5 Q0.1 1 0.5 1 Q0.9 1 0.9 0.62 L0.9 0.52 L0.55 0.52" vector-effect="non-scaling-stroke"/><path transform="translate(431.5,602.3) scale(3.766,7.700)" d="M0.1 0 L0.1 1 L0.6 1 Q0.92 1 0.92 0.73 Q0.92 0.47 0.6 0.47 L0.1 0.47 M0.6 0.47 Q0.86 0.47 0.86 0.23 Q0.86 0 0.6 0 L0.1 0" vector-effect="non-scaling-stroke"/><path transform="translate(435.8,602.3) scale(3.766,7.700)" d="M0.1 0 L0.9 0 L0.1 1 L0.9 1" vector-effect="non-scaling-stroke"/><path transform="translate(440.1,602.3) scale(3.766,7.700)" d="M0.22 0.2 L0.55 0 L0.55 1" vector-effect="non-scaling-stroke"/><path transform="translate(444.4,602.3) scale(3.766,7.700)" d="M0.85 0.38 L0.85 1 M0.85 0.55 Q0.7 0.36 0.5 0.36 Q0.15 0.36 0.15 0.68 Q0.15 1 0.5 1 Q0.7 1 0.85 0.85" vector-effect="non-scaling-stroke"/></g>
<line x1="427" y1="611.5" x2="448.4" y2="611.5" stroke="#ffffff" stroke-width="1" shape-rendering="crispEdges"/>
<line x1="448.4" y1="611.5" x2="451" y2="617" stroke="#ffffff" stroke-width="0.9"/>
<g fill="none" stroke="#ffffff" stroke-width="1.3" stroke-linejoin="round"><path transform="translate(457.2,602.3) scale(4.224,7.700)" d="M0.9 0.2 Q0.8 0 0.5 0 Q0.1 0 0.1 0.5 Q0.1 1 0.5 1 Q0.9 1 0.9 0.62 L0.9 0.52 L0.55 0.52" vector-effect="non-scaling-stroke"/><path transform="translate(462,602.3) scale(4.224,7.700)" d="M0.1 0 L0.1 1 L0.6 1 Q0.92 1 0.92 0.73 Q0.92 0.47 0.6 0.47 L0.1 0.47 M0.6 0.47 Q0.86 0.47 0.86 0.23 Q0.86 0 0.6 0 L0.1 0" vector-effect="non-scaling-stroke"/><path transform="translate(466.8,602.3) scale(4.224,7.700)" d="M0.1 0 L0.9 0 L0.1 1 L0.9 1" vector-effect="non-scaling-stroke"/><path transform="translate(471.6,602.3) scale(4.224,7.700)" d="M0.85 0 L0.2 0 L0.15 0.45 Q0.3 0.38 0.5 0.38 Q0.9 0.38 0.9 0.7 Q0.9 1 0.5 1 Q0.2 1 0.1 0.85" vector-effect="non-scaling-stroke"/></g>
<line x1="456.9" y1="611.5" x2="476.1" y2="611.5" stroke="#ffffff" stroke-width="1" shape-rendering="crispEdges"/>
<line x1="476.1" y1="611.5" x2="479" y2="617" stroke="#ffffff" stroke-width="0.9"/>
<g fill="none" stroke="#ffffff" stroke-width="1.15" stroke-linejoin="round" transform="translate(501,626) rotate(-90)"><path transform="translate(0.3,0) scale(4.800,6.000)" d="M0.22 0.2 L0.55 0 L0.55 1" vector-effect="non-scaling-stroke"/><path transform="translate(5.6,0) scale(4.800,6.000)" d="M0.85 0 L0.2 0 L0.15 0.45 Q0.3 0.38 0.5 0.38 Q0.9 0.38 0.9 0.7 Q0.9 1 0.5 1 Q0.2 1 0.1 0.85" vector-effect="non-scaling-stroke"/><path transform="translate(10.9,0) scale(4.800,6.000)" d="M0.5 0 Q0.1 0 0.1 0.3 L0.1 0.7 Q0.1 1 0.5 1 Q0.9 1 0.9 0.7 L0.9 0.3 Q0.9 0 0.5 0 Z" vector-effect="non-scaling-stroke"/></g>
<g fill="none" stroke="#ffffff" stroke-width="1.15" stroke-linejoin="round"><path transform="translate(463.1,630) scale(2.610,5.000)" d="M0.22 0.2 L0.55 0 L0.55 1" vector-effect="non-scaling-stroke"/><path transform="translate(466,630) scale(2.610,5.000)" d="M0.85 0.12 Q0.7 0 0.5 0 Q0.1 0 0.1 0.6 Q0.1 1 0.5 1 Q0.9 1 0.9 0.68 Q0.9 0.38 0.5 0.38 Q0.1 0.38 0.1 0.65" vector-effect="non-scaling-stroke"/><path transform="translate(468.9,630) scale(2.610,5.000)" d="M0.5 0 Q0.1 0 0.1 0.3 L0.1 0.7 Q0.1 1 0.5 1 Q0.9 1 0.9 0.7 L0.9 0.3 Q0.9 0 0.5 0 Z" vector-effect="non-scaling-stroke"/><path transform="translate(471.8,630) scale(2.610,5.000)" d="M0.5 0 Q0.1 0 0.1 0.3 L0.1 0.7 Q0.1 1 0.5 1 Q0.9 1 0.9 0.7 L0.9 0.3 Q0.9 0 0.5 0 Z" vector-effect="non-scaling-stroke"/></g>
<g fill="none" stroke="#ffffff" stroke-width="1.15" stroke-linejoin="round"><path transform="translate(489.3,630) scale(2.520,5.000)" d="M0.22 0.2 L0.55 0 L0.55 1" vector-effect="non-scaling-stroke"/><path transform="translate(492.1,630) scale(2.520,5.000)" d="M0.5 0 Q0.1 0 0.1 0.3 L0.1 0.7 Q0.1 1 0.5 1 Q0.9 1 0.9 0.7 L0.9 0.3 Q0.9 0 0.5 0 Z" vector-effect="non-scaling-stroke"/><path transform="translate(494.9,630) scale(2.520,5.000)" d="M0.5 0 Q0.1 0 0.1 0.3 L0.1 0.7 Q0.1 1 0.5 1 Q0.9 1 0.9 0.7 L0.9 0.3 Q0.9 0 0.5 0 Z" vector-effect="non-scaling-stroke"/></g>
<line x1="448.2" y1="637.4" x2="493" y2="637.4" stroke="#86f06e" stroke-width="1" shape-rendering="crispEdges"/>
<line x1="451.2" y1="624" x2="451.2" y2="640.4" stroke="#86f06e" stroke-width="1" shape-rendering="crispEdges"/>
<line x1="449.2" y1="639.4" x2="453.2" y2="635.4" stroke="#86f06e" stroke-width="1.2"/>
<line x1="485" y1="624" x2="485" y2="640.4" stroke="#86f06e" stroke-width="1" shape-rendering="crispEdges"/>
<line x1="483" y1="639.4" x2="487" y2="635.4" stroke="#86f06e" stroke-width="1.2"/>
<line x1="490" y1="624" x2="490" y2="640.4" stroke="#86f06e" stroke-width="1" shape-rendering="crispEdges"/>
<line x1="488" y1="639.4" x2="492" y2="635.4" stroke="#86f06e" stroke-width="1.2"/>
<rect x="206.2" y="657" width="11.8" height="5.7" fill="#0000ff" shape-rendering="crispEdges"/>
<rect x="206.2" y="657" width="4.8" height="19.6" fill="#0000ff" shape-rendering="crispEdges"/>
<line x1="218" y1="657.7" x2="235.1" y2="657.7" stroke="#e8a200" stroke-width="1.1" shape-rendering="crispEdges"/>
<line x1="218" y1="662" x2="235.1" y2="662" stroke="#e8a200" stroke-width="1.1" shape-rendering="crispEdges"/>
<rect x="235.1" y="657" width="9.9" height="5.7" fill="#0000ff" shape-rendering="crispEdges"/>
<line x1="263.2" y1="655.3" x2="263.2" y2="678.6" stroke="#86f06e" stroke-width="1" shape-rendering="crispEdges"/>
<line x1="250" y1="657.3" x2="266.2" y2="657.3" stroke="#86f06e" stroke-width="1" shape-rendering="crispEdges"/>
<line x1="261.2" y1="659.3" x2="265.2" y2="655.3" stroke="#86f06e" stroke-width="1.2"/>
<line x1="250" y1="660.5" x2="266.2" y2="660.5" stroke="#86f06e" stroke-width="1" shape-rendering="crispEdges"/>
<line x1="261.2" y1="662.5" x2="265.2" y2="658.5" stroke="#86f06e" stroke-width="1.2"/>
<line x1="250" y1="676.6" x2="266.2" y2="676.6" stroke="#86f06e" stroke-width="1" shape-rendering="crispEdges"/>
<line x1="261.2" y1="678.6" x2="265.2" y2="674.6" stroke="#86f06e" stroke-width="1.2"/>
<g fill="none" stroke="#ffffff" stroke-width="1.3" stroke-linejoin="round"><path transform="translate(181.5,643) scale(3.890,8.200)" d="M0.9 0.2 Q0.8 0 0.5 0 Q0.1 0 0.1 0.5 Q0.1 1 0.5 1 Q0.9 1 0.9 0.62 L0.9 0.52 L0.55 0.52" vector-effect="non-scaling-stroke"/><path transform="translate(185.9,643) scale(3.890,8.200)" d="M0.1 0 L0.1 1 L0.6 1 Q0.92 1 0.92 0.73 Q0.92 0.47 0.6 0.47 L0.1 0.47 M0.6 0.47 Q0.86 0.47 0.86 0.23 Q0.86 0 0.6 0 L0.1 0" vector-effect="non-scaling-stroke"/><path transform="translate(190.3,643) scale(3.890,8.200)" d="M0.1 0 L0.9 0 L0.1 1 L0.9 1" vector-effect="non-scaling-stroke"/><path transform="translate(194.7,643) scale(3.890,8.200)" d="M0.22 0.2 L0.55 0 L0.55 1" vector-effect="non-scaling-stroke"/><path transform="translate(199.1,643) scale(3.890,8.200)" d="M0.12 0.15 Q0.25 0 0.5 0 Q0.88 0 0.88 0.25 Q0.88 0.47 0.45 0.47 Q0.9 0.47 0.9 0.74 Q0.9 1 0.5 1 Q0.2 1 0.1 0.85" vector-effect="non-scaling-stroke"/></g>
<line x1="181.2" y1="652.7" x2="203.3" y2="652.7" stroke="#ffffff" stroke-width="1" shape-rendering="crispEdges"/>
<line x1="203.3" y1="652.7" x2="206" y2="657" stroke="#ffffff" stroke-width="0.9"/>
<g fill="none" stroke="#ffffff" stroke-width="1.3" stroke-linejoin="round"><path transform="translate(215.5,643) scale(3.674,8.200)" d="M0.9 0.2 Q0.8 0 0.5 0 Q0.1 0 0.1 0.5 Q0.1 1 0.5 1 Q0.9 1 0.9 0.62 L0.9 0.52 L0.55 0.52" vector-effect="non-scaling-stroke"/><path transform="translate(219.6,643) scale(3.674,8.200)" d="M0.1 0 L0.1 1 L0.6 1 Q0.92 1 0.92 0.73 Q0.92 0.47 0.6 0.47 L0.1 0.47 M0.6 0.47 Q0.86 0.47 0.86 0.23 Q0.86 0 0.6 0 L0.1 0" vector-effect="non-scaling-stroke"/><path transform="translate(223.8,643) scale(3.674,8.200)" d="M0.1 0 L0.9 0 L0.1 1 L0.9 1" vector-effect="non-scaling-stroke"/><path transform="translate(228,643) scale(3.674,8.200)" d="M0.22 0.2 L0.55 0 L0.55 1" vector-effect="non-scaling-stroke"/></g>
<line x1="215.2" y1="652.7" x2="231.9" y2="652.7" stroke="#ffffff" stroke-width="1" shape-rendering="crispEdges"/>
<line x1="231.9" y1="652.7" x2="235" y2="657" stroke="#ffffff" stroke-width="0.9"/>
<g fill="none" stroke="#ffffff" stroke-width="1.15" stroke-linejoin="round" transform="translate(256,658) rotate(-90)"><path transform="translate(0.1,0) scale(2.400,6.000)" d="M0.22 0.2 L0.55 0 L0.55 1" vector-effect="non-scaling-stroke"/><path transform="translate(2.8,0) scale(2.400,6.000)" d="M0.5 0 Q0.1 0 0.1 0.3 L0.1 0.7 Q0.1 1 0.5 1 Q0.9 1 0.9 0.7 L0.9 0.3 Q0.9 0 0.5 0 Z" vector-effect="non-scaling-stroke"/><path transform="translate(5.5,0) scale(2.400,6.000)" d="M0.5 0 Q0.1 0 0.1 0.3 L0.1 0.7 Q0.1 1 0.5 1 Q0.9 1 0.9 0.7 L0.9 0.3 Q0.9 0 0.5 0 Z" vector-effect="non-scaling-stroke"/></g>
<g fill="none" stroke="#ffffff" stroke-width="1.15" stroke-linejoin="round" transform="translate(256,673) rotate(-90)"><path transform="translate(0.2,0) scale(2.700,6.000)" d="M0.1 0 L0.9 0 L0.4 1" vector-effect="non-scaling-stroke"/><path transform="translate(3.1,0) scale(2.700,6.000)" d="M0.5 0 Q0.1 0 0.1 0.3 L0.1 0.7 Q0.1 1 0.5 1 Q0.9 1 0.9 0.7 L0.9 0.3 Q0.9 0 0.5 0 Z" vector-effect="non-scaling-stroke"/><path transform="translate(6.2,0) scale(2.700,6.000)" d="M0.5 0 Q0.1 0 0.1 0.3 L0.1 0.7 Q0.1 1 0.5 1 Q0.9 1 0.9 0.7 L0.9 0.3 Q0.9 0 0.5 0 Z" vector-effect="non-scaling-stroke"/></g>
<g fill="none" stroke="#ffffff" stroke-width="1.15" stroke-linejoin="round"><path transform="translate(196.8,678.2) scale(2.490,5.800)" d="M0.22 0.2 L0.55 0 L0.55 1" vector-effect="non-scaling-stroke"/><path transform="translate(199.6,678.2) scale(2.490,5.800)" d="M0.5 0 Q0.1 0 0.1 0.3 L0.1 0.7 Q0.1 1 0.5 1 Q0.9 1 0.9 0.7 L0.9 0.3 Q0.9 0 0.5 0 Z" vector-effect="non-scaling-stroke"/><path transform="translate(202.4,678.2) scale(2.490,5.800)" d="M0.5 0 Q0.1 0 0.1 0.3 L0.1 0.7 Q0.1 1 0.5 1 Q0.9 1 0.9 0.7 L0.9 0.3 Q0.9 0 0.5 0 Z" vector-effect="non-scaling-stroke"/></g>
<g fill="none" stroke="#ffffff" stroke-width="1.15" stroke-linejoin="round"><path transform="translate(219.7,678.2) scale(2.565,5.800)" d="M0.22 0.2 L0.55 0 L0.55 1" vector-effect="non-scaling-stroke"/><path transform="translate(222.6,678.2) scale(2.565,5.800)" d="M0.22 0.2 L0.55 0 L0.55 1" vector-effect="non-scaling-stroke"/><path transform="translate(225.4,678.2) scale(2.565,5.800)" d="M0.5 0 Q0.1 0 0.1 0.3 L0.1 0.7 Q0.1 1 0.5 1 Q0.9 1 0.9 0.7 L0.9 0.3 Q0.9 0 0.5 0 Z" vector-effect="non-scaling-stroke"/><path transform="translate(228.3,678.2) scale(2.565,5.800)" d="M0.5 0 Q0.1 0 0.1 0.3 L0.1 0.7 Q0.1 1 0.5 1 Q0.9 1 0.9 0.7 L0.9 0.3 Q0.9 0 0.5 0 Z" vector-effect="non-scaling-stroke"/></g>
<line x1="203" y1="685.5" x2="248" y2="685.5" stroke="#86f06e" stroke-width="1" shape-rendering="crispEdges"/>
<line x1="206" y1="673" x2="206" y2="688.5" stroke="#86f06e" stroke-width="1" shape-rendering="crispEdges"/>
<line x1="204" y1="687.5" x2="208" y2="683.5" stroke="#86f06e" stroke-width="1.2"/>
<line x1="211" y1="673" x2="211" y2="688.5" stroke="#86f06e" stroke-width="1" shape-rendering="crispEdges"/>
<line x1="209" y1="687.5" x2="213" y2="683.5" stroke="#86f06e" stroke-width="1.2"/>
<line x1="245" y1="673" x2="245" y2="688.5" stroke="#86f06e" stroke-width="1" shape-rendering="crispEdges"/>
<line x1="243" y1="687.5" x2="247" y2="683.5" stroke="#86f06e" stroke-width="1.2"/>
<rect x="302" y="657" width="15.1" height="5.7" fill="#0000ff" shape-rendering="crispEdges"/>
<rect x="311" y="657" width="6.1" height="13" fill="#0000ff" shape-rendering="crispEdges"/>
<line x1="311.6" y1="670" x2="311.6" y2="723.1" stroke="#e8a200" stroke-width="1.1" shape-rendering="crispEdges"/>
<line x1="316.5" y1="670" x2="316.5" y2="723.1" stroke="#e8a200" stroke-width="1.1" shape-rendering="crispEdges"/>
<rect x="311" y="723.1" width="6.1" height="9.8" fill="#0000ff" shape-rendering="crispEdges"/>
<line x1="335" y1="655" x2="335" y2="734.9" stroke="#86f06e" stroke-width="1" shape-rendering="crispEdges"/>
<line x1="322" y1="657" x2="338" y2="657" stroke="#86f06e" stroke-width="1" shape-rendering="crispEdges"/>
<line x1="333" y1="659" x2="337" y2="655" stroke="#86f06e" stroke-width="1.2"/>
<line x1="322" y1="660" x2="338" y2="660" stroke="#86f06e" stroke-width="1" shape-rendering="crispEdges"/>
<line x1="333" y1="662" x2="337" y2="658" stroke="#86f06e" stroke-width="1.2"/>
<line x1="322" y1="732.9" x2="338" y2="732.9" stroke="#86f06e" stroke-width="1" shape-rendering="crispEdges"/>
<line x1="333" y1="734.9" x2="337" y2="730.9" stroke="#86f06e" stroke-width="1.2"/>
<g fill="none" stroke="#ffffff" stroke-width="1.3" stroke-linejoin="round"><path transform="translate(282.5,643) scale(3.938,8.500)" d="M0.9 0.2 Q0.8 0 0.5 0 Q0.1 0 0.1 0.5 Q0.1 1 0.5 1 Q0.9 1 0.9 0.62 L0.9 0.52 L0.55 0.52" vector-effect="non-scaling-stroke"/><path transform="translate(286.9,643) scale(3.938,8.500)" d="M0.1 0 L0.1 1 L0.6 1 Q0.92 1 0.92 0.73 Q0.92 0.47 0.6 0.47 L0.1 0.47 M0.6 0.47 Q0.86 0.47 0.86 0.23 Q0.86 0 0.6 0 L0.1 0" vector-effect="non-scaling-stroke"/><path transform="translate(291.4,643) scale(3.938,8.500)" d="M0.1 0 L0.9 0 L0.1 1 L0.9 1" vector-effect="non-scaling-stroke"/><path transform="translate(295.9,643) scale(3.938,8.500)" d="M0.9 0.35 Q0.9 0.62 0.5 0.62 Q0.1 0.62 0.1 0.31 Q0.1 0 0.5 0 Q0.9 0 0.9 0.4 Q0.9 1 0.5 1 Q0.25 1 0.15 0.88" vector-effect="non-scaling-stroke"/></g>
<line x1="282.2" y1="653" x2="300.1" y2="653" stroke="#ffffff" stroke-width="1" shape-rendering="crispEdges"/>
<line x1="300.1" y1="653" x2="302" y2="657" stroke="#ffffff" stroke-width="0.9"/>
<g fill="none" stroke="#ffffff" stroke-width="1.3" stroke-linejoin="round"><path transform="translate(292.2,708.4) scale(3.652,7.400)" d="M0.9 0.2 Q0.8 0 0.5 0 Q0.1 0 0.1 0.5 Q0.1 1 0.5 1 Q0.9 1 0.9 0.62 L0.9 0.52 L0.55 0.52" vector-effect="non-scaling-stroke"/><path transform="translate(296.4,708.4) scale(3.652,7.400)" d="M0.1 0 L0.1 1 L0.6 1 Q0.92 1 0.92 0.73 Q0.92 0.47 0.6 0.47 L0.1 0.47 M0.6 0.47 Q0.86 0.47 0.86 0.23 Q0.86 0 0.6 0 L0.1 0" vector-effect="non-scaling-stroke"/><path transform="translate(300.5,708.4) scale(3.652,7.400)" d="M0.1 0 L0.9 0 L0.1 1 L0.9 1" vector-effect="non-scaling-stroke"/><path transform="translate(304.7,708.4) scale(3.652,7.400)" d="M0.22 0.2 L0.55 0 L0.55 1" vector-effect="non-scaling-stroke"/></g>
<line x1="292" y1="717.3" x2="308.6" y2="717.3" stroke="#ffffff" stroke-width="1" shape-rendering="crispEdges"/>
<line x1="308.6" y1="717.3" x2="311" y2="723" stroke="#ffffff" stroke-width="0.9"/>
<g fill="none" stroke="#ffffff" stroke-width="1.15" stroke-linejoin="round" transform="translate(328,658) rotate(-90)"><path transform="translate(0.1,0) scale(2.400,6.000)" d="M0.22 0.2 L0.55 0 L0.55 1" vector-effect="non-scaling-stroke"/><path transform="translate(2.8,0) scale(2.400,6.000)" d="M0.5 0 Q0.1 0 0.1 0.3 L0.1 0.7 Q0.1 1 0.5 1 Q0.9 1 0.9 0.7 L0.9 0.3 Q0.9 0 0.5 0 Z" vector-effect="non-scaling-stroke"/><path transform="translate(5.5,0) scale(2.400,6.000)" d="M0.5 0 Q0.1 0 0.1 0.3 L0.1 0.7 Q0.1 1 0.5 1 Q0.9 1 0.9 0.7 L0.9 0.3 Q0.9 0 0.5 0 Z" vector-effect="non-scaling-stroke"/></g>
<g fill="none" stroke="#ffffff" stroke-width="1.15" stroke-linejoin="round" transform="translate(328,703) rotate(-90)"><path transform="translate(0.2,0) scale(2.925,6.000)" d="M0.12 0.15 Q0.25 0 0.5 0 Q0.88 0 0.88 0.25 Q0.88 0.47 0.45 0.47 Q0.9 0.47 0.9 0.74 Q0.9 1 0.5 1 Q0.2 1 0.1 0.85" vector-effect="non-scaling-stroke"/><path transform="translate(3.4,0) scale(2.925,6.000)" d="M0.12 0.24 Q0.15 0 0.5 0 Q0.88 0 0.88 0.27 Q0.88 0.45 0.5 0.65 L0.1 1 L0.92 1" vector-effect="non-scaling-stroke"/><path transform="translate(6.7,0) scale(2.925,6.000)" d="M0.5 0 Q0.1 0 0.1 0.3 L0.1 0.7 Q0.1 1 0.5 1 Q0.9 1 0.9 0.7 L0.9 0.3 Q0.9 0 0.5 0 Z" vector-effect="non-scaling-stroke"/><path transform="translate(9.9,0) scale(2.925,6.000)" d="M0.5 0 Q0.1 0 0.1 0.3 L0.1 0.7 Q0.1 1 0.5 1 Q0.9 1 0.9 0.7 L0.9 0.3 Q0.9 0 0.5 0 Z" vector-effect="non-scaling-stroke"/></g>
<g fill="none" stroke="#ffffff" stroke-width="1.15" stroke-linejoin="round"><path transform="translate(293.1,741.9) scale(2.618,7.300)" d="M0.12 0.24 Q0.15 0 0.5 0 Q0.88 0 0.88 0.27 Q0.88 0.45 0.5 0.65 L0.1 1 L0.92 1" vector-effect="non-scaling-stroke"/><path transform="translate(296.1,741.9) scale(2.618,7.300)" d="M0.5 0 Q0.1 0 0.1 0.3 L0.1 0.7 Q0.1 1 0.5 1 Q0.9 1 0.9 0.7 L0.9 0.3 Q0.9 0 0.5 0 Z" vector-effect="non-scaling-stroke"/><path transform="translate(299,741.9) scale(2.618,7.300)" d="M0.5 0 Q0.1 0 0.1 0.3 L0.1 0.7 Q0.1 1 0.5 1 Q0.9 1 0.9 0.7 L0.9 0.3 Q0.9 0 0.5 0 Z" vector-effect="non-scaling-stroke"/><path transform="translate(304.8,741.9) scale(2.618,7.300)" d="M0.12 0.15 Q0.25 0 0.5 0 Q0.88 0 0.88 0.25 Q0.88 0.47 0.45 0.47 Q0.9 0.47 0.9 0.74 Q0.9 1 0.5 1 Q0.2 1 0.1 0.85" vector-effect="non-scaling-stroke"/><path transform="translate(307.7,741.9) scale(2.618,7.300)" d="M0.5 0 Q0.1 0 0.1 0.3 L0.1 0.7 Q0.1 1 0.5 1 Q0.9 1 0.9 0.7 L0.9 0.3 Q0.9 0 0.5 0 Z" vector-effect="non-scaling-stroke"/><path transform="translate(310.6,741.9) scale(2.618,7.300)" d="M0.5 0 Q0.1 0 0.1 0.3 L0.1 0.7 Q0.1 1 0.5 1 Q0.9 1 0.9 0.7 L0.9 0.3 Q0.9 0 0.5 0 Z" vector-effect="non-scaling-stroke"/><path transform="translate(316.4,741.9) scale(2.618,7.300)" d="M0.22 0.2 L0.55 0 L0.55 1" vector-effect="non-scaling-stroke"/><path transform="translate(319.3,741.9) scale(2.618,7.300)" d="M0.5 0 Q0.1 0 0.1 0.3 L0.1 0.7 Q0.1 1 0.5 1 Q0.9 1 0.9 0.7 L0.9 0.3 Q0.9 0 0.5 0 Z" vector-effect="non-scaling-stroke"/><path transform="translate(322.2,741.9) scale(2.618,7.300)" d="M0.5 0 Q0.1 0 0.1 0.3 L0.1 0.7 Q0.1 1 0.5 1 Q0.9 1 0.9 0.7 L0.9 0.3 Q0.9 0 0.5 0 Z" vector-effect="non-scaling-stroke"/></g>
<line x1="299" y1="750" x2="320" y2="750" stroke="#86f06e" stroke-width="1" shape-rendering="crispEdges"/>
<line x1="302" y1="738" x2="302" y2="753" stroke="#86f06e" stroke-width="1" shape-rendering="crispEdges"/>
<line x1="300" y1="752" x2="304" y2="748" stroke="#86f06e" stroke-width="1.2"/>
<line x1="308" y1="738" x2="308" y2="753" stroke="#86f06e" stroke-width="1" shape-rendering="crispEdges"/>
<line x1="306" y1="752" x2="310" y2="748" stroke="#86f06e" stroke-width="1.2"/>
<line x1="311" y1="738" x2="311" y2="753" stroke="#86f06e" stroke-width="1" shape-rendering="crispEdges"/>
<line x1="309" y1="752" x2="313" y2="748" stroke="#86f06e" stroke-width="1.2"/>
<line x1="317" y1="738" x2="317" y2="753" stroke="#86f06e" stroke-width="1" shape-rendering="crispEdges"/>
<line x1="315" y1="752" x2="319" y2="748" stroke="#86f06e" stroke-width="1.2"/>
<rect x="395.2" y="671.2" width="4.8" height="9.4" fill="#0000ff" shape-rendering="crispEdges"/>
<line x1="395.7" y1="680.6" x2="395.7" y2="736.2" stroke="#e8a200" stroke-width="1.1" shape-rendering="crispEdges"/>
<line x1="399.4" y1="680.6" x2="399.4" y2="736.2" stroke="#e8a200" stroke-width="1.1" shape-rendering="crispEdges"/>
<rect x="395.2" y="736.2" width="4.8" height="9.8" fill="#0000ff" shape-rendering="crispEdges"/>
<line x1="418.9" y1="658" x2="418.9" y2="748" stroke="#86f06e" stroke-width="1" shape-rendering="crispEdges"/>
<line x1="406" y1="660" x2="421.9" y2="660" stroke="#86f06e" stroke-width="1" shape-rendering="crispEdges"/>
<line x1="416.9" y1="662" x2="420.9" y2="658" stroke="#86f06e" stroke-width="1.2"/>
<line x1="406" y1="671" x2="421.9" y2="671" stroke="#86f06e" stroke-width="1" shape-rendering="crispEdges"/>
<line x1="416.9" y1="673" x2="420.9" y2="669" stroke="#86f06e" stroke-width="1.2"/>
<line x1="406" y1="746" x2="421.9" y2="746" stroke="#86f06e" stroke-width="1" shape-rendering="crispEdges"/>
<line x1="416.9" y1="748" x2="420.9" y2="744" stroke="#86f06e" stroke-width="1.2"/>
<g fill="none" stroke="#ffffff" stroke-width="1.3" stroke-linejoin="round"><path transform="translate(375.5,657) scale(3.586,7.300)" d="M0.9 0.2 Q0.8 0 0.5 0 Q0.1 0 0.1 0.5 Q0.1 1 0.5 1 Q0.9 1 0.9 0.62 L0.9 0.52 L0.55 0.52" vector-effect="non-scaling-stroke"/><path transform="translate(379.6,657) scale(3.586,7.300)" d="M0.1 0 L0.1 1 L0.6 1 Q0.92 1 0.92 0.73 Q0.92 0.47 0.6 0.47 L0.1 0.47 M0.6 0.47 Q0.86 0.47 0.86 0.23 Q0.86 0 0.6 0 L0.1 0" vector-effect="non-scaling-stroke"/><path transform="translate(383.7,657) scale(3.586,7.300)" d="M0.1 0 L0.9 0 L0.1 1 L0.9 1" vector-effect="non-scaling-stroke"/><path transform="translate(387.8,657) scale(3.586,7.300)" d="M0.22 0.2 L0.55 0 L0.55 1" vector-effect="non-scaling-stroke"/></g>
<line x1="375.3" y1="665.8" x2="391.6" y2="665.8" stroke="#ffffff" stroke-width="1" shape-rendering="crispEdges"/>
<line x1="391.6" y1="665.8" x2="395" y2="671" stroke="#ffffff" stroke-width="0.9"/>
<g fill="none" stroke="#ffffff" stroke-width="1.3" stroke-linejoin="round"><path transform="translate(375.5,722.3) scale(3.586,7.300)" d="M0.9 0.2 Q0.8 0 0.5 0 Q0.1 0 0.1 0.5 Q0.1 1 0.5 1 Q0.9 1 0.9 0.62 L0.9 0.52 L0.55 0.52" vector-effect="non-scaling-stroke"/><path transform="translate(379.6,722.3) scale(3.586,7.300)" d="M0.1 0 L0.1 1 L0.6 1 Q0.92 1 0.92 0.73 Q0.92 0.47 0.6 0.47 L0.1 0.47 M0.6 0.47 Q0.86 0.47 0.86 0.23 Q0.86 0 0.6 0 L0.1 0" vector-effect="non-scaling-stroke"/><path transform="translate(383.7,722.3) scale(3.586,7.300)" d="M0.1 0 L0.9 0 L0.1 1 L0.9 1" vector-effect="non-scaling-stroke"/><path transform="translate(387.8,722.3) scale(3.586,7.300)" d="M0.22 0.2 L0.55 0 L0.55 1" vector-effect="non-scaling-stroke"/></g>
<line x1="375.3" y1="731.1" x2="391.6" y2="731.1" stroke="#ffffff" stroke-width="1" shape-rendering="crispEdges"/>
<line x1="391.6" y1="731.1" x2="395" y2="736" stroke="#ffffff" stroke-width="0.9"/>
<g fill="none" stroke="#ffffff" stroke-width="1.15" stroke-linejoin="round" transform="translate(412,659) rotate(-90)"><path transform="translate(0.2,0) scale(2.700,6.000)" d="M0.85 0 L0.2 0 L0.15 0.45 Q0.3 0.38 0.5 0.38 Q0.9 0.38 0.9 0.7 Q0.9 1 0.5 1 Q0.2 1 0.1 0.85" vector-effect="non-scaling-stroke"/><path transform="translate(3.1,0) scale(2.700,6.000)" d="M0.5 0 Q0.1 0 0.1 0.3 L0.1 0.7 Q0.1 1 0.5 1 Q0.9 1 0.9 0.7 L0.9 0.3 Q0.9 0 0.5 0 Z" vector-effect="non-scaling-stroke"/><path transform="translate(6.2,0) scale(2.700,6.000)" d="M0.5 0 Q0.1 0 0.1 0.3 L0.1 0.7 Q0.1 1 0.5 1 Q0.9 1 0.9 0.7 L0.9 0.3 Q0.9 0 0.5 0 Z" vector-effect="non-scaling-stroke"/></g>
<g fill="none" stroke="#ffffff" stroke-width="1.15" stroke-linejoin="round" transform="translate(412,718) rotate(-90)"><path transform="translate(0.2,0) scale(3.375,6.000)" d="M0.12 0.15 Q0.25 0 0.5 0 Q0.88 0 0.88 0.25 Q0.88 0.47 0.45 0.47 Q0.9 0.47 0.9 0.74 Q0.9 1 0.5 1 Q0.2 1 0.1 0.85" vector-effect="non-scaling-stroke"/><path transform="translate(3.9,0) scale(3.375,6.000)" d="M0.12 0.15 Q0.25 0 0.5 0 Q0.88 0 0.88 0.25 Q0.88 0.47 0.45 0.47 Q0.9 0.47 0.9 0.74 Q0.9 1 0.5 1 Q0.2 1 0.1 0.85" vector-effect="non-scaling-stroke"/><path transform="translate(7.7,0) scale(3.375,6.000)" d="M0.5 0 Q0.1 0 0.1 0.3 L0.1 0.7 Q0.1 1 0.5 1 Q0.9 1 0.9 0.7 L0.9 0.3 Q0.9 0 0.5 0 Z" vector-effect="non-scaling-stroke"/><path transform="translate(11.4,0) scale(3.375,6.000)" d="M0.5 0 Q0.1 0 0.1 0.3 L0.1 0.7 Q0.1 1 0.5 1 Q0.9 1 0.9 0.7 L0.9 0.3 Q0.9 0 0.5 0 Z" vector-effect="non-scaling-stroke"/></g>
<g fill="none" stroke="#ffffff" stroke-width="1.15" stroke-linejoin="round"><path transform="translate(386.4,756.6) scale(2.803,5.400)" d="M0.22 0.2 L0.55 0 L0.55 1" vector-effect="non-scaling-stroke"/><path transform="translate(389.5,756.6) scale(2.803,5.400)" d="M0.5 0 Q0.1 0 0.1 0.3 L0.1 0.7 Q0.1 1 0.5 1 Q0.9 1 0.9 0.7 L0.9 0.3 Q0.9 0 0.5 0 Z" vector-effect="non-scaling-stroke"/><path transform="translate(392.6,756.6) scale(2.803,5.400)" d="M0.5 0 Q0.1 0 0.1 0.3 L0.1 0.7 Q0.1 1 0.5 1 Q0.9 1 0.9 0.7 L0.9 0.3 Q0.9 0 0.5 0 Z" vector-effect="non-scaling-stroke"/><path transform="translate(398.8,756.6) scale(2.803,5.400)" d="M0.22 0.2 L0.55 0 L0.55 1" vector-effect="non-scaling-stroke"/><path transform="translate(401.9,756.6) scale(2.803,5.400)" d="M0.5 0 Q0.1 0 0.1 0.3 L0.1 0.7 Q0.1 1 0.5 1 Q0.9 1 0.9 0.7 L0.9 0.3 Q0.9 0 0.5 0 Z" vector-effect="non-scaling-stroke"/><path transform="translate(405,756.6) scale(2.803,5.400)" d="M0.5 0 Q0.1 0 0.1 0.3 L0.1 0.7 Q0.1 1 0.5 1 Q0.9 1 0.9 0.7 L0.9 0.3 Q0.9 0 0.5 0 Z" vector-effect="non-scaling-stroke"/></g>
<line x1="392" y1="763.5" x2="403" y2="763.5" stroke="#86f06e" stroke-width="1" shape-rendering="crispEdges"/>
<line x1="395" y1="752" x2="395" y2="766.5" stroke="#86f06e" stroke-width="1" shape-rendering="crispEdges"/>
<line x1="393" y1="765.5" x2="397" y2="761.5" stroke="#86f06e" stroke-width="1.2"/>
<line x1="398" y1="752" x2="398" y2="766.5" stroke="#86f06e" stroke-width="1" shape-rendering="crispEdges"/>
<line x1="396" y1="765.5" x2="400" y2="761.5" stroke="#86f06e" stroke-width="1.2"/>
<line x1="400" y1="752" x2="400" y2="766.5" stroke="#86f06e" stroke-width="1" shape-rendering="crispEdges"/>
<line x1="398" y1="765.5" x2="402" y2="761.5" stroke="#86f06e" stroke-width="1.2"/>
<line x1="417.4" y1="645.7" x2="417.4" y2="747.3" stroke="#86f06e" stroke-width="1" shape-rendering="crispEdges"/>
<line x1="406" y1="647.7" x2="420.4" y2="647.7" stroke="#86f06e" stroke-width="1" shape-rendering="crispEdges"/>
<line x1="415.4" y1="649.7" x2="419.4" y2="645.7" stroke="#86f06e" stroke-width="1.2"/>
<line x1="406" y1="745.3" x2="420.4" y2="745.3" stroke="#86f06e" stroke-width="1" shape-rendering="crispEdges"/>
<line x1="415.4" y1="747.3" x2="419.4" y2="743.3" stroke="#86f06e" stroke-width="1.2"/>
<rect x="478" y="657.2" width="14" height="5.5" fill="#0000ff" shape-rendering="crispEdges"/>
<rect x="478" y="657" width="5" height="13" fill="#0000ff" shape-rendering="crispEdges"/>
<line x1="478.4" y1="670" x2="478.4" y2="723" stroke="#e8a200" stroke-width="1.1" shape-rendering="crispEdges"/>
<line x1="482.6" y1="670" x2="482.6" y2="723" stroke="#e8a200" stroke-width="1.1" shape-rendering="crispEdges"/>
<rect x="478" y="723" width="5" height="9.5" fill="#0000ff" shape-rendering="crispEdges"/>
<line x1="510" y1="655.2" x2="510" y2="734.5" stroke="#86f06e" stroke-width="1" shape-rendering="crispEdges"/>
<line x1="497" y1="657.2" x2="513" y2="657.2" stroke="#86f06e" stroke-width="1" shape-rendering="crispEdges"/>
<line x1="508" y1="659.2" x2="512" y2="655.2" stroke="#86f06e" stroke-width="1.2"/>
<line x1="497" y1="660" x2="513" y2="660" stroke="#86f06e" stroke-width="1" shape-rendering="crispEdges"/>
<line x1="508" y1="662" x2="512" y2="658" stroke="#86f06e" stroke-width="1.2"/>
<line x1="497" y1="732.5" x2="513" y2="732.5" stroke="#86f06e" stroke-width="1" shape-rendering="crispEdges"/>
<line x1="508" y1="734.5" x2="512" y2="730.5" stroke="#86f06e" stroke-width="1.2"/>
<g fill="none" stroke="#ffffff" stroke-width="1.3" stroke-linejoin="round"><path transform="translate(458.4,643) scale(3.960,8.500)" d="M0.9 0.2 Q0.8 0 0.5 0 Q0.1 0 0.1 0.5 Q0.1 1 0.5 1 Q0.9 1 0.9 0.62 L0.9 0.52 L0.55 0.52" vector-effect="non-scaling-stroke"/><path transform="translate(462.9,643) scale(3.960,8.500)" d="M0.1 0 L0.1 1 L0.6 1 Q0.92 1 0.92 0.73 Q0.92 0.47 0.6 0.47 L0.1 0.47 M0.6 0.47 Q0.86 0.47 0.86 0.23 Q0.86 0 0.6 0 L0.1 0" vector-effect="non-scaling-stroke"/><path transform="translate(467.4,643) scale(3.960,8.500)" d="M0.1 0 L0.9 0 L0.1 1 L0.9 1" vector-effect="non-scaling-stroke"/><path transform="translate(471.9,643) scale(3.960,8.500)" d="M0.9 0.35 Q0.9 0.62 0.5 0.62 Q0.1 0.62 0.1 0.31 Q0.1 0 0.5 0 Q0.9 0 0.9 0.4 Q0.9 1 0.5 1 Q0.25 1 0.15 0.88" vector-effect="non-scaling-stroke"/></g>
<line x1="458.1" y1="653" x2="476.1" y2="653" stroke="#ffffff" stroke-width="1" shape-rendering="crispEdges"/>
<line x1="476.1" y1="653" x2="478" y2="657" stroke="#ffffff" stroke-width="0.9"/>
<g fill="none" stroke="#ffffff" stroke-width="1.3" stroke-linejoin="round"><path transform="translate(458.3,707.6) scale(3.630,9.300)" d="M0.9 0.2 Q0.8 0 0.5 0 Q0.1 0 0.1 0.5 Q0.1 1 0.5 1 Q0.9 1 0.9 0.62 L0.9 0.52 L0.55 0.52" vector-effect="non-scaling-stroke"/><path transform="translate(462.5,707.6) scale(3.630,9.300)" d="M0.1 0 L0.1 1 L0.6 1 Q0.92 1 0.92 0.73 Q0.92 0.47 0.6 0.47 L0.1 0.47 M0.6 0.47 Q0.86 0.47 0.86 0.23 Q0.86 0 0.6 0 L0.1 0" vector-effect="non-scaling-stroke"/><path transform="translate(466.6,707.6) scale(3.630,9.300)" d="M0.1 0 L0.9 0 L0.1 1 L0.9 1" vector-effect="non-scaling-stroke"/><path transform="translate(470.7,707.6) scale(3.630,9.300)" d="M0.22 0.2 L0.55 0 L0.55 1" vector-effect="non-scaling-stroke"/></g>
<line x1="458.1" y1="718.4" x2="474.6" y2="718.4" stroke="#ffffff" stroke-width="1" shape-rendering="crispEdges"/>
<line x1="474.6" y1="718.4" x2="478" y2="723" stroke="#ffffff" stroke-width="0.9"/>
<g fill="none" stroke="#ffffff" stroke-width="1.15" stroke-linejoin="round" transform="translate(503,658) rotate(-90)"><path transform="translate(0.1,0) scale(2.400,6.000)" d="M0.22 0.2 L0.55 0 L0.55 1" vector-effect="non-scaling-stroke"/><path transform="translate(2.8,0) scale(2.400,6.000)" d="M0.5 0 Q0.1 0 0.1 0.3 L0.1 0.7 Q0.1 1 0.5 1 Q0.9 1 0.9 0.7 L0.9 0.3 Q0.9 0 0.5 0 Z" vector-effect="non-scaling-stroke"/><path transform="translate(5.5,0) scale(2.400,6.000)" d="M0.5 0 Q0.1 0 0.1 0.3 L0.1 0.7 Q0.1 1 0.5 1 Q0.9 1 0.9 0.7 L0.9 0.3 Q0.9 0 0.5 0 Z" vector-effect="non-scaling-stroke"/></g>
<g fill="none" stroke="#ffffff" stroke-width="1.15" stroke-linejoin="round" transform="translate(503,703) rotate(-90)"><path transform="translate(0.2,0) scale(2.925,6.000)" d="M0.12 0.15 Q0.25 0 0.5 0 Q0.88 0 0.88 0.25 Q0.88 0.47 0.45 0.47 Q0.9 0.47 0.9 0.74 Q0.9 1 0.5 1 Q0.2 1 0.1 0.85" vector-effect="non-scaling-stroke"/><path transform="translate(3.4,0) scale(2.925,6.000)" d="M0.12 0.24 Q0.15 0 0.5 0 Q0.88 0 0.88 0.27 Q0.88 0.45 0.5 0.65 L0.1 1 L0.92 1" vector-effect="non-scaling-stroke"/><path transform="translate(6.7,0) scale(2.925,6.000)" d="M0.5 0 Q0.1 0 0.1 0.3 L0.1 0.7 Q0.1 1 0.5 1 Q0.9 1 0.9 0.7 L0.9 0.3 Q0.9 0 0.5 0 Z" vector-effect="non-scaling-stroke"/><path transform="translate(9.9,0) scale(2.925,6.000)" d="M0.5 0 Q0.1 0 0.1 0.3 L0.1 0.7 Q0.1 1 0.5 1 Q0.9 1 0.9 0.7 L0.9 0.3 Q0.9 0 0.5 0 Z" vector-effect="non-scaling-stroke"/></g>
<g fill="none" stroke="#ffffff" stroke-width="1.15" stroke-linejoin="round"><path transform="translate(469.3,743) scale(2.520,6.100)" d="M0.22 0.2 L0.55 0 L0.55 1" vector-effect="non-scaling-stroke"/><path transform="translate(472.1,743) scale(2.520,6.100)" d="M0.5 0 Q0.1 0 0.1 0.3 L0.1 0.7 Q0.1 1 0.5 1 Q0.9 1 0.9 0.7 L0.9 0.3 Q0.9 0 0.5 0 Z" vector-effect="non-scaling-stroke"/><path transform="translate(474.9,743) scale(2.520,6.100)" d="M0.5 0 Q0.1 0 0.1 0.3 L0.1 0.7 Q0.1 1 0.5 1 Q0.9 1 0.9 0.7 L0.9 0.3 Q0.9 0 0.5 0 Z" vector-effect="non-scaling-stroke"/><path transform="translate(480.5,743) scale(2.520,6.100)" d="M0.22 0.2 L0.55 0 L0.55 1" vector-effect="non-scaling-stroke"/><path transform="translate(483.3,743) scale(2.520,6.100)" d="M0.5 0 Q0.1 0 0.1 0.3 L0.1 0.7 Q0.1 1 0.5 1 Q0.9 1 0.9 0.7 L0.9 0.3 Q0.9 0 0.5 0 Z" vector-effect="non-scaling-stroke"/><path transform="translate(486.1,743) scale(2.520,6.100)" d="M0.5 0 Q0.1 0 0.1 0.3 L0.1 0.7 Q0.1 1 0.5 1 Q0.9 1 0.9 0.7 L0.9 0.3 Q0.9 0 0.5 0 Z" vector-effect="non-scaling-stroke"/><path transform="translate(491.7,743) scale(2.520,6.100)" d="M0.12 0.24 Q0.15 0 0.5 0 Q0.88 0 0.88 0.27 Q0.88 0.45 0.5 0.65 L0.1 1 L0.92 1" vector-effect="non-scaling-stroke"/><path transform="translate(494.5,743) scale(2.520,6.100)" d="M0.5 0 Q0.1 0 0.1 0.3 L0.1 0.7 Q0.1 1 0.5 1 Q0.9 1 0.9 0.7 L0.9 0.3 Q0.9 0 0.5 0 Z" vector-effect="non-scaling-stroke"/><path transform="translate(497.3,743) scale(2.520,6.100)" d="M0.5 0 Q0.1 0 0.1 0.3 L0.1 0.7 Q0.1 1 0.5 1 Q0.9 1 0.9 0.7 L0.9 0.3 Q0.9 0 0.5 0 Z" vector-effect="non-scaling-stroke"/></g>
<line x1="475" y1="750" x2="495" y2="750" stroke="#86f06e" stroke-width="1" shape-rendering="crispEdges"/>
<line x1="478" y1="738" x2="478" y2="753" stroke="#86f06e" stroke-width="1" shape-rendering="crispEdges"/>
<line x1="476" y1="752" x2="480" y2="748" stroke="#86f06e" stroke-width="1.2"/>
<line x1="480" y1="738" x2="480" y2="753" stroke="#86f06e" stroke-width="1" shape-rendering="crispEdges"/>
<line x1="478" y1="752" x2="482" y2="748" stroke="#86f06e" stroke-width="1.2"/>
<line x1="483" y1="738" x2="483" y2="753" stroke="#86f06e" stroke-width="1" shape-rendering="crispEdges"/>
<line x1="481" y1="752" x2="485" y2="748" stroke="#86f06e" stroke-width="1.2"/>
<line x1="492" y1="738" x2="492" y2="753" stroke="#86f06e" stroke-width="1" shape-rendering="crispEdges"/>
<line x1="490" y1="752" x2="494" y2="748" stroke="#86f06e" stroke-width="1.2"/>
<rect x="550" y="657.2" width="10" height="5.5" fill="#0000ff" shape-rendering="crispEdges"/>
<line x1="560" y1="657.7" x2="577.1" y2="657.7" stroke="#e8a200" stroke-width="1.1" shape-rendering="crispEdges"/>
<line x1="560" y1="662.3" x2="577.1" y2="662.3" stroke="#e8a200" stroke-width="1.1" shape-rendering="crispEdges"/>
<rect x="577.1" y="657.2" width="11.7" height="5.5" fill="#0000ff" shape-rendering="crispEdges"/>
<rect x="584.2" y="657.2" width="4.6" height="19.7" fill="#0000ff" shape-rendering="crispEdges"/>
<line x1="606.8" y1="655.7" x2="606.8" y2="678.5" stroke="#86f06e" stroke-width="1" shape-rendering="crispEdges"/>
<line x1="594" y1="657.7" x2="609.8" y2="657.7" stroke="#86f06e" stroke-width="1" shape-rendering="crispEdges"/>
<line x1="604.8" y1="659.7" x2="608.8" y2="655.7" stroke="#86f06e" stroke-width="1.2"/>
<line x1="594" y1="660.4" x2="609.8" y2="660.4" stroke="#86f06e" stroke-width="1" shape-rendering="crispEdges"/>
<line x1="604.8" y1="662.4" x2="608.8" y2="658.4" stroke="#86f06e" stroke-width="1.2"/>
<line x1="594" y1="676.5" x2="609.8" y2="676.5" stroke="#86f06e" stroke-width="1" shape-rendering="crispEdges"/>
<line x1="604.8" y1="678.5" x2="608.8" y2="674.5" stroke="#86f06e" stroke-width="1.2"/>
<g fill="none" stroke="#ffffff" stroke-width="1.3" stroke-linejoin="round"><path transform="translate(530.3,643) scale(3.696,8.500)" d="M0.9 0.2 Q0.8 0 0.5 0 Q0.1 0 0.1 0.5 Q0.1 1 0.5 1 Q0.9 1 0.9 0.62 L0.9 0.52 L0.55 0.52" vector-effect="non-scaling-stroke"/><path transform="translate(534.5,643) scale(3.696,8.500)" d="M0.1 0 L0.1 1 L0.6 1 Q0.92 1 0.92 0.73 Q0.92 0.47 0.6 0.47 L0.1 0.47 M0.6 0.47 Q0.86 0.47 0.86 0.23 Q0.86 0 0.6 0 L0.1 0" vector-effect="non-scaling-stroke"/><path transform="translate(538.7,643) scale(3.696,8.500)" d="M0.1 0 L0.9 0 L0.1 1 L0.9 1" vector-effect="non-scaling-stroke"/><path transform="translate(542.9,643) scale(3.696,8.500)" d="M0.22 0.2 L0.55 0 L0.55 1" vector-effect="non-scaling-stroke"/></g>
<line x1="530" y1="653" x2="546.8" y2="653" stroke="#ffffff" stroke-width="1" shape-rendering="crispEdges"/>
<line x1="546.8" y1="653" x2="550" y2="657" stroke="#ffffff" stroke-width="0.9"/>
<g fill="none" stroke="#ffffff" stroke-width="1.3" stroke-linejoin="round"><path transform="translate(553.3,643) scale(3.731,8.500)" d="M0.9 0.2 Q0.8 0 0.5 0 Q0.1 0 0.1 0.5 Q0.1 1 0.5 1 Q0.9 1 0.9 0.62 L0.9 0.52 L0.55 0.52" vector-effect="non-scaling-stroke"/><path transform="translate(557.5,643) scale(3.731,8.500)" d="M0.1 0 L0.1 1 L0.6 1 Q0.92 1 0.92 0.73 Q0.92 0.47 0.6 0.47 L0.1 0.47 M0.6 0.47 Q0.86 0.47 0.86 0.23 Q0.86 0 0.6 0 L0.1 0" vector-effect="non-scaling-stroke"/><path transform="translate(561.7,643) scale(3.731,8.500)" d="M0.1 0 L0.9 0 L0.1 1 L0.9 1" vector-effect="non-scaling-stroke"/><path transform="translate(566,643) scale(3.731,8.500)" d="M0.22 0.2 L0.55 0 L0.55 1" vector-effect="non-scaling-stroke"/><path transform="translate(570.2,643) scale(3.731,8.500)" d="M0.12 0.15 Q0.25 0 0.5 0 Q0.88 0 0.88 0.25 Q0.88 0.47 0.45 0.47 Q0.9 0.47 0.9 0.74 Q0.9 1 0.5 1 Q0.2 1 0.1 0.85" vector-effect="non-scaling-stroke"/></g>
<line x1="553" y1="653" x2="574.2" y2="653" stroke="#ffffff" stroke-width="1" shape-rendering="crispEdges"/>
<line x1="574.2" y1="653" x2="577" y2="657" stroke="#ffffff" stroke-width="0.9"/>
<g fill="none" stroke="#ffffff" stroke-width="1.15" stroke-linejoin="round" transform="translate(600,658) rotate(-90)"><path transform="translate(0.1,0) scale(2.400,6.000)" d="M0.22 0.2 L0.55 0 L0.55 1" vector-effect="non-scaling-stroke"/><path transform="translate(2.8,0) scale(2.400,6.000)" d="M0.5 0 Q0.1 0 0.1 0.3 L0.1 0.7 Q0.1 1 0.5 1 Q0.9 1 0.9 0.7 L0.9 0.3 Q0.9 0 0.5 0 Z" vector-effect="non-scaling-stroke"/><path transform="translate(5.5,0) scale(2.400,6.000)" d="M0.5 0 Q0.1 0 0.1 0.3 L0.1 0.7 Q0.1 1 0.5 1 Q0.9 1 0.9 0.7 L0.9 0.3 Q0.9 0 0.5 0 Z" vector-effect="non-scaling-stroke"/></g>
<g fill="none" stroke="#ffffff" stroke-width="1.15" stroke-linejoin="round" transform="translate(600,673) rotate(-90)"><path transform="translate(0.2,0) scale(2.700,6.000)" d="M0.1 0 L0.9 0 L0.4 1" vector-effect="non-scaling-stroke"/><path transform="translate(3.1,0) scale(2.700,6.000)" d="M0.5 0 Q0.1 0 0.1 0.3 L0.1 0.7 Q0.1 1 0.5 1 Q0.9 1 0.9 0.7 L0.9 0.3 Q0.9 0 0.5 0 Z" vector-effect="non-scaling-stroke"/><path transform="translate(6.2,0) scale(2.700,6.000)" d="M0.5 0 Q0.1 0 0.1 0.3 L0.1 0.7 Q0.1 1 0.5 1 Q0.9 1 0.9 0.7 L0.9 0.3 Q0.9 0 0.5 0 Z" vector-effect="non-scaling-stroke"/></g>
<g fill="none" stroke="#ffffff" stroke-width="1.15" stroke-linejoin="round"><path transform="translate(561.6,686.6) scale(2.768,5.600)" d="M0.22 0.2 L0.55 0 L0.55 1" vector-effect="non-scaling-stroke"/><path transform="translate(564.6,686.6) scale(2.768,5.600)" d="M0.85 0.12 Q0.7 0 0.5 0 Q0.1 0 0.1 0.6 Q0.1 1 0.5 1 Q0.9 1 0.9 0.68 Q0.9 0.38 0.5 0.38 Q0.1 0.38 0.1 0.65" vector-effect="non-scaling-stroke"/><path transform="translate(567.7,686.6) scale(2.768,5.600)" d="M0.5 0 Q0.1 0 0.1 0.3 L0.1 0.7 Q0.1 1 0.5 1 Q0.9 1 0.9 0.7 L0.9 0.3 Q0.9 0 0.5 0 Z" vector-effect="non-scaling-stroke"/><path transform="translate(570.8,686.6) scale(2.768,5.600)" d="M0.5 0 Q0.1 0 0.1 0.3 L0.1 0.7 Q0.1 1 0.5 1 Q0.9 1 0.9 0.7 L0.9 0.3 Q0.9 0 0.5 0 Z" vector-effect="non-scaling-stroke"/></g>
<g fill="none" stroke="#ffffff" stroke-width="1.15" stroke-linejoin="round"><path transform="translate(588.5,686.6) scale(2.520,5.600)" d="M0.22 0.2 L0.55 0 L0.55 1" vector-effect="non-scaling-stroke"/><path transform="translate(591.3,686.6) scale(2.520,5.600)" d="M0.5 0 Q0.1 0 0.1 0.3 L0.1 0.7 Q0.1 1 0.5 1 Q0.9 1 0.9 0.7 L0.9 0.3 Q0.9 0 0.5 0 Z" vector-effect="non-scaling-stroke"/><path transform="translate(594.1,686.6) scale(2.520,5.600)" d="M0.5 0 Q0.1 0 0.1 0.3 L0.1 0.7 Q0.1 1 0.5 1 Q0.9 1 0.9 0.7 L0.9 0.3 Q0.9 0 0.5 0 Z" vector-effect="non-scaling-stroke"/></g>
<line x1="547.2" y1="694.1" x2="591.8" y2="694.1" stroke="#86f06e" stroke-width="1" shape-rendering="crispEdges"/>
<line x1="550.2" y1="682" x2="550.2" y2="697.1" stroke="#86f06e" stroke-width="1" shape-rendering="crispEdges"/>
<line x1="548.2" y1="696.1" x2="552.2" y2="692.1" stroke="#86f06e" stroke-width="1.2"/>
<line x1="584.2" y1="682" x2="584.2" y2="697.1" stroke="#86f06e" stroke-width="1" shape-rendering="crispEdges"/>
<line x1="582.2" y1="696.1" x2="586.2" y2="692.1" stroke="#86f06e" stroke-width="1.2"/>
<line x1="588.8" y1="682" x2="588.8" y2="697.1" stroke="#86f06e" stroke-width="1" shape-rendering="crispEdges"/>
<line x1="586.8" y1="696.1" x2="590.8" y2="692.1" stroke="#86f06e" stroke-width="1.2"/>
<rect x="206" y="727" width="5" height="9.5" fill="#0000ff" shape-rendering="crispEdges"/>
<line x1="206.5" y1="736.5" x2="206.5" y2="781.2" stroke="#e8a200" stroke-width="1.1" shape-rendering="crispEdges"/>
<line x1="210.5" y1="736.5" x2="210.5" y2="781.2" stroke="#e8a200" stroke-width="1.1" shape-rendering="crispEdges"/>
<rect x="206" y="781.2" width="5" height="9.1" fill="#0000ff" shape-rendering="crispEdges"/>
<line x1="215.6" y1="725" x2="215.6" y2="792" stroke="#86f06e" stroke-width="1" shape-rendering="crispEdges"/>
<line x1="212" y1="727" x2="218.6" y2="727" stroke="#86f06e" stroke-width="1" shape-rendering="crispEdges"/>
<line x1="213.6" y1="729" x2="217.6" y2="725" stroke="#86f06e" stroke-width="1.2"/>
<line x1="212" y1="790" x2="218.6" y2="790" stroke="#86f06e" stroke-width="1" shape-rendering="crispEdges"/>
<line x1="213.6" y1="792" x2="217.6" y2="788" stroke="#86f06e" stroke-width="1.2"/>
<g fill="none" stroke="#ffffff" stroke-width="1.3" stroke-linejoin="round"><path transform="translate(186.3,712.8) scale(3.696,7.200)" d="M0.9 0.2 Q0.8 0 0.5 0 Q0.1 0 0.1 0.5 Q0.1 1 0.5 1 Q0.9 1 0.9 0.62 L0.9 0.52 L0.55 0.52" vector-effect="non-scaling-stroke"/><path transform="translate(190.5,712.8) scale(3.696,7.200)" d="M0.1 0 L0.1 1 L0.6 1 Q0.92 1 0.92 0.73 Q0.92 0.47 0.6 0.47 L0.1 0.47 M0.6 0.47 Q0.86 0.47 0.86 0.23 Q0.86 0 0.6 0 L0.1 0" vector-effect="non-scaling-stroke"/><path transform="translate(194.7,712.8) scale(3.696,7.200)" d="M0.1 0 L0.9 0 L0.1 1 L0.9 1" vector-effect="non-scaling-stroke"/><path transform="translate(198.9,712.8) scale(3.696,7.200)" d="M0.22 0.2 L0.55 0 L0.55 1" vector-effect="non-scaling-stroke"/></g>
<line x1="186" y1="721.5" x2="202.8" y2="721.5" stroke="#ffffff" stroke-width="1" shape-rendering="crispEdges"/>
<line x1="202.8" y1="721.5" x2="206" y2="727" stroke="#ffffff" stroke-width="0.9"/>
<g fill="none" stroke="#ffffff" stroke-width="1.3" stroke-linejoin="round"><path transform="translate(186.3,766.6) scale(3.696,7.400)" d="M0.9 0.2 Q0.8 0 0.5 0 Q0.1 0 0.1 0.5 Q0.1 1 0.5 1 Q0.9 1 0.9 0.62 L0.9 0.52 L0.55 0.52" vector-effect="non-scaling-stroke"/><path transform="translate(190.5,766.6) scale(3.696,7.400)" d="M0.1 0 L0.1 1 L0.6 1 Q0.92 1 0.92 0.73 Q0.92 0.47 0.6 0.47 L0.1 0.47 M0.6 0.47 Q0.86 0.47 0.86 0.23 Q0.86 0 0.6 0 L0.1 0" vector-effect="non-scaling-stroke"/><path transform="translate(194.7,766.6) scale(3.696,7.400)" d="M0.1 0 L0.9 0 L0.1 1 L0.9 1" vector-effect="non-scaling-stroke"/><path transform="translate(198.9,766.6) scale(3.696,7.400)" d="M0.22 0.2 L0.55 0 L0.55 1" vector-effect="non-scaling-stroke"/></g>
<line x1="186" y1="775.5" x2="202.8" y2="775.5" stroke="#ffffff" stroke-width="1" shape-rendering="crispEdges"/>
<line x1="202.8" y1="775.5" x2="206" y2="781" stroke="#ffffff" stroke-width="0.9"/>
<g fill="none" stroke="#ffffff" stroke-width="1.15" stroke-linejoin="round" transform="translate(209,765) rotate(-90)"><path transform="translate(0.2,0) scale(2.925,6.000)" d="M0.12 0.24 Q0.15 0 0.5 0 Q0.88 0 0.88 0.27 Q0.88 0.45 0.5 0.65 L0.1 1 L0.92 1" vector-effect="non-scaling-stroke"/><path transform="translate(3.4,0) scale(2.925,6.000)" d="M0.22 0.2 L0.55 0 L0.55 1" vector-effect="non-scaling-stroke"/><path transform="translate(6.7,0) scale(2.925,6.000)" d="M0.5 0 Q0.1 0 0.1 0.3 L0.1 0.7 Q0.1 1 0.5 1 Q0.9 1 0.9 0.7 L0.9 0.3 Q0.9 0 0.5 0 Z" vector-effect="non-scaling-stroke"/><path transform="translate(9.9,0) scale(2.925,6.000)" d="M0.5 0 Q0.1 0 0.1 0.3 L0.1 0.7 Q0.1 1 0.5 1 Q0.9 1 0.9 0.7 L0.9 0.3 Q0.9 0 0.5 0 Z" vector-effect="non-scaling-stroke"/></g>
<g fill="none" stroke="#ffffff" stroke-width="1.15" stroke-linejoin="round" transform="translate(209,800) rotate(-90)"><path transform="translate(0.1,0) scale(2.400,6.000)" d="M0.22 0.2 L0.55 0 L0.55 1" vector-effect="non-scaling-stroke"/><path transform="translate(2.8,0) scale(2.400,6.000)" d="M0.5 0 Q0.1 0 0.1 0.3 L0.1 0.7 Q0.1 1 0.5 1 Q0.9 1 0.9 0.7 L0.9 0.3 Q0.9 0 0.5 0 Z" vector-effect="non-scaling-stroke"/><path transform="translate(5.5,0) scale(2.400,6.000)" d="M0.5 0 Q0.1 0 0.1 0.3 L0.1 0.7 Q0.1 1 0.5 1 Q0.9 1 0.9 0.7 L0.9 0.3 Q0.9 0 0.5 0 Z" vector-effect="non-scaling-stroke"/></g>
<g fill="none" stroke="#ffffff" stroke-width="1.15" stroke-linejoin="round"><path transform="translate(197.6,802) scale(2.764,5.600)" d="M0.22 0.2 L0.55 0 L0.55 1" vector-effect="non-scaling-stroke"/><path transform="translate(200.6,802) scale(2.764,5.600)" d="M0.5 0 Q0.1 0 0.1 0.3 L0.1 0.7 Q0.1 1 0.5 1 Q0.9 1 0.9 0.7 L0.9 0.3 Q0.9 0 0.5 0 Z" vector-effect="non-scaling-stroke"/><path transform="translate(203.7,802) scale(2.764,5.600)" d="M0.5 0 Q0.1 0 0.1 0.3 L0.1 0.7 Q0.1 1 0.5 1 Q0.9 1 0.9 0.7 L0.9 0.3 Q0.9 0 0.5 0 Z" vector-effect="non-scaling-stroke"/><path transform="translate(209.8,802) scale(2.764,5.600)" d="M0.22 0.2 L0.55 0 L0.55 1" vector-effect="non-scaling-stroke"/><path transform="translate(212.9,802) scale(2.764,5.600)" d="M0.5 0 Q0.1 0 0.1 0.3 L0.1 0.7 Q0.1 1 0.5 1 Q0.9 1 0.9 0.7 L0.9 0.3 Q0.9 0 0.5 0 Z" vector-effect="non-scaling-stroke"/><path transform="translate(216,802) scale(2.764,5.600)" d="M0.5 0 Q0.1 0 0.1 0.3 L0.1 0.7 Q0.1 1 0.5 1 Q0.9 1 0.9 0.7 L0.9 0.3 Q0.9 0 0.5 0 Z" vector-effect="non-scaling-stroke"/></g>
<line x1="203" y1="809" x2="214" y2="809" stroke="#86f06e" stroke-width="1" shape-rendering="crispEdges"/>
<line x1="206" y1="797" x2="206" y2="812" stroke="#86f06e" stroke-width="1" shape-rendering="crispEdges"/>
<line x1="204" y1="811" x2="208" y2="807" stroke="#86f06e" stroke-width="1.2"/>
<line x1="209" y1="797" x2="209" y2="812" stroke="#86f06e" stroke-width="1" shape-rendering="crispEdges"/>
<line x1="207" y1="811" x2="211" y2="807" stroke="#86f06e" stroke-width="1.2"/>
<line x1="211" y1="797" x2="211" y2="812" stroke="#86f06e" stroke-width="1" shape-rendering="crispEdges"/>
<line x1="209" y1="811" x2="213" y2="807" stroke="#86f06e" stroke-width="1.2"/>
<rect x="239.3" y="786.1" width="12.8" height="4.8" fill="#0000ff" shape-rendering="crispEdges"/>
<rect x="239.3" y="786.1" width="5.5" height="11.5" fill="#0000ff" shape-rendering="crispEdges"/>
<line x1="239.9" y1="797.6" x2="239.9" y2="848.7" stroke="#e8a200" stroke-width="1.1" shape-rendering="crispEdges"/>
<line x1="244" y1="797.6" x2="244" y2="848.7" stroke="#e8a200" stroke-width="1.1" shape-rendering="crispEdges"/>
<rect x="239.3" y="848.7" width="5.5" height="11.9" fill="#0000ff" shape-rendering="crispEdges"/>
<rect x="239.3" y="856" width="23.4" height="4.6" fill="#0000ff" shape-rendering="crispEdges"/>
<line x1="276.7" y1="785.6" x2="276.7" y2="861.1" stroke="#86f06e" stroke-width="1" shape-rendering="crispEdges"/>
<line x1="264" y1="787.6" x2="279.7" y2="787.6" stroke="#86f06e" stroke-width="1" shape-rendering="crispEdges"/>
<line x1="274.7" y1="789.6" x2="278.7" y2="785.6" stroke="#86f06e" stroke-width="1.2"/>
<line x1="264" y1="833.2" x2="279.7" y2="833.2" stroke="#86f06e" stroke-width="1" shape-rendering="crispEdges"/>
<line x1="274.7" y1="835.2" x2="278.7" y2="831.2" stroke="#86f06e" stroke-width="1.2"/>
<line x1="264" y1="859.1" x2="279.7" y2="859.1" stroke="#86f06e" stroke-width="1" shape-rendering="crispEdges"/>
<line x1="274.7" y1="861.1" x2="278.7" y2="857.1" stroke="#86f06e" stroke-width="1.2"/>
<g fill="none" stroke="#ffffff" stroke-width="1.3" stroke-linejoin="round"><path transform="translate(218.1,771) scale(3.942,8.400)" d="M0.9 0.2 Q0.8 0 0.5 0 Q0.1 0 0.1 0.5 Q0.1 1 0.5 1 Q0.9 1 0.9 0.62 L0.9 0.52 L0.55 0.52" vector-effect="non-scaling-stroke"/><path transform="translate(222.5,771) scale(3.942,8.400)" d="M0.1 0 L0.1 1 L0.6 1 Q0.92 1 0.92 0.73 Q0.92 0.47 0.6 0.47 L0.1 0.47 M0.6 0.47 Q0.86 0.47 0.86 0.23 Q0.86 0 0.6 0 L0.1 0" vector-effect="non-scaling-stroke"/><path transform="translate(227,771) scale(3.942,8.400)" d="M0.1 0 L0.9 0 L0.1 1 L0.9 1" vector-effect="non-scaling-stroke"/><path transform="translate(231.5,771) scale(3.942,8.400)" d="M0.1 0 L0.9 0 L0.4 1" vector-effect="non-scaling-stroke"/><path transform="translate(236,771) scale(3.942,8.400)" d="M0.85 0.38 L0.85 1 M0.85 0.55 Q0.7 0.36 0.5 0.36 Q0.15 0.36 0.15 0.68 Q0.15 1 0.5 1 Q0.7 1 0.85 0.85" vector-effect="non-scaling-stroke"/></g>
<line x1="217.8" y1="780.9" x2="240.2" y2="780.9" stroke="#ffffff" stroke-width="1" shape-rendering="crispEdges"/>
<line x1="240.2" y1="780.9" x2="239" y2="786" stroke="#ffffff" stroke-width="0.9"/>
<g fill="none" stroke="#ffffff" stroke-width="1.3" stroke-linejoin="round"><path transform="translate(215,834) scale(3.942,8.300)" d="M0.9 0.2 Q0.8 0 0.5 0 Q0.1 0 0.1 0.5 Q0.1 1 0.5 1 Q0.9 1 0.9 0.62 L0.9 0.52 L0.55 0.52" vector-effect="non-scaling-stroke"/><path transform="translate(219.4,834) scale(3.942,8.300)" d="M0.1 0 L0.1 1 L0.6 1 Q0.92 1 0.92 0.73 Q0.92 0.47 0.6 0.47 L0.1 0.47 M0.6 0.47 Q0.86 0.47 0.86 0.23 Q0.86 0 0.6 0 L0.1 0" vector-effect="non-scaling-stroke"/><path transform="translate(223.9,834) scale(3.942,8.300)" d="M0.1 0 L0.9 0 L0.1 1 L0.9 1" vector-effect="non-scaling-stroke"/><path transform="translate(228.4,834) scale(3.942,8.300)" d="M0.22 0.2 L0.55 0 L0.55 1" vector-effect="non-scaling-stroke"/><path transform="translate(232.9,834) scale(3.942,8.300)" d="M0.9 0.35 Q0.9 0.62 0.5 0.62 Q0.1 0.62 0.1 0.31 Q0.1 0 0.5 0 Q0.9 0 0.9 0.4 Q0.9 1 0.5 1 Q0.25 1 0.15 0.88" vector-effect="non-scaling-stroke"/></g>
<line x1="214.7" y1="843.8" x2="237.1" y2="843.8" stroke="#ffffff" stroke-width="1" shape-rendering="crispEdges"/>
<line x1="237.1" y1="843.8" x2="239" y2="849" stroke="#ffffff" stroke-width="0.9"/>
<g fill="none" stroke="#ffffff" stroke-width="1.15" stroke-linejoin="round" transform="translate(270,786) rotate(-90)"><path transform="translate(0.1,0) scale(2.400,6.000)" d="M0.22 0.2 L0.55 0 L0.55 1" vector-effect="non-scaling-stroke"/><path transform="translate(2.8,0) scale(2.400,6.000)" d="M0.5 0 Q0.1 0 0.1 0.3 L0.1 0.7 Q0.1 1 0.5 1 Q0.9 1 0.9 0.7 L0.9 0.3 Q0.9 0 0.5 0 Z" vector-effect="non-scaling-stroke"/><path transform="translate(5.5,0) scale(2.400,6.000)" d="M0.5 0 Q0.1 0 0.1 0.3 L0.1 0.7 Q0.1 1 0.5 1 Q0.9 1 0.9 0.7 L0.9 0.3 Q0.9 0 0.5 0 Z" vector-effect="non-scaling-stroke"/></g>
<g fill="none" stroke="#ffffff" stroke-width="1.15" stroke-linejoin="round" transform="translate(270,818) rotate(-90)"><path transform="translate(0.2,0) scale(2.925,6.000)" d="M0.12 0.24 Q0.15 0 0.5 0 Q0.88 0 0.88 0.27 Q0.88 0.45 0.5 0.65 L0.1 1 L0.92 1" vector-effect="non-scaling-stroke"/><path transform="translate(3.4,0) scale(2.925,6.000)" d="M0.12 0.15 Q0.25 0 0.5 0 Q0.88 0 0.88 0.25 Q0.88 0.47 0.45 0.47 Q0.9 0.47 0.9 0.74 Q0.9 1 0.5 1 Q0.2 1 0.1 0.85" vector-effect="non-scaling-stroke"/><path transform="translate(6.7,0) scale(2.925,6.000)" d="M0.5 0 Q0.1 0 0.1 0.3 L0.1 0.7 Q0.1 1 0.5 1 Q0.9 1 0.9 0.7 L0.9 0.3 Q0.9 0 0.5 0 Z" vector-effect="non-scaling-stroke"/><path transform="translate(9.9,0) scale(2.925,6.000)" d="M0.5 0 Q0.1 0 0.1 0.3 L0.1 0.7 Q0.1 1 0.5 1 Q0.9 1 0.9 0.7 L0.9 0.3 Q0.9 0 0.5 0 Z" vector-effect="non-scaling-stroke"/></g>
<g fill="none" stroke="#ffffff" stroke-width="1.15" stroke-linejoin="round" transform="translate(270,851) rotate(-90)"><path transform="translate(0.2,0) scale(2.925,6.000)" d="M0.22 0.2 L0.55 0 L0.55 1" vector-effect="non-scaling-stroke"/><path transform="translate(3.4,0) scale(2.925,6.000)" d="M0.22 0.2 L0.55 0 L0.55 1" vector-effect="non-scaling-stroke"/><path transform="translate(6.7,0) scale(2.925,6.000)" d="M0.5 0 Q0.1 0 0.1 0.3 L0.1 0.7 Q0.1 1 0.5 1 Q0.9 1 0.9 0.7 L0.9 0.3 Q0.9 0 0.5 0 Z" vector-effect="non-scaling-stroke"/><path transform="translate(9.9,0) scale(2.925,6.000)" d="M0.5 0 Q0.1 0 0.1 0.3 L0.1 0.7 Q0.1 1 0.5 1 Q0.9 1 0.9 0.7 L0.9 0.3 Q0.9 0 0.5 0 Z" vector-effect="non-scaling-stroke"/></g>
<g fill="none" stroke="#ffffff" stroke-width="1.15" stroke-linejoin="round" transform="translate(270,870) rotate(-90)"><path transform="translate(0.1,0) scale(2.400,6.000)" d="M0.22 0.2 L0.55 0 L0.55 1" vector-effect="non-scaling-stroke"/><path transform="translate(2.8,0) scale(2.400,6.000)" d="M0.5 0 Q0.1 0 0.1 0.3 L0.1 0.7 Q0.1 1 0.5 1 Q0.9 1 0.9 0.7 L0.9 0.3 Q0.9 0 0.5 0 Z" vector-effect="non-scaling-stroke"/><path transform="translate(5.5,0) scale(2.400,6.000)" d="M0.5 0 Q0.1 0 0.1 0.3 L0.1 0.7 Q0.1 1 0.5 1 Q0.9 1 0.9 0.7 L0.9 0.3 Q0.9 0 0.5 0 Z" vector-effect="non-scaling-stroke"/></g>
<g fill="none" stroke="#ffffff" stroke-width="1.15" stroke-linejoin="round"><path transform="translate(230.3,761) scale(2.584,6.500)" d="M0.22 0.2 L0.55 0 L0.55 1" vector-effect="non-scaling-stroke"/><path transform="translate(233.2,761) scale(2.584,6.500)" d="M0.5 0 Q0.1 0 0.1 0.3 L0.1 0.7 Q0.1 1 0.5 1 Q0.9 1 0.9 0.7 L0.9 0.3 Q0.9 0 0.5 0 Z" vector-effect="non-scaling-stroke"/><path transform="translate(236.1,761) scale(2.584,6.500)" d="M0.5 0 Q0.1 0 0.1 0.3 L0.1 0.7 Q0.1 1 0.5 1 Q0.9 1 0.9 0.7 L0.9 0.3 Q0.9 0 0.5 0 Z" vector-effect="non-scaling-stroke"/><path transform="translate(241.8,761) scale(2.584,6.500)" d="M0.7 1 L0.7 0 L0.06 0.7 L0.95 0.7" vector-effect="non-scaling-stroke"/><path transform="translate(244.7,761) scale(2.584,6.500)" d="M0.5 0 Q0.1 0 0.1 0.3 L0.1 0.7 Q0.1 1 0.5 1 Q0.9 1 0.9 0.7 L0.9 0.3 Q0.9 0 0.5 0 Z" vector-effect="non-scaling-stroke"/><path transform="translate(247.6,761) scale(2.584,6.500)" d="M0.5 0 Q0.1 0 0.1 0.3 L0.1 0.7 Q0.1 1 0.5 1 Q0.9 1 0.9 0.7 L0.9 0.3 Q0.9 0 0.5 0 Z" vector-effect="non-scaling-stroke"/></g>
<line x1="236" y1="768.4" x2="255" y2="768.4" stroke="#86f06e" stroke-width="1" shape-rendering="crispEdges"/>
<line x1="239" y1="780" x2="239" y2="765.4" stroke="#86f06e" stroke-width="1" shape-rendering="crispEdges"/>
<line x1="237" y1="770.4" x2="241" y2="766.4" stroke="#86f06e" stroke-width="1.2"/>
<line x1="243" y1="780" x2="243" y2="765.4" stroke="#86f06e" stroke-width="1" shape-rendering="crispEdges"/>
<line x1="241" y1="770.4" x2="245" y2="766.4" stroke="#86f06e" stroke-width="1.2"/>
<line x1="252" y1="780" x2="252" y2="765.4" stroke="#86f06e" stroke-width="1" shape-rendering="crispEdges"/>
<line x1="250" y1="770.4" x2="254" y2="766.4" stroke="#86f06e" stroke-width="1.2"/>
<g fill="none" stroke="#ffffff" stroke-width="1.15" stroke-linejoin="round"><path transform="translate(230.8,871) scale(3.240,6.300)" d="M0.22 0.2 L0.55 0 L0.55 1" vector-effect="non-scaling-stroke"/><path transform="translate(234.4,871) scale(3.240,6.300)" d="M0.5 0 Q0.1 0 0.1 0.3 L0.1 0.7 Q0.1 1 0.5 1 Q0.9 1 0.9 0.7 L0.9 0.3 Q0.9 0 0.5 0 Z" vector-effect="non-scaling-stroke"/><path transform="translate(238,871) scale(3.240,6.300)" d="M0.5 0 Q0.1 0 0.1 0.3 L0.1 0.7 Q0.1 1 0.5 1 Q0.9 1 0.9 0.7 L0.9 0.3 Q0.9 0 0.5 0 Z" vector-effect="non-scaling-stroke"/><path transform="translate(245.2,871) scale(3.240,6.300)" d="M0.9 0.35 Q0.9 0.62 0.5 0.62 Q0.1 0.62 0.1 0.31 Q0.1 0 0.5 0 Q0.9 0 0.9 0.4 Q0.9 1 0.5 1 Q0.25 1 0.15 0.88" vector-effect="non-scaling-stroke"/><path transform="translate(248.8,871) scale(3.240,6.300)" d="M0.5 0 Q0.1 0 0.1 0.3 L0.1 0.7 Q0.1 1 0.5 1 Q0.9 1 0.9 0.7 L0.9 0.3 Q0.9 0 0.5 0 Z" vector-effect="non-scaling-stroke"/><path transform="translate(252.4,871) scale(3.240,6.300)" d="M0.5 0 Q0.1 0 0.1 0.3 L0.1 0.7 Q0.1 1 0.5 1 Q0.9 1 0.9 0.7 L0.9 0.3 Q0.9 0 0.5 0 Z" vector-effect="non-scaling-stroke"/></g>
<line x1="236" y1="878.4" x2="266" y2="878.4" stroke="#86f06e" stroke-width="1" shape-rendering="crispEdges"/>
<line x1="239" y1="866" x2="239" y2="881.4" stroke="#86f06e" stroke-width="1" shape-rendering="crispEdges"/>
<line x1="237" y1="880.4" x2="241" y2="876.4" stroke="#86f06e" stroke-width="1.2"/>
<line x1="244" y1="866" x2="244" y2="881.4" stroke="#86f06e" stroke-width="1" shape-rendering="crispEdges"/>
<line x1="242" y1="880.4" x2="246" y2="876.4" stroke="#86f06e" stroke-width="1.2"/>
<line x1="263" y1="866" x2="263" y2="881.4" stroke="#86f06e" stroke-width="1" shape-rendering="crispEdges"/>
<line x1="261" y1="880.4" x2="265" y2="876.4" stroke="#86f06e" stroke-width="1.2"/>
<rect x="311" y="815" width="5.9" height="10" fill="#0000ff" shape-rendering="crispEdges"/>
<line x1="311.6" y1="825" x2="311.6" y2="831" stroke="#e8a200" stroke-width="1.1" shape-rendering="crispEdges"/>
<line x1="316.3" y1="825" x2="316.3" y2="831" stroke="#e8a200" stroke-width="1.1" shape-rendering="crispEdges"/>
<rect x="311" y="831" width="15" height="5" fill="#0000ff" shape-rendering="crispEdges"/>
<line x1="311.6" y1="836" x2="311.6" y2="851" stroke="#e8a200" stroke-width="1.1" shape-rendering="crispEdges"/>
<line x1="316.3" y1="836" x2="316.3" y2="851" stroke="#e8a200" stroke-width="1.1" shape-rendering="crispEdges"/>
<rect x="311" y="851" width="5.9" height="9.6" fill="#0000ff" shape-rendering="crispEdges"/>
<line x1="343.3" y1="813" x2="343.3" y2="861.5" stroke="#86f06e" stroke-width="1" shape-rendering="crispEdges"/>
<line x1="330" y1="815" x2="346.3" y2="815" stroke="#86f06e" stroke-width="1" shape-rendering="crispEdges"/>
<line x1="341.3" y1="817" x2="345.3" y2="813" stroke="#86f06e" stroke-width="1.2"/>
<line x1="330" y1="833.5" x2="346.3" y2="833.5" stroke="#86f06e" stroke-width="1" shape-rendering="crispEdges"/>
<line x1="341.3" y1="835.5" x2="345.3" y2="831.5" stroke="#86f06e" stroke-width="1.2"/>
<line x1="330" y1="859.5" x2="346.3" y2="859.5" stroke="#86f06e" stroke-width="1" shape-rendering="crispEdges"/>
<line x1="341.3" y1="861.5" x2="345.3" y2="857.5" stroke="#86f06e" stroke-width="1.2"/>
<g fill="none" stroke="#ffffff" stroke-width="1.3" stroke-linejoin="round"><path transform="translate(292.2,800) scale(3.696,8.600)" d="M0.9 0.2 Q0.8 0 0.5 0 Q0.1 0 0.1 0.5 Q0.1 1 0.5 1 Q0.9 1 0.9 0.62 L0.9 0.52 L0.55 0.52" vector-effect="non-scaling-stroke"/><path transform="translate(296.4,800) scale(3.696,8.600)" d="M0.1 0 L0.1 1 L0.6 1 Q0.92 1 0.92 0.73 Q0.92 0.47 0.6 0.47 L0.1 0.47 M0.6 0.47 Q0.86 0.47 0.86 0.23 Q0.86 0 0.6 0 L0.1 0" vector-effect="non-scaling-stroke"/><path transform="translate(300.6,800) scale(3.696,8.600)" d="M0.1 0 L0.9 0 L0.1 1 L0.9 1" vector-effect="non-scaling-stroke"/><path transform="translate(304.8,800) scale(3.696,8.600)" d="M0.22 0.2 L0.55 0 L0.55 1" vector-effect="non-scaling-stroke"/></g>
<line x1="291.9" y1="810.1" x2="308.7" y2="810.1" stroke="#ffffff" stroke-width="1" shape-rendering="crispEdges"/>
<line x1="308.7" y1="810.1" x2="311" y2="815" stroke="#ffffff" stroke-width="0.9"/>
<g fill="none" stroke="#ffffff" stroke-width="1.3" stroke-linejoin="round"><path transform="translate(291.3,815.9) scale(3.960,9.100)" d="M0.9 0.2 Q0.8 0 0.5 0 Q0.1 0 0.1 0.5 Q0.1 1 0.5 1 Q0.9 1 0.9 0.62 L0.9 0.52 L0.55 0.52" vector-effect="non-scaling-stroke"/><path transform="translate(295.8,815.9) scale(3.960,9.100)" d="M0.1 0 L0.1 1 L0.6 1 Q0.92 1 0.92 0.73 Q0.92 0.47 0.6 0.47 L0.1 0.47 M0.6 0.47 Q0.86 0.47 0.86 0.23 Q0.86 0 0.6 0 L0.1 0" vector-effect="non-scaling-stroke"/><path transform="translate(300.3,815.9) scale(3.960,9.100)" d="M0.1 0 L0.9 0 L0.1 1 L0.9 1" vector-effect="non-scaling-stroke"/><path transform="translate(304.8,815.9) scale(3.960,9.100)" d="M0.7 1 L0.7 0 L0.06 0.7 L0.95 0.7" vector-effect="non-scaling-stroke"/></g>
<line x1="291" y1="826.5" x2="309" y2="826.5" stroke="#ffffff" stroke-width="1" shape-rendering="crispEdges"/>
<line x1="309" y1="826.5" x2="311" y2="831" stroke="#ffffff" stroke-width="0.9"/>
<g fill="none" stroke="#ffffff" stroke-width="1.3" stroke-linejoin="round"><path transform="translate(292.2,836) scale(3.696,9.000)" d="M0.9 0.2 Q0.8 0 0.5 0 Q0.1 0 0.1 0.5 Q0.1 1 0.5 1 Q0.9 1 0.9 0.62 L0.9 0.52 L0.55 0.52" vector-effect="non-scaling-stroke"/><path transform="translate(296.4,836) scale(3.696,9.000)" d="M0.1 0 L0.1 1 L0.6 1 Q0.92 1 0.92 0.73 Q0.92 0.47 0.6 0.47 L0.1 0.47 M0.6 0.47 Q0.86 0.47 0.86 0.23 Q0.86 0 0.6 0 L0.1 0" vector-effect="non-scaling-stroke"/><path transform="translate(300.6,836) scale(3.696,9.000)" d="M0.1 0 L0.9 0 L0.1 1 L0.9 1" vector-effect="non-scaling-stroke"/><path transform="translate(304.8,836) scale(3.696,9.000)" d="M0.22 0.2 L0.55 0 L0.55 1" vector-effect="non-scaling-stroke"/></g>
<line x1="291.9" y1="846.5" x2="308.7" y2="846.5" stroke="#ffffff" stroke-width="1" shape-rendering="crispEdges"/>
<line x1="308.7" y1="846.5" x2="311" y2="851" stroke="#ffffff" stroke-width="0.9"/>
<g fill="none" stroke="#ffffff" stroke-width="1.15" stroke-linejoin="round" transform="translate(336,830) rotate(-90)"><path transform="translate(0.2,0) scale(3.600,6.000)" d="M0.7 1 L0.7 0 L0.06 0.7 L0.95 0.7" vector-effect="non-scaling-stroke"/><path transform="translate(4.2,0) scale(3.600,6.000)" d="M0.85 0 L0.2 0 L0.15 0.45 Q0.3 0.38 0.5 0.38 Q0.9 0.38 0.9 0.7 Q0.9 1 0.5 1 Q0.2 1 0.1 0.85" vector-effect="non-scaling-stroke"/><path transform="translate(8.2,0) scale(3.600,6.000)" d="M0.5 0 Q0.1 0 0.1 0.3 L0.1 0.7 Q0.1 1 0.5 1 Q0.9 1 0.9 0.7 L0.9 0.3 Q0.9 0 0.5 0 Z" vector-effect="non-scaling-stroke"/></g>
<g fill="none" stroke="#ffffff" stroke-width="1.15" stroke-linejoin="round" transform="translate(336,851) rotate(-90)"><path transform="translate(0.2,0) scale(2.925,6.000)" d="M0.22 0.2 L0.55 0 L0.55 1" vector-effect="non-scaling-stroke"/><path transform="translate(3.4,0) scale(2.925,6.000)" d="M0.22 0.2 L0.55 0 L0.55 1" vector-effect="non-scaling-stroke"/><path transform="translate(6.7,0) scale(2.925,6.000)" d="M0.5 0 Q0.1 0 0.1 0.3 L0.1 0.7 Q0.1 1 0.5 1 Q0.9 1 0.9 0.7 L0.9 0.3 Q0.9 0 0.5 0 Z" vector-effect="non-scaling-stroke"/><path transform="translate(9.9,0) scale(2.925,6.000)" d="M0.5 0 Q0.1 0 0.1 0.3 L0.1 0.7 Q0.1 1 0.5 1 Q0.9 1 0.9 0.7 L0.9 0.3 Q0.9 0 0.5 0 Z" vector-effect="non-scaling-stroke"/></g>
<g fill="none" stroke="#ffffff" stroke-width="1.15" stroke-linejoin="round" transform="translate(336,870) rotate(-90)"><path transform="translate(0.1,0) scale(2.400,6.000)" d="M0.22 0.2 L0.55 0 L0.55 1" vector-effect="non-scaling-stroke"/><path transform="translate(2.8,0) scale(2.400,6.000)" d="M0.5 0 Q0.1 0 0.1 0.3 L0.1 0.7 Q0.1 1 0.5 1 Q0.9 1 0.9 0.7 L0.9 0.3 Q0.9 0 0.5 0 Z" vector-effect="non-scaling-stroke"/><path transform="translate(5.5,0) scale(2.400,6.000)" d="M0.5 0 Q0.1 0 0.1 0.3 L0.1 0.7 Q0.1 1 0.5 1 Q0.9 1 0.9 0.7 L0.9 0.3 Q0.9 0 0.5 0 Z" vector-effect="non-scaling-stroke"/></g>
<g fill="none" stroke="#ffffff" stroke-width="1.15" stroke-linejoin="round"><path transform="translate(302.4,871) scale(2.595,6.300)" d="M0.22 0.2 L0.55 0 L0.55 1" vector-effect="non-scaling-stroke"/><path transform="translate(305.3,871) scale(2.595,6.300)" d="M0.5 0 Q0.1 0 0.1 0.3 L0.1 0.7 Q0.1 1 0.5 1 Q0.9 1 0.9 0.7 L0.9 0.3 Q0.9 0 0.5 0 Z" vector-effect="non-scaling-stroke"/><path transform="translate(308.2,871) scale(2.595,6.300)" d="M0.5 0 Q0.1 0 0.1 0.3 L0.1 0.7 Q0.1 1 0.5 1 Q0.9 1 0.9 0.7 L0.9 0.3 Q0.9 0 0.5 0 Z" vector-effect="non-scaling-stroke"/><path transform="translate(311.1,871) scale(2.595,6.300)" d="M0.12 0.15 Q0.25 0 0.5 0 Q0.88 0 0.88 0.25 Q0.88 0.47 0.45 0.47 Q0.9 0.47 0.9 0.74 Q0.9 1 0.5 1 Q0.2 1 0.1 0.85" vector-effect="non-scaling-stroke"/><path transform="translate(314,871) scale(2.595,6.300)" d="M0.5 0 Q0.1 0 0.1 0.3 L0.1 0.7 Q0.1 1 0.5 1 Q0.9 1 0.9 0.7 L0.9 0.3 Q0.9 0 0.5 0 Z" vector-effect="non-scaling-stroke"/><path transform="translate(316.9,871) scale(2.595,6.300)" d="M0.5 0 Q0.1 0 0.1 0.3 L0.1 0.7 Q0.1 1 0.5 1 Q0.9 1 0.9 0.7 L0.9 0.3 Q0.9 0 0.5 0 Z" vector-effect="non-scaling-stroke"/></g>
<line x1="308" y1="878.4" x2="329" y2="878.4" stroke="#86f06e" stroke-width="1" shape-rendering="crispEdges"/>
<line x1="311" y1="866" x2="311" y2="881.4" stroke="#86f06e" stroke-width="1" shape-rendering="crispEdges"/>
<line x1="309" y1="880.4" x2="313" y2="876.4" stroke="#86f06e" stroke-width="1.2"/>
<line x1="314" y1="866" x2="314" y2="881.4" stroke="#86f06e" stroke-width="1" shape-rendering="crispEdges"/>
<line x1="312" y1="880.4" x2="316" y2="876.4" stroke="#86f06e" stroke-width="1.2"/>
<line x1="326" y1="866" x2="326" y2="881.4" stroke="#86f06e" stroke-width="1" shape-rendering="crispEdges"/>
<line x1="324" y1="880.4" x2="328" y2="876.4" stroke="#86f06e" stroke-width="1.2"/>
<rect x="395" y="789.8" width="5" height="10.2" fill="#0000ff" shape-rendering="crispEdges"/>
<line x1="395.6" y1="800" x2="395.6" y2="824" stroke="#e8a200" stroke-width="1.1" shape-rendering="crispEdges"/>
<line x1="399.4" y1="800" x2="399.4" y2="824" stroke="#e8a200" stroke-width="1.1" shape-rendering="crispEdges"/>
<rect x="395" y="824" width="5" height="12" fill="#0000ff" shape-rendering="crispEdges"/>
<rect x="395" y="830.8" width="14" height="5.2" fill="#0000ff" shape-rendering="crispEdges"/>
<line x1="426.3" y1="788" x2="426.3" y2="838" stroke="#86f06e" stroke-width="1" shape-rendering="crispEdges"/>
<line x1="413" y1="790" x2="429.3" y2="790" stroke="#86f06e" stroke-width="1" shape-rendering="crispEdges"/>
<line x1="424.3" y1="792" x2="428.3" y2="788" stroke="#86f06e" stroke-width="1.2"/>
<line x1="413" y1="833" x2="429.3" y2="833" stroke="#86f06e" stroke-width="1" shape-rendering="crispEdges"/>
<line x1="424.3" y1="835" x2="428.3" y2="831" stroke="#86f06e" stroke-width="1.2"/>
<line x1="413" y1="836" x2="429.3" y2="836" stroke="#86f06e" stroke-width="1" shape-rendering="crispEdges"/>
<line x1="424.3" y1="838" x2="428.3" y2="834" stroke="#86f06e" stroke-width="1.2"/>
<g fill="none" stroke="#ffffff" stroke-width="1.3" stroke-linejoin="round"><path transform="translate(371,775.7) scale(3.696,8.300)" d="M0.9 0.2 Q0.8 0 0.5 0 Q0.1 0 0.1 0.5 Q0.1 1 0.5 1 Q0.9 1 0.9 0.62 L0.9 0.52 L0.55 0.52" vector-effect="non-scaling-stroke"/><path transform="translate(375.2,775.7) scale(3.696,8.300)" d="M0.1 0 L0.1 1 L0.6 1 Q0.92 1 0.92 0.73 Q0.92 0.47 0.6 0.47 L0.1 0.47 M0.6 0.47 Q0.86 0.47 0.86 0.23 Q0.86 0 0.6 0 L0.1 0" vector-effect="non-scaling-stroke"/><path transform="translate(379.4,775.7) scale(3.696,8.300)" d="M0.1 0 L0.9 0 L0.1 1 L0.9 1" vector-effect="non-scaling-stroke"/><path transform="translate(383.6,775.7) scale(3.696,8.300)" d="M0.22 0.2 L0.55 0 L0.55 1" vector-effect="non-scaling-stroke"/><path transform="translate(387.8,775.7) scale(3.696,8.300)" d="M0.85 0.38 L0.85 1 M0.85 0.55 Q0.7 0.36 0.5 0.36 Q0.15 0.36 0.15 0.68 Q0.15 1 0.5 1 Q0.7 1 0.85 0.85" vector-effect="non-scaling-stroke"/></g>
<line x1="370.7" y1="785.5" x2="391.7" y2="785.5" stroke="#ffffff" stroke-width="1" shape-rendering="crispEdges"/>
<line x1="391.7" y1="785.5" x2="395" y2="790" stroke="#ffffff" stroke-width="0.9"/>
<g fill="none" stroke="#ffffff" stroke-width="1.3" stroke-linejoin="round"><path transform="translate(371,809) scale(4.013,8.700)" d="M0.9 0.2 Q0.8 0 0.5 0 Q0.1 0 0.1 0.5 Q0.1 1 0.5 1 Q0.9 1 0.9 0.62 L0.9 0.52 L0.55 0.52" vector-effect="non-scaling-stroke"/><path transform="translate(375.5,809) scale(4.013,8.700)" d="M0.1 0 L0.1 1 L0.6 1 Q0.92 1 0.92 0.73 Q0.92 0.47 0.6 0.47 L0.1 0.47 M0.6 0.47 Q0.86 0.47 0.86 0.23 Q0.86 0 0.6 0 L0.1 0" vector-effect="non-scaling-stroke"/><path transform="translate(380.1,809) scale(4.013,8.700)" d="M0.1 0 L0.9 0 L0.1 1 L0.9 1" vector-effect="non-scaling-stroke"/><path transform="translate(384.7,809) scale(4.013,8.700)" d="M0.9 0.35 Q0.9 0.62 0.5 0.62 Q0.1 0.62 0.1 0.31 Q0.1 0 0.5 0 Q0.9 0 0.9 0.4 Q0.9 1 0.5 1 Q0.25 1 0.15 0.88" vector-effect="non-scaling-stroke"/><path transform="translate(389.2,809) scale(4.013,8.700)" d="M0.85 0.38 L0.85 1 M0.85 0.55 Q0.7 0.36 0.5 0.36 Q0.15 0.36 0.15 0.68 Q0.15 1 0.5 1 Q0.7 1 0.85 0.85" vector-effect="non-scaling-stroke"/></g>
<line x1="370.7" y1="819.2" x2="393.5" y2="819.2" stroke="#ffffff" stroke-width="1" shape-rendering="crispEdges"/>
<line x1="393.5" y1="819.2" x2="395" y2="824" stroke="#ffffff" stroke-width="0.9"/>
<g fill="none" stroke="#ffffff" stroke-width="1.15" stroke-linejoin="round" transform="translate(419,818) rotate(-90)"><path transform="translate(0.2,0) scale(2.700,6.000)" d="M0.22 0.2 L0.55 0 L0.55 1" vector-effect="non-scaling-stroke"/><path transform="translate(3.1,0) scale(2.700,6.000)" d="M0.85 0.12 Q0.7 0 0.5 0 Q0.1 0 0.1 0.6 Q0.1 1 0.5 1 Q0.9 1 0.9 0.68 Q0.9 0.38 0.5 0.38 Q0.1 0.38 0.1 0.65" vector-effect="non-scaling-stroke"/><path transform="translate(6.2,0) scale(2.700,6.000)" d="M0.5 0 Q0.1 0 0.1 0.3 L0.1 0.7 Q0.1 1 0.5 1 Q0.9 1 0.9 0.7 L0.9 0.3 Q0.9 0 0.5 0 Z" vector-effect="non-scaling-stroke"/><path transform="translate(9.2,0) scale(2.700,6.000)" d="M0.5 0 Q0.1 0 0.1 0.3 L0.1 0.7 Q0.1 1 0.5 1 Q0.9 1 0.9 0.7 L0.9 0.3 Q0.9 0 0.5 0 Z" vector-effect="non-scaling-stroke"/></g>
<g fill="none" stroke="#ffffff" stroke-width="1.15" stroke-linejoin="round" transform="translate(419,846) rotate(-90)"><path transform="translate(0.1,0) scale(2.400,6.000)" d="M0.22 0.2 L0.55 0 L0.55 1" vector-effect="non-scaling-stroke"/><path transform="translate(2.8,0) scale(2.400,6.000)" d="M0.5 0 Q0.1 0 0.1 0.3 L0.1 0.7 Q0.1 1 0.5 1 Q0.9 1 0.9 0.7 L0.9 0.3 Q0.9 0 0.5 0 Z" vector-effect="non-scaling-stroke"/><path transform="translate(5.5,0) scale(2.400,6.000)" d="M0.5 0 Q0.1 0 0.1 0.3 L0.1 0.7 Q0.1 1 0.5 1 Q0.9 1 0.9 0.7 L0.9 0.3 Q0.9 0 0.5 0 Z" vector-effect="non-scaling-stroke"/></g>
<g fill="none" stroke="#ffffff" stroke-width="1.15" stroke-linejoin="round"><path transform="translate(386.3,846) scale(2.109,6.300)" d="M0.22 0.2 L0.55 0 L0.55 1" vector-effect="non-scaling-stroke"/><path transform="translate(388.7,846) scale(2.109,6.300)" d="M0.5 0 Q0.1 0 0.1 0.3 L0.1 0.7 Q0.1 1 0.5 1 Q0.9 1 0.9 0.7 L0.9 0.3 Q0.9 0 0.5 0 Z" vector-effect="non-scaling-stroke"/><path transform="translate(391,846) scale(2.109,6.300)" d="M0.5 0 Q0.1 0 0.1 0.3 L0.1 0.7 Q0.1 1 0.5 1 Q0.9 1 0.9 0.7 L0.9 0.3 Q0.9 0 0.5 0 Z" vector-effect="non-scaling-stroke"/><path transform="translate(395.7,846) scale(2.109,6.300)" d="M0.22 0.2 L0.55 0 L0.55 1" vector-effect="non-scaling-stroke"/><path transform="translate(398,846) scale(2.109,6.300)" d="M0.5 0 Q0.1 0 0.1 0.3 L0.1 0.7 Q0.1 1 0.5 1 Q0.9 1 0.9 0.7 L0.9 0.3 Q0.9 0 0.5 0 Z" vector-effect="non-scaling-stroke"/><path transform="translate(400.4,846) scale(2.109,6.300)" d="M0.5 0 Q0.1 0 0.1 0.3 L0.1 0.7 Q0.1 1 0.5 1 Q0.9 1 0.9 0.7 L0.9 0.3 Q0.9 0 0.5 0 Z" vector-effect="non-scaling-stroke"/></g>
<line x1="392" y1="853.5" x2="412" y2="853.5" stroke="#86f06e" stroke-width="1" shape-rendering="crispEdges"/>
<line x1="395" y1="842" x2="395" y2="856.5" stroke="#86f06e" stroke-width="1" shape-rendering="crispEdges"/>
<line x1="393" y1="855.5" x2="397" y2="851.5" stroke="#86f06e" stroke-width="1.2"/>
<line x1="398" y1="842" x2="398" y2="856.5" stroke="#86f06e" stroke-width="1" shape-rendering="crispEdges"/>
<line x1="396" y1="855.5" x2="400" y2="851.5" stroke="#86f06e" stroke-width="1.2"/>
<line x1="409" y1="842" x2="409" y2="856.5" stroke="#86f06e" stroke-width="1" shape-rendering="crispEdges"/>
<line x1="407" y1="855.5" x2="411" y2="851.5" stroke="#86f06e" stroke-width="1.2"/>
<line x1="426.6" y1="788.4" x2="426.6" y2="836.4" stroke="#86f06e" stroke-width="1" shape-rendering="crispEdges"/>
<line x1="414" y1="790.4" x2="429.6" y2="790.4" stroke="#86f06e" stroke-width="1" shape-rendering="crispEdges"/>
<line x1="424.6" y1="792.4" x2="428.6" y2="788.4" stroke="#86f06e" stroke-width="1.2"/>
<line x1="414" y1="834.4" x2="429.6" y2="834.4" stroke="#86f06e" stroke-width="1" shape-rendering="crispEdges"/>
<line x1="424.6" y1="836.4" x2="428.6" y2="832.4" stroke="#86f06e" stroke-width="1.2"/>
<rect x="584.2" y="726.8" width="4.6" height="10" fill="#0000ff" shape-rendering="crispEdges"/>
<line x1="584.8" y1="736.8" x2="584.8" y2="781" stroke="#e8a200" stroke-width="1.1" shape-rendering="crispEdges"/>
<line x1="588.2" y1="736.8" x2="588.2" y2="781" stroke="#e8a200" stroke-width="1.1" shape-rendering="crispEdges"/>
<rect x="584" y="781" width="5" height="9.7" fill="#0000ff" shape-rendering="crispEdges"/>
<line x1="606.5" y1="725.3" x2="606.5" y2="791" stroke="#86f06e" stroke-width="1" shape-rendering="crispEdges"/>
<line x1="594" y1="727.3" x2="609.5" y2="727.3" stroke="#86f06e" stroke-width="1" shape-rendering="crispEdges"/>
<line x1="604.5" y1="729.3" x2="608.5" y2="725.3" stroke="#86f06e" stroke-width="1.2"/>
<line x1="594" y1="789" x2="609.5" y2="789" stroke="#86f06e" stroke-width="1" shape-rendering="crispEdges"/>
<line x1="604.5" y1="791" x2="608.5" y2="787" stroke="#86f06e" stroke-width="1.2"/>
<g fill="none" stroke="#ffffff" stroke-width="1.3" stroke-linejoin="round"><path transform="translate(564.1,713) scale(3.718,8.500)" d="M0.9 0.2 Q0.8 0 0.5 0 Q0.1 0 0.1 0.5 Q0.1 1 0.5 1 Q0.9 1 0.9 0.62 L0.9 0.52 L0.55 0.52" vector-effect="non-scaling-stroke"/><path transform="translate(568.3,713) scale(3.718,8.500)" d="M0.1 0 L0.1 1 L0.6 1 Q0.92 1 0.92 0.73 Q0.92 0.47 0.6 0.47 L0.1 0.47 M0.6 0.47 Q0.86 0.47 0.86 0.23 Q0.86 0 0.6 0 L0.1 0" vector-effect="non-scaling-stroke"/><path transform="translate(572.5,713) scale(3.718,8.500)" d="M0.1 0 L0.9 0 L0.1 1 L0.9 1" vector-effect="non-scaling-stroke"/><path transform="translate(576.7,713) scale(3.718,8.500)" d="M0.22 0.2 L0.55 0 L0.55 1" vector-effect="non-scaling-stroke"/></g>
<line x1="563.8" y1="723" x2="580.7" y2="723" stroke="#ffffff" stroke-width="1" shape-rendering="crispEdges"/>
<line x1="580.7" y1="723" x2="584" y2="727" stroke="#ffffff" stroke-width="0.9"/>
<g fill="none" stroke="#ffffff" stroke-width="1.3" stroke-linejoin="round"><path transform="translate(564.2,767.4) scale(3.718,6.500)" d="M0.9 0.2 Q0.8 0 0.5 0 Q0.1 0 0.1 0.5 Q0.1 1 0.5 1 Q0.9 1 0.9 0.62 L0.9 0.52 L0.55 0.52" vector-effect="non-scaling-stroke"/><path transform="translate(568.4,767.4) scale(3.718,6.500)" d="M0.1 0 L0.1 1 L0.6 1 Q0.92 1 0.92 0.73 Q0.92 0.47 0.6 0.47 L0.1 0.47 M0.6 0.47 Q0.86 0.47 0.86 0.23 Q0.86 0 0.6 0 L0.1 0" vector-effect="non-scaling-stroke"/><path transform="translate(572.6,767.4) scale(3.718,6.500)" d="M0.1 0 L0.9 0 L0.1 1 L0.9 1" vector-effect="non-scaling-stroke"/><path transform="translate(576.8,767.4) scale(3.718,6.500)" d="M0.22 0.2 L0.55 0 L0.55 1" vector-effect="non-scaling-stroke"/></g>
<line x1="563.9" y1="775.4" x2="580.8" y2="775.4" stroke="#ffffff" stroke-width="1" shape-rendering="crispEdges"/>
<line x1="580.8" y1="775.4" x2="584" y2="781" stroke="#ffffff" stroke-width="0.9"/>
<g fill="none" stroke="#ffffff" stroke-width="1.15" stroke-linejoin="round" transform="translate(600,763) rotate(-90)"><path transform="translate(0.2,0) scale(3.375,6.000)" d="M0.12 0.24 Q0.15 0 0.5 0 Q0.88 0 0.88 0.27 Q0.88 0.45 0.5 0.65 L0.1 1 L0.92 1" vector-effect="non-scaling-stroke"/><path transform="translate(3.9,0) scale(3.375,6.000)" d="M0.1 0 L0.9 0 L0.4 1" vector-effect="non-scaling-stroke"/><path transform="translate(7.7,0) scale(3.375,6.000)" d="M0.5 0 Q0.1 0 0.1 0.3 L0.1 0.7 Q0.1 1 0.5 1 Q0.9 1 0.9 0.7 L0.9 0.3 Q0.9 0 0.5 0 Z" vector-effect="non-scaling-stroke"/><path transform="translate(11.4,0) scale(3.375,6.000)" d="M0.5 0 Q0.1 0 0.1 0.3 L0.1 0.7 Q0.1 1 0.5 1 Q0.9 1 0.9 0.7 L0.9 0.3 Q0.9 0 0.5 0 Z" vector-effect="non-scaling-stroke"/></g>
<g fill="none" stroke="#ffffff" stroke-width="1.15" stroke-linejoin="round" transform="translate(600,800) rotate(-90)"><path transform="translate(0.2,0) scale(2.700,6.000)" d="M0.22 0.2 L0.55 0 L0.55 1" vector-effect="non-scaling-stroke"/><path transform="translate(3.1,0) scale(2.700,6.000)" d="M0.5 0 Q0.1 0 0.1 0.3 L0.1 0.7 Q0.1 1 0.5 1 Q0.9 1 0.9 0.7 L0.9 0.3 Q0.9 0 0.5 0 Z" vector-effect="non-scaling-stroke"/><path transform="translate(6.2,0) scale(2.700,6.000)" d="M0.5 0 Q0.1 0 0.1 0.3 L0.1 0.7 Q0.1 1 0.5 1 Q0.9 1 0.9 0.7 L0.9 0.3 Q0.9 0 0.5 0 Z" vector-effect="non-scaling-stroke"/></g>
<g fill="none" stroke="#ffffff" stroke-width="1.15" stroke-linejoin="round"><path transform="translate(575.6,801) scale(2.777,6.700)" d="M0.22 0.2 L0.55 0 L0.55 1" vector-effect="non-scaling-stroke"/><path transform="translate(578.6,801) scale(2.777,6.700)" d="M0.5 0 Q0.1 0 0.1 0.3 L0.1 0.7 Q0.1 1 0.5 1 Q0.9 1 0.9 0.7 L0.9 0.3 Q0.9 0 0.5 0 Z" vector-effect="non-scaling-stroke"/><path transform="translate(581.7,801) scale(2.777,6.700)" d="M0.5 0 Q0.1 0 0.1 0.3 L0.1 0.7 Q0.1 1 0.5 1 Q0.9 1 0.9 0.7 L0.9 0.3 Q0.9 0 0.5 0 Z" vector-effect="non-scaling-stroke"/><path transform="translate(587.9,801) scale(2.777,6.700)" d="M0.22 0.2 L0.55 0 L0.55 1" vector-effect="non-scaling-stroke"/><path transform="translate(591,801) scale(2.777,6.700)" d="M0.5 0 Q0.1 0 0.1 0.3 L0.1 0.7 Q0.1 1 0.5 1 Q0.9 1 0.9 0.7 L0.9 0.3 Q0.9 0 0.5 0 Z" vector-effect="non-scaling-stroke"/><path transform="translate(594.1,801) scale(2.777,6.700)" d="M0.5 0 Q0.1 0 0.1 0.3 L0.1 0.7 Q0.1 1 0.5 1 Q0.9 1 0.9 0.7 L0.9 0.3 Q0.9 0 0.5 0 Z" vector-effect="non-scaling-stroke"/></g>
<line x1="581" y1="809" x2="592" y2="809" stroke="#86f06e" stroke-width="1" shape-rendering="crispEdges"/>
<line x1="584" y1="797" x2="584" y2="812" stroke="#86f06e" stroke-width="1" shape-rendering="crispEdges"/>
<line x1="582" y1="811" x2="586" y2="807" stroke="#86f06e" stroke-width="1.2"/>
<line x1="586" y1="797" x2="586" y2="812" stroke="#86f06e" stroke-width="1" shape-rendering="crispEdges"/>
<line x1="584" y1="811" x2="588" y2="807" stroke="#86f06e" stroke-width="1.2"/>
<line x1="589" y1="797" x2="589" y2="812" stroke="#86f06e" stroke-width="1" shape-rendering="crispEdges"/>
<line x1="587" y1="811" x2="591" y2="807" stroke="#86f06e" stroke-width="1.2"/>
<rect x="478" y="815" width="4.8" height="10" fill="#0000ff" shape-rendering="crispEdges"/>
<line x1="478.5" y1="825" x2="478.5" y2="831" stroke="#e8a200" stroke-width="1.1" shape-rendering="crispEdges"/>
<line x1="482.3" y1="825" x2="482.3" y2="831" stroke="#e8a200" stroke-width="1.1" shape-rendering="crispEdges"/>
<rect x="469" y="831" width="13.8" height="4.8" fill="#0000ff" shape-rendering="crispEdges"/>
<line x1="478.5" y1="835.8" x2="478.5" y2="851" stroke="#e8a200" stroke-width="1.1" shape-rendering="crispEdges"/>
<line x1="482.3" y1="835.8" x2="482.3" y2="851" stroke="#e8a200" stroke-width="1.1" shape-rendering="crispEdges"/>
<rect x="478" y="851" width="4.8" height="10" fill="#0000ff" shape-rendering="crispEdges"/>
<line x1="500.5" y1="813.5" x2="500.5" y2="861.8" stroke="#86f06e" stroke-width="1" shape-rendering="crispEdges"/>
<line x1="488" y1="815.5" x2="503.5" y2="815.5" stroke="#86f06e" stroke-width="1" shape-rendering="crispEdges"/>
<line x1="498.5" y1="817.5" x2="502.5" y2="813.5" stroke="#86f06e" stroke-width="1.2"/>
<line x1="488" y1="833.5" x2="503.5" y2="833.5" stroke="#86f06e" stroke-width="1" shape-rendering="crispEdges"/>
<line x1="498.5" y1="835.5" x2="502.5" y2="831.5" stroke="#86f06e" stroke-width="1.2"/>
<line x1="488" y1="859.8" x2="503.5" y2="859.8" stroke="#86f06e" stroke-width="1" shape-rendering="crispEdges"/>
<line x1="498.5" y1="861.8" x2="502.5" y2="857.8" stroke="#86f06e" stroke-width="1.2"/>
<g fill="none" stroke="#ffffff" stroke-width="1.3" stroke-linejoin="round"><path transform="translate(458.3,800.5) scale(3.718,8.700)" d="M0.9 0.2 Q0.8 0 0.5 0 Q0.1 0 0.1 0.5 Q0.1 1 0.5 1 Q0.9 1 0.9 0.62 L0.9 0.52 L0.55 0.52" vector-effect="non-scaling-stroke"/><path transform="translate(462.5,800.5) scale(3.718,8.700)" d="M0.1 0 L0.1 1 L0.6 1 Q0.92 1 0.92 0.73 Q0.92 0.47 0.6 0.47 L0.1 0.47 M0.6 0.47 Q0.86 0.47 0.86 0.23 Q0.86 0 0.6 0 L0.1 0" vector-effect="non-scaling-stroke"/><path transform="translate(466.7,800.5) scale(3.718,8.700)" d="M0.1 0 L0.9 0 L0.1 1 L0.9 1" vector-effect="non-scaling-stroke"/><path transform="translate(470.9,800.5) scale(3.718,8.700)" d="M0.22 0.2 L0.55 0 L0.55 1" vector-effect="non-scaling-stroke"/></g>
<line x1="458" y1="810.7" x2="474.9" y2="810.7" stroke="#ffffff" stroke-width="1" shape-rendering="crispEdges"/>
<line x1="474.9" y1="810.7" x2="478" y2="815" stroke="#ffffff" stroke-width="0.9"/>
<g fill="none" stroke="#ffffff" stroke-width="1.3" stroke-linejoin="round"><path transform="translate(448.5,816.4) scale(4.136,8.600)" d="M0.9 0.2 Q0.8 0 0.5 0 Q0.1 0 0.1 0.5 Q0.1 1 0.5 1 Q0.9 1 0.9 0.62 L0.9 0.52 L0.55 0.52" vector-effect="non-scaling-stroke"/><path transform="translate(453.2,816.4) scale(4.136,8.600)" d="M0.1 0 L0.1 1 L0.6 1 Q0.92 1 0.92 0.73 Q0.92 0.47 0.6 0.47 L0.1 0.47 M0.6 0.47 Q0.86 0.47 0.86 0.23 Q0.86 0 0.6 0 L0.1 0" vector-effect="non-scaling-stroke"/><path transform="translate(457.9,816.4) scale(4.136,8.600)" d="M0.1 0 L0.9 0 L0.1 1 L0.9 1" vector-effect="non-scaling-stroke"/><path transform="translate(462.6,816.4) scale(4.136,8.600)" d="M0.7 1 L0.7 0 L0.06 0.7 L0.95 0.7" vector-effect="non-scaling-stroke"/></g>
<line x1="448.2" y1="826.5" x2="467" y2="826.5" stroke="#ffffff" stroke-width="1" shape-rendering="crispEdges"/>
<line x1="467" y1="826.5" x2="469" y2="831" stroke="#ffffff" stroke-width="0.9"/>
<g fill="none" stroke="#ffffff" stroke-width="1.3" stroke-linejoin="round"><path transform="translate(458.3,836.6) scale(3.718,7.900)" d="M0.9 0.2 Q0.8 0 0.5 0 Q0.1 0 0.1 0.5 Q0.1 1 0.5 1 Q0.9 1 0.9 0.62 L0.9 0.52 L0.55 0.52" vector-effect="non-scaling-stroke"/><path transform="translate(462.5,836.6) scale(3.718,7.900)" d="M0.1 0 L0.1 1 L0.6 1 Q0.92 1 0.92 0.73 Q0.92 0.47 0.6 0.47 L0.1 0.47 M0.6 0.47 Q0.86 0.47 0.86 0.23 Q0.86 0 0.6 0 L0.1 0" vector-effect="non-scaling-stroke"/><path transform="translate(466.7,836.6) scale(3.718,7.900)" d="M0.1 0 L0.9 0 L0.1 1 L0.9 1" vector-effect="non-scaling-stroke"/><path transform="translate(470.9,836.6) scale(3.718,7.900)" d="M0.22 0.2 L0.55 0 L0.55 1" vector-effect="non-scaling-stroke"/></g>
<line x1="458" y1="846" x2="474.9" y2="846" stroke="#ffffff" stroke-width="1" shape-rendering="crispEdges"/>
<line x1="474.9" y1="846" x2="478" y2="851" stroke="#ffffff" stroke-width="0.9"/>
<g fill="none" stroke="#ffffff" stroke-width="1.15" stroke-linejoin="round" transform="translate(493,830) rotate(-90)"><path transform="translate(0.2,0) scale(3.600,6.000)" d="M0.7 1 L0.7 0 L0.06 0.7 L0.95 0.7" vector-effect="non-scaling-stroke"/><path transform="translate(4.2,0) scale(3.600,6.000)" d="M0.85 0 L0.2 0 L0.15 0.45 Q0.3 0.38 0.5 0.38 Q0.9 0.38 0.9 0.7 Q0.9 1 0.5 1 Q0.2 1 0.1 0.85" vector-effect="non-scaling-stroke"/><path transform="translate(8.2,0) scale(3.600,6.000)" d="M0.5 0 Q0.1 0 0.1 0.3 L0.1 0.7 Q0.1 1 0.5 1 Q0.9 1 0.9 0.7 L0.9 0.3 Q0.9 0 0.5 0 Z" vector-effect="non-scaling-stroke"/></g>
<g fill="none" stroke="#ffffff" stroke-width="1.15" stroke-linejoin="round" transform="translate(493,851) rotate(-90)"><path transform="translate(0.2,0) scale(2.925,6.000)" d="M0.22 0.2 L0.55 0 L0.55 1" vector-effect="non-scaling-stroke"/><path transform="translate(3.4,0) scale(2.925,6.000)" d="M0.22 0.2 L0.55 0 L0.55 1" vector-effect="non-scaling-stroke"/><path transform="translate(6.7,0) scale(2.925,6.000)" d="M0.5 0 Q0.1 0 0.1 0.3 L0.1 0.7 Q0.1 1 0.5 1 Q0.9 1 0.9 0.7 L0.9 0.3 Q0.9 0 0.5 0 Z" vector-effect="non-scaling-stroke"/><path transform="translate(9.9,0) scale(2.925,6.000)" d="M0.5 0 Q0.1 0 0.1 0.3 L0.1 0.7 Q0.1 1 0.5 1 Q0.9 1 0.9 0.7 L0.9 0.3 Q0.9 0 0.5 0 Z" vector-effect="non-scaling-stroke"/></g>
<g fill="none" stroke="#ffffff" stroke-width="1.15" stroke-linejoin="round" transform="translate(493,870) rotate(-90)"><path transform="translate(0.1,0) scale(2.400,6.000)" d="M0.22 0.2 L0.55 0 L0.55 1" vector-effect="non-scaling-stroke"/><path transform="translate(2.8,0) scale(2.400,6.000)" d="M0.5 0 Q0.1 0 0.1 0.3 L0.1 0.7 Q0.1 1 0.5 1 Q0.9 1 0.9 0.7 L0.9 0.3 Q0.9 0 0.5 0 Z" vector-effect="non-scaling-stroke"/><path transform="translate(5.5,0) scale(2.400,6.000)" d="M0.5 0 Q0.1 0 0.1 0.3 L0.1 0.7 Q0.1 1 0.5 1 Q0.9 1 0.9 0.7 L0.9 0.3 Q0.9 0 0.5 0 Z" vector-effect="non-scaling-stroke"/></g>
<g fill="none" stroke="#ffffff" stroke-width="1.15" stroke-linejoin="round"><path transform="translate(455.9,870.4) scale(2.700,6.600)" d="M0.85 0 L0.2 0 L0.15 0.45 Q0.3 0.38 0.5 0.38 Q0.9 0.38 0.9 0.7 Q0.9 1 0.5 1 Q0.2 1 0.1 0.85" vector-effect="non-scaling-stroke"/><path transform="translate(458.9,870.4) scale(2.700,6.600)" d="M0.5 0 Q0.1 0 0.1 0.3 L0.1 0.7 Q0.1 1 0.5 1 Q0.9 1 0.9 0.7 L0.9 0.3 Q0.9 0 0.5 0 Z" vector-effect="non-scaling-stroke"/><path transform="translate(461.9,870.4) scale(2.700,6.600)" d="M0.5 0 Q0.1 0 0.1 0.3 L0.1 0.7 Q0.1 1 0.5 1 Q0.9 1 0.9 0.7 L0.9 0.3 Q0.9 0 0.5 0 Z" vector-effect="non-scaling-stroke"/></g>
<g fill="none" stroke="#ffffff" stroke-width="1.15" stroke-linejoin="round"><path transform="translate(483.6,870.4) scale(2.160,6.600)" d="M0.22 0.2 L0.55 0 L0.55 1" vector-effect="non-scaling-stroke"/><path transform="translate(486,870.4) scale(2.160,6.600)" d="M0.5 0 Q0.1 0 0.1 0.3 L0.1 0.7 Q0.1 1 0.5 1 Q0.9 1 0.9 0.7 L0.9 0.3 Q0.9 0 0.5 0 Z" vector-effect="non-scaling-stroke"/><path transform="translate(488.4,870.4) scale(2.160,6.600)" d="M0.5 0 Q0.1 0 0.1 0.3 L0.1 0.7 Q0.1 1 0.5 1 Q0.9 1 0.9 0.7 L0.9 0.3 Q0.9 0 0.5 0 Z" vector-effect="non-scaling-stroke"/></g>
<line x1="466" y1="878.6" x2="486" y2="878.6" stroke="#86f06e" stroke-width="1" shape-rendering="crispEdges"/>
<line x1="469" y1="866" x2="469" y2="881.6" stroke="#86f06e" stroke-width="1" shape-rendering="crispEdges"/>
<line x1="467" y1="880.6" x2="471" y2="876.6" stroke="#86f06e" stroke-width="1.2"/>
<line x1="478" y1="866" x2="478" y2="881.6" stroke="#86f06e" stroke-width="1" shape-rendering="crispEdges"/>
<line x1="476" y1="880.6" x2="480" y2="876.6" stroke="#86f06e" stroke-width="1.2"/>
<line x1="483" y1="866" x2="483" y2="881.6" stroke="#86f06e" stroke-width="1" shape-rendering="crispEdges"/>
<line x1="481" y1="880.6" x2="485" y2="876.6" stroke="#86f06e" stroke-width="1.2"/>
<rect x="542.9" y="786.1" width="11.9" height="4.6" fill="#0000ff" shape-rendering="crispEdges"/>
<rect x="549.8" y="786.1" width="5" height="11.9" fill="#0000ff" shape-rendering="crispEdges"/>
<line x1="550.2" y1="798" x2="550.2" y2="849.5" stroke="#e8a200" stroke-width="1.1" shape-rendering="crispEdges"/>
<line x1="554.3" y1="798" x2="554.3" y2="849.5" stroke="#e8a200" stroke-width="1.1" shape-rendering="crispEdges"/>
<rect x="549.8" y="849" width="5" height="11.8" fill="#0000ff" shape-rendering="crispEdges"/>
<rect x="531.8" y="856" width="23" height="4.8" fill="#0000ff" shape-rendering="crispEdges"/>
<line x1="565" y1="785.5" x2="565" y2="861.5" stroke="#86f06e" stroke-width="1" shape-rendering="crispEdges"/>
<line x1="552" y1="787.5" x2="568" y2="787.5" stroke="#86f06e" stroke-width="1" shape-rendering="crispEdges"/>
<line x1="563" y1="789.5" x2="567" y2="785.5" stroke="#86f06e" stroke-width="1.2"/>
<line x1="552" y1="833.5" x2="568" y2="833.5" stroke="#86f06e" stroke-width="1" shape-rendering="crispEdges"/>
<line x1="563" y1="835.5" x2="567" y2="831.5" stroke="#86f06e" stroke-width="1.2"/>
<line x1="552" y1="859.5" x2="568" y2="859.5" stroke="#86f06e" stroke-width="1" shape-rendering="crispEdges"/>
<line x1="563" y1="861.5" x2="567" y2="857.5" stroke="#86f06e" stroke-width="1.2"/>
<g fill="none" stroke="#ffffff" stroke-width="1.3" stroke-linejoin="round"><path transform="translate(519.3,771) scale(4.030,8.600)" d="M0.9 0.2 Q0.8 0 0.5 0 Q0.1 0 0.1 0.5 Q0.1 1 0.5 1 Q0.9 1 0.9 0.62 L0.9 0.52 L0.55 0.52" vector-effect="non-scaling-stroke"/><path transform="translate(523.9,771) scale(4.030,8.600)" d="M0.1 0 L0.1 1 L0.6 1 Q0.92 1 0.92 0.73 Q0.92 0.47 0.6 0.47 L0.1 0.47 M0.6 0.47 Q0.86 0.47 0.86 0.23 Q0.86 0 0.6 0 L0.1 0" vector-effect="non-scaling-stroke"/><path transform="translate(528.4,771) scale(4.030,8.600)" d="M0.1 0 L0.9 0 L0.1 1 L0.9 1" vector-effect="non-scaling-stroke"/><path transform="translate(533,771) scale(4.030,8.600)" d="M0.1 0 L0.9 0 L0.4 1" vector-effect="non-scaling-stroke"/><path transform="translate(537.6,771) scale(4.030,8.600)" d="M0.85 0.38 L0.85 1 M0.85 0.55 Q0.7 0.36 0.5 0.36 Q0.15 0.36 0.15 0.68 Q0.15 1 0.5 1 Q0.7 1 0.85 0.85" vector-effect="non-scaling-stroke"/></g>
<line x1="519" y1="781.1" x2="541.9" y2="781.1" stroke="#ffffff" stroke-width="1" shape-rendering="crispEdges"/>
<line x1="541.9" y1="781.1" x2="543" y2="786" stroke="#ffffff" stroke-width="0.9"/>
<g fill="none" stroke="#ffffff" stroke-width="1.3" stroke-linejoin="round"><path transform="translate(526.3,833.7) scale(3.678,9.300)" d="M0.9 0.2 Q0.8 0 0.5 0 Q0.1 0 0.1 0.5 Q0.1 1 0.5 1 Q0.9 1 0.9 0.62 L0.9 0.52 L0.55 0.52" vector-effect="non-scaling-stroke"/><path transform="translate(530.4,833.7) scale(3.678,9.300)" d="M0.1 0 L0.1 1 L0.6 1 Q0.92 1 0.92 0.73 Q0.92 0.47 0.6 0.47 L0.1 0.47 M0.6 0.47 Q0.86 0.47 0.86 0.23 Q0.86 0 0.6 0 L0.1 0" vector-effect="non-scaling-stroke"/><path transform="translate(534.6,833.7) scale(3.678,9.300)" d="M0.1 0 L0.9 0 L0.1 1 L0.9 1" vector-effect="non-scaling-stroke"/><path transform="translate(538.8,833.7) scale(3.678,9.300)" d="M0.22 0.2 L0.55 0 L0.55 1" vector-effect="non-scaling-stroke"/><path transform="translate(543,833.7) scale(3.678,9.300)" d="M0.9 0.35 Q0.9 0.62 0.5 0.62 Q0.1 0.62 0.1 0.31 Q0.1 0 0.5 0 Q0.9 0 0.9 0.4 Q0.9 1 0.5 1 Q0.25 1 0.15 0.88" vector-effect="non-scaling-stroke"/></g>
<line x1="526" y1="844.5" x2="546.9" y2="844.5" stroke="#ffffff" stroke-width="1" shape-rendering="crispEdges"/>
<line x1="546.9" y1="844.5" x2="550" y2="849" stroke="#ffffff" stroke-width="0.9"/>
<g fill="none" stroke="#ffffff" stroke-width="1.15" stroke-linejoin="round" transform="translate(558,786) rotate(-90)"><path transform="translate(0.1,0) scale(2.400,6.000)" d="M0.22 0.2 L0.55 0 L0.55 1" vector-effect="non-scaling-stroke"/><path transform="translate(2.8,0) scale(2.400,6.000)" d="M0.5 0 Q0.1 0 0.1 0.3 L0.1 0.7 Q0.1 1 0.5 1 Q0.9 1 0.9 0.7 L0.9 0.3 Q0.9 0 0.5 0 Z" vector-effect="non-scaling-stroke"/><path transform="translate(5.5,0) scale(2.400,6.000)" d="M0.5 0 Q0.1 0 0.1 0.3 L0.1 0.7 Q0.1 1 0.5 1 Q0.9 1 0.9 0.7 L0.9 0.3 Q0.9 0 0.5 0 Z" vector-effect="non-scaling-stroke"/></g>
<g fill="none" stroke="#ffffff" stroke-width="1.15" stroke-linejoin="round" transform="translate(558,818) rotate(-90)"><path transform="translate(0.2,0) scale(2.700,6.000)" d="M0.12 0.24 Q0.15 0 0.5 0 Q0.88 0 0.88 0.27 Q0.88 0.45 0.5 0.65 L0.1 1 L0.92 1" vector-effect="non-scaling-stroke"/><path transform="translate(3.1,0) scale(2.700,6.000)" d="M0.12 0.15 Q0.25 0 0.5 0 Q0.88 0 0.88 0.25 Q0.88 0.47 0.45 0.47 Q0.9 0.47 0.9 0.74 Q0.9 1 0.5 1 Q0.2 1 0.1 0.85" vector-effect="non-scaling-stroke"/><path transform="translate(6.2,0) scale(2.700,6.000)" d="M0.5 0 Q0.1 0 0.1 0.3 L0.1 0.7 Q0.1 1 0.5 1 Q0.9 1 0.9 0.7 L0.9 0.3 Q0.9 0 0.5 0 Z" vector-effect="non-scaling-stroke"/><path transform="translate(9.2,0) scale(2.700,6.000)" d="M0.5 0 Q0.1 0 0.1 0.3 L0.1 0.7 Q0.1 1 0.5 1 Q0.9 1 0.9 0.7 L0.9 0.3 Q0.9 0 0.5 0 Z" vector-effect="non-scaling-stroke"/></g>
<g fill="none" stroke="#ffffff" stroke-width="1.15" stroke-linejoin="round" transform="translate(558,851) rotate(-90)"><path transform="translate(0.2,0) scale(2.925,6.000)" d="M0.22 0.2 L0.55 0 L0.55 1" vector-effect="non-scaling-stroke"/><path transform="translate(3.4,0) scale(2.925,6.000)" d="M0.22 0.2 L0.55 0 L0.55 1" vector-effect="non-scaling-stroke"/><path transform="translate(6.7,0) scale(2.925,6.000)" d="M0.5 0 Q0.1 0 0.1 0.3 L0.1 0.7 Q0.1 1 0.5 1 Q0.9 1 0.9 0.7 L0.9 0.3 Q0.9 0 0.5 0 Z" vector-effect="non-scaling-stroke"/><path transform="translate(9.9,0) scale(2.925,6.000)" d="M0.5 0 Q0.1 0 0.1 0.3 L0.1 0.7 Q0.1 1 0.5 1 Q0.9 1 0.9 0.7 L0.9 0.3 Q0.9 0 0.5 0 Z" vector-effect="non-scaling-stroke"/></g>
<g fill="none" stroke="#ffffff" stroke-width="1.15" stroke-linejoin="round" transform="translate(558,870) rotate(-90)"><path transform="translate(0.1,0) scale(2.400,6.000)" d="M0.22 0.2 L0.55 0 L0.55 1" vector-effect="non-scaling-stroke"/><path transform="translate(2.8,0) scale(2.400,6.000)" d="M0.5 0 Q0.1 0 0.1 0.3 L0.1 0.7 Q0.1 1 0.5 1 Q0.9 1 0.9 0.7 L0.9 0.3 Q0.9 0 0.5 0 Z" vector-effect="non-scaling-stroke"/><path transform="translate(5.5,0) scale(2.400,6.000)" d="M0.5 0 Q0.1 0 0.1 0.3 L0.1 0.7 Q0.1 1 0.5 1 Q0.9 1 0.9 0.7 L0.9 0.3 Q0.9 0 0.5 0 Z" vector-effect="non-scaling-stroke"/></g>
<g fill="none" stroke="#ffffff" stroke-width="1.15" stroke-linejoin="round"><path transform="translate(543.4,760) scale(2.507,6.000)" d="M0.7 1 L0.7 0 L0.06 0.7 L0.95 0.7" vector-effect="non-scaling-stroke"/><path transform="translate(546.2,760) scale(2.507,6.000)" d="M0.5 0 Q0.1 0 0.1 0.3 L0.1 0.7 Q0.1 1 0.5 1 Q0.9 1 0.9 0.7 L0.9 0.3 Q0.9 0 0.5 0 Z" vector-effect="non-scaling-stroke"/><path transform="translate(549,760) scale(2.507,6.000)" d="M0.5 0 Q0.1 0 0.1 0.3 L0.1 0.7 Q0.1 1 0.5 1 Q0.9 1 0.9 0.7 L0.9 0.3 Q0.9 0 0.5 0 Z" vector-effect="non-scaling-stroke"/><path transform="translate(554.6,760) scale(2.507,6.000)" d="M0.22 0.2 L0.55 0 L0.55 1" vector-effect="non-scaling-stroke"/><path transform="translate(557.4,760) scale(2.507,6.000)" d="M0.5 0 Q0.1 0 0.1 0.3 L0.1 0.7 Q0.1 1 0.5 1 Q0.9 1 0.9 0.7 L0.9 0.3 Q0.9 0 0.5 0 Z" vector-effect="non-scaling-stroke"/><path transform="translate(560.2,760) scale(2.507,6.000)" d="M0.5 0 Q0.1 0 0.1 0.3 L0.1 0.7 Q0.1 1 0.5 1 Q0.9 1 0.9 0.7 L0.9 0.3 Q0.9 0 0.5 0 Z" vector-effect="non-scaling-stroke"/></g>
<line x1="540" y1="767.1" x2="558" y2="767.1" stroke="#86f06e" stroke-width="1" shape-rendering="crispEdges"/>
<line x1="543" y1="780" x2="543" y2="764.1" stroke="#86f06e" stroke-width="1" shape-rendering="crispEdges"/>
<line x1="541" y1="769.1" x2="545" y2="765.1" stroke="#86f06e" stroke-width="1.2"/>
<line x1="552" y1="780" x2="552" y2="764.1" stroke="#86f06e" stroke-width="1" shape-rendering="crispEdges"/>
<line x1="550" y1="769.1" x2="554" y2="765.1" stroke="#86f06e" stroke-width="1.2"/>
<line x1="555" y1="780" x2="555" y2="764.1" stroke="#86f06e" stroke-width="1" shape-rendering="crispEdges"/>
<line x1="553" y1="769.1" x2="557" y2="765.1" stroke="#86f06e" stroke-width="1.2"/>
<g fill="none" stroke="#ffffff" stroke-width="1.15" stroke-linejoin="round"><path transform="translate(537.7,871) scale(3.253,6.000)" d="M0.85 0.12 Q0.7 0 0.5 0 Q0.1 0 0.1 0.6 Q0.1 1 0.5 1 Q0.9 1 0.9 0.68 Q0.9 0.38 0.5 0.38 Q0.1 0.38 0.1 0.65" vector-effect="non-scaling-stroke"/><path transform="translate(541.3,871) scale(3.253,6.000)" d="M0.5 0 Q0.1 0 0.1 0.3 L0.1 0.7 Q0.1 1 0.5 1 Q0.9 1 0.9 0.7 L0.9 0.3 Q0.9 0 0.5 0 Z" vector-effect="non-scaling-stroke"/><path transform="translate(544.9,871) scale(3.253,6.000)" d="M0.5 0 Q0.1 0 0.1 0.3 L0.1 0.7 Q0.1 1 0.5 1 Q0.9 1 0.9 0.7 L0.9 0.3 Q0.9 0 0.5 0 Z" vector-effect="non-scaling-stroke"/><path transform="translate(552.1,871) scale(3.253,6.000)" d="M0.22 0.2 L0.55 0 L0.55 1" vector-effect="non-scaling-stroke"/><path transform="translate(555.8,871) scale(3.253,6.000)" d="M0.5 0 Q0.1 0 0.1 0.3 L0.1 0.7 Q0.1 1 0.5 1 Q0.9 1 0.9 0.7 L0.9 0.3 Q0.9 0 0.5 0 Z" vector-effect="non-scaling-stroke"/><path transform="translate(559.4,871) scale(3.253,6.000)" d="M0.5 0 Q0.1 0 0.1 0.3 L0.1 0.7 Q0.1 1 0.5 1 Q0.9 1 0.9 0.7 L0.9 0.3 Q0.9 0 0.5 0 Z" vector-effect="non-scaling-stroke"/></g>
<line x1="529" y1="878.6" x2="558" y2="878.6" stroke="#86f06e" stroke-width="1" shape-rendering="crispEdges"/>
<line x1="532" y1="866" x2="532" y2="881.6" stroke="#86f06e" stroke-width="1" shape-rendering="crispEdges"/>
<line x1="530" y1="880.6" x2="534" y2="876.6" stroke="#86f06e" stroke-width="1.2"/>
<line x1="550" y1="866" x2="550" y2="881.6" stroke="#86f06e" stroke-width="1" shape-rendering="crispEdges"/>
<line x1="548" y1="880.6" x2="552" y2="876.6" stroke="#86f06e" stroke-width="1.2"/>
<line x1="555" y1="866" x2="555" y2="881.6" stroke="#86f06e" stroke-width="1" shape-rendering="crispEdges"/>
<line x1="553" y1="880.6" x2="557" y2="876.6" stroke="#86f06e" stroke-width="1.2"/>
</g>
<g clip-path="url(#clipR)">
<line x1="804" y1="208.5" x2="1600" y2="208.5" stroke="#4f9b8c" stroke-width="1" shape-rendering="crispEdges"/>
<line x1="804" y1="730.5" x2="1600" y2="730.5" stroke="#4f9b8c" stroke-width="1" shape-rendering="crispEdges"/>
<line x1="804" y1="778.5" x2="1600" y2="778.5" stroke="#4f9b8c" stroke-width="1" shape-rendering="crispEdges"/>
<line x1="804" y1="825.5" x2="1600" y2="825.5" stroke="#4f9b8c" stroke-width="1" shape-rendering="crispEdges"/>
<line x1="804" y1="873.5" x2="1600" y2="873.5" stroke="#4f9b8c" stroke-width="1" shape-rendering="crispEdges"/>
<line x1="804" y1="920.5" x2="1600" y2="920.5" stroke="#4f9b8c" stroke-width="1" shape-rendering="crispEdges"/>
<line x1="994.5" y1="920" x2="994.5" y2="1040" stroke="#4f9b8c" stroke-width="1" shape-rendering="crispEdges"/>
<line x1="1409.5" y1="920" x2="1409.5" y2="1040" stroke="#4f9b8c" stroke-width="1" shape-rendering="crispEdges"/>
<rect x="994.5" y="208.5" width="415" height="712" fill="none" stroke="#ff0000" stroke-width="1.2" rx="0"/>
<text x="1091" y="265" font-size="19.2" fill="#ffffff" textLength="49.5" lengthAdjust="spacingAndGlyphs" font-family="Liberation Sans" font-weight="300">墙身钢筋</text>
<line x1="1083" y1="271.5" x2="1178" y2="271.5" stroke="#ffffff" stroke-width="1" shape-rendering="crispEdges"/>
<text x="1091" y="302.4" font-size="20.3" fill="#ffffff" textLength="49.5" lengthAdjust="spacingAndGlyphs" font-family="Liberation Sans" font-weight="300">墙身钢筋</text>
<line x1="1083" y1="308.7" x2="1178" y2="308.7" stroke="#ffffff" stroke-width="1" shape-rendering="crispEdges"/>
<line x1="1156.7" y1="257" x2="1156.7" y2="317.5" stroke="#ff0000" stroke-width="1" shape-rendering="crispEdges"/>
<line x1="1177.4" y1="257" x2="1177.4" y2="317.5" stroke="#ff0000" stroke-width="1" shape-rendering="crispEdges"/>
<path d="M1229 277.5 L1155 277.5 Q1153.5 277.5 1153.5 279 L1153.5 295 Q1153.5 296.5 1155 296.5 L1229 296.5" stroke="#ff0000" stroke-width="1" fill="none"/>
<path d="M1191 280 L1188 280 L1188 295 L1191 295 M1188 280 L1188 278" stroke="#ff00ff" stroke-width="1.1" fill="none"/>
<path d="M1205 280 L1208 280 L1208 295 L1205 295" stroke="#ff00ff" stroke-width="1.1" fill="none"/>
<line x1="1212.3" y1="264.5" x2="1212.3" y2="301.6" stroke="#ffffff" stroke-width="1" shape-rendering="crispEdges"/>
<line x1="1212.3" y1="264.6" x2="1274" y2="264.6" stroke="#ffffff" stroke-width="1" shape-rendering="crispEdges"/>
<text x="1225" y="258.8" font-size="19" fill="#ffffff" textLength="49" lengthAdjust="spacingAndGlyphs" font-family="Liberation Sans" font-weight="300">墙身钢筋</text>
<line x1="1155.5" y1="273.5" x2="1159" y2="269.5" stroke="#ffffff" stroke-width="0.8"/>
<line x1="1155.5" y1="310.7" x2="1159" y2="306.7" stroke="#ffffff" stroke-width="0.8"/>
<line x1="1210.5" y1="279.5" x2="1214" y2="275.5" stroke="#ffffff" stroke-width="0.8"/>
<line x1="1210.5" y1="298.5" x2="1214" y2="294.5" stroke="#ffffff" stroke-width="0.8"/>
<path d="M1107 410.5 L1137 410.5 L1141 401 L1144.6 419.4 L1148.4 410.5 L1179 410.5" stroke="#ffffff" stroke-width="1" fill="none"/>
<path d="M1107 529.2 L1137 529.2 L1141 520 L1144.6 537 L1148.4 529.2 L1179 529.2" stroke="#ffffff" stroke-width="1" fill="none"/>
<line x1="1119.8" y1="410.5" x2="1119.8" y2="529.2" stroke="#ffffff" stroke-width="1" shape-rendering="crispEdges"/>
<line x1="1166.4" y1="410.5" x2="1166.4" y2="446.2" stroke="#ffffff" stroke-width="1" shape-rendering="crispEdges"/>
<line x1="1166.4" y1="493.4" x2="1166.4" y2="529.2" stroke="#ffffff" stroke-width="1" shape-rendering="crispEdges"/>
<line x1="1123.2" y1="410.5" x2="1123.2" y2="529.2" stroke="#ff0000" stroke-width="1" shape-rendering="crispEdges"/>
<line x1="1164.7" y1="410.5" x2="1164.7" y2="529.2" stroke="#ff0000" stroke-width="1" shape-rendering="crispEdges"/>
<line x1="1119.8" y1="446.2" x2="1273.3" y2="446.2" stroke="#ffffff" stroke-width="1" shape-rendering="crispEdges"/>
<line x1="1119.8" y1="493.4" x2="1273.3" y2="493.4" stroke="#ffffff" stroke-width="1" shape-rendering="crispEdges"/>
<line x1="1237.3" y1="446.2" x2="1237.3" y2="493.4" stroke="#ffffff" stroke-width="1" shape-rendering="crispEdges"/>
<line x1="1273.3" y1="434" x2="1273.3" y2="463" stroke="#ffffff" stroke-width="1" shape-rendering="crispEdges"/>
<line x1="1273.3" y1="478" x2="1273.3" y2="505.5" stroke="#ffffff" stroke-width="1" shape-rendering="crispEdges"/>
<path d="M1273.3 463 L1280 466 L1264 470.5 L1273.3 474 L1273.3 478" stroke="#ffffff" stroke-width="1" fill="none"/>
<line x1="1123.2" y1="450.5" x2="1273.3" y2="450.5" stroke="#ff0000" stroke-width="1" shape-rendering="crispEdges"/>
<line x1="1123.2" y1="488.6" x2="1273.3" y2="488.6" stroke="#ff0000" stroke-width="1" shape-rendering="crispEdges"/>
<path d="M1125.5 455 l3 -2 l0 4 z" stroke="#ff00ff" stroke-width="0.9" fill="none"/>
<path d="M1125.5 485 l3 -2 l0 4 z" stroke="#ff00ff" stroke-width="0.9" fill="none"/>
<path d="M1159.5 455 l3 -2 l0 4 z" stroke="#ff00ff" stroke-width="0.9" fill="none"/>
<path d="M1159.5 485 l3 -2 l0 4 z" stroke="#ff00ff" stroke-width="0.9" fill="none"/>
<path d="M1193 455 Q1191 452 1194 452 L1197 452 Q1200 452 1200 455 L1200 461 M1191 455 L1191 485 Q1191 488 1194 488 L1197 488 Q1200 488 1200 485 L1200 479" stroke="#ff00ff" stroke-width="1" fill="none"/>
<path d="M1227 455 Q1225 452 1228 452 L1231 452 Q1234 452 1234 455 L1234 485 Q1234 488 1231 488 L1228 488 Q1225 488 1225 485 L1225 479 M1225 455 L1225 461" stroke="#ff00ff" stroke-width="1" fill="none"/>
<line x1="1273.3" y1="446.2" x2="1315" y2="446.2" stroke="#00ff00" stroke-width="1" shape-rendering="crispEdges"/>
<line x1="1273.3" y1="493.4" x2="1315" y2="493.4" stroke="#00ff00" stroke-width="1" shape-rendering="crispEdges"/>
<line x1="1308.7" y1="434" x2="1308.7" y2="505.5" stroke="#00ff00" stroke-width="1" shape-rendering="crispEdges"/>
<line x1="1304.5" y1="443" x2="1312.5" y2="450" stroke="#00ff00" stroke-width="2"/>
<line x1="1304.5" y1="490" x2="1312.5" y2="497" stroke="#00ff00" stroke-width="2"/>
<g fill="none" stroke="#ffffff" stroke-width="1.1" stroke-linejoin="round" transform="translate(1283.7,487.5) rotate(-90)"><path transform="translate(1,0) scale(8.267,19.000)" d="M0.12 0.24 Q0.15 0 0.5 0 Q0.88 0 0.88 0.27 Q0.88 0.45 0.5 0.65 L0.1 1 L0.92 1" vector-effect="non-scaling-stroke"/><path transform="translate(11.4,0) scale(8.267,19.000)" d="M0.5 0 Q0.1 0 0.1 0.3 L0.1 0.7 Q0.1 1 0.5 1 Q0.9 1 0.9 0.7 L0.9 0.3 Q0.9 0 0.5 0 Z" vector-effect="non-scaling-stroke"/><path transform="translate(21.7,0) scale(8.267,19.000)" d="M0.5 0 Q0.1 0 0.1 0.3 L0.1 0.7 Q0.1 1 0.5 1 Q0.9 1 0.9 0.7 L0.9 0.3 Q0.9 0 0.5 0 Z" vector-effect="non-scaling-stroke"/></g>
<line x1="1120" y1="529.2" x2="1120" y2="560" stroke="#00ff00" stroke-width="1" shape-rendering="crispEdges"/>
<line x1="1166.4" y1="529.2" x2="1166.4" y2="560" stroke="#00ff00" stroke-width="1" shape-rendering="crispEdges"/>
<g fill="none" stroke="#ffffff" stroke-width="1.1" stroke-linejoin="round"><path transform="translate(1126,534) scale(8.000,19.000)" d="M0.12 0.24 Q0.15 0 0.5 0 Q0.88 0 0.88 0.27 Q0.88 0.45 0.5 0.65 L0.1 1 L0.92 1" vector-effect="non-scaling-stroke"/><path transform="translate(1136,534) scale(8.000,19.000)" d="M0.5 0 Q0.1 0 0.1 0.3 L0.1 0.7 Q0.1 1 0.5 1 Q0.9 1 0.9 0.7 L0.9 0.3 Q0.9 0 0.5 0 Z" vector-effect="non-scaling-stroke"/><path transform="translate(1146,534) scale(8.000,19.000)" d="M0.5 0 Q0.1 0 0.1 0.3 L0.1 0.7 Q0.1 1 0.5 1 Q0.9 1 0.9 0.7 L0.9 0.3 Q0.9 0 0.5 0 Z" vector-effect="non-scaling-stroke"/></g>
<g fill="none" stroke="#ffffff" stroke-width="1.1" stroke-linejoin="round"><path transform="translate(1185.8,533.9) scale(8.160,19.000)" d="M0.12 0.15 Q0.25 0 0.5 0 Q0.88 0 0.88 0.25 Q0.88 0.47 0.45 0.47 Q0.9 0.47 0.9 0.74 Q0.9 1 0.5 1 Q0.2 1 0.1 0.85" vector-effect="non-scaling-stroke"/><path transform="translate(1196,533.9) scale(8.160,19.000)" d="M0.5 0 Q0.1 0 0.1 0.3 L0.1 0.7 Q0.1 1 0.5 1 Q0.9 1 0.9 0.7 L0.9 0.3 Q0.9 0 0.5 0 Z" vector-effect="non-scaling-stroke"/><path transform="translate(1206.2,533.9) scale(8.160,19.000)" d="M0.5 0 Q0.1 0 0.1 0.3 L0.1 0.7 Q0.1 1 0.5 1 Q0.9 1 0.9 0.7 L0.9 0.3 Q0.9 0 0.5 0 Z" vector-effect="non-scaling-stroke"/></g>
<line x1="1237.3" y1="511" x2="1237.3" y2="556" stroke="#00ff00" stroke-width="1" shape-rendering="crispEdges"/>
<line x1="1150" y1="558" x2="1240" y2="558" stroke="#00ff00" stroke-width="1" shape-rendering="crispEdges"/>
<line x1="804" y1="422.2" x2="840.6" y2="422.2" stroke="#00ff00" stroke-width="1" shape-rendering="crispEdges"/>
<line x1="804" y1="517.2" x2="840.6" y2="517.2" stroke="#00ff00" stroke-width="1" shape-rendering="crispEdges"/>
<line x1="834.6" y1="422.2" x2="834.6" y2="517.2" stroke="#00ff00" stroke-width="1" shape-rendering="crispEdges"/>
<line x1="830.5" y1="419" x2="838.5" y2="426" stroke="#00ff00" stroke-width="2"/>
<line x1="830.5" y1="514" x2="838.5" y2="521" stroke="#00ff00" stroke-width="2"/>
<g fill="none" stroke="#ffffff" stroke-width="1.1" stroke-linejoin="round" transform="translate(810,487.2) rotate(-90)"><path transform="translate(1,0) scale(8.107,19.600)" d="M0.7 1 L0.7 0 L0.06 0.7 L0.95 0.7" vector-effect="non-scaling-stroke"/><path transform="translate(11.1,0) scale(8.107,19.600)" d="M0.5 0 Q0.1 0 0.1 0.3 L0.1 0.7 Q0.1 1 0.5 1 Q0.9 1 0.9 0.7 L0.9 0.3 Q0.9 0 0.5 0 Z" vector-effect="non-scaling-stroke"/><path transform="translate(21.3,0) scale(8.107,19.600)" d="M0.5 0 Q0.1 0 0.1 0.3 L0.1 0.7 Q0.1 1 0.5 1 Q0.9 1 0.9 0.7 L0.9 0.3 Q0.9 0 0.5 0 Z" vector-effect="non-scaling-stroke"/></g>
<rect x="804" y="321" width="2" height="2" fill="#ffffff" shape-rendering="crispEdges"/>
<path d="M1600 591.4 L1415.5 591.4 L1415.5 330.3 L1463.6 330.3 L1463.6 544.5 L1600 544.5" stroke="#ffffff" stroke-width="1.1" fill="none"/>
<path d="M1600 586.3 L1423 586.3 Q1420.4 586.3 1420.4 583 L1420.4 338 Q1420.4 335.4 1423 335.4 L1456 335.4 Q1458.4 335.4 1458.4 338 L1458.4 548.7" stroke="#ff0000" stroke-width="1" fill="none"/>
<line x1="1420.4" y1="548.7" x2="1600" y2="548.7" stroke="#ff0000" stroke-width="1" shape-rendering="crispEdges"/>
<line x1="1458.3" y1="335.4" x2="1458.3" y2="586.3" stroke="#ff0000" stroke-width="1" shape-rendering="crispEdges"/>
<line x1="1427" y1="344" x2="1436" y2="352" stroke="#ff0000" stroke-width="0.9"/>
<line x1="1423" y1="579" x2="1430" y2="572" stroke="#ff0000" stroke-width="0.9"/>
<line x1="1428" y1="584" x2="1434" y2="578" stroke="#ff0000" stroke-width="0.9"/>
<path d="M1422 379.3 L1442 379.3 M1438 379.3 " stroke="#ff00ff" stroke-width="0" fill="none"/>
<line x1="1425" y1="385.3" x2="1455" y2="385.3" stroke="#ff00ff" stroke-width="1" shape-rendering="crispEdges"/>
<line x1="1424" y1="379.3" x2="1434" y2="379.3" stroke="#ff00ff" stroke-width="1" shape-rendering="crispEdges"/>
<line x1="1446" y1="379.3" x2="1456" y2="379.3" stroke="#ff00ff" stroke-width="1" shape-rendering="crispEdges"/>
<path d="M1422 382.3 q0 3 3 3 M1456 382.3 q0 3 -3 3" stroke="#ff00ff" stroke-width="1" fill="none"/>
<path d="M1424 382.3 l3 -2 l0 4 z M1451 382.3 l3 -2 l0 4 z" stroke="#ff00ff" stroke-width="0.9" fill="none"/>
<path d="M1422 421.3 L1442 421.3 M1438 421.3 " stroke="#ff00ff" stroke-width="0" fill="none"/>
<line x1="1425" y1="427.3" x2="1455" y2="427.3" stroke="#ff00ff" stroke-width="1" shape-rendering="crispEdges"/>
<line x1="1424" y1="421.3" x2="1434" y2="421.3" stroke="#ff00ff" stroke-width="1" shape-rendering="crispEdges"/>
<line x1="1446" y1="421.3" x2="1456" y2="421.3" stroke="#ff00ff" stroke-width="1" shape-rendering="crispEdges"/>
<path d="M1422 424.3 q0 3 3 3 M1456 424.3 q0 3 -3 3" stroke="#ff00ff" stroke-width="1" fill="none"/>
<path d="M1424 424.3 l3 -2 l0 4 z M1451 424.3 l3 -2 l0 4 z" stroke="#ff00ff" stroke-width="0.9" fill="none"/>
<path d="M1422 463.6 L1442 463.6 M1438 463.6 " stroke="#ff00ff" stroke-width="0" fill="none"/>
<line x1="1425" y1="469.6" x2="1455" y2="469.6" stroke="#ff00ff" stroke-width="1" shape-rendering="crispEdges"/>
<line x1="1424" y1="463.6" x2="1434" y2="463.6" stroke="#ff00ff" stroke-width="1" shape-rendering="crispEdges"/>
<line x1="1446" y1="463.6" x2="1456" y2="463.6" stroke="#ff00ff" stroke-width="1" shape-rendering="crispEdges"/>
<path d="M1422 466.6 q0 3 3 3 M1456 466.6 q0 3 -3 3" stroke="#ff00ff" stroke-width="1" fill="none"/>
<path d="M1424 466.6 l3 -2 l0 4 z M1451 466.6 l3 -2 l0 4 z" stroke="#ff00ff" stroke-width="0.9" fill="none"/>
<path d="M1422 506.6 L1442 506.6 M1438 506.6 " stroke="#ff00ff" stroke-width="0" fill="none"/>
<line x1="1425" y1="512.6" x2="1455" y2="512.6" stroke="#ff00ff" stroke-width="1" shape-rendering="crispEdges"/>
<line x1="1424" y1="506.6" x2="1434" y2="506.6" stroke="#ff00ff" stroke-width="1" shape-rendering="crispEdges"/>
<line x1="1446" y1="506.6" x2="1456" y2="506.6" stroke="#ff00ff" stroke-width="1" shape-rendering="crispEdges"/>
<path d="M1422 509.6 q0 3 3 3 M1456 509.6 q0 3 -3 3" stroke="#ff00ff" stroke-width="1" fill="none"/>
<path d="M1424 509.6 l3 -2 l0 4 z M1451 509.6 l3 -2 l0 4 z" stroke="#ff00ff" stroke-width="0.9" fill="none"/>
<path d="M1424 340.5 l3 -2 l0 4 z M1451 340.5 l3 -2 l0 4 z" stroke="#ff00ff" stroke-width="0.9" fill="none"/>
<path d="M1503 556 L1503 552 Q1503 550 1501 550 Q1498 550 1498 553 L1498 583 Q1498 586 1501 586 Q1503 586 1503 584 L1503 578" stroke="#ff00ff" stroke-width="1" fill="none"/>
<path d="M1549.6 556 L1549.6 552 Q1549.6 550 1547.6 550 Q1544.6 550 1544.6 553 L1544.6 583 Q1544.6 586 1547.6 586 Q1549.6 586 1549.6 584 L1549.6 578" stroke="#ff00ff" stroke-width="1" fill="none"/>
<path d="M1595.7 556 L1595.7 552 Q1595.7 550 1593.7 550 Q1590.7 550 1590.7 553 L1590.7 583 Q1590.7 586 1593.7 586 Q1595.7 586 1595.7 584 L1595.7 578" stroke="#ff00ff" stroke-width="1" fill="none"/>
<path d="M1422.5 553 l3 -2 l0 4 z" stroke="#ff00ff" stroke-width="0.9" fill="none"/>
<path d="M1422.5 583 l3 -2 l0 4 z" stroke="#ff00ff" stroke-width="0.9" fill="none"/>
<path d="M1453.5 553 l3 -2 l0 4 z" stroke="#ff00ff" stroke-width="0.9" fill="none"/>
<path d="M1453.5 583 l3 -2 l0 4 z" stroke="#ff00ff" stroke-width="0.9" fill="none"/>
<rect x="1525.4" y="307.2" width="19.2" height="126.2" fill="none" stroke="#ff0000" stroke-width="1" rx="2"/>
<line x1="1525.4" y1="421.5" x2="1600" y2="421.5" stroke="#ff0000" stroke-width="1" shape-rendering="crispEdges"/>
<line x1="1525.4" y1="440.3" x2="1600" y2="440.3" stroke="#ff0000" stroke-width="1" shape-rendering="crispEdges"/>
<line x1="1525.4" y1="421.5" x2="1525.4" y2="440.3" stroke="#ff0000" stroke-width="1" shape-rendering="crispEdges"/>
<line x1="1527" y1="311" x2="1533" y2="316" stroke="#ff0000" stroke-width="0.8"/>
<line x1="1527" y1="437" x2="1532" y2="432" stroke="#ff0000" stroke-width="0.8"/>
<path d="M1545 331.9 L1536 331.9 L1533 334.4 L1536 336.9 L1553 336.9 L1553 331.9 L1549 331.9" stroke="#ff00ff" stroke-width="1" fill="none"/>
<path d="M1545 353.5 L1536 353.5 L1533 356 L1536 358.5 L1553 358.5 L1553 353.5 L1549 353.5" stroke="#ff00ff" stroke-width="1" fill="none"/>
<path d="M1545 375.0 L1536 375.0 L1533 377.5 L1536 380.0 L1553 380.0 L1553 375.0 L1549 375.0" stroke="#ff00ff" stroke-width="1" fill="none"/>
<path d="M1545 396.0 L1536 396.0 L1533 398.5 L1536 401.0 L1553 401.0 L1553 396.0 L1549 396.0" stroke="#ff00ff" stroke-width="1" fill="none"/>
<path d="M1571 414 L1569 413 L1567 416 L1567 431 L1569 434 L1571 432" stroke="#ff00ff" stroke-width="1" fill="none"/>
<path d="M1594.4 414 L1592.4 413 L1590.4 416 L1590.4 431 L1592.4 434 L1594.4 432" stroke="#ff00ff" stroke-width="1" fill="none"/>
<line x1="1403.3" y1="656.5" x2="1600" y2="656.5" stroke="#00ff00" stroke-width="1" shape-rendering="crispEdges"/>
<line x1="1415.5" y1="609" x2="1415.5" y2="662" stroke="#00ff00" stroke-width="1" shape-rendering="crispEdges"/>
<line x1="1463.6" y1="609" x2="1463.6" y2="662" stroke="#00ff00" stroke-width="1" shape-rendering="crispEdges"/>
<line x1="1411.5" y1="660" x2="1419.5" y2="653" stroke="#00ff00" stroke-width="2"/>
<line x1="1459.6" y1="660" x2="1467.6" y2="653" stroke="#00ff00" stroke-width="2"/>
<g fill="none" stroke="#ffffff" stroke-width="1.1" stroke-linejoin="round"><path transform="translate(1423.8,632.9) scale(7.947,18.100)" d="M0.12 0.24 Q0.15 0 0.5 0 Q0.88 0 0.88 0.27 Q0.88 0.45 0.5 0.65 L0.1 1 L0.92 1" vector-effect="non-scaling-stroke"/><path transform="translate(1433.7,632.9) scale(7.947,18.100)" d="M0.5 0 Q0.1 0 0.1 0.3 L0.1 0.7 Q0.1 1 0.5 1 Q0.9 1 0.9 0.7 L0.9 0.3 Q0.9 0 0.5 0 Z" vector-effect="non-scaling-stroke"/><path transform="translate(1443.7,632.9) scale(7.947,18.100)" d="M0.5 0 Q0.1 0 0.1 0.3 L0.1 0.7 Q0.1 1 0.5 1 Q0.9 1 0.9 0.7 L0.9 0.3 Q0.9 0 0.5 0 Z" vector-effect="non-scaling-stroke"/></g>
<g fill="none" stroke="#ffffff" stroke-width="1.1" stroke-linejoin="round"><path transform="translate(1575.5,632.9) scale(7.867,18.100)" d="M0.22 0.2 L0.55 0 L0.55 1" vector-effect="non-scaling-stroke"/><path transform="translate(1585.3,632.9) scale(7.867,18.100)" d="M0.22 0.2 L0.55 0 L0.55 1" vector-effect="non-scaling-stroke"/><path transform="translate(1595.2,632.9) scale(7.867,18.100)" d="M0.5 0 Q0.1 0 0.1 0.3 L0.1 0.7 Q0.1 1 0.5 1 Q0.9 1 0.9 0.7 L0.9 0.3 Q0.9 0 0.5 0 Z" vector-effect="non-scaling-stroke"/></g>
<g fill="none" stroke="#ffffff" stroke-width="1.1" stroke-linejoin="round"><path transform="translate(1183.9,749.2) scale(7.560,14.600)" d="M0.9 0.2 Q0.8 0 0.5 0 Q0.1 0 0.1 0.5 Q0.1 1 0.5 1 Q0.9 1 0.9 0.62 L0.9 0.52 L0.55 0.52" vector-effect="non-scaling-stroke"/><path transform="translate(1193.4,749.2) scale(7.560,14.600)" d="M0.1 0 L0.1 1 L0.6 1 Q0.92 1 0.92 0.73 Q0.92 0.47 0.6 0.47 L0.1 0.47 M0.6 0.47 Q0.86 0.47 0.86 0.23 Q0.86 0 0.6 0 L0.1 0" vector-effect="non-scaling-stroke"/><path transform="translate(1202.8,749.2) scale(7.560,14.600)" d="M0.1 0 L0.9 0 L0.1 1 L0.9 1" vector-effect="non-scaling-stroke"/><path transform="translate(1212.3,749.2) scale(7.560,14.600)" d="M0.12 0.24 Q0.15 0 0.5 0 Q0.88 0 0.88 0.27 Q0.88 0.45 0.5 0.65 L0.1 1 L0.92 1" vector-effect="non-scaling-stroke"/></g>
<text x="1141.5" y="808.9" font-size="19.2" fill="#ffffff" textLength="122.4" lengthAdjust="spacingAndGlyphs" font-family="Liberation Sans" font-weight="300">四层板面～大屋面板面</text>
<g fill="none" stroke="#ffffff" stroke-width="1.1" stroke-linejoin="round"><path transform="translate(1185.7,844.7) scale(6.940,14.600)" d="M0.5 0.47 Q0.12 0.47 0.12 0.24 Q0.12 0 0.5 0 Q0.88 0 0.88 0.24 Q0.88 0.47 0.5 0.47 Q0.08 0.47 0.08 0.74 Q0.08 1 0.5 1 Q0.92 1 0.92 0.74 Q0.92 0.47 0.5 0.47" vector-effect="non-scaling-stroke"/><path transform="translate(1194.3,844.7) scale(6.940,14.600)" d="M0.5 0 L0.5 1 M0.3 0 L0.7 0 M0.3 1 L0.7 1 M0.5 0.22 Q0.08 0.22 0.08 0.5 Q0.08 0.78 0.5 0.78 Q0.92 0.78 0.92 0.5 Q0.92 0.22 0.5 0.22" vector-effect="non-scaling-stroke"/><path transform="translate(1203,844.7) scale(6.940,14.600)" d="M0.22 0.2 L0.55 0 L0.55 1" vector-effect="non-scaling-stroke"/><path transform="translate(1211.7,844.7) scale(6.940,14.600)" d="M0.12 0.24 Q0.15 0 0.5 0 Q0.88 0 0.88 0.27 Q0.88 0.45 0.5 0.65 L0.1 1 L0.92 1" vector-effect="non-scaling-stroke"/></g>
<g fill="none" stroke="#ffffff" stroke-width="1.1" stroke-linejoin="round"><path transform="translate(1174,890.7) scale(7.733,15.500)" d="M0.5 0 L0.5 1 M0.3 0 L0.7 0 M0.3 1 L0.7 1 M0.5 0.22 Q0.08 0.22 0.08 0.5 Q0.08 0.78 0.5 0.78 Q0.92 0.78 0.92 0.5 Q0.92 0.22 0.5 0.22" vector-effect="non-scaling-stroke"/><path transform="translate(1183.6,890.7) scale(7.733,15.500)" d="M0.85 0.12 Q0.7 0 0.5 0 Q0.1 0 0.1 0.6 Q0.1 1 0.5 1 Q0.9 1 0.9 0.68 Q0.9 0.38 0.5 0.38 Q0.1 0.38 0.1 0.65" vector-effect="non-scaling-stroke"/><path transform="translate(1193.3,890.7) scale(7.733,15.500)" d="M0.68 0.38 Q0.5 0.28 0.38 0.45 Q0.3 0.64 0.45 0.7 Q0.62 0.72 0.68 0.38 L0.72 0.72 Q0.92 0.72 0.94 0.5 Q0.94 0.02 0.5 0.02 Q0.06 0.02 0.06 0.5 Q0.06 0.98 0.5 0.98 Q0.72 0.98 0.85 0.88" vector-effect="non-scaling-stroke"/><path transform="translate(1203,890.7) scale(7.733,15.500)" d="M0.12 0.24 Q0.15 0 0.5 0 Q0.88 0 0.88 0.27 Q0.88 0.45 0.5 0.65 L0.1 1 L0.92 1" vector-effect="non-scaling-stroke"/><path transform="translate(1212.6,890.7) scale(7.733,15.500)" d="M0.5 0 Q0.1 0 0.1 0.3 L0.1 0.7 Q0.1 1 0.5 1 Q0.9 1 0.9 0.7 L0.9 0.3 Q0.9 0 0.5 0 Z" vector-effect="non-scaling-stroke"/><path transform="translate(1222.3,890.7) scale(7.733,15.500)" d="M0.5 0 Q0.1 0 0.1 0.3 L0.1 0.7 Q0.1 1 0.5 1 Q0.9 1 0.9 0.7 L0.9 0.3 Q0.9 0 0.5 0 Z" vector-effect="non-scaling-stroke"/></g>
<g fill="none" stroke="#ffffff" stroke-width="1.1" stroke-linejoin="round"><path transform="translate(801.9,753.3) scale(7.200,10.100)" d="M0.5 0 Q0.1 0 0.1 0.3 L0.1 0.7 Q0.1 1 0.5 1 Q0.9 1 0.9 0.7 L0.9 0.3 Q0.9 0 0.5 0 Z" vector-effect="non-scaling-stroke"/></g>
<text x="800" y="808.8" font-size="19.5" fill="#ffffff" textLength="49" lengthAdjust="spacingAndGlyphs" font-family="Liberation Sans" font-weight="300">屋面板面</text>
<g fill="none" stroke="#ffffff" stroke-width="1.1" stroke-linejoin="round"><path transform="translate(799.9,891.5) scale(6.800,14.100)" d="M0.5 0 Q0.1 0 0.1 0.3 L0.1 0.7 Q0.1 1 0.5 1 Q0.9 1 0.9 0.7 L0.9 0.3 Q0.9 0 0.5 0 Z" vector-effect="non-scaling-stroke"/><path transform="translate(808.4,891.5) scale(6.800,14.100)" d="M0.5 0 Q0.1 0 0.1 0.3 L0.1 0.7 Q0.1 1 0.5 1 Q0.9 1 0.9 0.7 L0.9 0.3 Q0.9 0 0.5 0 Z" vector-effect="non-scaling-stroke"/></g>
<g fill="none" stroke="#ffffff" stroke-width="1.1" stroke-linejoin="round"><path transform="translate(1597,750) scale(8.000,13.800)" d="M0.9 0.2 Q0.8 0 0.5 0 Q0.1 0 0.1 0.5 Q0.1 1 0.5 1 Q0.9 1 0.9 0.62 L0.9 0.52 L0.55 0.52" vector-effect="non-scaling-stroke"/></g>
<text x="1556" y="808.6" font-size="17.4" fill="#ffffff" textLength="52" lengthAdjust="spacingAndGlyphs" font-family="Liberation Sans" font-weight="300">四层板面</text>
<g fill="none" stroke="#ffffff" stroke-width="1.1" stroke-linejoin="round"><path transform="translate(1596.8,845) scale(6.400,14.300)" d="M0.12 0.15 Q0.25 0 0.5 0 Q0.88 0 0.88 0.25 Q0.88 0.47 0.45 0.47 Q0.9 0.47 0.9 0.74 Q0.9 1 0.5 1 Q0.2 1 0.1 0.85" vector-effect="non-scaling-stroke"/></g>
<g fill="none" stroke="#ffffff" stroke-width="1.1" stroke-linejoin="round"><path transform="translate(1589.9,890.7) scale(8.480,15.500)" d="M0.5 0 L0.5 1 M0.3 0 L0.7 0 M0.3 1 L0.7 1 M0.5 0.22 Q0.08 0.22 0.08 0.5 Q0.08 0.78 0.5 0.78 Q0.92 0.78 0.92 0.5 Q0.92 0.22 0.5 0.22" vector-effect="non-scaling-stroke"/><path transform="translate(1600.5,890.7) scale(8.480,15.500)" d="M0.5 0.47 Q0.12 0.47 0.12 0.24 Q0.12 0 0.5 0 Q0.88 0 0.88 0.24 Q0.88 0.47 0.5 0.47 Q0.08 0.47 0.08 0.74 Q0.08 1 0.5 1 Q0.92 1 0.92 0.74 Q0.92 0.47 0.5 0.47" vector-effect="non-scaling-stroke"/></g>
<path d="M1197 967.1 L1261 967.1 Q1263 967.1 1263 970 L1263 984 Q1263 986.6 1260 986.6 L1197 986.6 Q1195 986.6 1195 984 L1195 970 Q1195 967.1 1197 967.1" stroke="#ff0000" stroke-width="1.1" fill="none"/>
<line x1="1200.2" y1="967" x2="1200.2" y2="1040" stroke="#ff0000" stroke-width="1" shape-rendering="crispEdges"/>
<line x1="1219.4" y1="967" x2="1219.4" y2="1040" stroke="#ff0000" stroke-width="1" shape-rendering="crispEdges"/>
<path d="M1234.5 963 L1236 961 L1237.5 963 L1237.5 980 Q1236 982 1234.5 980 L1234.5 976" stroke="#ff00ff" stroke-width="1" fill="none"/>
<line x1="1257" y1="976" x2="1262" y2="981" stroke="#ff0000" stroke-width="0.8"/>
<line x1="1258" y1="982" x2="1255" y2="985" stroke="#ff0000" stroke-width="0.8"/>
<line x1="1263" y1="977.2" x2="1346" y2="977.2" stroke="#ffffff" stroke-width="1" shape-rendering="crispEdges"/>
<g fill="none" stroke="#ffffff" stroke-width="1.1" stroke-linejoin="round"><path transform="translate(1269.7,958) scale(7.667,15.750)" d="M0.5 0 L0.5 1 M0.3 0 L0.7 0 M0.3 1 L0.7 1 M0.5 0.22 Q0.08 0.22 0.08 0.5 Q0.08 0.78 0.5 0.78 Q0.92 0.78 0.92 0.5 Q0.92 0.22 0.5 0.22" vector-effect="non-scaling-stroke"/><path transform="translate(1279.3,958) scale(7.667,15.750)" d="M0.5 0.47 Q0.12 0.47 0.12 0.24 Q0.12 0 0.5 0 Q0.88 0 0.88 0.24 Q0.88 0.47 0.5 0.47 Q0.08 0.47 0.08 0.74 Q0.08 1 0.5 1 Q0.92 1 0.92 0.74 Q0.92 0.47 0.5 0.47" vector-effect="non-scaling-stroke"/><path transform="translate(1288.9,958) scale(7.667,15.750)" d="M0.68 0.38 Q0.5 0.28 0.38 0.45 Q0.3 0.64 0.45 0.7 Q0.62 0.72 0.68 0.38 L0.72 0.72 Q0.92 0.72 0.94 0.5 Q0.94 0.02 0.5 0.02 Q0.06 0.02 0.06 0.5 Q0.06 0.98 0.5 0.98 Q0.72 0.98 0.85 0.88" vector-effect="non-scaling-stroke"/><path transform="translate(1298.5,958) scale(7.667,15.750)" d="M0.12 0.24 Q0.15 0 0.5 0 Q0.88 0 0.88 0.27 Q0.88 0.45 0.5 0.65 L0.1 1 L0.92 1" vector-effect="non-scaling-stroke"/><path transform="translate(1308,958) scale(7.667,15.750)" d="M0.5 0 Q0.1 0 0.1 0.3 L0.1 0.7 Q0.1 1 0.5 1 Q0.9 1 0.9 0.7 L0.9 0.3 Q0.9 0 0.5 0 Z" vector-effect="non-scaling-stroke"/><path transform="translate(1317.6,958) scale(7.667,15.750)" d="M0.5 0 Q0.1 0 0.1 0.3 L0.1 0.7 Q0.1 1 0.5 1 Q0.9 1 0.9 0.7 L0.9 0.3 Q0.9 0 0.5 0 Z" vector-effect="non-scaling-stroke"/></g>
<text x="1140" y="1025.2" font-size="21.1" fill="#ffffff" textLength="48.8" lengthAdjust="spacingAndGlyphs" font-family="Liberation Sans" font-weight="300">墙身钢筋</text>
<line x1="1138.8" y1="1030.2" x2="1220" y2="1030.2" stroke="#ffffff" stroke-width="1" shape-rendering="crispEdges"/>
<path d="M1201 1018.5 L1207 1018.5 M1214 1018.5 L1217 1018.5 Q1220 1020.5 1217 1022.5 L1201 1022.5 Q1200.5 1020.5 1201 1018.5" stroke="#ff00ff" stroke-width="1" fill="none"/>
<path d="M1205 1040 L1207 1035 L1209 1040" stroke="#ffffff" stroke-width="0.8" fill="none"/>
<text x="1554.7" y="1024.1" font-size="20.6" fill="#ffffff" textLength="53.3" lengthAdjust="spacingAndGlyphs" font-family="Liberation Sans" font-weight="300">墙身钢筋</text>
<line x1="1554" y1="1029.6" x2="1600" y2="1029.6" stroke="#ffffff" stroke-width="1" shape-rendering="crispEdges"/>
<path d="M804 993 L814.5 993 L814.5 1040 M804 997.3 L814.5 997.3 M804 1012.5 L814.5 1012.5" stroke="#ff0000" stroke-width="1" fill="none"/>
<path d="M804 1021 L818 1021 L820 1018 L818 1015 L814.5 1015 M804 1017 L807 1017" stroke="#ff00ff" stroke-width="1" fill="none"/>
<path d="M804 1037 L818 1037 L820 1034 L818 1031 L814.5 1031 M804 1033 L807 1033" stroke="#ff00ff" stroke-width="1" fill="none"/>
<polygon points="1209.5,563.8 1230.7,551.2 1232,557.5 1386.5,548.3 1233.5,567 1233,573" fill="#fc3c3c"/>
<line x1="1247" y1="578.4" x2="1307" y2="578.4" stroke="#ffffff" stroke-width="1" shape-rendering="crispEdges"/>
<line x1="1277.4" y1="548" x2="1277.4" y2="606.2" stroke="#ffffff" stroke-width="1" shape-rendering="crispEdges"/>
<rect x="1272.4" y="573.4" width="10" height="10" fill="none" stroke="#ffffff" stroke-width="1" rx="0"/>
</g>
<line x1="759" y1="889" x2="798" y2="889" stroke="#ffffff" stroke-width="1" shape-rendering="crispEdges"/>
<line x1="789.4" y1="859.6" x2="789.4" y2="918.4" stroke="#ffffff" stroke-width="1" shape-rendering="crispEdges"/>
<rect x="784.4" y="884" width="10" height="10" fill="none" stroke="#ffffff" stroke-width="1" rx="0"/>
</svg>
<div id="arrowtxt" class="abs">自动定位到错误处</div>
<div id="popup" class="abs">
 <div id="phead" class="abs"><span>详情描述</span><svg width="16" height="16" style="position:absolute;left:303px;top:7px"><path d="M1.5 1.5 L14.5 14.5 M14.5 1.5 L1.5 14.5" stroke="#7a7a7a" stroke-width="1.3"/></svg></div>
 <div id="pline" class="abs"></div>
 <div id="pbody" class="abs">大样图与放样图不一致，大样图编号：GBZ2</div>
</div>
<div class="abs item" style="left:1613px;top:116px;color:#111;font-size:15px">1</div>
<div class="abs item" style="left:1632px;top:117.5px;color:#111;font-size:13.6px">大样图与放样图不一致</div>
<div id="badge" class="abs">2</div>
<div id="redbox" class="abs"></div>
<div id="row1" class="abs"></div>
<div class="abs item" style="left:1637px;top:169.5px;color:#3b86ee;font-size:12.8px">第1处</div>
<div class="abs item" style="left:1637px;top:199.5px;color:#111;font-size:12.8px">第2处</div>
<svg class="abs" style="left:1892px;top:167px" width="16" height="20"><path d="M8 17.5 C4.5 13 2.5 10 2.5 7.5 A5.5 5.5 0 0 1 13.5 7.5 C13.5 10 11.5 13 8 17.5 Z" fill="none" stroke="#2a7ef0" stroke-width="1.4"/><circle cx="8" cy="7.3" r="2" fill="none" stroke="#2a7ef0" stroke-width="1.4"/></svg>
<svg class="abs" style="left:1892px;top:197px" width="16" height="20"><path d="M8 17.5 C4.5 13 2.5 10 2.5 7.5 A5.5 5.5 0 0 1 13.5 7.5 C13.5 10 11.5 13 8 17.5 Z" fill="none" stroke="#111" stroke-width="1.4"/><circle cx="8" cy="7.3" r="2" fill="none" stroke="#111" stroke-width="1.4"/></svg>
</body></html>
